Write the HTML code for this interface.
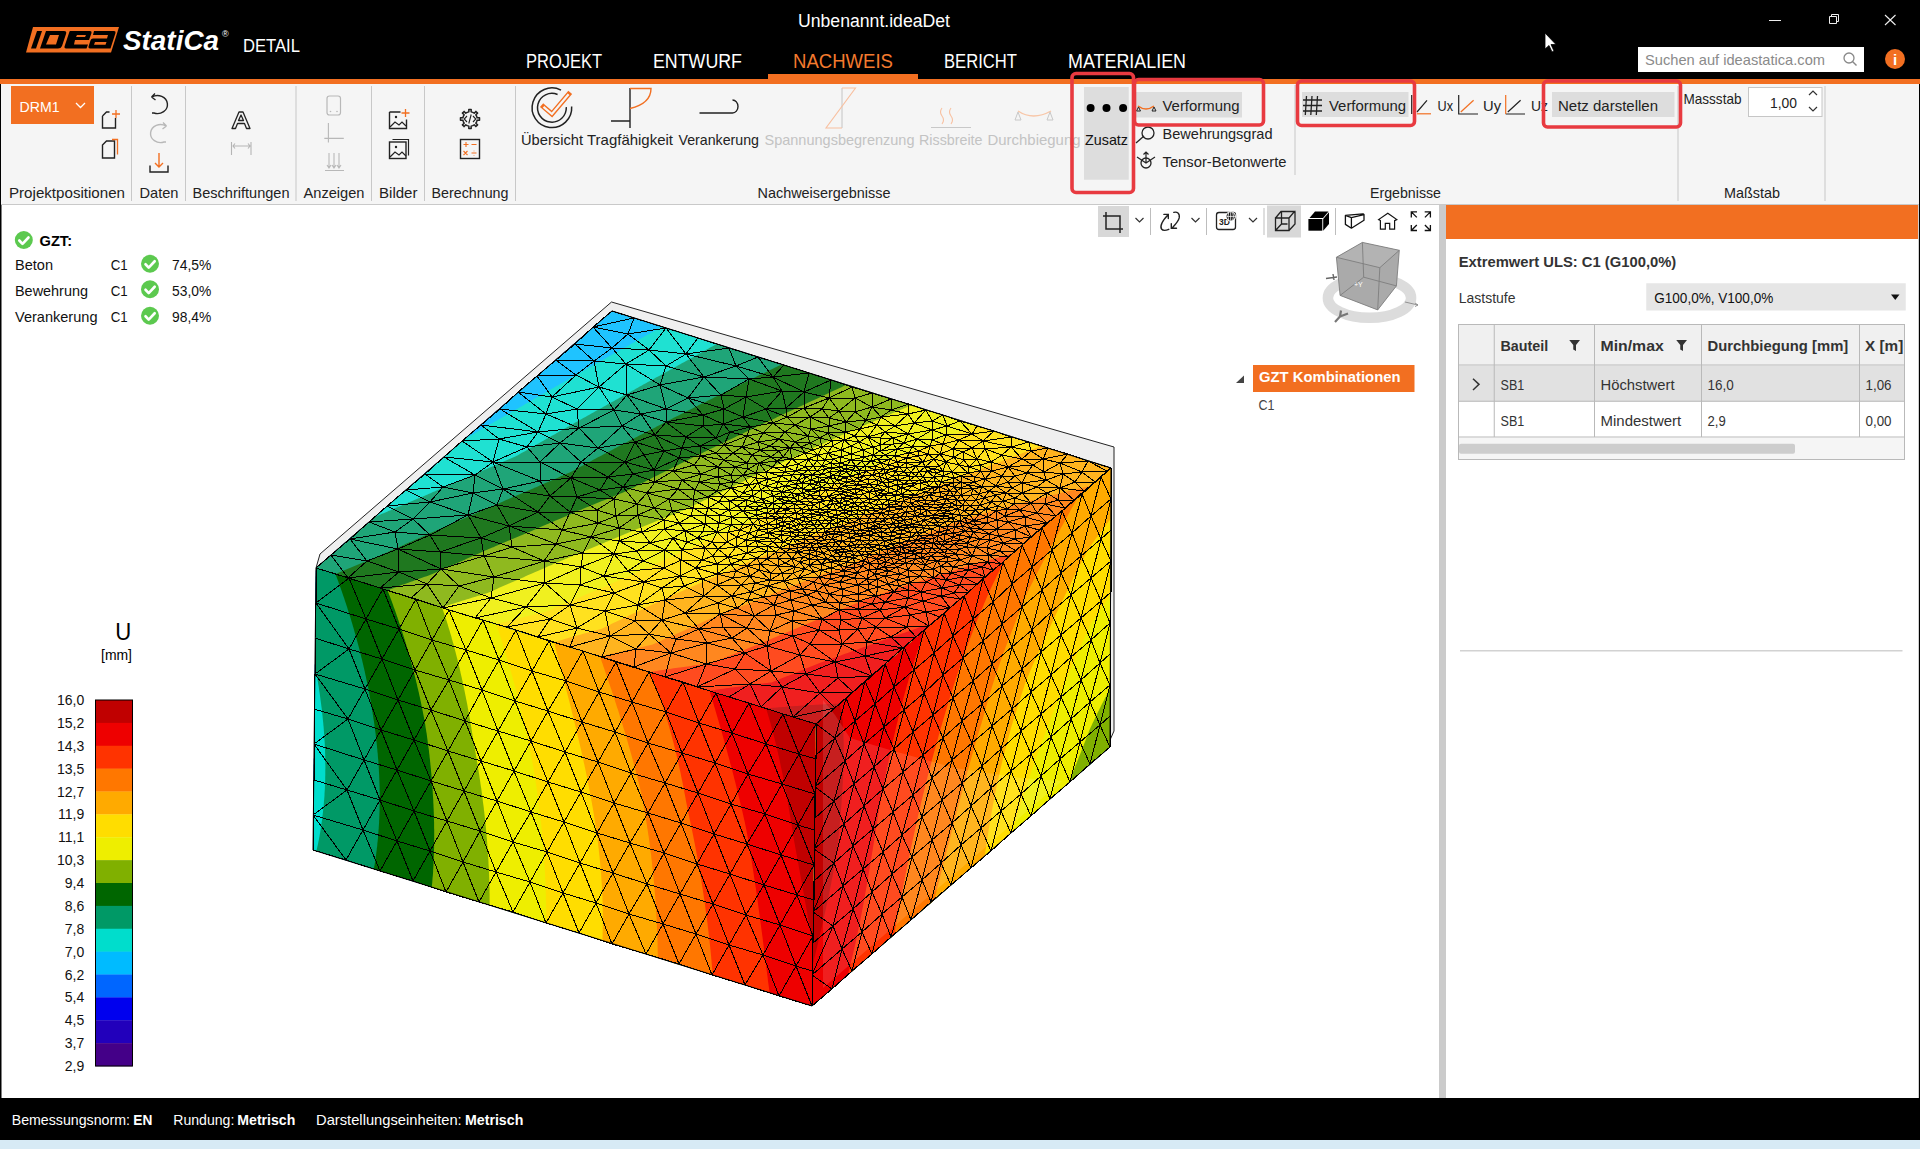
<!DOCTYPE html>
<html><head><meta charset="utf-8"><title>IDEA StatiCa Detail</title>
<style>html,body{margin:0;padding:0;background:#fff;overflow:hidden}svg{display:block}text{font-family:"Liberation Sans",sans-serif}</style>
</head><body>
<svg width="1920" height="1149" viewBox="0 0 1920 1149" font-family="Liberation Sans, sans-serif">
<rect x="0" y="0" width="1920" height="79" fill="#000"/>
<rect x="0" y="79" width="1920" height="5" fill="#f26f21"/>
<path d="M33,27 L119,27 L111,52.5 L26,52.5 Z" fill="#f26f21"/>
<g fill="#000"><path d="M37,31 L42,31 L36,48.5 L31,48.5 Z"/><path d="M46,31 L64,31 Q67,31 66,34 L62,46 Q61,48.5 58,48.5 L40,48.5 Z M50,35 L46,44.5 L56,44.5 L59,35 Z"/><path d="M70,31 L90,31 Q92,31 91.5,33 L89,40 L75,40 L74,44.5 L88,44.5 L86.5,48.5 L66,48.5 Q64,48.5 64.5,46.5 L69,33 Q69.5,31 70,31 Z M77,35 L76,37 L85,37 L86,35 Z"/><path d="M94,31 L114,31 Q116,31 115.5,33 L110.5,48.5 L90,48.5 Q88,48.5 88.5,46.5 L90.5,40.5 Q91,38.5 93,38.5 L107,38.5 L108,35 L93,35 Z M95,42 L94,44.8 L105.5,44.8 L106.5,42 Z"/></g>
<text x="123" y="50" font-size="27" font-weight="700" fill="#fff" textLength="96" lengthAdjust="spacingAndGlyphs" font-style="italic">StatiCa</text>
<text x="222" y="37" font-size="9" fill="#fff" >®</text>
<text x="243" y="51.5" font-size="18.5" fill="#fff" textLength="57" lengthAdjust="spacingAndGlyphs" >DETAIL</text>
<text x="798" y="26.5" font-size="18" fill="#fff" textLength="152" lengthAdjust="spacingAndGlyphs" >Unbenannt.ideaDet</text>
<text x="526" y="67.5" font-size="20" fill="#fff" textLength="76" lengthAdjust="spacingAndGlyphs" >PROJEKT</text>
<text x="653" y="67.5" font-size="20" fill="#fff" textLength="89" lengthAdjust="spacingAndGlyphs" >ENTWURF</text>
<text x="793" y="67.5" font-size="20" fill="#f47a2e" textLength="100" lengthAdjust="spacingAndGlyphs" >NACHWEIS</text>
<text x="944" y="67.5" font-size="20" fill="#fff" textLength="73" lengthAdjust="spacingAndGlyphs" >BERICHT</text>
<text x="1068" y="67.5" font-size="20" fill="#fff" textLength="118" lengthAdjust="spacingAndGlyphs" >MATERIALIEN</text>
<rect x="768" y="74" width="150" height="5" fill="#f26f21"/>
<path d="M1769,20.5 h12" stroke="#eee" stroke-width="1"/>
<path d="M1829.5,16.5 h7 v7 h-7 z M1831.5,16.5 v-2 h7 v7 h-2" stroke="#eee" stroke-width="1" fill="none"/>
<path d="M1885,15 l10.5,10 M1895.5,15 l-10.5,10" stroke="#eee" stroke-width="1.1"/>
<path d="M1545,33 L1545,49 L1549,45.5 L1552,52 L1554,51 L1551,44.5 L1556,44.5 Z" fill="#fff" stroke="#000" stroke-width="0.8"/>
<rect x="1638" y="47" width="226" height="25" fill="#fff"/>
<text x="1645" y="65" font-size="15" fill="#8a8a8a" textLength="180" lengthAdjust="spacingAndGlyphs" >Suchen auf ideastatica.com</text>
<circle cx="1849" cy="58" r="5" stroke="#888" stroke-width="1.3" fill="none"/><path d="M1852.5,61.5 l4,4" stroke="#888" stroke-width="1.4"/>
<circle cx="1895" cy="59" r="10" fill="#f26f21"/>
<text x="1895" y="65" font-size="15" font-weight="700" fill="#fff" text-anchor="middle">i</text>
<rect x="0" y="84" width="1920" height="120" fill="#f5f5f5"/>
<rect x="0" y="204" width="1920" height="1" fill="#c9c9c9"/>
<rect x="131.0" y="86" width="1" height="115" fill="#c8c8c8"/>
<rect x="185.0" y="86" width="1" height="115" fill="#c8c8c8"/>
<rect x="295.5" y="86" width="1" height="115" fill="#c8c8c8"/>
<rect x="371.0" y="86" width="1" height="115" fill="#c8c8c8"/>
<rect x="424.0" y="86" width="1" height="115" fill="#c8c8c8"/>
<rect x="515.0" y="86" width="1" height="115" fill="#c8c8c8"/>
<rect x="1294.5" y="85" width="1" height="90" fill="#c8c8c8"/>
<rect x="1677.5" y="86" width="1" height="115" fill="#c8c8c8"/>
<rect x="1824.5" y="86" width="1" height="115" fill="#c8c8c8"/>
<rect x="11" y="86" width="83" height="38" fill="#f26f21"/>
<text x="19.5" y="111.5" font-size="15" fill="#fff" textLength="40" lengthAdjust="spacingAndGlyphs" >DRM1</text>
<path d="M76,103 l4.5,4.5 l4.5,-4.5" stroke="#fff" stroke-width="1.3" fill="none"/>
<path d="M102.5,116 l4,-4 h3 M102.5,116 v12 h13 v-10" stroke="#222" stroke-width="1.4" fill="none"/>
<path d="M116,110 v8 M112,114 h8" stroke="#f26f21" stroke-width="1.3"/>
<path d="M102.5,145 l4,-4 h8 v17 h-12 z" stroke="#222" stroke-width="1.4" fill="none"/>
<path d="M112,139.5 h5.5 v15" stroke="#f26f21" stroke-width="1.3" fill="none"/>
<path d="M152,97 a10,9 0 1 1 2,16 h-2 M151.5,97 l3.5,-3.5 M151.5,97 l4,3" stroke="#222" stroke-width="1.4" fill="none"/>
<path d="M166,126 a10,9 0 1 0 -2,16 h2 M166.5,126 l-3.5,-3.5 M166.5,126 l-4,3" stroke="#b8b8b8" stroke-width="1.4" fill="none"/>
<path d="M159,153 v14 M155,163 l4,4 l4,-4" stroke="#f26f21" stroke-width="1.4" fill="none"/>
<path d="M150,165.5 v6.5 h18 v-6.5" stroke="#222" stroke-width="1.4" fill="none"/>
<path d="M232,128.5 L239,112 h4 L250,128.5 h-3.5 l-2,-5 h-7 l-2,5 Z M238.5,120.5 h5 l-2.5,-5.5 z" stroke="#222" stroke-width="1.3" fill="none" stroke-linejoin="round"/>
<path d="M231.5,142 v13 M251,142 v13 M233,146 h17 M235,143.5 l-2,2.5 l2,2.5 M248,143.5 l2,2.5 l-2,2.5" stroke="#b5b5b5" stroke-width="1.1" fill="none"/>
<rect x="327" y="96" width="13.5" height="19" rx="2.5" stroke="#b8b8b8" stroke-width="1.2" fill="none"/>
<path d="M328.4,123 v19.4 M324.3,138.4 h19.5" stroke="#b8b8b8" stroke-width="1.1"/><circle cx="330.5" cy="111.5" r="0.8" fill="#b8b8b8"/><circle cx="337" cy="111.5" r="0.8" fill="#b8b8b8"/>
<path d="M329,153 v15 M334,153 v15 M339,153 v15 M325,170.5 h19 M327,165 l2,3 l2,-3 M332,165 l2,3 l2,-3 M337,165 l2,3 l2,-3" stroke="#b8b8b8" stroke-width="1.1" fill="none"/>
<path d="M389.5,112 h11 M389.5,112 v16.5 h17 v-9" stroke="#222" stroke-width="1.4" fill="none"/><path d="M390,127 l5,-5 l4,3 l3,-3 l4,4" stroke="#222" stroke-width="1.2" fill="none"/><circle cx="396" cy="117" r="1.2" fill="#222"/>
<path d="M405.5,109 v8 M401.5,113 h8" stroke="#f26f21" stroke-width="1.3"/>
<rect x="389.5" y="142" width="16.5" height="16.5" stroke="#222" stroke-width="1.4" fill="none"/><path d="M392.5,139.5 h16 v16" stroke="#222" stroke-width="1.2" fill="none"/><path d="M390,157 l5,-5 l4,3 l3,-3 l4,4" stroke="#222" stroke-width="1.2" fill="none"/><circle cx="396" cy="147" r="1.2" fill="#222"/>
<path d="M476.65,116.24 L477.11,117.87 L479.52,117.80 L479.52,120.20 L477.11,120.13 L476.65,121.76 L475.82,123.23 L477.59,124.88 L475.88,126.59 L474.23,124.82 L472.76,125.65 L471.13,126.11 L471.20,128.52 L468.80,128.52 L468.87,126.11 L467.24,125.65 L465.77,124.82 L464.12,126.59 L462.41,124.88 L464.18,123.23 L463.35,121.76 L462.89,120.13 L460.48,120.20 L460.48,117.80 L462.89,117.87 L463.35,116.24 L464.18,114.77 L462.41,113.12 L464.12,111.41 L465.77,113.18 L467.24,112.35 L468.87,111.89 L468.80,109.48 L471.20,109.48 L471.13,111.89 L472.76,112.35 L474.23,113.18 L475.88,111.41 L477.59,113.12 L475.82,114.77Z" stroke="#222" stroke-width="1.5" fill="none" stroke-linejoin="round"/>
<path d="M467,116 l-2.8,3 l2.8,3 M473,116 l2.8,3 l-2.8,3 M471.2,114.5 l-2.4,9" stroke="#222" stroke-width="1.1" fill="none"/>
<rect x="460.5" y="139.5" width="19" height="19" stroke="#222" stroke-width="1.4" fill="none"/>
<path d="M463.5,144.5 h5 M466,142 v5 M471.5,144.5 h5 M463.5,151 l4,4 M467.5,151 l-4,4 M471.5,153 h5 M474,150.7 v0.6 M474,155 v0.6" stroke="#f26f21" stroke-width="1.1"/>
<text x="9" y="197.5" font-size="15" fill="#222" textLength="116" lengthAdjust="spacingAndGlyphs" >Projektpositionen</text>
<text x="139.5" y="197.5" font-size="15" fill="#222" textLength="39" lengthAdjust="spacingAndGlyphs" >Daten</text>
<text x="192.5" y="197.5" font-size="15" fill="#222" textLength="97" lengthAdjust="spacingAndGlyphs" >Beschriftungen</text>
<text x="303.5" y="197.5" font-size="15" fill="#222" textLength="61" lengthAdjust="spacingAndGlyphs" >Anzeigen</text>
<text x="379" y="197.5" font-size="15" fill="#222" textLength="38.5" lengthAdjust="spacingAndGlyphs" >Bilder</text>
<text x="431.5" y="197.5" font-size="15" fill="#222" textLength="77" lengthAdjust="spacingAndGlyphs" >Berechnung</text>
<text x="757.5" y="197.5" font-size="15" fill="#222" textLength="133" lengthAdjust="spacingAndGlyphs" >Nachweisergebnisse</text>
<text x="1370" y="197.5" font-size="15" fill="#222" textLength="71" lengthAdjust="spacingAndGlyphs" >Ergebnisse</text>
<text x="1724" y="197.5" font-size="15" fill="#222" textLength="56" lengthAdjust="spacingAndGlyphs" >Maßstab</text>
<path d="M571.66,106.47 A19.8,19.8 0 1 1 561.0,90.17 M566.29,107.12 A14.4,14.4 0 1 1 557.57,94.52" stroke="#222" stroke-width="1.5" fill="none"/>
<path d="M543.5,106.8 L551.9,114 L568.6,94.2" stroke="#f26f21" stroke-width="5" fill="none" stroke-linejoin="miter" stroke-linecap="square"/><path d="M543.5,106.8 L551.9,114 L568.6,94.2" stroke="#f5f5f5" stroke-width="2.2" fill="none" stroke-linejoin="miter"/>
<path d="M611,121 h19 M630,88 v40" stroke="#222" stroke-width="1.4" fill="none"/>
<path d="M630,88.5 h21 q0,15 -21,20" stroke="#f26f21" stroke-width="1.4" fill="none"/>
<path d="M699.5,113 h33 a5.5,6.5 0 0 0 0,-13" stroke="#222" stroke-width="1.4" fill="none"/>
<text x="521" y="145" font-size="15" fill="#222" textLength="62" lengthAdjust="spacingAndGlyphs" >Übersicht</text>
<text x="587" y="145" font-size="15" fill="#222" textLength="86" lengthAdjust="spacingAndGlyphs" >Tragfähigkeit</text>
<text x="678.5" y="145" font-size="15" fill="#222" textLength="80.5" lengthAdjust="spacingAndGlyphs" >Verankerung</text>
<path d="M842,88 v40" stroke="#c8c8c8" stroke-width="1.1" fill="none"/><path d="M842,88 h13.5 L826,128 h16" stroke="#f8c0a0" stroke-width="1.1" fill="none"/>
<path d="M931,127.5 h40" stroke="#c8c8c8" stroke-width="1.1" fill="none"/><path d="M942,108 q-3,4 0,8 t0,8 M951,108 q-3,4 0,8 t0,8" stroke="#f8c0a0" stroke-width="1.1" fill="none"/>
<path d="M1018,111 q15,10 33,0" stroke="#f8c6a7" stroke-width="1.4" fill="none"/><path d="M1018,112 l-3,8 h6 z M1050,112 l-3,8 h6 z" stroke="#c8c8c8" stroke-width="1" fill="none"/>
<text x="764.5" y="145" font-size="15" fill="#c3c3c3" textLength="150" lengthAdjust="spacingAndGlyphs" >Spannungsbegrenzung</text>
<text x="919" y="145" font-size="15" fill="#c3c3c3" textLength="63.5" lengthAdjust="spacingAndGlyphs" >Rissbreite</text>
<text x="987.5" y="145" font-size="15" fill="#c3c3c3" textLength="93" lengthAdjust="spacingAndGlyphs" >Durchbiegung</text>
<rect x="1084" y="87" width="44.75" height="92.75" fill="#dddddd"/>
<circle cx="1090.6" cy="108" r="4" fill="#000"/>
<circle cx="1106.5" cy="108" r="4" fill="#000"/>
<circle cx="1123.1" cy="108" r="4" fill="#000"/>
<text x="1085" y="145" font-size="15" fill="#111" textLength="43" lengthAdjust="spacingAndGlyphs" >Zusatz</text>
<rect x="1135" y="92" width="107" height="25.5" fill="#dddddd"/>
<path d="M1138,106 q8,6 16,0" stroke="#f26f21" stroke-width="1.5" fill="none"/><path d="M1138.5,107 l-2,4 h4 z M1154,107 l-2,4 h4 z" stroke="#222" stroke-width="1" fill="none"/>
<text x="1162.5" y="111" font-size="15" fill="#222" textLength="77" lengthAdjust="spacingAndGlyphs" >Verformung</text>
<circle cx="1148" cy="133" r="6" stroke="#222" stroke-width="1.3" fill="none"/><path d="M1136,143 l8,-7" stroke="#222" stroke-width="1.3"/>
<text x="1162.5" y="138.5" font-size="15" fill="#222" textLength="110" lengthAdjust="spacingAndGlyphs" >Bewehrungsgrad</text>
<circle cx="1146" cy="163" r="5" stroke="#222" stroke-width="1.3" fill="none"/><path d="M1146,152 v11 M1137,157 l9,6 l9,-6 M1143.5,154.5 l2.5,-2.5 l2.5,2.5" stroke="#222" stroke-width="1.2" fill="none"/>
<text x="1162.5" y="166.5" font-size="15" fill="#222" textLength="124" lengthAdjust="spacingAndGlyphs" >Tensor-Betonwerte</text>
<rect x="1302" y="92" width="106.5" height="25" fill="#dddddd"/>
<path d="M1306.5,96 l-1.2,19 M1312,96 l-1.2,19 M1317.5,96 l-1.2,19 M1303,100 h19 M1303,105.5 h19 M1303,111 h19" stroke="#222" stroke-width="1.3" fill="none"/>
<text x="1329" y="111" font-size="15" fill="#222" textLength="77" lengthAdjust="spacingAndGlyphs" >Verformung</text>
<path d="M1411.7,95 v19 M1417,112 l10,-11.7" stroke="#222" stroke-width="1.2" fill="none"/><path d="M1417,113.8 h14" stroke="#f26f21" stroke-width="1.2"/>
<text x="1437.5" y="111" font-size="15" fill="#222" textLength="15.5" lengthAdjust="spacingAndGlyphs" >Ux</text>
<path d="M1458.7,95 v19 h19.3" stroke="#222" stroke-width="1.2" fill="none"/><path d="M1460.8,112 l12.8,-11.7" stroke="#f26f21" stroke-width="1.2"/>
<text x="1483" y="111" font-size="15" fill="#222" textLength="18" lengthAdjust="spacingAndGlyphs" >Uy</text>
<path d="M1505.7,114 h19.3 M1507.8,112 l12.8,-11.7" stroke="#222" stroke-width="1.2" fill="none"/><path d="M1505.7,95 v19" stroke="#f26f21" stroke-width="1.2"/>
<text x="1531" y="111" font-size="15" fill="#222" textLength="17" lengthAdjust="spacingAndGlyphs" >Uz</text>
<rect x="1552" y="92" width="122.5" height="25" fill="#dddddd"/>
<text x="1558" y="111" font-size="15" fill="#222" textLength="100" lengthAdjust="spacingAndGlyphs" >Netz darstellen</text>
<text x="1683.5" y="103.5" font-size="15" fill="#222" textLength="58" lengthAdjust="spacingAndGlyphs" >Massstab</text>
<rect x="1748.5" y="87.5" width="73.5" height="29" fill="#fff" stroke="#c6c6c6" stroke-width="1"/>
<text x="1770" y="107.5" font-size="15" fill="#222" textLength="27" lengthAdjust="spacingAndGlyphs" >1,00</text>
<path d="M1809,95 l4,-4 l4,4 M1809,107 l4,4 l4,-4" stroke="#333" stroke-width="1.2" fill="none"/>
<rect x="1072" y="73.5" width="61.5" height="119.0" rx="4" fill="none" stroke="#e83a40" stroke-width="3.6"/>
<rect x="1134.5" y="79.5" width="129.0" height="45.5" rx="4" fill="none" stroke="#e83a40" stroke-width="3.6"/>
<rect x="1297.5" y="81" width="117.0" height="44.5" rx="4" fill="none" stroke="#e83a40" stroke-width="3.6"/>
<rect x="1543.5" y="81" width="137.0" height="46" rx="4" fill="none" stroke="#e83a40" stroke-width="3.6"/>
<rect x="0" y="205" width="1439" height="893" fill="#fff"/>
<rect x="0" y="205" width="1.5" height="893" fill="#000"/>
<circle cx="23.8" cy="240" r="9" fill="#5cc94f"/><path d="M19.3,240.5 l3.2,3.4 l6,-6.4" stroke="#fff" stroke-width="2.6" fill="none" stroke-linecap="round" stroke-linejoin="round"/>
<text x="39.5" y="245.5" font-size="15" font-weight="700" fill="#000" textLength="32.5" lengthAdjust="spacingAndGlyphs" >GZT:</text>
<text x="15" y="270" font-size="15" fill="#111" textLength="38" lengthAdjust="spacingAndGlyphs" >Beton</text>
<text x="110.75" y="270" font-size="15" fill="#111" textLength="17" lengthAdjust="spacingAndGlyphs" >C1</text>
<circle cx="150" cy="263.75" r="9" fill="#5cc94f"/><path d="M145.5,264.25 l3.2,3.4 l6,-6.4" stroke="#fff" stroke-width="2.6" fill="none" stroke-linecap="round" stroke-linejoin="round"/>
<text x="172" y="270" font-size="15" fill="#111" textLength="39.25" lengthAdjust="spacingAndGlyphs" >74,5%</text>
<text x="15" y="295.5" font-size="15" fill="#111" textLength="73" lengthAdjust="spacingAndGlyphs" >Bewehrung</text>
<text x="110.75" y="295.5" font-size="15" fill="#111" textLength="17" lengthAdjust="spacingAndGlyphs" >C1</text>
<circle cx="150" cy="289.25" r="9" fill="#5cc94f"/><path d="M145.5,289.75 l3.2,3.4 l6,-6.4" stroke="#fff" stroke-width="2.6" fill="none" stroke-linecap="round" stroke-linejoin="round"/>
<text x="172" y="295.5" font-size="15" fill="#111" textLength="39.25" lengthAdjust="spacingAndGlyphs" >53,0%</text>
<text x="15" y="322" font-size="15" fill="#111" textLength="82.5" lengthAdjust="spacingAndGlyphs" >Verankerung</text>
<text x="110.75" y="322" font-size="15" fill="#111" textLength="17" lengthAdjust="spacingAndGlyphs" >C1</text>
<circle cx="150" cy="315.75" r="9" fill="#5cc94f"/><path d="M145.5,316.25 l3.2,3.4 l6,-6.4" stroke="#fff" stroke-width="2.6" fill="none" stroke-linecap="round" stroke-linejoin="round"/>
<text x="172" y="322" font-size="15" fill="#111" textLength="39.25" lengthAdjust="spacingAndGlyphs" >98,4%</text>
<text x="115.3" y="640" font-size="23" fill="#000" textLength="16" lengthAdjust="spacingAndGlyphs" >U</text>
<text x="101" y="660" font-size="14" fill="#000" textLength="31" lengthAdjust="spacingAndGlyphs" >[mm]</text>
<rect x="95.5" y="700.00" width="37" height="23.18" fill="#c00000"/>
<rect x="95.5" y="722.88" width="37" height="23.18" fill="#ee0000"/>
<rect x="95.5" y="745.75" width="37" height="23.18" fill="#ff3300"/>
<rect x="95.5" y="768.62" width="37" height="23.18" fill="#ff7700"/>
<rect x="95.5" y="791.50" width="37" height="23.18" fill="#ffaa00"/>
<rect x="95.5" y="814.38" width="37" height="23.18" fill="#ffdd00"/>
<rect x="95.5" y="837.25" width="37" height="23.18" fill="#eeee00"/>
<rect x="95.5" y="860.12" width="37" height="23.18" fill="#80b000"/>
<rect x="95.5" y="883.00" width="37" height="23.18" fill="#006600"/>
<rect x="95.5" y="905.88" width="37" height="23.18" fill="#009966"/>
<rect x="95.5" y="928.75" width="37" height="23.18" fill="#00ddcc"/>
<rect x="95.5" y="951.62" width="37" height="23.18" fill="#00bbff"/>
<rect x="95.5" y="974.50" width="37" height="23.18" fill="#0066ff"/>
<rect x="95.5" y="997.38" width="37" height="23.18" fill="#0000ee"/>
<rect x="95.5" y="1020.25" width="37" height="23.18" fill="#2200bb"/>
<rect x="95.5" y="1043.12" width="37" height="23.18" fill="#440088"/>
<rect x="95.5" y="700" width="37" height="366" fill="none" stroke="#000" stroke-width="1"/>
<text x="84.3" y="705.00" font-size="14" fill="#111" text-anchor="end" >16,0</text>
<text x="84.3" y="727.88" font-size="14" fill="#111" text-anchor="end" >15,2</text>
<text x="84.3" y="750.75" font-size="14" fill="#111" text-anchor="end" >14,3</text>
<text x="84.3" y="773.62" font-size="14" fill="#111" text-anchor="end" >13,5</text>
<text x="84.3" y="796.50" font-size="14" fill="#111" text-anchor="end" >12,7</text>
<text x="84.3" y="819.38" font-size="14" fill="#111" text-anchor="end" >11,9</text>
<text x="84.3" y="842.25" font-size="14" fill="#111" text-anchor="end" >11,1</text>
<text x="84.3" y="865.12" font-size="14" fill="#111" text-anchor="end" >10,3</text>
<text x="84.3" y="888.00" font-size="14" fill="#111" text-anchor="end" >9,4</text>
<text x="84.3" y="910.88" font-size="14" fill="#111" text-anchor="end" >8,6</text>
<text x="84.3" y="933.75" font-size="14" fill="#111" text-anchor="end" >7,8</text>
<text x="84.3" y="956.62" font-size="14" fill="#111" text-anchor="end" >7,0</text>
<text x="84.3" y="979.50" font-size="14" fill="#111" text-anchor="end" >6,2</text>
<text x="84.3" y="1002.38" font-size="14" fill="#111" text-anchor="end" >5,4</text>
<text x="84.3" y="1025.25" font-size="14" fill="#111" text-anchor="end" >4,5</text>
<text x="84.3" y="1048.12" font-size="14" fill="#111" text-anchor="end" >3,7</text>
<text x="84.3" y="1071.00" font-size="14" fill="#111" text-anchor="end" >2,9</text>
<path d="M1236,383 L1244,375.5 L1244,383 Z" fill="#444"/>
<rect x="1253" y="365" width="161.5" height="27" fill="#f26f21"/>
<text x="1259" y="382.3" font-size="15" font-weight="700" fill="#fff" textLength="141.5" lengthAdjust="spacingAndGlyphs" >GZT Kombinationen</text>
<text x="1258.5" y="409.7" font-size="15" fill="#444" textLength="16" lengthAdjust="spacingAndGlyphs" >C1</text>
<rect x="1098" y="206" width="31" height="31" fill="#d8d8d8"/>
<rect x="1267" y="205.5" width="34" height="32" fill="#d8d8d8"/>
<rect x="1150.0" y="208" width="1" height="27" fill="#bdbdbd"/>
<rect x="1206.0" y="208" width="1" height="27" fill="#bdbdbd"/>
<rect x="1263.5" y="208" width="1" height="27" fill="#bdbdbd"/>
<rect x="1335.0" y="208" width="1" height="27" fill="#bdbdbd"/>
<path d="M1106,212 v17 h17 M1103,216 h17 v17" stroke="#222" stroke-width="1.5" fill="none"/>
<path d="M1135.5,218 l4,4 l4,-4" stroke="#333" stroke-width="1.2" fill="none"/>
<path d="M1191.5,218 l4,4 l4,-4" stroke="#333" stroke-width="1.2" fill="none"/>
<path d="M1249,218 l4,4 l4,-4" stroke="#333" stroke-width="1.2" fill="none"/>
<path d="M1168.3,214.4 C1164,219 1159,225 1161.5,229 C1163,231 1166,230.5 1168.8,229.3 M1163.9,214.4 H1168.3 V218.6 M1173.8,212.4 C1177,211.5 1180,213 1179.2,217.9 C1178.5,221.5 1175,225 1171.8,228.3 M1171.3,223.6 V228.3 H1176.5" stroke="#222" stroke-width="1.4" fill="none" stroke-linecap="round"/>
<rect x="1216.5" y="212.5" width="19" height="17" rx="2.5" stroke="#222" stroke-width="1.3" fill="none"/>
<text x="1219" y="224.5" font-size="8.5" font-weight="700" fill="#222">3D</text>
<circle cx="1230.7" cy="216.4" r="5.2" fill="#fff"/><circle cx="1230.7" cy="216.4" r="4.2" fill="#111"/><path d="M1230.7,212.2 v8.4 M1226.5,216.4 h8.4 M1228.7,212.7 q-1.5,3.7 0,7.4 M1232.7,212.7 q1.5,3.7 0,7.4" stroke="#fff" stroke-width="0.8" fill="none"/>
<path d="M1275.5,218 h13.5 v12.5 h-13.5 z M1275.5,218 l5.5,-6.5 h13.5 l-5.5,6.5 M1295,211.5 v12.5 l-6,6.5 M1281.5,211.5 V224 H1287.5 M1281.5,224 L1275.5,230.5" stroke="#222" stroke-width="1.3" fill="none"/>
<path d="M1308.4,219 h13.9 v11.7 h-13.9 z" fill="#000"/><path d="M1309.5,218 l5.5,-6.6 h13.5 l-5.5,6.6 z" fill="#000"/><path d="M1323.2,230.7 v-11.8 l5.8,-6.6 v11.6 z" fill="#000"/>
<path d="M1345.4,215.4 L1363,213.8 L1364,214.6 V220.3 L1351.4,228.2 L1345.4,224.4 Z M1345.4,215.4 L1351.4,217.6 L1364,214.6 M1351.4,217.6 V228.2" stroke="#111" stroke-width="1.3" fill="none" stroke-linejoin="round"/>
<path d="M1387.8,213.2 L1378.6,219.6 L1380.4,220.6 V229.2 H1385.3 V223.3 H1389.7 V229.2 H1394.6 V220.6 L1396.8,219.6 Z" stroke="#111" stroke-width="1.2" fill="none" stroke-linejoin="miter"/>
<path d="M1411.3,217.6 V211.9 H1417 M1411.3,211.9 L1416.8,217.4 M1430.4,217.6 V211.9 H1424.7 M1430.4,211.9 L1424.9,217.4 M1411.3,225 V230.5 H1417 M1411.3,230.5 L1416.8,225 M1430.4,225 V230.5 H1424.7 M1430.4,230.5 L1424.9,225" stroke="#111" stroke-width="1.3" fill="none"/>
<ellipse cx="1369.5" cy="297.9" rx="41.6" ry="19.9" fill="none" stroke="#dcdcdc" stroke-width="10.5"/>
<path d="M1336.4,257.3 L1362.4,242.4 L1399.3,250.3 L1396.4,285.9 L1377.7,309.9 L1340.1,295.4 Z" fill="#aaaaaa"/>
<path d="M1336.4,257.3 L1362.4,242.4 L1399.3,250.3 L1379.8,267.7 Z" fill="#b3b3b3"/>
<path d="M1336.4,257.3 L1362.4,242.4 L1399.3,250.3 L1396.4,285.9 L1377.7,309.9 L1340.1,295.4 Z M1336.4,257.3 L1379.8,267.7 L1399.3,250.3 M1379.8,267.7 L1377.7,309.9 M1362.4,242.4 L1363.7,277.2 L1340.1,295.4 M1363.7,277.2 L1396.4,285.9" stroke="#7e7e7e" stroke-width="0.9" fill="none"/>
<path d="M1335,322 l5,-5.5 l1,-6 M1340,316.5 l8,-3" stroke="#777" stroke-width="2.2" fill="none"/>
<path d="M1405,302 l13,3 l-3,-2 M1418,305 l-3,1.5" stroke="#888" stroke-width="0.9" fill="none"/><path d="M1326,278.5 l11,-1.5 M1333,274 l1,6" stroke="#666" stroke-width="1.4"/>
<text x="1354" y="287" font-size="7" fill="#fff">+Y</text>
<rect x="1439" y="205" width="7" height="893" fill="#cbcbcb"/>
<rect x="1446" y="205" width="472" height="893" fill="#fff"/>
<rect x="1918" y="205" width="1" height="893" fill="#d0d0d0"/>
<rect x="1446" y="205" width="472" height="34" fill="#f26f21"/>
<text x="1458.75" y="267" font-size="15" font-weight="700" fill="#333" textLength="217.5" lengthAdjust="spacingAndGlyphs" >Extremwert ULS: C1 (G100,0%)</text>
<text x="1458.75" y="302.5" font-size="15" fill="#333" textLength="56.75" lengthAdjust="spacingAndGlyphs" >Laststufe</text>
<rect x="1646.25" y="283.25" width="259.5" height="27.25" fill="#e6e6e6"/>
<text x="1654.25" y="302.5" font-size="15" fill="#111" textLength="119" lengthAdjust="spacingAndGlyphs" >G100,0%, V100,0%</text>
<path d="M1891,294.5 h8.5 l-4.25,5.5 z" fill="#111"/>
<rect x="1458.5" y="324.5" width="446" height="135" fill="#fff" stroke="#b9b9b9" stroke-width="1"/>
<rect x="1459" y="325" width="445" height="40" fill="#f0f0f0"/>
<rect x="1459" y="365.5" width="445" height="36" fill="#e1e1e1"/>
<rect x="1459" y="437.5" width="445" height="21.5" fill="#f5f5f5"/>
<rect x="1459" y="443.75" width="336" height="10" rx="2" fill="#cdcdcd"/>
<rect x="1459" y="364.5" width="445" height="1" fill="#b9b9b9"/>
<rect x="1459" y="400.75" width="445" height="1" fill="#b9b9b9"/>
<rect x="1459" y="436.5" width="445" height="1" fill="#b9b9b9"/>
<rect x="1493.75" y="325" width="1" height="112" fill="#b9b9b9"/>
<rect x="1594.0" y="325" width="1" height="112" fill="#b9b9b9"/>
<rect x="1701.0" y="325" width="1" height="112" fill="#b9b9b9"/>
<rect x="1859.0" y="325" width="1" height="112" fill="#b9b9b9"/>
<text x="1500.5" y="350.75" font-size="15" font-weight="700" fill="#333" textLength="47.75" lengthAdjust="spacingAndGlyphs" >Bauteil</text>
<path d="M1569.25,340 h10.75 l-4,5 v6 l-2.75,-1.5 v-4.5 z" fill="#333"/>
<text x="1600.5" y="350.75" font-size="15" font-weight="700" fill="#333" textLength="63.25" lengthAdjust="spacingAndGlyphs" >Min/max</text>
<path d="M1676.25,340 h10.75 l-4,5 v6 l-2.75,-1.5 v-4.5 z" fill="#333"/>
<text x="1707.5" y="350.75" font-size="15" font-weight="700" fill="#333" textLength="140.75" lengthAdjust="spacingAndGlyphs" >Durchbiegung [mm]</text>
<text x="1865" y="350.75" font-size="15" font-weight="700" fill="#333" textLength="38.25" lengthAdjust="spacingAndGlyphs" >X [m]</text>
<path d="M1473,378.75 l6,5.6 l-6,5.6" stroke="#333" stroke-width="1.5" fill="none"/>
<text x="1500.5" y="390" font-size="15" fill="#333" textLength="23.75" lengthAdjust="spacingAndGlyphs" >SB1</text>
<text x="1600.5" y="390" font-size="15" fill="#333" textLength="74" lengthAdjust="spacingAndGlyphs" >Höchstwert</text>
<text x="1707.5" y="390" font-size="15" fill="#333" textLength="26.25" lengthAdjust="spacingAndGlyphs" >16,0</text>
<text x="1865.5" y="390" font-size="15" fill="#333" textLength="26" lengthAdjust="spacingAndGlyphs" >1,06</text>
<text x="1500.5" y="426.25" font-size="15" fill="#333" textLength="23.75" lengthAdjust="spacingAndGlyphs" >SB1</text>
<text x="1600.5" y="426.25" font-size="15" fill="#333" textLength="80.75" lengthAdjust="spacingAndGlyphs" >Mindestwert</text>
<text x="1707.5" y="426.25" font-size="15" fill="#333" textLength="18.25" lengthAdjust="spacingAndGlyphs" >2,9</text>
<text x="1865.5" y="426.25" font-size="15" fill="#333" textLength="26" lengthAdjust="spacingAndGlyphs" >0,00</text>
<rect x="1460" y="650" width="442.5" height="1.5" fill="#d2d2d2"/>
<rect x="0" y="84" width="1" height="1014" fill="#000"/>
<rect x="1919" y="84" width="1" height="1014" fill="#000"/>
<rect x="0" y="1098" width="1920" height="42" fill="#000"/>
<rect x="0" y="1140" width="1920" height="9" fill="#d7eaf5"/>
<text x="11.7" y="1125" font-size="15" fill="#fff" textLength="118.3" lengthAdjust="spacingAndGlyphs" >Bemessungsnorm:</text>
<text x="133.3" y="1125" font-size="15" font-weight="700" fill="#fff" textLength="19" lengthAdjust="spacingAndGlyphs" >EN</text>
<text x="173.3" y="1125" font-size="15" fill="#fff" textLength="61" lengthAdjust="spacingAndGlyphs" >Rundung:</text>
<text x="237.3" y="1125" font-size="15" font-weight="700" fill="#fff" textLength="58" lengthAdjust="spacingAndGlyphs" >Metrisch</text>
<text x="316" y="1125" font-size="15" fill="#fff" textLength="145.7" lengthAdjust="spacingAndGlyphs" >Darstellungseinheiten:</text>
<text x="465" y="1125" font-size="15" font-weight="700" fill="#fff" textLength="58.3" lengthAdjust="spacingAndGlyphs" >Metrisch</text>
<path d="M320,554 L611.5,302 L1114,447 L1114,731 L1110,740 L1111,468 L612,311 L316,568 Z" fill="#efefef" stroke="#222" stroke-width="1"/>
<path d="M313.0,850.0 L812.0,1006.0 L816.0,724.0 L316.0,568.0Z" fill="#00ddcc"/>
<path d="M313.0,850.0 L812.0,1006.0 L816.0,724.0 L316.0,568.0Z" fill="#2200bb"/>
<path d="M313.0,850.0 L812.0,1006.0 L816.0,724.0 L316.0,568.0Z" fill="#0000ee"/>
<path d="M313.0,850.0 L812.0,1006.0 L816.0,724.0 L316.0,568.0Z" fill="#0066ff"/>
<path d="M313.0,850.0 L812.0,1006.0 L816.0,724.0 L316.0,568.0Z" fill="#00bbff"/>
<path d="M313.0,850.0 L812.0,1006.0 L816.0,724.0 L316.0,568.0Z" fill="#00ddcc"/>
<path d="M318.0,851.6L320.5,852.4L323.0,853.1L325.5,853.9L328.0,854.7L330.6,855.5L333.1,856.3L335.6,857.1L338.1,857.8L340.6,858.6L343.1,859.4L345.6,860.2L348.1,861.0L350.6,861.8L353.1,862.5L355.6,863.3L358.1,864.1L360.6,864.9L363.2,865.7L365.7,866.5L368.2,867.2L370.7,868.0L373.2,868.8L375.7,869.6L378.2,870.4L380.7,871.2L383.2,871.9L385.7,872.7L388.2,873.5L390.7,874.3L393.2,875.1L395.7,875.9L398.3,876.7L400.8,877.4L403.3,878.2L405.8,879.0L408.3,879.8L410.8,880.6L413.3,881.4L415.8,882.1L418.3,882.9L420.8,883.7L423.3,884.5L425.8,885.3L428.3,886.1L430.9,886.8L433.4,887.6L435.9,888.4L438.4,889.2L440.9,890.0L443.4,890.8L445.9,891.5L448.4,892.3L450.9,893.1L453.4,893.9L455.9,894.7L458.4,895.5L460.9,896.3L463.5,897.0L466.0,897.8L468.5,898.6L471.0,899.4L473.5,900.2L476.0,901.0L478.5,901.7L481.0,902.5L483.5,903.3L486.0,904.1L488.5,904.9L491.0,905.7L493.5,906.4L496.1,907.2L498.6,908.0L501.1,908.8L503.6,909.6L506.1,910.4L508.6,911.1L511.1,911.9L513.6,912.7L516.1,913.5L518.6,914.3L521.1,915.1L523.6,915.8L526.1,916.6L528.6,917.4L531.2,918.2L533.7,919.0L536.2,919.8L538.7,920.6L541.2,921.3L543.7,922.1L546.2,922.9L548.7,923.7L551.2,924.5L553.7,925.3L556.2,926.0L558.7,926.8L561.2,927.6L563.8,928.4L566.3,929.2L568.8,930.0L571.3,930.7L573.8,931.5L576.3,932.3L578.8,933.1L581.3,933.9L583.8,934.7L586.3,935.4L588.8,936.2L591.3,937.0L593.8,937.8L596.4,938.6L598.9,939.4L601.4,940.2L603.9,940.9L606.4,941.7L608.9,942.5L611.4,943.3L613.9,944.1L616.4,944.9L618.9,945.6L621.4,946.4L623.9,947.2L626.4,948.0L628.9,948.8L631.5,949.6L634.0,950.3L636.5,951.1L639.0,951.9L641.5,952.7L644.0,953.5L646.5,954.3L649.0,955.0L651.5,955.8L654.0,956.6L656.5,957.4L659.0,958.2L661.5,959.0L664.1,959.7L666.6,960.5L669.1,961.3L671.6,962.1L674.1,962.9L676.6,963.7L679.1,964.5L681.6,965.2L684.1,966.0L686.6,966.8L689.1,967.6L691.6,968.4L694.1,969.2L696.7,969.9L699.2,970.7L701.7,971.5L704.2,972.3L706.7,973.1L709.2,973.9L711.7,974.6L714.2,975.4L716.7,976.2L719.2,977.0L721.7,977.8L724.2,978.6L726.7,979.3L729.3,980.1L731.8,980.9L734.3,981.7L736.8,982.5L739.3,983.3L741.8,984.1L744.3,984.8L746.8,985.6L749.3,986.4L751.8,987.2L754.3,988.0L756.8,988.8L759.3,989.5L761.8,990.3L764.4,991.1L766.9,991.9L769.4,992.7L771.9,993.5L774.4,994.2L776.9,995.0L779.4,995.8L781.9,996.6L784.4,997.4L786.9,998.2L789.4,998.9L791.9,999.7L794.4,1000.5L797.0,1001.3L799.5,1002.1L802.0,1002.9L804.5,1003.6L807.0,1004.4L809.5,1005.2L812.0,1006.0L812.0,1004.6L812.0,1003.2L812.1,1001.7L812.1,1000.3L812.1,998.9L812.1,997.5L812.1,996.1L812.2,994.7L812.2,993.2L812.2,991.8L812.2,990.4L812.2,989.0L812.3,987.6L812.3,986.2L812.3,984.7L812.3,983.3L812.3,981.9L812.4,980.5L812.4,979.1L812.4,977.7L812.4,976.2L812.4,974.8L812.5,973.4L812.5,972.0L812.5,970.6L812.5,969.2L812.5,967.7L812.6,966.3L812.6,964.9L812.6,963.5L812.6,962.1L812.6,960.7L812.7,959.2L812.7,957.8L812.7,956.4L812.7,955.0L812.7,953.6L812.8,952.2L812.8,950.7L812.8,949.3L812.8,947.9L812.8,946.5L812.9,945.1L812.9,943.6L812.9,942.2L812.9,940.8L812.9,939.4L813.0,938.0L813.0,936.6L813.0,935.1L813.0,933.7L813.0,932.3L813.1,930.9L813.1,929.5L813.1,928.1L813.1,926.6L813.1,925.2L813.2,923.8L813.2,922.4L813.2,921.0L813.2,919.6L813.2,918.1L813.3,916.7L813.3,915.3L813.3,913.9L813.3,912.5L813.3,911.1L813.4,909.6L813.4,908.2L813.4,906.8L813.4,905.4L813.4,904.0L813.5,902.6L813.5,901.1L813.5,899.7L813.5,898.3L813.5,896.9L813.6,895.5L813.6,894.1L813.6,892.6L813.6,891.2L813.6,889.8L813.7,888.4L813.7,887.0L813.7,885.5L813.7,884.1L813.7,882.7L813.8,881.3L813.8,879.9L813.8,878.5L813.8,877.0L813.8,875.6L813.9,874.2L813.9,872.8L813.9,871.4L813.9,870.0L813.9,868.5L814.0,867.1L814.0,865.7L814.0,864.3L814.0,862.9L814.1,861.5L814.1,860.0L814.1,858.6L814.1,857.2L814.1,855.8L814.2,854.4L814.2,853.0L814.2,851.5L814.2,850.1L814.2,848.7L814.3,847.3L814.3,845.9L814.3,844.5L814.3,843.0L814.3,841.6L814.4,840.2L814.4,838.8L814.4,837.4L814.4,835.9L814.4,834.5L814.5,833.1L814.5,831.7L814.5,830.3L814.5,828.9L814.5,827.4L814.6,826.0L814.6,824.6L814.6,823.2L814.6,821.8L814.6,820.4L814.7,818.9L814.7,817.5L814.7,816.1L814.7,814.7L814.7,813.3L814.8,811.9L814.8,810.4L814.8,809.0L814.8,807.6L814.8,806.2L814.9,804.8L814.9,803.4L814.9,801.9L814.9,800.5L814.9,799.1L815.0,797.7L815.0,796.3L815.0,794.9L815.0,793.4L815.0,792.0L815.1,790.6L815.1,789.2L815.1,787.8L815.1,786.4L815.1,784.9L815.2,783.5L815.2,782.1L815.2,780.7L815.2,779.3L815.2,777.8L815.3,776.4L815.3,775.0L815.3,773.6L815.3,772.2L815.3,770.8L815.4,769.3L815.4,767.9L815.4,766.5L815.4,765.1L815.4,763.7L815.5,762.3L815.5,760.8L815.5,759.4L815.5,758.0L815.5,756.6L815.6,755.2L815.6,753.8L815.6,752.3L815.6,750.9L815.6,749.5L815.7,748.1L815.7,746.7L815.7,745.3L815.7,743.8L815.7,742.4L815.8,741.0L815.8,739.6L815.8,738.2L815.8,736.8L815.8,735.3L815.9,733.9L815.9,732.5L815.9,731.1L815.9,729.7L815.9,728.3L816.0,726.8L816.0,725.4L816.0,724.0L813.5,723.2L811.0,722.4L808.5,721.6L805.9,720.9L803.4,720.1L800.9,719.3L798.4,718.5L795.9,717.7L793.4,716.9L790.9,716.2L788.4,715.4L785.8,714.6L783.3,713.8L780.8,713.0L778.3,712.2L775.8,711.5L773.3,710.7L770.8,709.9L768.3,709.1L765.7,708.3L763.2,707.5L760.7,706.8L758.2,706.0L755.7,705.2L753.2,704.4L750.7,703.6L748.2,702.8L745.6,702.1L743.1,701.3L740.6,700.5L738.1,699.7L735.6,698.9L733.1,698.1L730.6,697.3L728.1,696.6L725.5,695.8L723.0,695.0L720.5,694.2L718.0,693.4L715.5,692.6L713.0,691.9L710.5,691.1L708.0,690.3L705.4,689.5L702.9,688.7L700.4,687.9L697.9,687.2L695.4,686.4L692.9,685.6L690.4,684.8L687.9,684.0L685.3,683.2L682.8,682.5L680.3,681.7L677.8,680.9L675.3,680.1L672.8,679.3L670.3,678.5L667.8,677.7L665.2,677.0L662.7,676.2L660.2,675.4L657.7,674.6L655.2,673.8L652.7,673.0L650.2,672.3L647.7,671.5L645.1,670.7L642.6,669.9L640.1,669.1L637.6,668.3L635.1,667.6L632.6,666.8L630.1,666.0L627.6,665.2L625.0,664.4L622.5,663.6L620.0,662.9L617.5,662.1L615.0,661.3L612.5,660.5L610.0,659.7L607.5,658.9L604.9,658.2L602.4,657.4L599.9,656.6L597.4,655.8L594.9,655.0L592.4,654.2L589.9,653.4L587.4,652.7L584.8,651.9L582.3,651.1L579.8,650.3L577.3,649.5L574.8,648.7L572.3,648.0L569.8,647.2L567.3,646.4L564.7,645.6L562.2,644.8L559.7,644.0L557.2,643.3L554.7,642.5L552.2,641.7L549.7,640.9L547.2,640.1L544.6,639.3L542.1,638.6L539.6,637.8L537.1,637.0L534.6,636.2L532.1,635.4L529.6,634.6L527.1,633.8L524.5,633.1L522.0,632.3L519.5,631.5L517.0,630.7L514.5,629.9L512.0,629.1L509.5,628.4L507.0,627.6L504.4,626.8L501.9,626.0L499.4,625.2L496.9,624.4L494.4,623.7L491.9,622.9L489.4,622.1L486.9,621.3L484.3,620.5L481.8,619.7L479.3,619.0L476.8,618.2L474.3,617.4L471.8,616.6L469.3,615.8L466.8,615.0L464.2,614.3L461.7,613.5L459.2,612.7L456.7,611.9L454.2,611.1L451.7,610.3L449.2,609.5L446.7,608.8L444.1,608.0L441.6,607.2L439.1,606.4L436.6,605.6L434.1,604.8L431.6,604.1L429.1,603.3L426.6,602.5L424.0,601.7L421.5,600.9L419.0,600.1L416.5,599.4L414.0,598.6L411.5,597.8L409.0,597.0L406.5,596.2L403.9,595.4L401.4,594.7L398.9,593.9L396.4,593.1L393.9,592.3L391.4,591.5L388.9,590.7L386.4,589.9L383.8,589.2L381.3,588.4L378.8,587.6L376.3,586.8L373.8,586.0L371.3,585.2L368.8,584.5L366.3,583.7L363.7,582.9L361.2,582.1L358.7,581.3L356.2,580.5L353.7,579.8L351.2,579.0L348.7,578.2L346.2,577.4L343.6,576.6L341.1,575.8L338.6,575.1L336.1,574.3L333.6,573.5L331.1,572.7L328.6,571.9L326.1,571.1L323.5,570.4L321.0,569.6L318.5,568.8L316.0,568.0L316.0,569.4L316.0,570.8L316.0,572.3L315.9,573.7L315.9,575.1L315.9,576.5L315.9,577.9L315.9,579.3L315.9,580.8L315.8,582.2L315.8,583.6L315.8,585.0L315.8,586.4L315.8,587.8L315.8,589.3L315.8,590.7L315.7,592.1L315.7,593.5L315.7,594.9L315.7,596.3L315.7,597.8L315.7,599.2L315.7,600.6L315.6,602.0L315.6,603.4L315.6,604.8L315.6,606.3L315.6,607.7L315.6,609.1L315.5,610.5L315.5,611.9L315.5,613.3L315.5,614.8L315.5,616.2L315.5,617.6L315.5,619.0L315.4,620.4L315.4,621.8L315.4,623.3L315.4,624.7L315.4,626.1L315.4,627.5L315.4,628.9L315.3,630.4L315.3,631.8L315.3,633.2L315.3,634.6L315.3,636.0L315.3,637.4L315.2,638.9L315.2,640.3L315.2,641.7L315.2,643.1L315.2,644.5L315.2,645.9L315.2,647.4L315.1,648.8L315.1,650.2L315.1,651.6L315.1,653.0L315.1,654.4L315.1,655.9L315.1,657.3L315.0,658.7L315.0,660.1L315.0,661.5L315.0,662.9L315.0,664.4L315.0,665.5L315.0,665.8L315.3,667.3L315.6,668.8L315.9,670.3L316.2,671.8L316.4,673.3L316.7,674.8L317.0,676.4L317.2,677.9L317.3,678.6L317.5,679.4L317.7,680.9L318.0,682.4L318.2,683.9L318.4,685.3L318.7,686.8L318.9,688.3L319.1,689.8L319.3,691.3L319.6,692.8L319.7,693.8L319.8,694.3L320.0,695.8L320.2,697.3L320.4,698.8L320.6,700.2L320.8,701.7L321.0,703.2L321.2,704.7L321.4,706.2L321.6,707.7L321.8,709.1L321.9,710.6L322.0,711.4L322.1,712.1L322.3,713.6L322.4,715.0L322.6,716.5L322.7,718.0L322.9,719.4L323.0,720.9L323.2,722.4L323.3,723.8L323.4,725.3L323.6,726.8L323.7,728.2L323.8,729.7L323.9,731.1L324.0,732.6L324.1,734.1L324.2,735.5L324.3,736.0L324.3,737.0L324.4,738.4L324.5,739.9L324.6,741.3L324.7,742.8L324.8,744.2L324.8,745.6L324.9,747.1L325.0,748.5L325.0,750.0L325.1,751.4L325.1,752.8L325.2,754.3L325.2,755.7L325.2,757.1L325.3,758.6L325.3,760.0L325.3,761.4L325.3,762.9L325.3,764.3L325.4,765.7L325.4,767.1L325.4,768.6L325.3,770.0L325.3,771.4L325.3,772.8L325.3,774.2L325.3,775.6L325.2,777.1L325.2,778.5L325.2,779.9L325.1,781.3L325.1,782.7L325.0,784.1L325.0,785.5L324.9,786.9L324.9,788.3L324.8,789.7L324.7,791.1L324.6,792.5L324.5,793.9L324.5,795.3L324.4,796.7L324.3,798.1L324.2,799.5L324.0,800.8L323.9,802.2L323.8,803.6L323.7,805.0L323.6,806.4L323.5,806.8L323.4,807.8L323.3,809.1L323.1,810.5L323.0,811.9L322.8,813.3L322.7,814.6L322.5,816.0L322.4,817.4L322.2,818.7L322.0,820.1L321.8,821.5L321.6,822.8L321.4,824.2L321.2,825.6L321.0,826.9L320.8,828.3L320.8,828.6L320.6,829.6L320.4,831.0L320.2,832.3L319.9,833.7L319.7,835.0L319.5,836.4L319.2,837.7L319.0,839.1L318.7,840.4L318.4,841.7L318.2,843.1L318.1,843.4L317.9,844.4L317.6,845.8L317.3,847.1L317.0,848.4L316.7,849.8L316.4,851.1Z" fill="#009966"/>
<path d="M375.7,869.6L378.2,870.4L380.7,871.2L383.2,871.9L385.7,872.7L388.2,873.5L390.7,874.3L393.2,875.1L395.7,875.9L398.3,876.7L400.8,877.4L403.3,878.2L405.8,879.0L408.3,879.8L410.8,880.6L413.3,881.4L415.8,882.1L418.3,882.9L420.8,883.7L423.3,884.5L425.8,885.3L428.3,886.1L430.9,886.8L433.4,887.6L435.9,888.4L438.4,889.2L440.9,890.0L443.4,890.8L445.9,891.5L448.4,892.3L450.9,893.1L453.4,893.9L455.9,894.7L458.4,895.5L460.9,896.3L463.5,897.0L466.0,897.8L468.5,898.6L471.0,899.4L473.5,900.2L476.0,901.0L478.5,901.7L481.0,902.5L483.5,903.3L486.0,904.1L488.5,904.9L491.0,905.7L493.5,906.4L496.1,907.2L498.6,908.0L501.1,908.8L503.6,909.6L506.1,910.4L508.6,911.1L511.1,911.9L513.6,912.7L516.1,913.5L518.6,914.3L521.1,915.1L523.6,915.8L526.1,916.6L528.6,917.4L531.2,918.2L533.7,919.0L536.2,919.8L538.7,920.6L541.2,921.3L543.7,922.1L546.2,922.9L548.7,923.7L551.2,924.5L553.7,925.3L556.2,926.0L558.7,926.8L561.2,927.6L563.8,928.4L566.3,929.2L568.8,930.0L571.3,930.7L573.8,931.5L576.3,932.3L578.8,933.1L581.3,933.9L583.8,934.7L586.3,935.4L588.8,936.2L591.3,937.0L593.8,937.8L596.4,938.6L598.9,939.4L601.4,940.2L603.9,940.9L606.4,941.7L608.9,942.5L611.4,943.3L613.9,944.1L616.4,944.9L618.9,945.6L621.4,946.4L623.9,947.2L626.4,948.0L628.9,948.8L631.5,949.6L634.0,950.3L636.5,951.1L639.0,951.9L641.5,952.7L644.0,953.5L646.5,954.3L649.0,955.0L651.5,955.8L654.0,956.6L656.5,957.4L659.0,958.2L661.5,959.0L664.1,959.7L666.6,960.5L669.1,961.3L671.6,962.1L674.1,962.9L676.6,963.7L679.1,964.5L681.6,965.2L684.1,966.0L686.6,966.8L689.1,967.6L691.6,968.4L694.1,969.2L696.7,969.9L699.2,970.7L701.7,971.5L704.2,972.3L706.7,973.1L709.2,973.9L711.7,974.6L714.2,975.4L716.7,976.2L719.2,977.0L721.7,977.8L724.2,978.6L726.7,979.3L729.3,980.1L731.8,980.9L734.3,981.7L736.8,982.5L739.3,983.3L741.8,984.1L744.3,984.8L746.8,985.6L749.3,986.4L751.8,987.2L754.3,988.0L756.8,988.8L759.3,989.5L761.8,990.3L764.4,991.1L766.9,991.9L769.4,992.7L771.9,993.5L774.4,994.2L776.9,995.0L779.4,995.8L781.9,996.6L784.4,997.4L786.9,998.2L789.4,998.9L791.9,999.7L794.4,1000.5L797.0,1001.3L799.5,1002.1L802.0,1002.9L804.5,1003.6L807.0,1004.4L809.5,1005.2L812.0,1006.0L812.0,1004.6L812.0,1003.2L812.1,1001.7L812.1,1000.3L812.1,998.9L812.1,997.5L812.1,996.1L812.2,994.7L812.2,993.2L812.2,991.8L812.2,990.4L812.2,989.0L812.3,987.6L812.3,986.2L812.3,984.7L812.3,983.3L812.3,981.9L812.4,980.5L812.4,979.1L812.4,977.7L812.4,976.2L812.4,974.8L812.5,973.4L812.5,972.0L812.5,970.6L812.5,969.2L812.5,967.7L812.6,966.3L812.6,964.9L812.6,963.5L812.6,962.1L812.6,960.7L812.7,959.2L812.7,957.8L812.7,956.4L812.7,955.0L812.7,953.6L812.8,952.2L812.8,950.7L812.8,949.3L812.8,947.9L812.8,946.5L812.9,945.1L812.9,943.6L812.9,942.2L812.9,940.8L812.9,939.4L813.0,938.0L813.0,936.6L813.0,935.1L813.0,933.7L813.0,932.3L813.1,930.9L813.1,929.5L813.1,928.1L813.1,926.6L813.1,925.2L813.2,923.8L813.2,922.4L813.2,921.0L813.2,919.6L813.2,918.1L813.3,916.7L813.3,915.3L813.3,913.9L813.3,912.5L813.3,911.1L813.4,909.6L813.4,908.2L813.4,906.8L813.4,905.4L813.4,904.0L813.5,902.6L813.5,901.1L813.5,899.7L813.5,898.3L813.5,896.9L813.6,895.5L813.6,894.1L813.6,892.6L813.6,891.2L813.6,889.8L813.7,888.4L813.7,887.0L813.7,885.5L813.7,884.1L813.7,882.7L813.8,881.3L813.8,879.9L813.8,878.5L813.8,877.0L813.8,875.6L813.9,874.2L813.9,872.8L813.9,871.4L813.9,870.0L813.9,868.5L814.0,867.1L814.0,865.7L814.0,864.3L814.0,862.9L814.1,861.5L814.1,860.0L814.1,858.6L814.1,857.2L814.1,855.8L814.2,854.4L814.2,853.0L814.2,851.5L814.2,850.1L814.2,848.7L814.3,847.3L814.3,845.9L814.3,844.5L814.3,843.0L814.3,841.6L814.4,840.2L814.4,838.8L814.4,837.4L814.4,835.9L814.4,834.5L814.5,833.1L814.5,831.7L814.5,830.3L814.5,828.9L814.5,827.4L814.6,826.0L814.6,824.6L814.6,823.2L814.6,821.8L814.6,820.4L814.7,818.9L814.7,817.5L814.7,816.1L814.7,814.7L814.7,813.3L814.8,811.9L814.8,810.4L814.8,809.0L814.8,807.6L814.8,806.2L814.9,804.8L814.9,803.4L814.9,801.9L814.9,800.5L814.9,799.1L815.0,797.7L815.0,796.3L815.0,794.9L815.0,793.4L815.0,792.0L815.1,790.6L815.1,789.2L815.1,787.8L815.1,786.4L815.1,784.9L815.2,783.5L815.2,782.1L815.2,780.7L815.2,779.3L815.2,777.8L815.3,776.4L815.3,775.0L815.3,773.6L815.3,772.2L815.3,770.8L815.4,769.3L815.4,767.9L815.4,766.5L815.4,765.1L815.4,763.7L815.5,762.3L815.5,760.8L815.5,759.4L815.5,758.0L815.5,756.6L815.6,755.2L815.6,753.8L815.6,752.3L815.6,750.9L815.6,749.5L815.7,748.1L815.7,746.7L815.7,745.3L815.7,743.8L815.7,742.4L815.8,741.0L815.8,739.6L815.8,738.2L815.8,736.8L815.8,735.3L815.9,733.9L815.9,732.5L815.9,731.1L815.9,729.7L815.9,728.3L816.0,726.8L816.0,725.4L816.0,724.0L813.5,723.2L811.0,722.4L808.5,721.6L805.9,720.9L803.4,720.1L800.9,719.3L798.4,718.5L795.9,717.7L793.4,716.9L790.9,716.2L788.4,715.4L785.8,714.6L783.3,713.8L780.8,713.0L778.3,712.2L775.8,711.5L773.3,710.7L770.8,709.9L768.3,709.1L765.7,708.3L763.2,707.5L760.7,706.8L758.2,706.0L755.7,705.2L753.2,704.4L750.7,703.6L748.2,702.8L745.6,702.1L743.1,701.3L740.6,700.5L738.1,699.7L735.6,698.9L733.1,698.1L730.6,697.3L728.1,696.6L725.5,695.8L723.0,695.0L720.5,694.2L718.0,693.4L715.5,692.6L713.0,691.9L710.5,691.1L708.0,690.3L705.4,689.5L702.9,688.7L700.4,687.9L697.9,687.2L695.4,686.4L692.9,685.6L690.4,684.8L687.9,684.0L685.3,683.2L682.8,682.5L680.3,681.7L677.8,680.9L675.3,680.1L672.8,679.3L670.3,678.5L667.8,677.7L665.2,677.0L662.7,676.2L660.2,675.4L657.7,674.6L655.2,673.8L652.7,673.0L650.2,672.3L647.7,671.5L645.1,670.7L642.6,669.9L640.1,669.1L637.6,668.3L635.1,667.6L632.6,666.8L630.1,666.0L627.6,665.2L625.0,664.4L622.5,663.6L620.0,662.9L617.5,662.1L615.0,661.3L612.5,660.5L610.0,659.7L607.5,658.9L604.9,658.2L602.4,657.4L599.9,656.6L597.4,655.8L594.9,655.0L592.4,654.2L589.9,653.4L587.4,652.7L584.8,651.9L582.3,651.1L579.8,650.3L577.3,649.5L574.8,648.7L572.3,648.0L569.8,647.2L567.3,646.4L564.7,645.6L562.2,644.8L559.7,644.0L557.2,643.3L554.7,642.5L552.2,641.7L549.7,640.9L547.2,640.1L544.6,639.3L542.1,638.6L539.6,637.8L537.1,637.0L534.6,636.2L532.1,635.4L529.6,634.6L527.1,633.8L524.5,633.1L522.0,632.3L519.5,631.5L517.0,630.7L514.5,629.9L512.0,629.1L509.5,628.4L507.0,627.6L504.4,626.8L501.9,626.0L499.4,625.2L496.9,624.4L494.4,623.7L491.9,622.9L489.4,622.1L486.9,621.3L484.3,620.5L481.8,619.7L479.3,619.0L476.8,618.2L474.3,617.4L471.8,616.6L469.3,615.8L466.8,615.0L464.2,614.3L461.7,613.5L459.2,612.7L456.7,611.9L454.2,611.1L451.7,610.3L449.2,609.5L446.7,608.8L444.1,608.0L441.6,607.2L439.1,606.4L436.6,605.6L434.1,604.8L431.6,604.1L429.1,603.3L426.6,602.5L424.0,601.7L421.5,600.9L419.0,600.1L416.5,599.4L414.0,598.6L411.5,597.8L409.0,597.0L406.5,596.2L403.9,595.4L401.4,594.7L398.9,593.9L396.4,593.1L393.9,592.3L391.4,591.5L388.9,590.7L386.4,589.9L383.8,589.2L381.3,588.4L378.8,587.6L376.3,586.8L373.8,586.0L371.3,585.2L368.8,584.5L366.3,583.7L363.7,582.9L361.2,582.1L358.7,581.3L356.2,580.5L353.7,579.8L351.2,579.0L348.7,578.2L346.2,577.4L343.6,576.6L341.1,575.8L338.6,575.1L336.1,574.3L335.5,574.1L336.1,575.6L336.1,575.7L336.7,577.3L337.3,578.9L337.9,580.5L338.5,582.1L338.5,582.3L339.0,583.7L339.6,585.3L340.2,586.9L340.8,588.5L341.0,589.2L341.3,590.1L341.9,591.7L342.4,593.3L343.0,594.9L343.4,596.2L343.5,596.5L344.1,598.1L344.6,599.7L345.1,601.3L345.6,602.8L345.9,603.5L346.2,604.4L346.7,606.0L347.2,607.6L347.7,609.2L348.2,610.8L348.3,611.0L348.7,612.3L349.2,613.9L349.7,615.5L350.2,617.1L350.7,618.6L350.7,618.8L351.2,620.2L351.6,621.8L352.1,623.3L352.6,624.9L353.0,626.5L353.2,627.0L353.5,628.0L353.9,629.6L354.4,631.2L354.8,632.7L355.3,634.3L355.6,635.4L355.7,635.8L356.2,637.4L356.6,639.0L357.0,640.5L357.4,642.1L357.8,643.6L358.0,644.3L358.3,645.2L358.7,646.7L359.1,648.3L359.5,649.8L359.9,651.4L360.3,652.9L360.4,653.6L360.7,654.4L361.0,656.0L361.4,657.5L361.8,659.1L362.2,660.6L362.5,662.1L362.9,663.5L362.9,663.7L363.3,665.2L363.6,666.8L364.0,668.3L364.3,669.8L364.7,671.3L365.0,672.9L365.3,674.0L365.3,674.4L365.7,675.9L366.0,677.4L366.3,679.0L366.6,680.5L367.0,682.0L367.3,683.5L367.6,685.1L367.7,685.4L367.9,686.6L368.2,688.1L368.5,689.6L368.8,691.1L369.1,692.6L369.4,694.1L369.6,695.6L369.9,697.2L370.0,697.8L370.2,698.7L370.5,700.2L370.7,701.7L371.0,703.2L371.2,704.7L371.5,706.2L371.8,707.7L372.0,709.2L372.2,710.7L372.4,711.7L372.5,712.2L372.7,713.7L373.0,715.2L373.2,716.7L373.4,718.2L373.6,719.6L373.9,721.1L374.1,722.6L374.3,724.1L374.5,725.6L374.7,727.1L374.7,727.5L374.9,728.6L375.1,730.1L375.3,731.5L375.5,733.0L375.7,734.5L375.8,736.0L376.0,737.5L376.2,738.9L376.3,740.4L376.5,741.9L376.7,743.3L376.8,744.8L377.0,746.3L377.0,747.0L377.1,747.8L377.3,749.2L377.4,750.7L377.5,752.2L377.7,753.6L377.8,755.1L377.9,756.5L378.0,758.0L378.2,759.5L378.3,760.9L378.4,762.4L378.5,763.8L378.6,765.3L378.7,766.7L378.8,768.2L378.9,769.6L378.9,771.1L379.0,772.5L379.1,774.0L379.2,775.4L379.2,776.8L379.2,777.1L379.3,778.3L379.3,779.7L379.4,781.2L379.4,782.6L379.5,784.0L379.5,785.5L379.6,786.9L379.6,788.3L379.6,789.8L379.6,791.2L379.7,792.6L379.7,794.1L379.7,795.5L379.7,796.9L379.7,798.3L379.7,799.8L379.7,801.2L379.7,802.6L379.7,804.0L379.6,805.4L379.6,806.8L379.6,808.3L379.6,809.7L379.5,811.1L379.5,812.5L379.4,813.9L379.4,815.3L379.3,816.7L379.3,818.1L379.2,819.5L379.1,820.9L379.1,822.3L379.0,823.7L378.9,825.1L378.8,826.5L378.7,827.9L378.7,829.1L378.6,829.3L378.5,830.7L378.4,832.1L378.3,833.5L378.2,834.8L378.1,836.2L378.0,837.6L377.9,839.0L377.7,840.4L377.6,841.8L377.4,843.1L377.3,844.5L377.2,845.9L377.0,847.3L376.8,848.6L376.7,850.0L376.5,851.4L376.3,852.7L376.2,854.1L376.0,855.5L375.8,856.5L375.8,856.8L375.6,858.2L375.4,859.6L375.2,860.9L375.0,862.3L374.8,863.6L374.6,865.0L374.3,866.3L374.1,867.7L373.9,869.0Z" fill="#006600"/>
<path d="M433.4,887.6L435.9,888.4L438.4,889.2L440.9,890.0L443.4,890.8L445.9,891.5L448.4,892.3L450.9,893.1L453.4,893.9L455.9,894.7L458.4,895.5L460.9,896.3L463.5,897.0L466.0,897.8L468.5,898.6L471.0,899.4L473.5,900.2L476.0,901.0L478.5,901.7L481.0,902.5L483.5,903.3L486.0,904.1L488.5,904.9L491.0,905.7L493.5,906.4L496.1,907.2L498.6,908.0L501.1,908.8L503.6,909.6L506.1,910.4L508.6,911.1L511.1,911.9L513.6,912.7L516.1,913.5L518.6,914.3L521.1,915.1L523.6,915.8L526.1,916.6L528.6,917.4L531.2,918.2L533.7,919.0L536.2,919.8L538.7,920.6L541.2,921.3L543.7,922.1L546.2,922.9L548.7,923.7L551.2,924.5L553.7,925.3L556.2,926.0L558.7,926.8L561.2,927.6L563.8,928.4L566.3,929.2L568.8,930.0L571.3,930.7L573.8,931.5L576.3,932.3L578.8,933.1L581.3,933.9L583.8,934.7L586.3,935.4L588.8,936.2L591.3,937.0L593.8,937.8L596.4,938.6L598.9,939.4L601.4,940.2L603.9,940.9L606.4,941.7L608.9,942.5L611.4,943.3L613.9,944.1L616.4,944.9L618.9,945.6L621.4,946.4L623.9,947.2L626.4,948.0L628.9,948.8L631.5,949.6L634.0,950.3L636.5,951.1L639.0,951.9L641.5,952.7L644.0,953.5L646.5,954.3L649.0,955.0L651.5,955.8L654.0,956.6L656.5,957.4L659.0,958.2L661.5,959.0L664.1,959.7L666.6,960.5L669.1,961.3L671.6,962.1L674.1,962.9L676.6,963.7L679.1,964.5L681.6,965.2L684.1,966.0L686.6,966.8L689.1,967.6L691.6,968.4L694.1,969.2L696.7,969.9L699.2,970.7L701.7,971.5L704.2,972.3L706.7,973.1L709.2,973.9L711.7,974.6L714.2,975.4L716.7,976.2L719.2,977.0L721.7,977.8L724.2,978.6L726.7,979.3L729.3,980.1L731.8,980.9L734.3,981.7L736.8,982.5L739.3,983.3L741.8,984.1L744.3,984.8L746.8,985.6L749.3,986.4L751.8,987.2L754.3,988.0L756.8,988.8L759.3,989.5L761.8,990.3L764.4,991.1L766.9,991.9L769.4,992.7L771.9,993.5L774.4,994.2L776.9,995.0L779.4,995.8L781.9,996.6L784.4,997.4L786.9,998.2L789.4,998.9L791.9,999.7L794.4,1000.5L797.0,1001.3L799.5,1002.1L802.0,1002.9L804.5,1003.6L807.0,1004.4L809.5,1005.2L812.0,1006.0L812.0,1004.6L812.0,1003.2L812.1,1001.7L812.1,1000.3L812.1,998.9L812.1,997.5L812.1,996.1L812.2,994.7L812.2,993.2L812.2,991.8L812.2,990.4L812.2,989.0L812.3,987.6L812.3,986.2L812.3,984.7L812.3,983.3L812.3,981.9L812.4,980.5L812.4,979.1L812.4,977.7L812.4,976.2L812.4,974.8L812.5,973.4L812.5,972.0L812.5,970.6L812.5,969.2L812.5,967.7L812.6,966.3L812.6,964.9L812.6,963.5L812.6,962.1L812.6,960.7L812.7,959.2L812.7,957.8L812.7,956.4L812.7,955.0L812.7,953.6L812.8,952.2L812.8,950.7L812.8,949.3L812.8,947.9L812.8,946.5L812.9,945.1L812.9,943.6L812.9,942.2L812.9,940.8L812.9,939.4L813.0,938.0L813.0,936.6L813.0,935.1L813.0,933.7L813.0,932.3L813.1,930.9L813.1,929.5L813.1,928.1L813.1,926.6L813.1,925.2L813.2,923.8L813.2,922.4L813.2,921.0L813.2,919.6L813.2,918.1L813.3,916.7L813.3,915.3L813.3,913.9L813.3,912.5L813.3,911.1L813.4,909.6L813.4,908.2L813.4,906.8L813.4,905.4L813.4,904.0L813.5,902.6L813.5,901.1L813.5,899.7L813.5,898.3L813.5,896.9L813.6,895.5L813.6,894.1L813.6,892.6L813.6,891.2L813.6,889.8L813.7,888.4L813.7,887.0L813.7,885.5L813.7,884.1L813.7,882.7L813.8,881.3L813.8,879.9L813.8,878.5L813.8,877.0L813.8,875.6L813.9,874.2L813.9,872.8L813.9,871.4L813.9,870.0L813.9,868.5L814.0,867.1L814.0,865.7L814.0,864.3L814.0,862.9L814.1,861.5L814.1,860.0L814.1,858.6L814.1,857.2L814.1,855.8L814.2,854.4L814.2,853.0L814.2,851.5L814.2,850.1L814.2,848.7L814.3,847.3L814.3,845.9L814.3,844.5L814.3,843.0L814.3,841.6L814.4,840.2L814.4,838.8L814.4,837.4L814.4,835.9L814.4,834.5L814.5,833.1L814.5,831.7L814.5,830.3L814.5,828.9L814.5,827.4L814.6,826.0L814.6,824.6L814.6,823.2L814.6,821.8L814.6,820.4L814.7,818.9L814.7,817.5L814.7,816.1L814.7,814.7L814.7,813.3L814.8,811.9L814.8,810.4L814.8,809.0L814.8,807.6L814.8,806.2L814.9,804.8L814.9,803.4L814.9,801.9L814.9,800.5L814.9,799.1L815.0,797.7L815.0,796.3L815.0,794.9L815.0,793.4L815.0,792.0L815.1,790.6L815.1,789.2L815.1,787.8L815.1,786.4L815.1,784.9L815.2,783.5L815.2,782.1L815.2,780.7L815.2,779.3L815.2,777.8L815.3,776.4L815.3,775.0L815.3,773.6L815.3,772.2L815.3,770.8L815.4,769.3L815.4,767.9L815.4,766.5L815.4,765.1L815.4,763.7L815.5,762.3L815.5,760.8L815.5,759.4L815.5,758.0L815.5,756.6L815.6,755.2L815.6,753.8L815.6,752.3L815.6,750.9L815.6,749.5L815.7,748.1L815.7,746.7L815.7,745.3L815.7,743.8L815.7,742.4L815.8,741.0L815.8,739.6L815.8,738.2L815.8,736.8L815.8,735.3L815.9,733.9L815.9,732.5L815.9,731.1L815.9,729.7L815.9,728.3L816.0,726.8L816.0,725.4L816.0,724.0L813.5,723.2L811.0,722.4L808.5,721.6L805.9,720.9L803.4,720.1L800.9,719.3L798.4,718.5L795.9,717.7L793.4,716.9L790.9,716.2L788.4,715.4L785.8,714.6L783.3,713.8L780.8,713.0L778.3,712.2L775.8,711.5L773.3,710.7L770.8,709.9L768.3,709.1L765.7,708.3L763.2,707.5L760.7,706.8L758.2,706.0L755.7,705.2L753.2,704.4L750.7,703.6L748.2,702.8L745.6,702.1L743.1,701.3L740.6,700.5L738.1,699.7L735.6,698.9L733.1,698.1L730.6,697.3L728.1,696.6L725.5,695.8L723.0,695.0L720.5,694.2L718.0,693.4L715.5,692.6L713.0,691.9L710.5,691.1L708.0,690.3L705.4,689.5L702.9,688.7L700.4,687.9L697.9,687.2L695.4,686.4L692.9,685.6L690.4,684.8L687.9,684.0L685.3,683.2L682.8,682.5L680.3,681.7L677.8,680.9L675.3,680.1L672.8,679.3L670.3,678.5L667.8,677.7L665.2,677.0L662.7,676.2L660.2,675.4L657.7,674.6L655.2,673.8L652.7,673.0L650.2,672.3L647.7,671.5L645.1,670.7L642.6,669.9L640.1,669.1L637.6,668.3L635.1,667.6L632.6,666.8L630.1,666.0L627.6,665.2L625.0,664.4L622.5,663.6L620.0,662.9L617.5,662.1L615.0,661.3L612.5,660.5L610.0,659.7L607.5,658.9L604.9,658.2L602.4,657.4L599.9,656.6L597.4,655.8L594.9,655.0L592.4,654.2L589.9,653.4L587.4,652.7L584.8,651.9L582.3,651.1L579.8,650.3L577.3,649.5L574.8,648.7L572.3,648.0L569.8,647.2L567.3,646.4L564.7,645.6L562.2,644.8L559.7,644.0L557.2,643.3L554.7,642.5L552.2,641.7L549.7,640.9L547.2,640.1L544.6,639.3L542.1,638.6L539.6,637.8L537.1,637.0L534.6,636.2L532.1,635.4L529.6,634.6L527.1,633.8L524.5,633.1L522.0,632.3L519.5,631.5L517.0,630.7L514.5,629.9L512.0,629.1L509.5,628.4L507.0,627.6L504.4,626.8L501.9,626.0L499.4,625.2L496.9,624.4L494.4,623.7L491.9,622.9L489.4,622.1L486.9,621.3L484.3,620.5L481.8,619.7L479.3,619.0L476.8,618.2L474.3,617.4L471.8,616.6L469.3,615.8L466.8,615.0L464.2,614.3L461.7,613.5L459.2,612.7L456.7,611.9L454.2,611.1L451.7,610.3L449.2,609.5L446.7,608.8L444.1,608.0L441.6,607.2L439.1,606.4L436.6,605.6L434.1,604.8L431.6,604.1L429.1,603.3L426.6,602.5L424.0,601.7L421.5,600.9L419.0,600.1L416.5,599.4L414.0,598.6L411.5,597.8L409.0,597.0L406.5,596.2L403.9,595.4L401.4,594.7L398.9,593.9L396.4,593.1L393.9,592.3L391.4,591.5L388.9,590.7L387.5,590.3L388.1,591.9L388.7,593.5L388.8,593.8L389.4,595.2L390.0,596.8L390.6,598.4L391.2,600.0L391.3,600.3L391.8,601.6L392.4,603.2L393.0,604.8L393.5,606.4L393.7,606.9L394.1,608.0L394.7,609.6L395.3,611.2L395.8,612.8L396.2,613.8L396.4,614.4L396.9,616.0L397.5,617.6L398.0,619.2L398.6,620.8L398.6,620.9L399.1,622.4L399.6,624.0L400.2,625.5L400.7,627.1L401.0,628.3L401.2,628.7L401.7,630.3L402.2,631.9L402.7,633.5L403.2,635.0L403.5,635.9L403.7,636.6L404.2,638.2L404.7,639.8L405.2,641.3L405.7,642.9L405.9,643.8L406.1,644.5L406.6,646.0L407.1,647.6L407.5,649.2L408.0,650.7L408.3,652.0L408.4,652.3L408.9,653.9L409.3,655.4L409.8,657.0L410.2,658.5L410.6,660.1L410.8,660.6L411.1,661.7L411.5,663.2L411.9,664.8L412.3,666.3L412.7,667.9L413.1,669.4L413.2,669.6L413.5,671.0L413.9,672.5L414.3,674.0L414.7,675.6L415.1,677.1L415.5,678.7L415.6,679.1L415.9,680.2L416.2,681.8L416.6,683.3L417.0,684.8L417.3,686.4L417.7,687.9L418.0,689.2L418.1,689.4L418.4,691.0L418.8,692.5L419.1,694.0L419.4,695.6L419.8,697.1L420.1,698.6L420.4,700.0L420.4,700.1L420.8,701.7L421.1,703.2L421.4,704.7L421.7,706.2L422.0,707.7L422.3,709.3L422.6,710.8L422.8,711.6L422.9,712.3L423.2,713.8L423.5,715.3L423.8,716.8L424.1,718.3L424.4,719.8L424.6,721.4L424.9,722.9L425.2,724.3L425.2,724.4L425.4,725.9L425.6,727.4L425.9,728.9L426.1,730.3L426.3,731.8L426.6,733.3L426.8,734.8L427.0,736.3L427.2,737.8L427.4,739.3L427.5,739.9L427.6,740.8L427.8,742.3L428.0,743.7L428.2,745.2L428.4,746.7L428.6,748.2L428.8,749.7L429.0,751.1L429.1,752.6L429.3,754.1L429.5,755.6L429.6,757.0L429.8,758.5L429.8,758.6L430.0,760.0L430.1,761.5L430.3,762.9L430.4,764.4L430.6,765.9L430.7,767.3L430.9,768.8L431.0,770.3L431.1,771.7L431.3,773.2L431.4,774.7L431.5,776.1L431.7,777.6L431.8,779.1L431.9,780.5L432.0,782.0L432.1,782.4L432.1,783.4L432.2,784.9L432.3,786.3L432.5,787.8L432.6,789.2L432.7,790.7L432.7,792.2L432.8,793.6L432.9,795.1L433.0,796.5L433.1,797.9L433.2,799.4L433.3,800.8L433.3,802.3L433.4,803.7L433.5,805.2L433.5,806.6L433.6,808.1L433.7,809.5L433.7,810.9L433.8,812.4L433.8,813.8L433.9,815.3L433.9,816.7L433.9,818.1L434.0,819.6L434.0,821.0L434.1,822.4L434.1,823.9L434.1,824.3L434.1,825.3L434.1,826.7L434.1,828.1L434.2,829.6L434.2,831.0L434.2,832.4L434.2,833.8L434.2,835.3L434.2,836.7L434.2,838.1L434.2,839.5L434.2,841.0L434.2,842.4L434.1,843.8L434.1,845.2L434.1,846.6L434.1,848.0L434.0,849.4L434.0,850.9L434.0,852.3L433.9,853.7L433.9,855.1L433.8,856.5L433.8,857.9L433.7,859.3L433.7,860.6L433.7,860.7L433.6,862.1L433.5,863.5L433.5,864.9L433.4,866.3L433.3,867.7L433.2,869.1L433.1,870.5L433.1,871.9L433.0,873.3L432.9,874.7L432.8,876.1L432.6,877.4L432.5,878.8L432.4,880.2L432.3,881.6L432.2,883.0L432.0,884.4L431.9,885.7L431.8,887.1Z" fill="#80b000"/>
<path d="M491.0,905.7L493.5,906.4L496.1,907.2L498.6,908.0L501.1,908.8L503.6,909.6L506.1,910.4L508.6,911.1L511.1,911.9L513.6,912.7L516.1,913.5L518.6,914.3L521.1,915.1L523.6,915.8L526.1,916.6L528.6,917.4L531.2,918.2L533.7,919.0L536.2,919.8L538.7,920.6L541.2,921.3L543.7,922.1L546.2,922.9L548.7,923.7L551.2,924.5L553.7,925.3L556.2,926.0L558.7,926.8L561.2,927.6L563.8,928.4L566.3,929.2L568.8,930.0L571.3,930.7L573.8,931.5L576.3,932.3L578.8,933.1L581.3,933.9L583.8,934.7L586.3,935.4L588.8,936.2L591.3,937.0L593.8,937.8L596.4,938.6L598.9,939.4L601.4,940.2L603.9,940.9L606.4,941.7L608.9,942.5L611.4,943.3L613.9,944.1L616.4,944.9L618.9,945.6L621.4,946.4L623.9,947.2L626.4,948.0L628.9,948.8L631.5,949.6L634.0,950.3L636.5,951.1L639.0,951.9L641.5,952.7L644.0,953.5L646.5,954.3L649.0,955.0L651.5,955.8L654.0,956.6L656.5,957.4L659.0,958.2L661.5,959.0L664.1,959.7L666.6,960.5L669.1,961.3L671.6,962.1L674.1,962.9L676.6,963.7L679.1,964.5L681.6,965.2L684.1,966.0L686.6,966.8L689.1,967.6L691.6,968.4L694.1,969.2L696.7,969.9L699.2,970.7L701.7,971.5L704.2,972.3L706.7,973.1L709.2,973.9L711.7,974.6L714.2,975.4L716.7,976.2L719.2,977.0L721.7,977.8L724.2,978.6L726.7,979.3L729.3,980.1L731.8,980.9L734.3,981.7L736.8,982.5L739.3,983.3L741.8,984.1L744.3,984.8L746.8,985.6L749.3,986.4L751.8,987.2L754.3,988.0L756.8,988.8L759.3,989.5L761.8,990.3L764.4,991.1L766.9,991.9L769.4,992.7L771.9,993.5L774.4,994.2L776.9,995.0L779.4,995.8L781.9,996.6L784.4,997.4L786.9,998.2L789.4,998.9L791.9,999.7L794.4,1000.5L797.0,1001.3L799.5,1002.1L802.0,1002.9L804.5,1003.6L807.0,1004.4L809.5,1005.2L812.0,1006.0L812.0,1004.6L812.0,1003.2L812.1,1001.7L812.1,1000.3L812.1,998.9L812.1,997.5L812.1,996.1L812.2,994.7L812.2,993.2L812.2,991.8L812.2,990.4L812.2,989.0L812.3,987.6L812.3,986.2L812.3,984.7L812.3,983.3L812.3,981.9L812.4,980.5L812.4,979.1L812.4,977.7L812.4,976.2L812.4,974.8L812.5,973.4L812.5,972.0L812.5,970.6L812.5,969.2L812.5,967.7L812.6,966.3L812.6,964.9L812.6,963.5L812.6,962.1L812.6,960.7L812.7,959.2L812.7,957.8L812.7,956.4L812.7,955.0L812.7,953.6L812.8,952.2L812.8,950.7L812.8,949.3L812.8,947.9L812.8,946.5L812.9,945.1L812.9,943.6L812.9,942.2L812.9,940.8L812.9,939.4L813.0,938.0L813.0,936.6L813.0,935.1L813.0,933.7L813.0,932.3L813.1,930.9L813.1,929.5L813.1,928.1L813.1,926.6L813.1,925.2L813.2,923.8L813.2,922.4L813.2,921.0L813.2,919.6L813.2,918.1L813.3,916.7L813.3,915.3L813.3,913.9L813.3,912.5L813.3,911.1L813.4,909.6L813.4,908.2L813.4,906.8L813.4,905.4L813.4,904.0L813.5,902.6L813.5,901.1L813.5,899.7L813.5,898.3L813.5,896.9L813.6,895.5L813.6,894.1L813.6,892.6L813.6,891.2L813.6,889.8L813.7,888.4L813.7,887.0L813.7,885.5L813.7,884.1L813.7,882.7L813.8,881.3L813.8,879.9L813.8,878.5L813.8,877.0L813.8,875.6L813.9,874.2L813.9,872.8L813.9,871.4L813.9,870.0L813.9,868.5L814.0,867.1L814.0,865.7L814.0,864.3L814.0,862.9L814.1,861.5L814.1,860.0L814.1,858.6L814.1,857.2L814.1,855.8L814.2,854.4L814.2,853.0L814.2,851.5L814.2,850.1L814.2,848.7L814.3,847.3L814.3,845.9L814.3,844.5L814.3,843.0L814.3,841.6L814.4,840.2L814.4,838.8L814.4,837.4L814.4,835.9L814.4,834.5L814.5,833.1L814.5,831.7L814.5,830.3L814.5,828.9L814.5,827.4L814.6,826.0L814.6,824.6L814.6,823.2L814.6,821.8L814.6,820.4L814.7,818.9L814.7,817.5L814.7,816.1L814.7,814.7L814.7,813.3L814.8,811.9L814.8,810.4L814.8,809.0L814.8,807.6L814.8,806.2L814.9,804.8L814.9,803.4L814.9,801.9L814.9,800.5L814.9,799.1L815.0,797.7L815.0,796.3L815.0,794.9L815.0,793.4L815.0,792.0L815.1,790.6L815.1,789.2L815.1,787.8L815.1,786.4L815.1,784.9L815.2,783.5L815.2,782.1L815.2,780.7L815.2,779.3L815.2,777.8L815.3,776.4L815.3,775.0L815.3,773.6L815.3,772.2L815.3,770.8L815.4,769.3L815.4,767.9L815.4,766.5L815.4,765.1L815.4,763.7L815.5,762.3L815.5,760.8L815.5,759.4L815.5,758.0L815.5,756.6L815.6,755.2L815.6,753.8L815.6,752.3L815.6,750.9L815.6,749.5L815.7,748.1L815.7,746.7L815.7,745.3L815.7,743.8L815.7,742.4L815.8,741.0L815.8,739.6L815.8,738.2L815.8,736.8L815.8,735.3L815.9,733.9L815.9,732.5L815.9,731.1L815.9,729.7L815.9,728.3L816.0,726.8L816.0,725.4L816.0,724.0L813.5,723.2L811.0,722.4L808.5,721.6L805.9,720.9L803.4,720.1L800.9,719.3L798.4,718.5L795.9,717.7L793.4,716.9L790.9,716.2L788.4,715.4L785.8,714.6L783.3,713.8L780.8,713.0L778.3,712.2L775.8,711.5L773.3,710.7L770.8,709.9L768.3,709.1L765.7,708.3L763.2,707.5L760.7,706.8L758.2,706.0L755.7,705.2L753.2,704.4L750.7,703.6L748.2,702.8L745.6,702.1L743.1,701.3L740.6,700.5L738.1,699.7L735.6,698.9L733.1,698.1L730.6,697.3L728.1,696.6L725.5,695.8L723.0,695.0L720.5,694.2L718.0,693.4L715.5,692.6L713.0,691.9L710.5,691.1L708.0,690.3L705.4,689.5L702.9,688.7L700.4,687.9L697.9,687.2L695.4,686.4L692.9,685.6L690.4,684.8L687.9,684.0L685.3,683.2L682.8,682.5L680.3,681.7L677.8,680.9L675.3,680.1L672.8,679.3L670.3,678.5L667.8,677.7L665.2,677.0L662.7,676.2L660.2,675.4L657.7,674.6L655.2,673.8L652.7,673.0L650.2,672.3L647.7,671.5L645.1,670.7L642.6,669.9L640.1,669.1L637.6,668.3L635.1,667.6L632.6,666.8L630.1,666.0L627.6,665.2L625.0,664.4L622.5,663.6L620.0,662.9L617.5,662.1L615.0,661.3L612.5,660.5L610.0,659.7L607.5,658.9L604.9,658.2L602.4,657.4L599.9,656.6L597.4,655.8L594.9,655.0L592.4,654.2L589.9,653.4L587.4,652.7L584.8,651.9L582.3,651.1L579.8,650.3L577.3,649.5L574.8,648.7L572.3,648.0L569.8,647.2L567.3,646.4L564.7,645.6L562.2,644.8L559.7,644.0L557.2,643.3L554.7,642.5L552.2,641.7L549.7,640.9L547.2,640.1L544.6,639.3L542.1,638.6L539.6,637.8L537.1,637.0L534.6,636.2L532.1,635.4L529.6,634.6L527.1,633.8L524.5,633.1L522.0,632.3L519.5,631.5L517.0,630.7L514.5,629.9L512.0,629.1L509.5,628.4L507.0,627.6L504.4,626.8L501.9,626.0L499.4,625.2L496.9,624.4L494.4,623.7L491.9,622.9L489.4,622.1L486.9,621.3L484.3,620.5L481.8,619.7L479.3,619.0L476.8,618.2L474.3,617.4L471.8,616.6L469.3,615.8L466.8,615.0L464.2,614.3L461.7,613.5L459.2,612.7L456.7,611.9L454.2,611.1L451.7,610.3L449.2,609.5L446.7,608.8L444.1,608.0L442.0,607.3L442.6,608.9L443.1,610.5L443.6,612.1L444.1,613.4L444.2,613.7L444.7,615.3L445.2,616.9L445.7,618.4L446.3,620.0L446.5,620.8L446.8,621.6L447.3,623.2L447.8,624.8L448.2,626.3L448.7,627.9L448.9,628.6L449.2,629.5L449.7,631.0L450.1,632.6L450.6,634.2L451.1,635.7L451.4,636.8L451.5,637.3L451.9,638.9L452.4,640.4L452.8,642.0L453.3,643.5L453.7,645.1L453.8,645.5L454.1,646.6L454.5,648.2L454.9,649.7L455.3,651.3L455.7,652.8L456.1,654.4L456.2,654.6L456.5,655.9L456.9,657.5L457.3,659.0L457.7,660.6L458.1,662.1L458.5,663.6L458.6,664.3L458.8,665.2L459.2,666.7L459.6,668.3L459.9,669.8L460.3,671.3L460.6,672.9L461.0,674.4L461.0,674.6L461.3,675.9L461.7,677.4L462.0,679.0L462.3,680.5L462.7,682.0L463.0,683.6L463.3,685.1L463.4,685.5L463.6,686.6L464.0,688.1L464.3,689.6L464.6,691.2L464.9,692.7L465.2,694.2L465.5,695.7L465.8,697.1L465.8,697.2L466.1,698.7L466.4,700.3L466.7,701.8L467.0,703.3L467.3,704.8L467.6,706.3L467.8,707.8L468.1,709.3L468.2,709.6L468.4,710.8L468.7,712.3L468.9,713.9L469.2,715.4L469.5,716.9L469.7,718.4L470.0,719.9L470.3,721.4L470.5,722.9L470.5,723.0L470.8,724.4L471.0,725.9L471.3,727.4L471.5,728.9L471.8,730.4L472.0,731.9L472.2,733.4L472.5,734.9L472.7,736.4L472.9,737.4L473.0,737.9L473.2,739.4L473.5,740.9L473.8,742.4L474.0,743.9L474.3,745.4L474.5,746.9L474.8,748.4L475.1,749.9L475.2,751.0L475.3,751.4L475.6,752.9L475.8,754.4L476.1,755.9L476.4,757.4L476.6,758.9L476.9,760.4L477.1,761.9L477.4,763.4L477.6,764.8L477.6,764.9L477.9,766.4L478.1,767.9L478.3,769.4L478.6,770.9L478.8,772.4L479.1,773.9L479.3,775.4L479.5,776.9L479.7,778.4L479.9,779.7L480.0,779.9L480.2,781.4L480.4,782.9L480.6,784.4L480.8,785.8L481.0,787.3L481.3,788.8L481.5,790.3L481.7,791.8L481.9,793.3L482.1,794.8L482.3,796.2L482.3,796.2L482.5,797.7L482.7,799.2L482.8,800.7L483.0,802.2L483.2,803.7L483.4,805.1L483.6,806.6L483.8,808.1L483.9,809.6L484.1,811.0L484.3,812.5L484.4,814.0L484.6,815.1L484.6,815.5L484.8,816.9L484.9,818.4L485.1,819.9L485.2,821.3L485.4,822.8L485.5,824.3L485.7,825.8L485.8,827.2L486.0,828.7L486.1,830.2L486.2,831.6L486.4,833.1L486.5,834.5L486.6,836.0L486.7,837.5L486.8,838.1L486.9,838.9L487.0,840.4L487.1,841.8L487.2,843.3L487.3,844.8L487.4,846.2L487.5,847.7L487.7,849.1L487.8,850.6L487.9,852.0L487.9,853.5L488.0,854.9L488.1,856.4L488.2,857.8L488.3,859.3L488.4,860.7L488.5,862.2L488.5,863.6L488.6,865.1L488.7,866.5L488.8,868.0L488.8,869.4L488.9,870.9L488.9,871.5L489.0,872.3L489.0,873.7L489.1,875.2L489.1,876.6L489.2,878.1L489.2,879.5L489.3,880.9L489.3,882.4L489.3,883.8L489.4,885.2L489.4,886.7L489.5,888.1L489.5,889.5L489.5,891.0L489.5,892.4L489.6,893.8L489.6,895.2L489.6,896.7L489.6,898.1L489.6,899.5L489.6,900.9L489.6,902.4L489.6,903.8L489.6,905.2Z" fill="#eeee00"/>
<path d="M546.2,922.9L548.7,923.7L551.2,924.5L553.7,925.3L556.2,926.0L558.7,926.8L561.2,927.6L563.8,928.4L566.3,929.2L568.8,930.0L571.3,930.7L573.8,931.5L576.3,932.3L578.8,933.1L581.3,933.9L583.8,934.7L586.3,935.4L588.8,936.2L591.3,937.0L593.8,937.8L596.4,938.6L598.9,939.4L601.4,940.2L603.9,940.9L606.4,941.7L608.9,942.5L611.4,943.3L613.9,944.1L616.4,944.9L618.9,945.6L621.4,946.4L623.9,947.2L626.4,948.0L628.9,948.8L631.5,949.6L634.0,950.3L636.5,951.1L639.0,951.9L641.5,952.7L644.0,953.5L646.5,954.3L649.0,955.0L651.5,955.8L654.0,956.6L656.5,957.4L659.0,958.2L661.5,959.0L664.1,959.7L666.6,960.5L669.1,961.3L671.6,962.1L674.1,962.9L676.6,963.7L679.1,964.5L681.6,965.2L684.1,966.0L686.6,966.8L689.1,967.6L691.6,968.4L694.1,969.2L696.7,969.9L699.2,970.7L701.7,971.5L704.2,972.3L706.7,973.1L709.2,973.9L711.7,974.6L714.2,975.4L716.7,976.2L719.2,977.0L721.7,977.8L724.2,978.6L726.7,979.3L729.3,980.1L731.8,980.9L734.3,981.7L736.8,982.5L739.3,983.3L741.8,984.1L744.3,984.8L746.8,985.6L749.3,986.4L751.8,987.2L754.3,988.0L756.8,988.8L759.3,989.5L761.8,990.3L764.4,991.1L766.9,991.9L769.4,992.7L771.9,993.5L774.4,994.2L776.9,995.0L779.4,995.8L781.9,996.6L784.4,997.4L786.9,998.2L789.4,998.9L791.9,999.7L794.4,1000.5L797.0,1001.3L799.5,1002.1L802.0,1002.9L804.5,1003.6L807.0,1004.4L809.5,1005.2L812.0,1006.0L812.0,1004.6L812.0,1003.2L812.1,1001.7L812.1,1000.3L812.1,998.9L812.1,997.5L812.1,996.1L812.2,994.7L812.2,993.2L812.2,991.8L812.2,990.4L812.2,989.0L812.3,987.6L812.3,986.2L812.3,984.7L812.3,983.3L812.3,981.9L812.4,980.5L812.4,979.1L812.4,977.7L812.4,976.2L812.4,974.8L812.5,973.4L812.5,972.0L812.5,970.6L812.5,969.2L812.5,967.7L812.6,966.3L812.6,964.9L812.6,963.5L812.6,962.1L812.6,960.7L812.7,959.2L812.7,957.8L812.7,956.4L812.7,955.0L812.7,953.6L812.8,952.2L812.8,950.7L812.8,949.3L812.8,947.9L812.8,946.5L812.9,945.1L812.9,943.6L812.9,942.2L812.9,940.8L812.9,939.4L813.0,938.0L813.0,936.6L813.0,935.1L813.0,933.7L813.0,932.3L813.1,930.9L813.1,929.5L813.1,928.1L813.1,926.6L813.1,925.2L813.2,923.8L813.2,922.4L813.2,921.0L813.2,919.6L813.2,918.1L813.3,916.7L813.3,915.3L813.3,913.9L813.3,912.5L813.3,911.1L813.4,909.6L813.4,908.2L813.4,906.8L813.4,905.4L813.4,904.0L813.5,902.6L813.5,901.1L813.5,899.7L813.5,898.3L813.5,896.9L813.6,895.5L813.6,894.1L813.6,892.6L813.6,891.2L813.6,889.8L813.7,888.4L813.7,887.0L813.7,885.5L813.7,884.1L813.7,882.7L813.8,881.3L813.8,879.9L813.8,878.5L813.8,877.0L813.8,875.6L813.9,874.2L813.9,872.8L813.9,871.4L813.9,870.0L813.9,868.5L814.0,867.1L814.0,865.7L814.0,864.3L814.0,862.9L814.1,861.5L814.1,860.0L814.1,858.6L814.1,857.2L814.1,855.8L814.2,854.4L814.2,853.0L814.2,851.5L814.2,850.1L814.2,848.7L814.3,847.3L814.3,845.9L814.3,844.5L814.3,843.0L814.3,841.6L814.4,840.2L814.4,838.8L814.4,837.4L814.4,835.9L814.4,834.5L814.5,833.1L814.5,831.7L814.5,830.3L814.5,828.9L814.5,827.4L814.6,826.0L814.6,824.6L814.6,823.2L814.6,821.8L814.6,820.4L814.7,818.9L814.7,817.5L814.7,816.1L814.7,814.7L814.7,813.3L814.8,811.9L814.8,810.4L814.8,809.0L814.8,807.6L814.8,806.2L814.9,804.8L814.9,803.4L814.9,801.9L814.9,800.5L814.9,799.1L815.0,797.7L815.0,796.3L815.0,794.9L815.0,793.4L815.0,792.0L815.1,790.6L815.1,789.2L815.1,787.8L815.1,786.4L815.1,784.9L815.2,783.5L815.2,782.1L815.2,780.7L815.2,779.3L815.2,777.8L815.3,776.4L815.3,775.0L815.3,773.6L815.3,772.2L815.3,770.8L815.4,769.3L815.4,767.9L815.4,766.5L815.4,765.1L815.4,763.7L815.5,762.3L815.5,760.8L815.5,759.4L815.5,758.0L815.5,756.6L815.6,755.2L815.6,753.8L815.6,752.3L815.6,750.9L815.6,749.5L815.7,748.1L815.7,746.7L815.7,745.3L815.7,743.8L815.7,742.4L815.8,741.0L815.8,739.6L815.8,738.2L815.8,736.8L815.8,735.3L815.9,733.9L815.9,732.5L815.9,731.1L815.9,729.7L815.9,728.3L816.0,726.8L816.0,725.4L816.0,724.0L813.5,723.2L811.0,722.4L808.5,721.6L805.9,720.9L803.4,720.1L800.9,719.3L798.4,718.5L795.9,717.7L793.4,716.9L790.9,716.2L788.4,715.4L785.8,714.6L783.3,713.8L780.8,713.0L778.3,712.2L775.8,711.5L773.3,710.7L770.8,709.9L768.3,709.1L765.7,708.3L763.2,707.5L760.7,706.8L758.2,706.0L755.7,705.2L753.2,704.4L750.7,703.6L748.2,702.8L745.6,702.1L743.1,701.3L740.6,700.5L738.1,699.7L735.6,698.9L733.1,698.1L730.6,697.3L728.1,696.6L725.5,695.8L723.0,695.0L720.5,694.2L718.0,693.4L715.5,692.6L713.0,691.9L710.5,691.1L708.0,690.3L705.4,689.5L702.9,688.7L700.4,687.9L697.9,687.2L695.4,686.4L692.9,685.6L690.4,684.8L687.9,684.0L685.3,683.2L682.8,682.5L680.3,681.7L677.8,680.9L675.3,680.1L672.8,679.3L670.3,678.5L667.8,677.7L665.2,677.0L662.7,676.2L660.2,675.4L657.7,674.6L655.2,673.8L652.7,673.0L650.2,672.3L647.7,671.5L645.1,670.7L642.6,669.9L640.1,669.1L637.6,668.3L635.1,667.6L632.6,666.8L630.1,666.0L627.6,665.2L625.0,664.4L622.5,663.6L620.0,662.9L617.5,662.1L615.0,661.3L612.5,660.5L610.0,659.7L607.5,658.9L604.9,658.2L602.4,657.4L599.9,656.6L597.4,655.8L594.9,655.0L592.4,654.2L589.9,653.4L587.4,652.7L584.8,651.9L582.3,651.1L579.8,650.3L577.3,649.5L574.8,648.7L572.3,648.0L569.8,647.2L567.3,646.4L564.7,645.6L562.2,644.8L559.7,644.0L557.2,643.3L554.7,642.5L552.2,641.7L549.7,640.9L547.2,640.1L544.6,639.3L542.1,638.6L539.6,637.8L537.1,637.0L534.6,636.2L532.1,635.4L529.6,634.6L527.1,633.8L524.5,633.1L522.0,632.3L519.5,631.5L517.0,630.7L514.5,629.9L512.0,629.1L509.5,628.4L507.0,627.6L504.4,626.8L501.9,626.0L499.4,625.2L496.9,624.4L496.5,624.3L496.9,625.5L497.0,625.9L497.5,627.5L498.0,629.1L498.5,630.6L499.0,632.2L499.3,633.1L499.5,633.8L500.0,635.4L500.5,637.0L501.0,638.5L501.5,640.1L501.8,640.9L502.0,641.7L502.5,643.3L503.0,644.8L503.4,646.4L503.9,648.0L504.2,648.8L504.4,649.5L504.9,651.1L505.4,652.7L505.8,654.3L506.3,655.8L506.6,656.9L506.8,657.4L507.2,659.0L507.7,660.5L508.1,662.1L508.6,663.6L509.0,665.1L509.0,665.2L509.5,666.8L509.9,668.3L510.4,669.9L510.8,671.5L511.3,673.0L511.4,673.6L511.7,674.6L512.2,676.1L512.6,677.7L513.0,679.3L513.4,680.8L513.9,682.3L513.9,682.4L514.3,683.9L514.7,685.5L515.1,687.0L515.6,688.6L516.0,690.1L516.3,691.3L516.4,691.7L516.8,693.2L517.2,694.8L517.6,696.3L518.0,697.9L518.4,699.4L518.7,700.5L518.8,701.0L519.2,702.5L519.6,704.1L520.0,705.6L520.3,707.1L520.7,708.7L521.1,710.1L521.1,710.2L521.5,711.8L521.9,713.3L522.2,714.8L522.6,716.4L523.0,717.9L523.3,719.5L523.5,720.1L523.7,721.0L524.1,722.5L524.4,724.1L524.8,725.6L525.1,727.1L525.5,728.7L525.8,730.2L525.9,730.5L526.1,731.7L526.5,733.2L526.8,734.8L527.2,736.3L527.5,737.8L527.8,739.3L528.1,740.9L528.3,741.5L528.5,742.4L528.8,743.9L529.1,745.4L529.4,747.0L529.7,748.5L530.0,750.0L530.3,751.5L530.6,753.0L530.6,753.1L530.9,754.5L531.2,756.1L531.5,757.6L531.8,759.1L532.1,760.6L532.4,762.1L532.6,763.6L532.9,765.1L533.0,765.8L533.2,766.6L533.4,768.1L533.7,769.6L533.9,771.1L534.2,772.6L534.4,774.1L534.7,775.6L534.9,777.1L535.1,778.6L535.4,780.0L535.4,780.1L535.6,781.6L535.8,783.1L536.1,784.6L536.3,786.1L536.5,787.6L536.7,789.1L536.9,790.6L537.2,792.1L537.4,793.5L537.6,795.0L537.7,795.8L537.8,796.5L538.0,798.0L538.2,799.5L538.4,801.0L538.6,802.5L538.8,803.9L539.0,805.4L539.2,806.9L539.3,808.4L539.5,809.9L539.7,811.3L539.9,812.8L540.0,813.7L540.1,814.3L540.2,815.8L540.4,817.2L540.6,818.7L540.7,820.2L540.9,821.7L541.1,823.1L541.2,824.6L541.4,826.1L541.5,827.6L541.7,829.0L541.8,830.5L542.0,832.0L542.1,833.4L542.2,834.9L542.2,834.9L542.4,836.4L542.5,837.8L542.7,839.3L542.8,840.8L542.9,842.2L543.0,843.7L543.2,845.1L543.3,846.6L543.4,848.1L543.5,849.5L543.6,851.0L543.7,852.4L543.8,853.9L543.9,855.3L544.0,856.8L544.1,858.2L544.2,859.7L544.3,861.2L544.4,862.6L544.4,862.6L544.5,864.1L544.6,865.5L544.7,867.0L544.8,868.4L544.9,869.8L544.9,871.3L545.0,872.7L545.1,874.2L545.1,875.6L545.2,877.1L545.3,878.5L545.3,880.0L545.4,881.4L545.5,882.8L545.5,884.3L545.6,885.7L545.6,887.2L545.7,888.6L545.7,890.0L545.7,891.5L545.8,892.9L545.8,894.3L545.9,895.8L545.9,897.2L545.9,898.6L545.9,900.1L546.0,901.5L546.0,902.9L546.0,904.4L546.0,905.8L546.0,907.2L546.1,908.6L546.1,910.1L546.1,911.5L546.1,912.9L546.1,914.3L546.1,915.8L546.1,917.2L546.1,918.6L546.1,920.0L546.0,921.4L546.0,922.9Z" fill="#ffdd00"/>
<path d="M603.9,940.9L606.4,941.7L608.9,942.5L611.4,943.3L613.9,944.1L616.4,944.9L618.9,945.6L621.4,946.4L623.9,947.2L626.4,948.0L628.9,948.8L631.5,949.6L634.0,950.3L636.5,951.1L639.0,951.9L641.5,952.7L644.0,953.5L646.5,954.3L649.0,955.0L651.5,955.8L654.0,956.6L656.5,957.4L659.0,958.2L661.5,959.0L664.1,959.7L666.6,960.5L669.1,961.3L671.6,962.1L674.1,962.9L676.6,963.7L679.1,964.5L681.6,965.2L684.1,966.0L686.6,966.8L689.1,967.6L691.6,968.4L694.1,969.2L696.7,969.9L699.2,970.7L701.7,971.5L704.2,972.3L706.7,973.1L709.2,973.9L711.7,974.6L714.2,975.4L716.7,976.2L719.2,977.0L721.7,977.8L724.2,978.6L726.7,979.3L729.3,980.1L731.8,980.9L734.3,981.7L736.8,982.5L739.3,983.3L741.8,984.1L744.3,984.8L746.8,985.6L749.3,986.4L751.8,987.2L754.3,988.0L756.8,988.8L759.3,989.5L761.8,990.3L764.4,991.1L766.9,991.9L769.4,992.7L771.9,993.5L774.4,994.2L776.9,995.0L779.4,995.8L781.9,996.6L784.4,997.4L786.9,998.2L789.4,998.9L791.9,999.7L794.4,1000.5L797.0,1001.3L799.5,1002.1L802.0,1002.9L804.5,1003.6L807.0,1004.4L809.5,1005.2L812.0,1006.0L812.0,1004.6L812.0,1003.2L812.1,1001.7L812.1,1000.3L812.1,998.9L812.1,997.5L812.1,996.1L812.2,994.7L812.2,993.2L812.2,991.8L812.2,990.4L812.2,989.0L812.3,987.6L812.3,986.2L812.3,984.7L812.3,983.3L812.3,981.9L812.4,980.5L812.4,979.1L812.4,977.7L812.4,976.2L812.4,974.8L812.5,973.4L812.5,972.0L812.5,970.6L812.5,969.2L812.5,967.7L812.6,966.3L812.6,964.9L812.6,963.5L812.6,962.1L812.6,960.7L812.7,959.2L812.7,957.8L812.7,956.4L812.7,955.0L812.7,953.6L812.8,952.2L812.8,950.7L812.8,949.3L812.8,947.9L812.8,946.5L812.9,945.1L812.9,943.6L812.9,942.2L812.9,940.8L812.9,939.4L813.0,938.0L813.0,936.6L813.0,935.1L813.0,933.7L813.0,932.3L813.1,930.9L813.1,929.5L813.1,928.1L813.1,926.6L813.1,925.2L813.2,923.8L813.2,922.4L813.2,921.0L813.2,919.6L813.2,918.1L813.3,916.7L813.3,915.3L813.3,913.9L813.3,912.5L813.3,911.1L813.4,909.6L813.4,908.2L813.4,906.8L813.4,905.4L813.4,904.0L813.5,902.6L813.5,901.1L813.5,899.7L813.5,898.3L813.5,896.9L813.6,895.5L813.6,894.1L813.6,892.6L813.6,891.2L813.6,889.8L813.7,888.4L813.7,887.0L813.7,885.5L813.7,884.1L813.7,882.7L813.8,881.3L813.8,879.9L813.8,878.5L813.8,877.0L813.8,875.6L813.9,874.2L813.9,872.8L813.9,871.4L813.9,870.0L813.9,868.5L814.0,867.1L814.0,865.7L814.0,864.3L814.0,862.9L814.1,861.5L814.1,860.0L814.1,858.6L814.1,857.2L814.1,855.8L814.2,854.4L814.2,853.0L814.2,851.5L814.2,850.1L814.2,848.7L814.3,847.3L814.3,845.9L814.3,844.5L814.3,843.0L814.3,841.6L814.4,840.2L814.4,838.8L814.4,837.4L814.4,835.9L814.4,834.5L814.5,833.1L814.5,831.7L814.5,830.3L814.5,828.9L814.5,827.4L814.6,826.0L814.6,824.6L814.6,823.2L814.6,821.8L814.6,820.4L814.7,818.9L814.7,817.5L814.7,816.1L814.7,814.7L814.7,813.3L814.8,811.9L814.8,810.4L814.8,809.0L814.8,807.6L814.8,806.2L814.9,804.8L814.9,803.4L814.9,801.9L814.9,800.5L814.9,799.1L815.0,797.7L815.0,796.3L815.0,794.9L815.0,793.4L815.0,792.0L815.1,790.6L815.1,789.2L815.1,787.8L815.1,786.4L815.1,784.9L815.2,783.5L815.2,782.1L815.2,780.7L815.2,779.3L815.2,777.8L815.3,776.4L815.3,775.0L815.3,773.6L815.3,772.2L815.3,770.8L815.4,769.3L815.4,767.9L815.4,766.5L815.4,765.1L815.4,763.7L815.5,762.3L815.5,760.8L815.5,759.4L815.5,758.0L815.5,756.6L815.6,755.2L815.6,753.8L815.6,752.3L815.6,750.9L815.6,749.5L815.7,748.1L815.7,746.7L815.7,745.3L815.7,743.8L815.7,742.4L815.8,741.0L815.8,739.6L815.8,738.2L815.8,736.8L815.8,735.3L815.9,733.9L815.9,732.5L815.9,731.1L815.9,729.7L815.9,728.3L816.0,726.8L816.0,725.4L816.0,724.0L813.5,723.2L811.0,722.4L808.5,721.6L805.9,720.9L803.4,720.1L800.9,719.3L798.4,718.5L795.9,717.7L793.4,716.9L790.9,716.2L788.4,715.4L785.8,714.6L783.3,713.8L780.8,713.0L778.3,712.2L775.8,711.5L773.3,710.7L770.8,709.9L768.3,709.1L765.7,708.3L763.2,707.5L760.7,706.8L758.2,706.0L755.7,705.2L753.2,704.4L750.7,703.6L748.2,702.8L745.6,702.1L743.1,701.3L740.6,700.5L738.1,699.7L735.6,698.9L733.1,698.1L730.6,697.3L728.1,696.6L725.5,695.8L723.0,695.0L720.5,694.2L718.0,693.4L715.5,692.6L713.0,691.9L710.5,691.1L708.0,690.3L705.4,689.5L702.9,688.7L700.4,687.9L697.9,687.2L695.4,686.4L692.9,685.6L690.4,684.8L687.9,684.0L685.3,683.2L682.8,682.5L680.3,681.7L677.8,680.9L675.3,680.1L672.8,679.3L670.3,678.5L667.8,677.7L665.2,677.0L662.7,676.2L660.2,675.4L657.7,674.6L655.2,673.8L652.7,673.0L650.2,672.3L647.7,671.5L645.1,670.7L642.6,669.9L640.1,669.1L637.6,668.3L635.1,667.6L632.6,666.8L630.1,666.0L627.6,665.2L625.0,664.4L622.5,663.6L620.0,662.9L617.5,662.1L615.0,661.3L612.5,660.5L610.0,659.7L607.5,658.9L604.9,658.2L602.4,657.4L599.9,656.6L597.4,655.8L594.9,655.0L592.4,654.2L589.9,653.4L587.4,652.7L584.8,651.9L582.3,651.1L579.8,650.3L577.3,649.5L574.8,648.7L572.3,648.0L569.8,647.2L567.3,646.4L564.7,645.6L562.2,644.8L559.7,644.0L557.2,643.3L554.7,642.5L553.9,642.2L554.4,643.8L554.7,644.8L554.8,645.4L555.2,646.9L555.6,648.5L556.0,650.0L556.4,651.5L556.8,653.1L557.1,654.0L557.2,654.6L557.6,656.2L558.0,657.7L558.4,659.3L558.8,660.8L559.2,662.4L559.5,663.3L559.7,663.9L560.1,665.5L560.5,667.0L560.9,668.6L561.3,670.1L561.7,671.7L561.9,672.5L562.1,673.2L562.5,674.8L562.9,676.3L563.3,677.9L563.7,679.4L564.1,681.0L564.3,681.8L564.5,682.5L564.9,684.1L565.3,685.6L565.7,687.1L566.1,688.7L566.5,690.2L566.7,691.2L566.8,691.8L567.2,693.3L567.6,694.9L568.0,696.4L568.4,698.0L568.8,699.5L569.1,700.7L569.2,701.1L569.6,702.6L570.0,704.1L570.4,705.7L570.8,707.2L571.1,708.8L571.5,710.2L571.5,710.3L571.9,711.9L572.3,713.4L572.7,714.9L573.1,716.5L573.4,718.0L573.8,719.6L573.9,719.9L574.2,721.1L574.6,722.7L575.0,724.2L575.3,725.7L575.7,727.3L576.1,728.8L576.3,729.8L576.4,730.3L576.8,731.9L577.2,733.4L577.5,735.0L577.9,736.5L578.3,738.0L578.6,739.6L578.7,739.9L579.0,741.1L579.3,742.6L579.7,744.2L580.1,745.7L580.4,747.2L580.8,748.8L581.1,750.2L581.1,750.3L581.5,751.8L581.8,753.4L582.2,754.9L582.5,756.4L582.8,758.0L583.2,759.5L583.5,760.8L583.5,761.0L583.8,762.5L584.2,764.1L584.5,765.6L584.8,767.1L585.2,768.6L585.5,770.2L585.8,771.7L585.9,771.9L586.1,773.2L586.4,774.7L586.8,776.2L587.1,777.8L587.4,779.3L587.7,780.8L588.0,782.3L588.2,783.5L588.3,783.8L588.6,785.4L588.9,786.9L589.2,788.4L589.5,789.9L589.8,791.4L590.0,792.9L590.3,794.4L590.6,795.9L590.6,795.9L590.9,797.5L591.2,799.0L591.4,800.5L591.7,802.0L592.0,803.5L592.2,805.0L592.5,806.5L592.8,808.0L593.0,809.1L593.0,809.5L593.3,811.0L593.5,812.5L593.8,814.0L594.0,815.5L594.2,817.0L594.5,818.5L594.7,820.0L595.0,821.5L595.2,823.0L595.3,823.6L595.4,824.5L595.6,826.0L595.9,827.5L596.1,828.9L596.3,830.4L596.5,831.9L596.7,833.4L596.9,834.9L597.1,836.4L597.3,837.9L597.5,839.4L597.6,840.1L597.7,840.8L597.9,842.3L598.1,843.8L598.2,845.3L598.4,846.8L598.6,848.2L598.8,849.7L598.9,851.2L599.1,852.7L599.2,854.1L599.4,855.6L599.6,857.1L599.7,858.5L599.8,860.0L599.9,860.2L600.0,861.5L600.1,862.9L600.3,864.4L600.4,865.9L600.5,867.3L600.6,868.8L600.8,870.3L600.9,871.7L601.0,873.2L601.1,874.6L601.2,876.1L601.3,877.5L601.4,879.0L601.5,880.4L601.6,881.9L601.7,883.3L601.8,884.8L601.9,886.2L602.0,887.7L602.0,888.9L602.0,889.1L602.1,890.6L602.2,892.0L602.2,893.5L602.3,894.9L602.4,896.4L602.4,897.8L602.5,899.2L602.5,900.7L602.6,902.1L602.6,903.5L602.6,905.0L602.7,906.4L602.7,907.8L602.7,909.3L602.7,910.7L602.8,912.1L602.8,913.6L602.8,915.0L602.8,916.4L602.8,917.8L602.8,919.3L602.8,920.7L602.8,922.1L602.8,923.5L602.8,924.9L602.8,926.4L602.7,927.8L602.7,929.2L602.7,930.6L602.7,932.0L602.6,933.4L602.6,934.8L602.6,936.3L602.5,937.7L602.5,939.1L602.4,940.5Z" fill="#ffaa00"/>
<path d="M659.0,958.2L661.5,959.0L664.1,959.7L666.6,960.5L669.1,961.3L671.6,962.1L674.1,962.9L676.6,963.7L679.1,964.5L681.6,965.2L684.1,966.0L686.6,966.8L689.1,967.6L691.6,968.4L694.1,969.2L696.7,969.9L699.2,970.7L701.7,971.5L704.2,972.3L706.7,973.1L709.2,973.9L711.7,974.6L714.2,975.4L716.7,976.2L719.2,977.0L721.7,977.8L724.2,978.6L726.7,979.3L729.3,980.1L731.8,980.9L734.3,981.7L736.8,982.5L739.3,983.3L741.8,984.1L744.3,984.8L746.8,985.6L749.3,986.4L751.8,987.2L754.3,988.0L756.8,988.8L759.3,989.5L761.8,990.3L764.4,991.1L766.9,991.9L769.4,992.7L771.9,993.5L774.4,994.2L776.9,995.0L779.4,995.8L781.9,996.6L784.4,997.4L786.9,998.2L789.4,998.9L791.9,999.7L794.4,1000.5L797.0,1001.3L799.5,1002.1L802.0,1002.9L804.5,1003.6L807.0,1004.4L809.5,1005.2L812.0,1006.0L812.0,1004.6L812.0,1003.2L812.1,1001.7L812.1,1000.3L812.1,998.9L812.1,997.5L812.1,996.1L812.2,994.7L812.2,993.2L812.2,991.8L812.2,990.4L812.2,989.0L812.3,987.6L812.3,986.2L812.3,984.7L812.3,983.3L812.3,981.9L812.4,980.5L812.4,979.1L812.4,977.7L812.4,976.2L812.4,974.8L812.5,973.4L812.5,972.0L812.5,970.6L812.5,969.2L812.5,967.7L812.6,966.3L812.6,964.9L812.6,963.5L812.6,962.1L812.6,960.7L812.7,959.2L812.7,957.8L812.7,956.4L812.7,955.0L812.7,953.6L812.8,952.2L812.8,950.7L812.8,949.3L812.8,947.9L812.8,946.5L812.9,945.1L812.9,943.6L812.9,942.2L812.9,940.8L812.9,939.4L813.0,938.0L813.0,936.6L813.0,935.1L813.0,933.7L813.0,932.3L813.1,930.9L813.1,929.5L813.1,928.1L813.1,926.6L813.1,925.2L813.2,923.8L813.2,922.4L813.2,921.0L813.2,919.6L813.2,918.1L813.3,916.7L813.3,915.3L813.3,913.9L813.3,912.5L813.3,911.1L813.4,909.6L813.4,908.2L813.4,906.8L813.4,905.4L813.4,904.0L813.5,902.6L813.5,901.1L813.5,899.7L813.5,898.3L813.5,896.9L813.6,895.5L813.6,894.1L813.6,892.6L813.6,891.2L813.6,889.8L813.7,888.4L813.7,887.0L813.7,885.5L813.7,884.1L813.7,882.7L813.8,881.3L813.8,879.9L813.8,878.5L813.8,877.0L813.8,875.6L813.9,874.2L813.9,872.8L813.9,871.4L813.9,870.0L813.9,868.5L814.0,867.1L814.0,865.7L814.0,864.3L814.0,862.9L814.1,861.5L814.1,860.0L814.1,858.6L814.1,857.2L814.1,855.8L814.2,854.4L814.2,853.0L814.2,851.5L814.2,850.1L814.2,848.7L814.3,847.3L814.3,845.9L814.3,844.5L814.3,843.0L814.3,841.6L814.4,840.2L814.4,838.8L814.4,837.4L814.4,835.9L814.4,834.5L814.5,833.1L814.5,831.7L814.5,830.3L814.5,828.9L814.5,827.4L814.6,826.0L814.6,824.6L814.6,823.2L814.6,821.8L814.6,820.4L814.7,818.9L814.7,817.5L814.7,816.1L814.7,814.7L814.7,813.3L814.8,811.9L814.8,810.4L814.8,809.0L814.8,807.6L814.8,806.2L814.9,804.8L814.9,803.4L814.9,801.9L814.9,800.5L814.9,799.1L815.0,797.7L815.0,796.3L815.0,794.9L815.0,793.4L815.0,792.0L815.1,790.6L815.1,789.2L815.1,787.8L815.1,786.4L815.1,784.9L815.2,783.5L815.2,782.1L815.2,780.7L815.2,779.3L815.2,777.8L815.3,776.4L815.3,775.0L815.3,773.6L815.3,772.2L815.3,770.8L815.4,769.3L815.4,767.9L815.4,766.5L815.4,765.1L815.4,763.7L815.5,762.3L815.5,760.8L815.5,759.4L815.5,758.0L815.5,756.6L815.6,755.2L815.6,753.8L815.6,752.3L815.6,750.9L815.6,749.5L815.7,748.1L815.7,746.7L815.7,745.3L815.7,743.8L815.7,742.4L815.8,741.0L815.8,739.6L815.8,738.2L815.8,736.8L815.8,735.3L815.9,733.9L815.9,732.5L815.9,731.1L815.9,729.7L815.9,728.3L816.0,726.8L816.0,725.4L816.0,724.0L813.5,723.2L811.0,722.4L808.5,721.6L805.9,720.9L803.4,720.1L800.9,719.3L798.4,718.5L795.9,717.7L793.4,716.9L790.9,716.2L788.4,715.4L785.8,714.6L783.3,713.8L780.8,713.0L778.3,712.2L775.8,711.5L773.3,710.7L770.8,709.9L768.3,709.1L765.7,708.3L763.2,707.5L760.7,706.8L758.2,706.0L755.7,705.2L753.2,704.4L750.7,703.6L748.2,702.8L745.6,702.1L743.1,701.3L740.6,700.5L738.1,699.7L735.6,698.9L733.1,698.1L730.6,697.3L728.1,696.6L725.5,695.8L723.0,695.0L720.5,694.2L718.0,693.4L715.5,692.6L713.0,691.9L710.5,691.1L708.0,690.3L705.4,689.5L702.9,688.7L700.4,687.9L697.9,687.2L695.4,686.4L692.9,685.6L690.4,684.8L687.9,684.0L685.3,683.2L682.8,682.5L680.3,681.7L677.8,680.9L675.3,680.1L672.8,679.3L670.3,678.5L667.8,677.7L665.2,677.0L662.7,676.2L660.2,675.4L657.7,674.6L655.2,673.8L652.7,673.0L650.2,672.3L647.7,671.5L645.1,670.7L642.6,669.9L640.1,669.1L637.6,668.3L635.1,667.6L632.6,666.8L630.1,666.0L627.6,665.2L625.0,664.4L622.5,663.6L620.0,662.9L617.5,662.1L615.0,661.3L612.5,660.5L610.0,659.7L607.5,658.9L604.9,658.2L602.4,657.4L600.0,656.6L600.6,658.2L601.1,659.8L601.7,661.4L602.2,663.0L602.4,663.3L602.8,664.6L603.3,666.2L603.9,667.8L604.5,669.4L604.8,670.4L605.0,671.0L605.5,672.6L606.1,674.2L606.6,675.8L607.2,677.3L607.2,677.5L607.7,678.9L608.3,680.5L608.8,682.1L609.3,683.7L609.7,684.7L609.9,685.3L610.4,686.9L610.9,688.5L611.5,690.1L612.0,691.6L612.1,691.9L612.5,693.2L613.0,694.8L613.6,696.4L614.1,698.0L614.5,699.3L614.6,699.6L615.1,701.2L615.6,702.7L616.1,704.3L616.6,705.9L616.9,706.8L617.1,707.5L617.7,709.1L618.2,710.6L618.7,712.2L619.2,713.8L619.4,714.5L619.7,715.4L620.1,717.0L620.6,718.5L621.1,720.1L621.6,721.7L621.8,722.2L622.1,723.3L622.6,724.8L623.1,726.4L623.5,728.0L624.0,729.5L624.2,730.2L624.5,731.1L625.0,732.7L625.4,734.3L625.9,735.8L626.4,737.4L626.6,738.3L626.8,739.0L627.3,740.5L627.7,742.1L628.2,743.7L628.6,745.2L629.0,746.6L629.1,746.8L629.5,748.3L630.0,749.9L630.4,751.5L630.8,753.0L631.3,754.6L631.4,755.2L631.7,756.1L632.1,757.7L632.6,759.3L633.0,760.8L633.4,762.4L633.8,763.9L633.9,764.0L634.2,765.5L634.7,767.0L635.1,768.6L635.5,770.1L635.9,771.7L636.3,773.1L636.3,773.2L636.7,774.8L637.1,776.3L637.5,777.9L637.8,779.4L638.2,780.9L638.6,782.5L638.7,782.6L639.0,784.0L639.4,785.6L639.7,787.1L640.1,788.6L640.5,790.2L640.8,791.7L641.0,792.6L641.2,793.2L641.5,794.8L641.8,796.3L642.1,797.8L642.4,799.3L642.7,800.8L643.0,802.3L643.2,803.8L643.4,804.7L643.5,805.4L643.8,806.9L644.1,808.4L644.3,809.9L644.6,811.4L644.9,812.9L645.1,814.4L645.4,815.9L645.6,817.4L645.8,818.1L645.9,818.9L646.1,820.4L646.4,821.9L646.6,823.4L646.9,824.9L647.1,826.4L647.3,827.9L647.6,829.4L647.8,830.9L648.0,832.4L648.1,832.9L648.2,833.9L648.4,835.3L648.7,836.8L648.9,838.3L649.1,839.8L649.3,841.3L649.5,842.8L649.7,844.3L649.9,845.8L650.1,847.2L650.3,848.7L650.4,849.7L650.4,850.2L650.6,851.7L650.8,853.2L651.0,854.6L651.2,856.1L651.3,857.6L651.5,859.1L651.7,860.6L651.9,862.0L652.0,863.5L652.2,865.0L652.3,866.4L652.5,867.9L652.6,869.3L652.7,869.4L652.8,870.9L653.0,872.3L653.1,873.8L653.3,875.3L653.4,876.7L653.5,878.2L653.7,879.7L653.8,881.1L654.0,882.6L654.1,884.1L654.2,885.5L654.3,887.0L654.5,888.5L654.6,889.9L654.7,891.4L654.8,892.8L654.9,893.1L655.0,894.3L655.1,895.8L655.2,897.2L655.3,898.7L655.4,900.1L655.5,901.6L655.6,903.0L655.7,904.5L655.8,905.9L655.9,907.4L656.0,908.9L656.1,910.3L656.2,911.8L656.3,913.2L656.3,914.7L656.4,916.1L656.5,917.5L656.6,919.0L656.7,920.4L656.7,921.9L656.8,923.3L656.9,924.8L656.9,926.1L656.9,926.2L657.0,927.7L657.1,929.1L657.1,930.6L657.2,932.0L657.2,933.4L657.3,934.9L657.4,936.3L657.4,937.7L657.4,939.2L657.5,940.6L657.5,942.1L657.6,943.5L657.6,944.9L657.6,946.4L657.7,947.8L657.7,949.2L657.7,950.7L657.7,952.1L657.8,953.5L657.8,954.9L657.8,956.4L657.8,957.8Z" fill="#ff7700"/>
<path d="M714.2,975.4L716.7,976.2L719.2,977.0L721.7,977.8L724.2,978.6L726.7,979.3L729.3,980.1L731.8,980.9L734.3,981.7L736.8,982.5L739.3,983.3L741.8,984.1L744.3,984.8L746.8,985.6L749.3,986.4L751.8,987.2L754.3,988.0L756.8,988.8L759.3,989.5L761.8,990.3L764.4,991.1L766.9,991.9L769.4,992.7L771.9,993.5L774.4,994.2L776.9,995.0L779.4,995.8L781.9,996.6L784.4,997.4L786.9,998.2L789.4,998.9L791.9,999.7L794.4,1000.5L797.0,1001.3L799.5,1002.1L802.0,1002.9L804.5,1003.6L807.0,1004.4L809.5,1005.2L812.0,1006.0L812.0,1004.6L812.0,1003.2L812.1,1001.7L812.1,1000.3L812.1,998.9L812.1,997.5L812.1,996.1L812.2,994.7L812.2,993.2L812.2,991.8L812.2,990.4L812.2,989.0L812.3,987.6L812.3,986.2L812.3,984.7L812.3,983.3L812.3,981.9L812.4,980.5L812.4,979.1L812.4,977.7L812.4,976.2L812.4,974.8L812.5,973.4L812.5,972.0L812.5,970.6L812.5,969.2L812.5,967.7L812.6,966.3L812.6,964.9L812.6,963.5L812.6,962.1L812.6,960.7L812.7,959.2L812.7,957.8L812.7,956.4L812.7,955.0L812.7,953.6L812.8,952.2L812.8,950.7L812.8,949.3L812.8,947.9L812.8,946.5L812.9,945.1L812.9,943.6L812.9,942.2L812.9,940.8L812.9,939.4L813.0,938.0L813.0,936.6L813.0,935.1L813.0,933.7L813.0,932.3L813.1,930.9L813.1,929.5L813.1,928.1L813.1,926.6L813.1,925.2L813.2,923.8L813.2,922.4L813.2,921.0L813.2,919.6L813.2,918.1L813.3,916.7L813.3,915.3L813.3,913.9L813.3,912.5L813.3,911.1L813.4,909.6L813.4,908.2L813.4,906.8L813.4,905.4L813.4,904.0L813.5,902.6L813.5,901.1L813.5,899.7L813.5,898.3L813.5,896.9L813.6,895.5L813.6,894.1L813.6,892.6L813.6,891.2L813.6,889.8L813.7,888.4L813.7,887.0L813.7,885.5L813.7,884.1L813.7,882.7L813.8,881.3L813.8,879.9L813.8,878.5L813.8,877.0L813.8,875.6L813.9,874.2L813.9,872.8L813.9,871.4L813.9,870.0L813.9,868.5L814.0,867.1L814.0,865.7L814.0,864.3L814.0,862.9L814.1,861.5L814.1,860.0L814.1,858.6L814.1,857.2L814.1,855.8L814.2,854.4L814.2,853.0L814.2,851.5L814.2,850.1L814.2,848.7L814.3,847.3L814.3,845.9L814.3,844.5L814.3,843.0L814.3,841.6L814.4,840.2L814.4,838.8L814.4,837.4L814.4,835.9L814.4,834.5L814.5,833.1L814.5,831.7L814.5,830.3L814.5,828.9L814.5,827.4L814.6,826.0L814.6,824.6L814.6,823.2L814.6,821.8L814.6,820.4L814.7,818.9L814.7,817.5L814.7,816.1L814.7,814.7L814.7,813.3L814.8,811.9L814.8,810.4L814.8,809.0L814.8,807.6L814.8,806.2L814.9,804.8L814.9,803.4L814.9,801.9L814.9,800.5L814.9,799.1L815.0,797.7L815.0,796.3L815.0,794.9L815.0,793.4L815.0,792.0L815.1,790.6L815.1,789.2L815.1,787.8L815.1,786.4L815.1,784.9L815.2,783.5L815.2,782.1L815.2,780.7L815.2,779.3L815.2,777.8L815.3,776.4L815.3,775.0L815.3,773.6L815.3,772.2L815.3,770.8L815.4,769.3L815.4,767.9L815.4,766.5L815.4,765.1L815.4,763.7L815.5,762.3L815.5,760.8L815.5,759.4L815.5,758.0L815.5,756.6L815.6,755.2L815.6,753.8L815.6,752.3L815.6,750.9L815.6,749.5L815.7,748.1L815.7,746.7L815.7,745.3L815.7,743.8L815.7,742.4L815.8,741.0L815.8,739.6L815.8,738.2L815.8,736.8L815.8,735.3L815.9,733.9L815.9,732.5L815.9,731.1L815.9,729.7L815.9,728.3L816.0,726.8L816.0,725.4L816.0,724.0L813.5,723.2L811.0,722.4L808.5,721.6L805.9,720.9L803.4,720.1L800.9,719.3L798.4,718.5L795.9,717.7L793.4,716.9L790.9,716.2L788.4,715.4L785.8,714.6L783.3,713.8L780.8,713.0L778.3,712.2L775.8,711.5L773.3,710.7L770.8,709.9L768.3,709.1L765.7,708.3L763.2,707.5L760.7,706.8L758.2,706.0L755.7,705.2L753.2,704.4L750.7,703.6L748.2,702.8L745.6,702.1L743.1,701.3L740.6,700.5L738.1,699.7L735.6,698.9L733.1,698.1L730.6,697.3L728.1,696.6L725.5,695.8L723.0,695.0L720.5,694.2L718.0,693.4L715.5,692.6L713.0,691.9L710.5,691.1L708.0,690.3L705.4,689.5L702.9,688.7L700.4,687.9L697.9,687.2L695.4,686.4L692.9,685.6L690.4,684.8L687.9,684.0L685.3,683.2L682.8,682.5L680.3,681.7L677.8,680.9L675.3,680.1L672.8,679.3L670.3,678.5L667.8,677.7L665.2,677.0L662.7,676.2L660.2,675.4L657.7,674.6L655.2,673.8L652.7,673.0L650.2,672.3L649.6,672.1L650.2,673.5L650.2,673.7L651.0,675.4L651.7,677.0L652.4,678.6L652.6,679.2L653.1,680.3L653.7,681.9L654.4,683.5L655.0,685.1L655.1,685.2L655.7,686.8L656.3,688.4L657.0,690.0L657.5,691.4L657.6,691.7L658.2,693.3L658.8,694.9L659.4,696.5L659.9,698.0L660.0,698.1L660.5,699.7L661.1,701.3L661.6,702.9L662.2,704.5L662.4,705.0L662.7,706.1L663.3,707.6L663.8,709.2L664.3,710.8L664.8,712.3L664.8,712.4L665.3,714.0L665.8,715.6L666.3,717.1L666.8,718.7L667.2,720.1L667.3,720.3L667.7,721.8L668.2,723.4L668.6,725.0L669.1,726.5L669.5,728.1L669.6,728.4L670.0,729.7L670.4,731.2L670.8,732.8L671.3,734.3L671.7,735.9L672.0,737.1L672.1,737.4L672.5,739.0L672.9,740.5L673.3,742.1L673.7,743.6L674.1,745.2L674.4,746.4L674.5,746.7L674.9,748.3L675.3,749.8L675.6,751.4L676.0,752.9L676.4,754.4L676.7,756.0L676.8,756.3L677.1,757.5L677.4,759.0L677.8,760.6L678.1,762.1L678.5,763.6L678.8,765.2L679.2,766.7L679.2,766.8L679.5,768.2L679.8,769.7L680.2,771.3L680.5,772.8L680.8,774.3L681.1,775.8L681.4,777.4L681.6,778.0L681.7,778.9L682.1,780.4L682.4,781.9L682.7,783.4L683.0,784.9L683.3,786.5L683.6,788.0L683.9,789.5L683.9,789.9L684.1,791.0L684.4,792.5L684.7,794.0L685.0,795.5L685.3,797.1L685.6,798.6L685.8,800.1L686.1,801.6L686.3,802.5L686.4,803.1L686.7,804.6L687.0,806.1L687.3,807.7L687.6,809.2L687.9,810.7L688.2,812.2L688.5,813.7L688.7,814.3L688.9,815.2L689.2,816.8L689.5,818.3L689.8,819.8L690.2,821.3L690.5,822.9L690.8,824.4L691.0,825.4L691.1,825.9L691.5,827.4L691.8,829.0L692.1,830.5L692.4,832.0L692.7,833.5L693.0,835.0L693.3,836.6L693.4,836.9L693.6,838.1L693.9,839.6L694.2,841.1L694.5,842.6L694.8,844.1L695.1,845.7L695.4,847.2L695.7,848.7L695.7,849.0L696.0,850.2L696.3,851.7L696.5,853.2L696.8,854.7L697.1,856.2L697.4,857.7L697.6,859.3L697.9,860.8L698.1,861.8L698.2,862.3L698.5,863.8L698.7,865.3L699.0,866.8L699.2,868.3L699.5,869.8L699.8,871.3L700.0,872.8L700.3,874.3L700.4,875.3L700.5,875.8L700.8,877.3L701.0,878.8L701.3,880.3L701.5,881.8L701.7,883.3L702.0,884.8L702.2,886.3L702.5,887.8L702.7,889.3L702.8,889.8L702.9,890.8L703.1,892.3L703.4,893.8L703.6,895.3L703.8,896.8L704.0,898.3L704.3,899.7L704.5,901.2L704.7,902.7L704.9,904.2L705.1,905.5L705.1,905.7L705.3,907.2L705.5,908.7L705.7,910.2L705.9,911.6L706.1,913.1L706.3,914.6L706.5,916.1L706.7,917.6L706.9,919.1L707.1,920.6L707.3,922.0L707.4,922.6L707.5,923.5L707.7,925.0L707.8,926.5L708.0,928.0L708.2,929.4L708.4,930.9L708.6,932.4L708.7,933.9L708.9,935.3L709.1,936.8L709.2,938.3L709.4,939.8L709.6,941.2L709.6,941.8L709.7,942.7L709.9,944.2L710.0,945.7L710.2,947.1L710.3,948.6L710.5,950.1L710.6,951.5L710.8,953.0L710.9,954.5L711.1,955.9L711.2,957.4L711.3,958.9L711.5,960.3L711.6,961.8L711.7,963.3L711.8,964.5L711.9,964.7L712.0,966.2L712.1,967.7L712.2,969.1L712.4,970.6L712.5,972.0L712.6,973.5L712.7,975.0Z" fill="#ff3300"/>
<path d="M769.4,991.3L769.6,992.7L771.9,993.5L774.4,994.2L776.9,995.0L779.4,995.8L781.9,996.6L784.4,997.4L786.9,998.2L789.4,998.9L791.9,999.7L794.4,1000.5L797.0,1001.3L799.5,1002.1L802.0,1002.9L804.5,1003.6L807.0,1004.4L809.5,1005.2L812.0,1006.0L812.0,1004.6L812.0,1003.2L812.1,1001.7L812.1,1000.3L812.1,998.9L812.1,997.5L812.1,996.1L812.2,994.7L812.2,993.2L812.2,991.8L812.2,990.4L812.2,989.0L812.3,987.6L812.3,986.2L812.3,984.7L812.3,983.3L812.3,981.9L812.4,980.5L812.4,979.1L812.4,977.7L812.4,976.2L812.4,974.8L812.5,973.4L812.5,972.0L812.5,970.6L812.5,969.2L812.5,967.7L812.6,966.3L812.6,964.9L812.6,963.5L812.6,962.1L812.6,960.7L812.7,959.2L812.7,957.8L812.7,956.4L812.7,955.0L812.7,953.6L812.8,952.2L812.8,950.7L812.8,949.3L812.8,947.9L812.8,946.5L812.9,945.1L812.9,943.6L812.9,942.2L812.9,940.8L812.9,939.4L813.0,938.0L813.0,936.6L813.0,935.1L813.0,933.7L813.0,932.3L813.1,930.9L813.1,929.5L813.1,928.1L813.1,926.6L813.1,925.2L813.2,923.8L813.2,922.4L813.2,921.0L813.2,919.6L813.2,918.1L813.3,916.7L813.3,915.3L813.3,913.9L813.3,912.5L813.3,911.1L813.4,909.6L813.4,908.2L813.4,906.8L813.4,905.4L813.4,904.0L813.5,902.6L813.5,901.1L813.5,899.7L813.5,898.3L813.5,896.9L813.6,895.5L813.6,894.1L813.6,892.6L813.6,891.2L813.6,889.8L813.7,888.4L813.7,887.0L813.7,885.5L813.7,884.1L813.7,882.7L813.8,881.3L813.8,879.9L813.8,878.5L813.8,877.0L813.8,875.6L813.9,874.2L813.9,872.8L813.9,871.4L813.9,870.0L813.9,868.5L814.0,867.1L814.0,865.7L814.0,864.3L814.0,862.9L814.1,861.5L814.1,860.0L814.1,858.6L814.1,857.2L814.1,855.8L814.2,854.4L814.2,853.0L814.2,851.5L814.2,850.1L814.2,848.7L814.3,847.3L814.3,845.9L814.3,844.5L814.3,843.0L814.3,841.6L814.4,840.2L814.4,838.8L814.4,837.4L814.4,835.9L814.4,834.5L814.5,833.1L814.5,831.7L814.5,830.3L814.5,828.9L814.5,827.4L814.6,826.0L814.6,824.6L814.6,823.2L814.6,821.8L814.6,820.4L814.7,818.9L814.7,817.5L814.7,816.1L814.7,814.7L814.7,813.3L814.8,811.9L814.8,810.4L814.8,809.0L814.8,807.6L814.8,806.2L814.9,804.8L814.9,803.4L814.9,801.9L814.9,800.5L814.9,799.1L815.0,797.7L815.0,796.3L815.0,794.9L815.0,793.4L815.0,792.0L815.1,790.6L815.1,789.2L815.1,787.8L815.1,786.4L815.1,784.9L815.2,783.5L815.2,782.1L815.2,780.7L815.2,779.3L815.2,777.8L815.3,776.4L815.3,775.0L815.3,773.6L815.3,772.2L815.3,770.8L815.4,769.3L815.4,767.9L815.4,766.5L815.4,765.1L815.4,763.7L815.5,762.3L815.5,760.8L815.5,759.4L815.5,758.0L815.5,756.6L815.6,755.2L815.6,753.8L815.6,752.3L815.6,750.9L815.6,749.5L815.7,748.1L815.7,746.7L815.7,745.3L815.7,743.8L815.7,742.4L815.8,741.0L815.8,739.6L815.8,738.2L815.8,736.8L815.8,735.3L815.9,733.9L815.9,732.5L815.9,731.1L815.9,729.7L815.9,728.3L816.0,726.8L816.0,725.4L816.0,724.0L813.5,723.2L811.0,722.4L808.5,721.6L805.9,720.9L803.4,720.1L800.9,719.3L798.4,718.5L795.9,717.7L793.4,716.9L790.9,716.2L788.4,715.4L785.8,714.6L783.3,713.8L780.8,713.0L778.3,712.2L775.8,711.5L773.3,710.7L770.8,709.9L768.3,709.1L765.7,708.3L763.2,707.5L760.7,706.8L758.2,706.0L755.7,705.2L753.2,704.4L750.7,703.6L748.2,702.8L745.6,702.1L743.1,701.3L740.6,700.5L738.1,699.7L735.6,698.9L733.1,698.1L730.6,697.3L728.1,696.6L725.5,695.8L723.0,695.0L720.5,694.2L718.0,693.4L715.5,692.6L713.0,691.9L710.5,691.1L709.5,690.8L710.0,692.3L710.4,693.9L710.5,693.9L710.9,695.5L711.4,697.1L711.9,698.6L712.3,700.2L712.8,701.8L712.9,701.9L713.3,703.3L713.8,704.9L714.2,706.5L714.7,708.0L715.2,709.6L715.3,710.0L715.6,711.2L716.1,712.7L716.5,714.3L717.0,715.9L717.5,717.4L717.7,718.2L717.9,719.0L718.4,720.6L718.8,722.1L719.3,723.7L719.7,725.3L720.1,726.5L720.2,726.8L720.6,728.4L721.1,730.0L721.5,731.5L722.0,733.1L722.4,734.6L722.5,734.9L722.9,736.2L723.3,737.8L723.7,739.3L724.2,740.9L724.6,742.4L724.9,743.5L725.0,744.0L725.5,745.6L725.9,747.1L726.3,748.7L726.8,750.2L727.2,751.8L727.3,752.2L727.6,753.3L728.0,754.9L728.5,756.5L728.9,758.0L729.3,759.6L729.7,761.1L729.7,761.1L730.1,762.7L730.5,764.2L731.0,765.8L731.4,767.3L731.8,768.9L732.1,770.1L732.2,770.4L732.6,772.0L733.0,773.5L733.4,775.1L733.8,776.6L734.2,778.2L734.5,779.4L734.6,779.7L735.0,781.3L735.4,782.8L735.8,784.4L736.2,785.9L736.5,787.4L736.9,788.9L736.9,789.0L737.3,790.5L737.7,792.1L738.1,793.6L738.4,795.2L738.8,796.7L739.2,798.2L739.3,798.6L739.6,799.8L739.9,801.3L740.3,802.9L740.7,804.4L741.0,805.9L741.4,807.5L741.7,808.6L741.8,809.0L742.1,810.5L742.5,812.1L742.8,813.6L743.2,815.1L743.5,816.7L743.9,818.2L744.0,818.9L744.2,819.7L744.6,821.3L744.9,822.8L745.2,824.3L745.5,825.8L745.8,827.3L746.2,828.9L746.4,830.1L746.5,830.4L746.7,831.9L747.0,833.4L747.3,834.9L747.5,836.4L747.8,837.9L748.1,839.4L748.3,840.9L748.6,842.4L748.8,843.4L748.8,843.9L749.1,845.4L749.3,846.9L749.6,848.4L749.9,849.9L750.1,851.4L750.3,852.9L750.6,854.4L750.8,855.9L751.1,857.4L751.1,857.5L751.3,858.9L751.6,860.4L751.8,861.9L752.0,863.4L752.3,864.9L752.5,866.4L752.7,867.9L753.0,869.4L753.2,870.9L753.4,872.2L753.4,872.4L753.7,873.9L753.9,875.4L754.1,876.9L754.3,878.4L754.6,879.9L754.8,881.4L755.0,882.9L755.2,884.4L755.4,885.8L755.7,887.3L755.7,887.7L755.9,888.8L756.1,890.3L756.3,891.8L756.5,893.3L756.7,894.8L757.0,896.3L757.2,897.8L757.4,899.3L757.6,900.7L757.8,902.2L758.0,903.7L758.0,903.8L758.2,905.2L758.4,906.7L758.6,908.2L758.8,909.7L759.0,911.2L759.2,912.6L759.4,914.1L759.6,915.6L759.8,917.1L760.0,918.6L760.2,920.1L760.3,920.5L760.4,921.6L760.6,923.0L760.8,924.5L761.0,926.0L761.2,927.5L761.4,929.0L761.6,930.5L761.8,932.0L762.0,933.4L762.2,934.9L762.4,936.4L762.6,937.8L762.6,937.9L762.8,939.4L763.0,940.9L763.2,942.3L763.3,943.8L763.5,945.3L763.7,946.8L763.9,948.3L764.1,949.7L764.3,951.2L764.5,952.7L764.7,954.2L764.8,955.7L764.8,955.7L765.0,957.2L765.2,958.6L765.4,960.1L765.6,961.6L765.8,963.1L766.0,964.6L766.1,966.0L766.3,967.5L766.5,969.0L766.7,970.5L766.9,972.0L767.1,973.5L767.1,973.7L767.3,974.9L767.5,976.4L767.7,977.9L767.8,979.4L768.0,980.9L768.2,982.4L768.4,983.8L768.6,985.3L768.8,986.8L769.0,988.3L769.2,989.8L769.4,991.3Z" fill="#ee0000"/>
<path d="M812.9,945.0L812.9,943.6L812.9,942.2L812.9,940.8L812.9,939.4L813.0,938.0L813.0,936.6L813.0,935.1L813.0,933.7L813.0,932.3L813.1,930.9L813.1,929.5L813.1,928.1L813.1,926.6L813.1,925.2L813.2,923.8L813.2,922.4L813.2,921.0L813.2,919.6L813.2,918.1L813.3,916.7L813.3,915.3L813.3,913.9L813.3,912.5L813.3,911.1L813.4,909.6L813.4,908.2L813.4,906.8L813.4,905.4L813.4,904.0L813.5,902.6L813.5,901.1L813.5,899.7L813.5,898.3L813.5,896.9L813.6,895.5L813.6,894.1L813.6,892.6L813.6,891.2L813.6,889.8L813.7,888.4L813.7,887.0L813.7,885.5L813.7,884.1L813.7,882.7L813.8,881.3L813.8,879.9L813.8,878.5L813.8,877.0L813.8,875.6L813.9,874.2L813.9,872.8L813.9,871.4L813.9,870.0L813.9,868.5L814.0,867.1L814.0,865.7L814.0,864.3L814.0,862.9L814.1,861.5L814.1,860.0L814.1,858.6L814.1,857.2L814.1,855.8L814.2,854.4L814.2,853.0L814.2,851.5L814.2,850.1L814.2,848.7L814.3,847.3L814.3,845.9L814.3,844.5L814.3,843.0L814.3,841.6L814.4,840.2L814.4,838.8L814.4,837.4L814.4,835.9L814.4,834.5L814.5,833.1L814.5,831.7L814.5,830.3L814.5,828.9L814.5,827.4L814.6,826.0L814.6,824.6L814.6,823.2L814.6,821.8L814.6,820.4L814.7,818.9L814.7,817.5L814.7,816.1L814.7,814.7L814.7,813.3L814.8,811.9L814.8,810.4L814.8,809.0L814.8,807.6L814.8,806.2L814.9,804.8L814.9,803.4L814.9,801.9L814.9,800.5L814.9,799.1L815.0,797.7L815.0,796.3L815.0,794.9L815.0,793.4L815.0,792.0L815.1,790.6L815.1,789.2L815.1,787.8L815.1,786.4L815.1,784.9L815.2,783.5L815.2,782.1L815.2,780.7L815.2,779.3L815.2,777.8L815.3,776.4L815.3,775.0L815.3,773.6L815.3,772.2L815.3,770.8L815.4,769.3L815.4,767.9L815.4,766.5L815.4,765.1L815.4,763.7L815.5,762.3L815.5,760.8L815.5,759.4L815.5,758.0L815.5,756.6L815.6,755.2L815.6,753.8L815.6,752.3L815.6,750.9L815.6,749.5L815.7,748.1L815.7,746.7L815.7,745.3L815.7,743.8L815.7,742.4L815.8,741.0L815.8,739.6L815.8,738.2L815.8,736.8L815.8,735.3L815.9,733.9L815.9,732.5L815.9,731.1L815.9,729.7L815.9,728.3L816.0,726.8L816.0,725.4L816.0,724.0L813.5,723.2L811.0,722.4L808.5,721.6L805.9,720.9L803.4,720.1L800.9,719.3L798.4,718.5L795.9,717.7L793.4,716.9L790.9,716.2L788.4,715.4L785.8,714.6L783.3,713.8L780.8,713.0L778.3,712.2L775.8,711.5L773.3,710.7L770.8,709.9L768.3,709.1L766.0,708.4L766.5,710.0L767.0,711.6L767.5,713.1L768.0,714.7L768.2,715.4L768.4,716.3L768.9,717.8L769.4,719.4L769.8,721.0L770.3,722.5L770.6,723.6L770.7,724.1L771.1,725.7L771.6,727.2L772.0,728.8L772.4,730.3L772.8,731.9L773.0,732.5L773.2,733.4L773.6,735.0L774.0,736.5L774.4,738.1L774.8,739.6L775.2,741.2L775.4,741.9L775.6,742.7L775.9,744.2L776.3,745.8L776.7,747.3L777.0,748.8L777.4,750.4L777.7,751.9L777.8,752.0L778.1,753.4L778.4,755.0L778.8,756.5L779.1,758.0L779.4,759.6L779.8,761.1L780.1,762.6L780.1,762.8L780.4,764.1L780.7,765.7L781.0,767.2L781.4,768.7L781.7,770.2L782.0,771.7L782.3,773.3L782.5,774.3L782.6,774.8L782.9,776.3L783.2,777.8L783.5,779.3L783.8,780.8L784.1,782.4L784.4,783.9L784.6,785.4L784.8,786.4L784.9,786.9L785.2,788.4L785.5,789.9L785.8,791.4L786.0,792.9L786.3,794.4L786.6,796.0L786.9,797.5L787.1,799.0L787.2,799.3L787.4,800.5L787.7,802.0L787.9,803.5L788.2,805.0L788.4,806.5L788.7,808.0L789.0,809.5L789.2,811.0L789.5,812.5L789.5,812.8L789.7,814.0L790.0,815.5L790.2,817.0L790.5,818.5L790.7,820.0L791.0,821.5L791.2,823.0L791.5,824.5L791.7,826.0L791.8,826.8L792.0,827.5L792.2,829.0L792.5,830.5L792.7,832.0L792.9,833.5L793.2,835.0L793.4,836.5L793.6,838.0L793.9,839.5L794.1,841.0L794.2,841.3L794.4,842.5L794.7,844.0L795.0,845.5L795.2,847.0L795.5,848.6L795.8,850.1L796.1,851.6L796.3,853.1L796.5,854.0L796.6,854.6L796.9,856.1L797.2,857.6L797.5,859.1L797.7,860.6L798.0,862.1L798.3,863.7L798.6,865.2L798.8,866.7L798.8,866.7L799.1,868.2L799.4,869.7L799.7,871.2L799.9,872.7L800.2,874.2L800.5,875.7L800.8,877.2L801.0,878.7L801.2,879.6L801.3,880.2L801.6,881.8L801.8,883.3L802.1,884.8L802.4,886.3L802.7,887.8L802.9,889.3L803.2,890.8L803.5,892.3L803.5,892.6L803.7,893.8L804.0,895.3L804.3,896.8L804.5,898.3L804.8,899.9L805.1,901.4L805.4,902.9L805.6,904.4L805.9,905.7L805.9,905.9L806.2,907.4L806.4,908.9L806.7,910.4L807.0,911.9L807.2,913.4L807.5,914.9L807.8,916.4L808.0,917.9L808.2,918.8L808.3,919.4L808.6,921.0L808.8,922.5L809.1,924.0L809.4,925.5L809.7,927.0L809.9,928.5L810.2,930.0L810.5,931.5L810.5,931.9L810.7,933.0L811.0,934.5L811.3,936.0L811.5,937.5L811.8,939.0L812.1,940.5L812.3,942.1L812.6,943.6Z" fill="#c00000"/>
<path d="M812.0,1006.0 L1110.0,747.0 L1111.0,468.0 L816.0,724.0Z" fill="#80b000"/>
<path d="M812.0,1006.0 L1110.0,747.0 L1111.0,468.0 L816.0,724.0Z" fill="#2200bb"/>
<path d="M812.0,1006.0 L1110.0,747.0 L1111.0,468.0 L816.0,724.0Z" fill="#0000ee"/>
<path d="M812.0,1006.0 L1110.0,747.0 L1111.0,468.0 L816.0,724.0Z" fill="#0066ff"/>
<path d="M812.0,1006.0 L1110.0,747.0 L1111.0,468.0 L816.0,724.0Z" fill="#00bbff"/>
<path d="M812.0,1006.0 L1110.0,747.0 L1111.0,468.0 L816.0,724.0Z" fill="#00ddcc"/>
<path d="M812.0,1006.0 L1110.0,747.0 L1111.0,468.0 L816.0,724.0Z" fill="#009966"/>
<path d="M812.0,1006.0 L1110.0,747.0 L1111.0,468.0 L816.0,724.0Z" fill="#006600"/>
<path d="M812.0,1006.0 L1110.0,747.0 L1111.0,468.0 L816.0,724.0Z" fill="#80b000"/>
<path d="M813.5,1004.7L815.0,1003.4L816.5,1002.1L818.0,1000.8L819.5,999.5L821.0,998.2L822.5,996.9L824.0,995.6L825.5,994.3L827.0,993.0L828.5,991.7L830.0,990.4L831.5,989.1L833.0,987.8L834.5,986.5L836.0,985.2L837.5,983.9L839.0,982.6L840.5,981.3L841.9,980.0L843.4,978.7L844.9,977.4L846.4,976.1L847.9,974.8L849.4,973.5L850.9,972.2L852.4,970.9L853.9,969.6L855.4,968.3L856.9,967.0L858.4,965.7L859.9,964.4L861.4,963.1L862.9,961.7L864.4,960.4L865.9,959.1L867.4,957.8L868.9,956.5L870.4,955.2L871.9,953.9L873.4,952.6L874.9,951.3L876.4,950.0L877.9,948.7L879.4,947.4L880.9,946.1L882.4,944.8L883.9,943.5L885.4,942.2L886.9,940.9L888.4,939.6L889.9,938.3L891.4,937.0L892.9,935.7L894.4,934.4L895.9,933.1L897.4,931.8L898.9,930.5L900.4,929.2L901.8,927.9L903.3,926.6L904.8,925.3L906.3,924.0L907.8,922.7L909.3,921.4L910.8,920.1L912.3,918.8L913.8,917.5L915.3,916.2L916.8,914.9L918.3,913.6L919.8,912.3L921.3,911.0L922.8,909.7L924.3,908.4L925.8,907.1L927.3,905.8L928.8,904.5L930.3,903.2L931.8,901.9L933.3,900.6L934.8,899.3L936.3,898.0L937.8,896.7L939.3,895.4L940.8,894.1L942.3,892.8L943.8,891.5L945.3,890.2L946.8,888.9L948.3,887.6L949.8,886.3L951.3,885.0L952.8,883.7L954.3,882.4L955.8,881.1L957.3,879.8L958.8,878.5L960.3,877.2L961.7,875.8L963.2,874.5L964.7,873.2L966.2,871.9L967.7,870.6L969.2,869.3L970.7,868.0L972.2,866.7L973.7,865.4L975.2,864.1L976.7,862.8L978.2,861.5L979.7,860.2L981.2,858.9L982.7,857.6L984.2,856.3L985.7,855.0L987.2,853.7L988.7,852.4L990.2,851.1L991.7,849.8L993.2,848.5L994.7,847.2L996.2,845.9L997.7,844.6L999.2,843.3L1000.7,842.0L1002.2,840.7L1003.7,839.4L1005.2,838.1L1006.7,836.8L1008.2,835.5L1009.7,834.2L1011.2,832.9L1012.7,831.6L1014.2,830.3L1015.7,829.0L1017.2,827.7L1018.7,826.4L1020.2,825.1L1021.6,823.8L1023.1,822.5L1024.6,821.2L1026.1,819.9L1027.6,818.6L1029.1,817.3L1030.6,816.0L1032.1,814.7L1033.6,813.4L1035.1,812.1L1036.6,810.8L1038.1,809.5L1039.6,808.2L1041.1,806.9L1042.6,805.6L1044.1,804.3L1045.6,803.0L1047.1,801.7L1048.6,800.4L1050.1,799.1L1051.6,797.8L1053.1,796.5L1054.6,795.2L1056.1,793.9L1057.6,792.6L1059.1,791.3L1060.6,789.9L1062.1,788.6L1063.6,787.3L1065.1,786.0L1066.6,784.7L1068.1,783.4L1068.4,783.2L1069.2,781.0L1069.6,780.2L1070.1,778.9L1071.0,776.7L1071.1,776.5L1071.9,774.5L1072.6,772.9L1072.8,772.3L1073.7,770.2L1074.1,769.2L1074.6,768.0L1075.5,765.8L1075.6,765.5L1076.4,763.7L1077.1,761.8L1077.2,761.5L1078.1,759.4L1078.6,758.0L1078.9,757.2L1079.8,755.1L1080.1,754.2L1080.6,753.0L1081.4,750.9L1081.6,750.3L1082.2,748.8L1083.1,746.7L1083.2,746.4L1083.9,744.6L1084.7,742.5L1084.7,742.5L1085.5,740.4L1086.2,738.5L1086.3,738.3L1087.1,736.2L1087.7,734.6L1087.9,734.1L1088.7,732.0L1089.2,730.6L1089.5,729.9L1090.6,727.5L1090.7,727.3L1091.7,725.2L1092.2,724.1L1092.8,722.8L1093.7,720.9L1093.9,720.4L1095.1,718.0L1095.2,717.8L1096.2,715.6L1096.7,714.7L1097.4,713.2L1098.2,711.6L1098.7,710.7L1099.7,708.6L1099.9,708.3L1101.1,705.8L1101.2,705.6L1102.4,703.3L1102.7,702.7L1103.7,700.8L1104.2,699.8L1105.0,698.2L1105.7,696.9L1106.4,695.6L1107.2,694.0L1107.7,693.1L1108.7,691.2L1109.1,690.5L1110.2,688.4L1110.2,688.1L1110.2,686.7L1110.2,685.3L1110.2,683.9L1110.2,682.5L1110.2,681.1L1110.2,679.7L1110.2,678.3L1110.3,676.9L1110.3,675.5L1110.3,674.1L1110.3,672.7L1110.3,671.3L1110.3,669.9L1110.3,668.5L1110.3,667.1L1110.3,665.7L1110.3,664.3L1110.3,662.9L1110.3,661.5L1110.3,660.1L1110.3,658.7L1110.3,657.3L1110.3,655.9L1110.3,654.5L1110.3,653.1L1110.3,651.7L1110.3,650.3L1110.4,648.9L1110.4,647.5L1110.4,646.1L1110.4,644.7L1110.4,643.3L1110.4,641.8L1110.4,640.4L1110.4,639.0L1110.4,637.6L1110.4,636.2L1110.4,634.8L1110.4,633.4L1110.4,632.0L1110.4,630.6L1110.4,629.2L1110.4,627.8L1110.4,626.4L1110.4,625.0L1110.4,623.6L1110.4,622.2L1110.5,620.8L1110.5,619.4L1110.5,618.0L1110.5,616.6L1110.5,615.2L1110.5,613.8L1110.5,612.4L1110.5,611.0L1110.5,609.6L1110.5,608.2L1110.5,606.8L1110.5,605.4L1110.5,604.0L1110.5,602.6L1110.5,601.2L1110.5,599.8L1110.5,598.4L1110.5,597.0L1110.5,595.6L1110.5,594.2L1110.6,592.8L1110.6,591.4L1110.6,590.0L1110.6,588.6L1110.6,587.2L1110.6,585.8L1110.6,584.4L1110.6,583.0L1110.6,581.6L1110.6,580.2L1110.6,578.8L1110.6,577.4L1110.6,576.0L1110.6,574.6L1110.6,573.2L1110.6,571.7L1110.6,570.3L1110.6,568.9L1110.6,567.5L1110.6,566.1L1110.7,564.7L1110.7,563.3L1110.7,561.9L1110.7,560.5L1110.7,559.1L1110.7,557.7L1110.7,556.3L1110.7,554.9L1110.7,553.5L1110.7,552.1L1110.7,550.7L1110.7,549.3L1110.7,547.9L1110.7,546.5L1110.7,545.1L1110.7,543.7L1110.7,542.3L1110.7,540.9L1110.7,539.5L1110.7,538.1L1110.8,536.7L1110.8,535.3L1110.8,533.9L1110.8,532.5L1110.8,531.1L1110.8,529.7L1110.8,528.3L1110.8,526.9L1110.8,525.5L1110.8,524.1L1110.8,522.7L1110.8,521.3L1110.8,519.9L1110.8,518.5L1110.8,517.1L1110.8,515.7L1110.8,514.3L1110.8,512.9L1110.8,511.5L1110.8,510.1L1110.9,508.7L1110.9,507.3L1110.9,505.9L1110.9,504.5L1110.9,503.1L1110.9,501.6L1110.9,500.2L1110.9,498.8L1110.9,497.4L1110.9,496.0L1110.9,494.6L1110.9,493.2L1110.9,491.8L1110.9,490.4L1110.9,489.0L1110.9,487.6L1110.9,486.2L1110.9,484.8L1110.9,483.4L1110.9,482.0L1111.0,480.6L1111.0,479.2L1111.0,477.8L1111.0,476.4L1111.0,475.0L1111.0,473.6L1111.0,472.2L1111.0,470.8L1111.0,469.4L1111.0,468.0L1109.5,469.3L1108.0,470.6L1106.6,471.9L1105.1,473.1L1103.6,474.4L1102.1,475.7L1100.6,477.0L1099.1,478.3L1097.7,479.6L1096.2,480.9L1094.7,482.2L1093.2,483.4L1091.7,484.7L1090.2,486.0L1088.8,487.3L1087.3,488.6L1085.8,489.9L1084.3,491.2L1082.8,492.4L1081.4,493.7L1079.9,495.0L1078.4,496.3L1076.9,497.6L1075.4,498.9L1073.9,500.2L1072.5,501.4L1071.0,502.7L1069.5,504.0L1068.0,505.3L1066.5,506.6L1065.0,507.9L1063.6,509.2L1062.1,510.5L1060.6,511.7L1059.1,513.0L1057.6,514.3L1056.2,515.6L1054.7,516.9L1053.2,518.2L1051.7,519.5L1050.2,520.7L1048.7,522.0L1047.3,523.3L1045.8,524.6L1044.3,525.9L1042.8,527.2L1041.3,528.5L1039.8,529.7L1038.4,531.0L1036.9,532.3L1035.4,533.6L1033.9,534.9L1032.4,536.2L1030.9,537.5L1029.5,538.8L1028.0,540.0L1026.5,541.3L1025.0,542.6L1023.5,543.9L1022.1,545.2L1020.6,546.5L1019.1,547.8L1017.6,549.0L1016.1,550.3L1014.6,551.6L1013.2,552.9L1011.7,554.2L1010.2,555.5L1008.7,556.8L1007.2,558.1L1005.7,559.3L1004.3,560.6L1002.8,561.9L1001.3,563.2L999.8,564.5L998.3,565.8L996.9,567.1L995.4,568.3L993.9,569.6L992.4,570.9L990.9,572.2L989.4,573.5L988.0,574.8L986.5,576.1L985.0,577.3L983.5,578.6L982.0,579.9L980.5,581.2L979.1,582.5L977.6,583.8L976.1,585.1L974.6,586.4L973.1,587.6L971.7,588.9L970.2,590.2L968.7,591.5L967.2,592.8L965.7,594.1L964.2,595.4L962.8,596.6L961.3,597.9L959.8,599.2L958.3,600.5L956.8,601.8L955.3,603.1L953.9,604.4L952.4,605.6L950.9,606.9L949.4,608.2L947.9,609.5L946.5,610.8L945.0,612.1L943.5,613.4L942.0,614.7L940.5,615.9L939.0,617.2L937.6,618.5L936.1,619.8L934.6,621.1L933.1,622.4L931.6,623.7L930.1,624.9L928.7,626.2L927.2,627.5L925.7,628.8L924.2,630.1L922.7,631.4L921.3,632.7L919.8,633.9L918.3,635.2L916.8,636.5L915.3,637.8L913.8,639.1L912.4,640.4L910.9,641.7L909.4,643.0L907.9,644.2L906.4,645.5L904.9,646.8L903.5,648.1L902.0,649.4L900.5,650.7L899.0,652.0L897.5,653.2L896.1,654.5L894.6,655.8L893.1,657.1L891.6,658.4L890.1,659.7L888.6,661.0L887.2,662.3L885.7,663.5L884.2,664.8L882.7,666.1L881.2,667.4L879.7,668.7L878.3,670.0L876.8,671.3L875.3,672.5L873.8,673.8L872.3,675.1L870.8,676.4L869.4,677.7L867.9,679.0L866.4,680.3L864.9,681.5L863.4,682.8L862.0,684.1L860.5,685.4L859.0,686.7L857.5,688.0L856.0,689.3L854.5,690.6L853.1,691.8L851.6,693.1L850.1,694.4L848.6,695.7L847.1,697.0L845.6,698.3L844.2,699.6L842.7,700.8L841.2,702.1L839.7,703.4L838.2,704.7L836.8,706.0L835.3,707.3L833.8,708.6L832.3,709.8L830.8,711.1L829.3,712.4L827.9,713.7L826.4,715.0L824.9,716.3L823.4,717.6L821.9,718.9L820.4,720.1L819.0,721.4L817.5,722.7L816.0,724.0L816.0,725.4L816.0,726.8L815.9,728.3L815.9,729.7L815.9,731.1L815.9,732.5L815.9,733.9L815.8,735.3L815.8,736.8L815.8,738.2L815.8,739.6L815.8,741.0L815.7,742.4L815.7,743.8L815.7,745.3L815.7,746.7L815.7,748.1L815.6,749.5L815.6,750.9L815.6,752.3L815.6,753.8L815.6,755.2L815.5,756.6L815.5,758.0L815.5,759.4L815.5,760.8L815.5,762.3L815.4,763.7L815.4,765.1L815.4,766.5L815.4,767.9L815.4,769.3L815.3,770.8L815.3,772.2L815.3,773.6L815.3,775.0L815.3,776.4L815.2,777.8L815.2,779.3L815.2,780.7L815.2,782.1L815.2,783.5L815.1,784.9L815.1,786.4L815.1,787.8L815.1,789.2L815.1,790.6L815.0,792.0L815.0,793.4L815.0,794.9L815.0,796.3L815.0,797.7L814.9,799.1L814.9,800.5L814.9,801.9L814.9,803.4L814.9,804.8L814.8,806.2L814.8,807.6L814.8,809.0L814.8,810.4L814.8,811.9L814.7,813.3L814.7,814.7L814.7,816.1L814.7,817.5L814.7,818.9L814.6,820.4L814.6,821.8L814.6,823.2L814.6,824.6L814.6,826.0L814.5,827.4L814.5,828.9L814.5,830.3L814.5,831.7L814.5,833.1L814.4,834.5L814.4,835.9L814.4,837.4L814.4,838.8L814.4,840.2L814.3,841.6L814.3,843.0L814.3,844.5L814.3,845.9L814.3,847.3L814.2,848.7L814.2,850.1L814.2,851.5L814.2,853.0L814.2,854.4L814.1,855.8L814.1,857.2L814.1,858.6L814.1,860.0L814.1,861.5L814.0,862.9L814.0,864.3L814.0,865.7L814.0,867.1L813.9,868.5L813.9,870.0L813.9,871.4L813.9,872.8L813.9,874.2L813.8,875.6L813.8,877.0L813.8,878.5L813.8,879.9L813.8,881.3L813.7,882.7L813.7,884.1L813.7,885.5L813.7,887.0L813.7,888.4L813.6,889.8L813.6,891.2L813.6,892.6L813.6,894.1L813.6,895.5L813.5,896.9L813.5,898.3L813.5,899.7L813.5,901.1L813.5,902.6L813.4,904.0L813.4,905.4L813.4,906.8L813.4,908.2L813.4,909.6L813.3,911.1L813.3,912.5L813.3,913.9L813.3,915.3L813.3,916.7L813.2,918.1L813.2,919.6L813.2,921.0L813.2,922.4L813.2,923.8L813.1,925.2L813.1,926.6L813.1,928.1L813.1,929.5L813.1,930.9L813.0,932.3L813.0,933.7L813.0,935.1L813.0,936.6L813.0,938.0L812.9,939.4L812.9,940.8L812.9,942.2L812.9,943.6L812.9,945.1L812.8,946.5L812.8,947.9L812.8,949.3L812.8,950.7L812.8,952.2L812.7,953.6L812.7,955.0L812.7,956.4L812.7,957.8L812.7,959.2L812.6,960.7L812.6,962.1L812.6,963.5L812.6,964.9L812.6,966.3L812.5,967.7L812.5,969.2L812.5,970.6L812.5,972.0L812.5,973.4L812.4,974.8L812.4,976.2L812.4,977.7L812.4,979.1L812.4,980.5L812.3,981.9L812.3,983.3L812.3,984.7L812.3,986.2L812.3,987.6L812.2,989.0L812.2,990.4L812.2,991.8L812.2,993.2L812.2,994.7L812.1,996.1L812.1,997.5L812.1,998.9L812.1,1000.3L812.1,1001.7L812.0,1003.2L812.0,1004.6L812.0,1006.0Z" fill="#eeee00"/>
<path d="M813.5,1004.7L815.0,1003.4L816.5,1002.1L818.0,1000.8L819.5,999.5L821.0,998.2L822.5,996.9L824.0,995.6L825.5,994.3L827.0,993.0L828.5,991.7L830.0,990.4L831.5,989.1L833.0,987.8L834.5,986.5L836.0,985.2L837.5,983.9L839.0,982.6L840.5,981.3L841.9,980.0L843.4,978.7L844.9,977.4L846.4,976.1L847.9,974.8L849.4,973.5L850.9,972.2L852.4,970.9L853.9,969.6L855.4,968.3L856.9,967.0L858.4,965.7L859.9,964.4L861.4,963.1L862.9,961.7L864.4,960.4L865.9,959.1L867.4,957.8L868.9,956.5L870.4,955.2L871.9,953.9L873.4,952.6L874.9,951.3L876.4,950.0L877.9,948.7L879.4,947.4L880.9,946.1L882.4,944.8L883.9,943.5L885.4,942.2L886.9,940.9L888.4,939.6L889.9,938.3L891.4,937.0L892.9,935.7L894.4,934.4L895.9,933.1L897.4,931.8L898.9,930.5L900.4,929.2L901.8,927.9L903.3,926.6L904.8,925.3L906.3,924.0L907.8,922.7L909.3,921.4L910.8,920.1L912.3,918.8L913.8,917.5L915.3,916.2L916.8,914.9L918.3,913.6L919.8,912.3L921.3,911.0L922.8,909.7L924.3,908.4L925.8,907.1L927.3,905.8L928.8,904.5L930.3,903.2L931.8,901.9L933.3,900.6L934.8,899.3L936.3,898.0L937.8,896.7L939.3,895.4L940.8,894.1L942.3,892.8L943.8,891.5L945.3,890.2L946.8,888.9L948.3,887.6L949.8,886.3L951.3,885.0L952.8,883.7L954.3,882.4L955.8,881.1L957.3,879.8L958.8,878.5L960.3,877.2L961.7,875.8L963.2,874.5L964.7,873.2L966.2,871.9L967.7,870.6L969.2,869.3L970.7,868.0L972.2,866.7L973.7,865.4L975.2,864.1L976.7,862.8L978.2,861.5L979.7,860.2L981.2,858.9L982.7,857.6L984.2,856.3L985.7,855.0L987.2,853.7L988.7,852.4L990.2,851.1L991.7,849.8L993.2,848.5L994.7,847.2L996.2,845.9L997.7,844.6L999.2,843.3L1000.7,842.0L1002.2,840.7L1003.7,839.4L1005.2,838.1L1006.7,836.8L1008.2,835.5L1009.7,834.2L1011.2,832.9L1011.9,832.2L1012.4,830.4L1012.7,829.5L1013.0,828.5L1013.7,826.5L1014.2,824.9L1014.3,824.6L1015.0,822.6L1015.6,820.6L1015.7,820.3L1016.2,818.7L1016.9,816.8L1017.2,815.6L1017.5,814.8L1018.1,812.9L1018.7,811.0L1018.8,810.8L1019.3,809.0L1019.9,807.1L1020.3,805.9L1020.5,805.2L1021.1,803.3L1021.7,801.4L1021.8,801.0L1022.3,799.5L1022.8,797.6L1023.3,796.0L1023.4,795.7L1024.0,793.8L1024.6,791.9L1024.8,790.9L1025.1,790.0L1025.8,788.0L1026.4,786.2L1026.4,786.1L1027.1,784.1L1027.7,782.1L1027.9,781.7L1028.4,780.2L1029.1,778.2L1029.4,777.3L1029.8,776.2L1030.5,774.2L1030.9,772.9L1031.2,772.2L1031.8,770.2L1032.4,768.5L1032.5,768.2L1033.3,766.2L1033.9,764.2L1034.0,764.2L1034.7,762.1L1035.4,760.1L1035.5,759.9L1036.1,758.1L1036.8,756.1L1037.0,755.7L1037.6,754.0L1038.3,752.0L1038.5,751.5L1039.0,750.0L1039.8,747.9L1040.0,747.3L1040.5,745.9L1041.3,743.8L1041.5,743.2L1042.0,741.8L1042.8,739.7L1043.0,739.1L1043.6,737.6L1044.3,735.6L1044.5,735.1L1045.1,733.5L1045.9,731.4L1046.0,731.1L1046.7,729.3L1047.5,727.2L1047.5,727.1L1048.3,725.2L1049.1,723.1L1049.1,723.1L1049.9,721.0L1050.6,719.2L1050.7,718.9L1051.5,716.8L1052.1,715.3L1052.3,714.7L1053.1,712.5L1053.6,711.4L1054.0,710.4L1054.8,708.3L1055.1,707.6L1055.6,706.2L1056.5,704.0L1056.6,703.8L1057.3,701.9L1058.1,700.0L1058.2,699.8L1059.0,697.6L1059.6,696.2L1059.9,695.5L1060.8,693.3L1061.1,692.5L1061.6,691.2L1062.5,689.0L1062.6,688.8L1063.4,686.9L1064.1,685.1L1064.3,684.7L1065.2,682.5L1065.6,681.4L1066.1,680.3L1067.0,678.1L1067.1,677.8L1067.9,676.0L1068.6,674.2L1068.8,673.8L1069.8,671.5L1070.1,670.7L1070.7,669.3L1071.6,667.2L1071.7,667.1L1072.6,664.8L1073.1,663.7L1073.6,662.6L1074.6,660.4L1074.6,660.2L1075.5,658.1L1076.1,656.8L1076.5,655.9L1077.5,653.7L1077.6,653.3L1078.4,651.4L1079.1,649.8L1079.4,649.2L1080.4,647.0L1080.6,646.3L1081.3,644.7L1082.1,642.8L1082.3,642.5L1083.3,640.2L1083.6,639.4L1084.2,638.0L1085.1,635.9L1085.2,635.7L1086.2,633.5L1086.6,632.5L1087.2,631.2L1088.1,629.1L1088.2,628.9L1089.2,626.7L1089.6,625.8L1090.9,623.8L1091.1,623.4L1092.6,621.2L1093.1,620.5L1094.1,619.0L1095.3,617.2L1095.6,616.7L1097.1,614.5L1097.6,613.8L1098.6,612.3L1099.9,610.4L1100.1,610.1L1101.6,607.9L1102.2,607.0L1103.1,605.7L1104.5,603.6L1104.6,603.5L1106.1,601.3L1106.9,600.2L1107.6,599.2L1109.1,597.0L1109.2,596.7L1110.5,594.8L1110.5,594.2L1110.6,592.8L1110.6,591.4L1110.6,590.0L1110.6,588.6L1110.6,587.2L1110.6,585.8L1110.6,584.4L1110.6,583.0L1110.6,581.6L1110.6,580.2L1110.6,578.8L1110.6,577.4L1110.6,576.0L1110.6,574.6L1110.6,573.2L1110.6,571.7L1110.6,570.3L1110.6,568.9L1110.6,567.5L1110.6,566.1L1110.7,564.7L1110.7,563.3L1110.7,561.9L1110.7,560.5L1110.7,559.1L1110.7,557.7L1110.7,556.3L1110.7,554.9L1110.7,553.5L1110.7,552.1L1110.7,550.7L1110.7,549.3L1110.7,547.9L1110.7,546.5L1110.7,545.1L1110.7,543.7L1110.7,542.3L1110.7,540.9L1110.7,539.5L1110.7,538.1L1110.8,536.7L1110.8,535.3L1110.8,533.9L1110.8,532.5L1110.8,531.1L1110.8,529.7L1110.8,528.3L1110.8,526.9L1110.8,525.5L1110.8,524.1L1110.8,522.7L1110.8,521.3L1110.8,519.9L1110.8,518.5L1110.8,517.1L1110.8,515.7L1110.8,514.3L1110.8,512.9L1110.8,511.5L1110.8,510.1L1110.9,508.7L1110.9,507.3L1110.9,505.9L1110.9,504.5L1110.9,503.1L1110.9,501.6L1110.9,500.2L1110.9,498.8L1110.9,497.4L1110.9,496.0L1110.9,494.6L1110.9,493.2L1110.9,491.8L1110.9,490.4L1110.9,489.0L1110.9,487.6L1110.9,486.2L1110.9,484.8L1110.9,483.4L1110.9,482.0L1111.0,480.6L1111.0,479.2L1111.0,477.8L1111.0,476.4L1111.0,475.0L1111.0,473.6L1111.0,472.2L1111.0,470.8L1111.0,469.4L1111.0,468.0L1109.5,469.3L1108.0,470.6L1106.6,471.9L1105.1,473.1L1103.6,474.4L1102.1,475.7L1100.6,477.0L1099.1,478.3L1097.7,479.6L1096.2,480.9L1094.7,482.2L1093.2,483.4L1091.7,484.7L1090.2,486.0L1088.8,487.3L1087.3,488.6L1085.8,489.9L1084.3,491.2L1082.8,492.4L1081.4,493.7L1079.9,495.0L1078.4,496.3L1076.9,497.6L1075.4,498.9L1073.9,500.2L1072.5,501.4L1071.0,502.7L1069.5,504.0L1068.0,505.3L1066.5,506.6L1065.0,507.9L1063.6,509.2L1062.1,510.5L1060.6,511.7L1059.1,513.0L1057.6,514.3L1056.2,515.6L1054.7,516.9L1053.2,518.2L1051.7,519.5L1050.2,520.7L1048.7,522.0L1047.3,523.3L1045.8,524.6L1044.3,525.9L1042.8,527.2L1041.3,528.5L1039.8,529.7L1038.4,531.0L1036.9,532.3L1035.4,533.6L1033.9,534.9L1032.4,536.2L1030.9,537.5L1029.5,538.8L1028.0,540.0L1026.5,541.3L1025.0,542.6L1023.5,543.9L1022.1,545.2L1020.6,546.5L1019.1,547.8L1017.6,549.0L1016.1,550.3L1014.6,551.6L1013.2,552.9L1011.7,554.2L1010.2,555.5L1008.7,556.8L1007.2,558.1L1005.7,559.3L1004.3,560.6L1002.8,561.9L1001.3,563.2L999.8,564.5L998.3,565.8L996.9,567.1L995.4,568.3L993.9,569.6L992.4,570.9L990.9,572.2L989.4,573.5L988.0,574.8L986.5,576.1L985.0,577.3L983.5,578.6L982.0,579.9L980.5,581.2L979.1,582.5L977.6,583.8L976.1,585.1L974.6,586.4L973.1,587.6L971.7,588.9L970.2,590.2L968.7,591.5L967.2,592.8L965.7,594.1L964.2,595.4L962.8,596.6L961.3,597.9L959.8,599.2L958.3,600.5L956.8,601.8L955.3,603.1L953.9,604.4L952.4,605.6L950.9,606.9L949.4,608.2L947.9,609.5L946.5,610.8L945.0,612.1L943.5,613.4L942.0,614.7L940.5,615.9L939.0,617.2L937.6,618.5L936.1,619.8L934.6,621.1L933.1,622.4L931.6,623.7L930.1,624.9L928.7,626.2L927.2,627.5L925.7,628.8L924.2,630.1L922.7,631.4L921.3,632.7L919.8,633.9L918.3,635.2L916.8,636.5L915.3,637.8L913.8,639.1L912.4,640.4L910.9,641.7L909.4,643.0L907.9,644.2L906.4,645.5L904.9,646.8L903.5,648.1L902.0,649.4L900.5,650.7L899.0,652.0L897.5,653.2L896.1,654.5L894.6,655.8L893.1,657.1L891.6,658.4L890.1,659.7L888.6,661.0L887.2,662.3L885.7,663.5L884.2,664.8L882.7,666.1L881.2,667.4L879.7,668.7L878.3,670.0L876.8,671.3L875.3,672.5L873.8,673.8L872.3,675.1L870.8,676.4L869.4,677.7L867.9,679.0L866.4,680.3L864.9,681.5L863.4,682.8L862.0,684.1L860.5,685.4L859.0,686.7L857.5,688.0L856.0,689.3L854.5,690.6L853.1,691.8L851.6,693.1L850.1,694.4L848.6,695.7L847.1,697.0L845.6,698.3L844.2,699.6L842.7,700.8L841.2,702.1L839.7,703.4L838.2,704.7L836.8,706.0L835.3,707.3L833.8,708.6L832.3,709.8L830.8,711.1L829.3,712.4L827.9,713.7L826.4,715.0L824.9,716.3L823.4,717.6L821.9,718.9L820.4,720.1L819.0,721.4L817.5,722.7L816.0,724.0L816.0,725.4L816.0,726.8L815.9,728.3L815.9,729.7L815.9,731.1L815.9,732.5L815.9,733.9L815.8,735.3L815.8,736.8L815.8,738.2L815.8,739.6L815.8,741.0L815.7,742.4L815.7,743.8L815.7,745.3L815.7,746.7L815.7,748.1L815.6,749.5L815.6,750.9L815.6,752.3L815.6,753.8L815.6,755.2L815.5,756.6L815.5,758.0L815.5,759.4L815.5,760.8L815.5,762.3L815.4,763.7L815.4,765.1L815.4,766.5L815.4,767.9L815.4,769.3L815.3,770.8L815.3,772.2L815.3,773.6L815.3,775.0L815.3,776.4L815.2,777.8L815.2,779.3L815.2,780.7L815.2,782.1L815.2,783.5L815.1,784.9L815.1,786.4L815.1,787.8L815.1,789.2L815.1,790.6L815.0,792.0L815.0,793.4L815.0,794.9L815.0,796.3L815.0,797.7L814.9,799.1L814.9,800.5L814.9,801.9L814.9,803.4L814.9,804.8L814.8,806.2L814.8,807.6L814.8,809.0L814.8,810.4L814.8,811.9L814.7,813.3L814.7,814.7L814.7,816.1L814.7,817.5L814.7,818.9L814.6,820.4L814.6,821.8L814.6,823.2L814.6,824.6L814.6,826.0L814.5,827.4L814.5,828.9L814.5,830.3L814.5,831.7L814.5,833.1L814.4,834.5L814.4,835.9L814.4,837.4L814.4,838.8L814.4,840.2L814.3,841.6L814.3,843.0L814.3,844.5L814.3,845.9L814.3,847.3L814.2,848.7L814.2,850.1L814.2,851.5L814.2,853.0L814.2,854.4L814.1,855.8L814.1,857.2L814.1,858.6L814.1,860.0L814.1,861.5L814.0,862.9L814.0,864.3L814.0,865.7L814.0,867.1L813.9,868.5L813.9,870.0L813.9,871.4L813.9,872.8L813.9,874.2L813.8,875.6L813.8,877.0L813.8,878.5L813.8,879.9L813.8,881.3L813.7,882.7L813.7,884.1L813.7,885.5L813.7,887.0L813.7,888.4L813.6,889.8L813.6,891.2L813.6,892.6L813.6,894.1L813.6,895.5L813.5,896.9L813.5,898.3L813.5,899.7L813.5,901.1L813.5,902.6L813.4,904.0L813.4,905.4L813.4,906.8L813.4,908.2L813.4,909.6L813.3,911.1L813.3,912.5L813.3,913.9L813.3,915.3L813.3,916.7L813.2,918.1L813.2,919.6L813.2,921.0L813.2,922.4L813.2,923.8L813.1,925.2L813.1,926.6L813.1,928.1L813.1,929.5L813.1,930.9L813.0,932.3L813.0,933.7L813.0,935.1L813.0,936.6L813.0,938.0L812.9,939.4L812.9,940.8L812.9,942.2L812.9,943.6L812.9,945.1L812.8,946.5L812.8,947.9L812.8,949.3L812.8,950.7L812.8,952.2L812.7,953.6L812.7,955.0L812.7,956.4L812.7,957.8L812.7,959.2L812.6,960.7L812.6,962.1L812.6,963.5L812.6,964.9L812.6,966.3L812.5,967.7L812.5,969.2L812.5,970.6L812.5,972.0L812.5,973.4L812.4,974.8L812.4,976.2L812.4,977.7L812.4,979.1L812.4,980.5L812.3,981.9L812.3,983.3L812.3,984.7L812.3,986.2L812.3,987.6L812.2,989.0L812.2,990.4L812.2,991.8L812.2,993.2L812.2,994.7L812.1,996.1L812.1,997.5L812.1,998.9L812.1,1000.3L812.1,1001.7L812.0,1003.2L812.0,1004.6L812.0,1006.0Z" fill="#ffdd00"/>
<path d="M813.5,1004.7L815.0,1003.4L816.5,1002.1L818.0,1000.8L819.5,999.5L821.0,998.2L822.5,996.9L824.0,995.6L825.5,994.3L827.0,993.0L828.5,991.7L830.0,990.4L831.5,989.1L833.0,987.8L834.5,986.5L836.0,985.2L837.5,983.9L839.0,982.6L840.5,981.3L841.9,980.0L843.4,978.7L844.9,977.4L846.4,976.1L847.9,974.8L849.4,973.5L850.9,972.2L852.4,970.9L853.9,969.6L855.4,968.3L856.9,967.0L858.4,965.7L859.9,964.4L861.4,963.1L862.9,961.7L864.4,960.4L865.9,959.1L867.4,957.8L868.9,956.5L870.4,955.2L871.9,953.9L873.4,952.6L874.9,951.3L876.4,950.0L877.9,948.7L879.4,947.4L880.9,946.1L882.4,944.8L883.9,943.5L885.4,942.2L886.9,940.9L888.4,939.6L889.9,938.3L891.4,937.0L892.9,935.7L894.4,934.4L895.9,933.1L897.4,931.8L898.9,930.5L900.4,929.2L901.8,927.9L903.3,926.6L904.8,925.3L906.3,924.0L907.8,922.7L909.3,921.4L910.8,920.1L912.3,918.8L913.8,917.5L915.3,916.2L916.8,914.9L918.3,913.6L919.8,912.3L921.3,911.0L922.8,909.7L924.3,908.4L925.8,907.1L927.3,905.8L928.8,904.5L930.3,903.2L931.8,901.9L933.3,900.6L934.8,899.3L936.3,898.0L937.8,896.7L939.3,895.4L940.8,894.1L942.3,892.8L943.8,891.5L945.3,890.2L946.8,888.9L948.3,887.6L949.8,886.3L951.3,885.0L952.8,883.7L954.3,882.4L955.8,881.1L957.3,879.8L958.8,878.5L960.3,877.2L961.7,875.8L963.2,874.5L964.7,873.2L966.2,871.9L967.7,870.6L969.2,869.3L970.7,868.0L972.2,866.7L973.7,865.4L975.2,864.1L976.7,862.8L978.2,861.5L979.7,860.2L981.2,858.9L982.7,857.6L984.2,856.3L984.6,856.0L984.9,854.3L985.2,852.7L985.4,851.1L985.7,849.4L985.8,849.1L985.9,847.8L986.2,846.2L986.4,844.6L986.6,843.0L986.9,841.4L987.1,839.8L987.3,838.4L987.4,838.2L987.6,836.6L987.9,835.0L988.1,833.4L988.4,831.7L988.6,830.1L988.9,828.5L988.9,828.4L989.2,826.9L989.4,825.2L989.7,823.6L990.0,822.0L990.2,820.3L990.5,819.1L990.5,818.7L990.8,817.0L991.1,815.4L991.4,813.7L991.7,812.1L992.0,810.4L992.0,810.3L992.3,808.7L992.6,807.1L992.9,805.4L993.2,803.7L993.5,802.1L993.6,802.0L993.9,800.4L994.2,798.7L994.5,797.0L994.9,795.3L995.1,794.1L995.2,793.6L995.5,791.9L995.9,790.2L996.2,788.5L996.6,786.8L996.6,786.6L996.9,785.1L997.3,783.4L997.7,781.7L998.1,780.0L998.2,779.4L998.4,778.2L998.8,776.5L999.2,774.8L999.6,773.0L999.7,772.4L1000.0,771.3L1000.4,769.6L1000.8,767.8L1001.2,766.1L1001.3,765.8L1001.6,764.3L1002.0,762.5L1002.4,760.8L1002.8,759.4L1002.9,759.0L1003.3,757.2L1003.8,755.4L1004.2,753.7L1004.3,753.2L1004.7,751.9L1005.1,750.1L1005.6,748.3L1005.8,747.2L1006.0,746.5L1006.5,744.7L1007.0,742.8L1007.4,741.4L1007.5,741.0L1008.0,739.2L1008.5,737.4L1008.9,735.8L1009.0,735.5L1009.5,733.7L1010.0,731.9L1010.4,730.3L1010.5,730.0L1011.0,728.1L1011.6,726.3L1011.9,725.0L1012.1,724.4L1012.7,722.5L1013.3,720.6L1013.5,720.0L1013.9,718.7L1014.5,716.8L1015.0,715.2L1015.1,714.8L1015.7,712.9L1016.3,711.0L1016.5,710.4L1016.9,709.0L1017.5,707.1L1018.0,705.7L1018.2,705.2L1018.8,703.2L1019.4,701.3L1019.5,700.9L1020.0,699.4L1020.6,697.4L1021.0,696.2L1021.2,695.5L1021.9,693.6L1022.5,691.6L1022.5,691.5L1023.1,689.7L1023.8,687.7L1024.1,686.8L1024.4,685.8L1025.0,683.8L1025.6,682.2L1025.7,681.8L1026.5,679.7L1027.1,678.4L1027.4,677.5L1028.4,675.3L1028.6,674.9L1029.4,673.1L1030.1,671.4L1030.3,670.8L1031.3,668.6L1031.6,667.9L1032.3,666.3L1033.1,664.5L1033.3,664.1L1034.3,661.8L1034.6,661.1L1035.3,659.5L1036.1,657.7L1036.3,657.3L1037.3,655.0L1037.6,654.3L1038.3,652.7L1039.1,651.0L1039.3,650.4L1040.4,648.1L1040.6,647.6L1041.4,645.8L1042.1,644.3L1042.4,643.5L1043.5,641.2L1043.6,641.0L1044.5,638.9L1045.1,637.7L1045.6,636.6L1046.6,634.4L1046.7,634.3L1047.7,632.0L1048.1,631.1L1048.8,629.6L1049.6,627.9L1049.9,627.3L1051.0,624.9L1051.1,624.7L1052.1,622.6L1052.6,621.5L1053.2,620.2L1054.1,618.3L1054.3,617.9L1055.4,615.5L1055.6,615.1L1056.5,613.1L1057.1,611.9L1057.6,610.8L1058.6,608.8L1058.8,608.4L1059.9,606.0L1060.1,605.6L1061.0,603.6L1061.6,602.5L1062.2,601.2L1063.1,599.4L1063.4,598.8L1064.5,596.4L1064.6,596.3L1065.7,594.0L1066.1,593.2L1066.9,591.6L1067.6,590.1L1068.0,589.1L1069.1,587.1L1069.2,586.7L1070.4,584.3L1070.6,583.9L1071.5,581.9L1072.1,580.8L1072.7,579.5L1073.6,577.7L1073.8,577.1L1075.0,574.7L1075.1,574.6L1076.2,572.3L1076.5,571.6L1077.4,569.9L1078.0,568.5L1078.6,567.4L1079.5,565.6L1080.0,564.8L1081.0,562.9L1081.4,562.2L1082.5,560.1L1082.8,559.5L1084.0,557.4L1084.3,556.9L1085.5,554.7L1085.8,554.2L1087.0,552.0L1087.3,551.5L1088.5,549.3L1088.8,548.8L1090.0,546.7L1090.6,545.8L1091.5,544.6L1093.0,542.6L1093.4,542.0L1094.4,540.6L1095.9,538.6L1096.3,538.1L1097.4,536.5L1098.9,534.5L1099.2,534.2L1100.4,532.5L1101.9,530.5L1102.1,530.3L1103.4,528.5L1104.9,526.5L1104.9,526.4L1106.4,524.5L1107.8,522.5L1107.8,522.4L1109.3,520.4L1110.7,518.6L1110.8,518.4L1110.8,517.1L1110.8,515.7L1110.8,514.3L1110.8,512.9L1110.8,511.5L1110.8,510.1L1110.9,508.7L1110.9,507.3L1110.9,505.9L1110.9,504.5L1110.9,503.1L1110.9,501.6L1110.9,500.2L1110.9,498.8L1110.9,497.4L1110.9,496.0L1110.9,494.6L1110.9,493.2L1110.9,491.8L1110.9,490.4L1110.9,489.0L1110.9,487.6L1110.9,486.2L1110.9,484.8L1110.9,483.4L1110.9,482.0L1111.0,480.6L1111.0,479.2L1111.0,477.8L1111.0,476.4L1111.0,475.0L1111.0,473.6L1111.0,472.2L1111.0,470.8L1111.0,469.4L1111.0,468.0L1109.5,469.3L1108.0,470.6L1106.6,471.9L1105.1,473.1L1103.6,474.4L1102.1,475.7L1100.6,477.0L1099.1,478.3L1097.7,479.6L1096.2,480.9L1094.7,482.2L1093.2,483.4L1091.7,484.7L1090.2,486.0L1088.8,487.3L1087.3,488.6L1085.8,489.9L1084.3,491.2L1082.8,492.4L1081.4,493.7L1079.9,495.0L1078.4,496.3L1076.9,497.6L1075.4,498.9L1073.9,500.2L1072.5,501.4L1071.0,502.7L1069.5,504.0L1068.0,505.3L1066.5,506.6L1065.0,507.9L1063.6,509.2L1062.1,510.5L1060.6,511.7L1059.1,513.0L1057.6,514.3L1056.2,515.6L1054.7,516.9L1053.2,518.2L1051.7,519.5L1050.2,520.7L1048.7,522.0L1047.3,523.3L1045.8,524.6L1044.3,525.9L1042.8,527.2L1041.3,528.5L1039.8,529.7L1038.4,531.0L1036.9,532.3L1035.4,533.6L1033.9,534.9L1032.4,536.2L1030.9,537.5L1029.5,538.8L1028.0,540.0L1026.5,541.3L1025.0,542.6L1023.5,543.9L1022.1,545.2L1020.6,546.5L1019.1,547.8L1017.6,549.0L1016.1,550.3L1014.6,551.6L1013.2,552.9L1011.7,554.2L1010.2,555.5L1008.7,556.8L1007.2,558.1L1005.7,559.3L1004.3,560.6L1002.8,561.9L1001.3,563.2L999.8,564.5L998.3,565.8L996.9,567.1L995.4,568.3L993.9,569.6L992.4,570.9L990.9,572.2L989.4,573.5L988.0,574.8L986.5,576.1L985.0,577.3L983.5,578.6L982.0,579.9L980.5,581.2L979.1,582.5L977.6,583.8L976.1,585.1L974.6,586.4L973.1,587.6L971.7,588.9L970.2,590.2L968.7,591.5L967.2,592.8L965.7,594.1L964.2,595.4L962.8,596.6L961.3,597.9L959.8,599.2L958.3,600.5L956.8,601.8L955.3,603.1L953.9,604.4L952.4,605.6L950.9,606.9L949.4,608.2L947.9,609.5L946.5,610.8L945.0,612.1L943.5,613.4L942.0,614.7L940.5,615.9L939.0,617.2L937.6,618.5L936.1,619.8L934.6,621.1L933.1,622.4L931.6,623.7L930.1,624.9L928.7,626.2L927.2,627.5L925.7,628.8L924.2,630.1L922.7,631.4L921.3,632.7L919.8,633.9L918.3,635.2L916.8,636.5L915.3,637.8L913.8,639.1L912.4,640.4L910.9,641.7L909.4,643.0L907.9,644.2L906.4,645.5L904.9,646.8L903.5,648.1L902.0,649.4L900.5,650.7L899.0,652.0L897.5,653.2L896.1,654.5L894.6,655.8L893.1,657.1L891.6,658.4L890.1,659.7L888.6,661.0L887.2,662.3L885.7,663.5L884.2,664.8L882.7,666.1L881.2,667.4L879.7,668.7L878.3,670.0L876.8,671.3L875.3,672.5L873.8,673.8L872.3,675.1L870.8,676.4L869.4,677.7L867.9,679.0L866.4,680.3L864.9,681.5L863.4,682.8L862.0,684.1L860.5,685.4L859.0,686.7L857.5,688.0L856.0,689.3L854.5,690.6L853.1,691.8L851.6,693.1L850.1,694.4L848.6,695.7L847.1,697.0L845.6,698.3L844.2,699.6L842.7,700.8L841.2,702.1L839.7,703.4L838.2,704.7L836.8,706.0L835.3,707.3L833.8,708.6L832.3,709.8L830.8,711.1L829.3,712.4L827.9,713.7L826.4,715.0L824.9,716.3L823.4,717.6L821.9,718.9L820.4,720.1L819.0,721.4L817.5,722.7L816.0,724.0L816.0,725.4L816.0,726.8L815.9,728.3L815.9,729.7L815.9,731.1L815.9,732.5L815.9,733.9L815.8,735.3L815.8,736.8L815.8,738.2L815.8,739.6L815.8,741.0L815.7,742.4L815.7,743.8L815.7,745.3L815.7,746.7L815.7,748.1L815.6,749.5L815.6,750.9L815.6,752.3L815.6,753.8L815.6,755.2L815.5,756.6L815.5,758.0L815.5,759.4L815.5,760.8L815.5,762.3L815.4,763.7L815.4,765.1L815.4,766.5L815.4,767.9L815.4,769.3L815.3,770.8L815.3,772.2L815.3,773.6L815.3,775.0L815.3,776.4L815.2,777.8L815.2,779.3L815.2,780.7L815.2,782.1L815.2,783.5L815.1,784.9L815.1,786.4L815.1,787.8L815.1,789.2L815.1,790.6L815.0,792.0L815.0,793.4L815.0,794.9L815.0,796.3L815.0,797.7L814.9,799.1L814.9,800.5L814.9,801.9L814.9,803.4L814.9,804.8L814.8,806.2L814.8,807.6L814.8,809.0L814.8,810.4L814.8,811.9L814.7,813.3L814.7,814.7L814.7,816.1L814.7,817.5L814.7,818.9L814.6,820.4L814.6,821.8L814.6,823.2L814.6,824.6L814.6,826.0L814.5,827.4L814.5,828.9L814.5,830.3L814.5,831.7L814.5,833.1L814.4,834.5L814.4,835.9L814.4,837.4L814.4,838.8L814.4,840.2L814.3,841.6L814.3,843.0L814.3,844.5L814.3,845.9L814.3,847.3L814.2,848.7L814.2,850.1L814.2,851.5L814.2,853.0L814.2,854.4L814.1,855.8L814.1,857.2L814.1,858.6L814.1,860.0L814.1,861.5L814.0,862.9L814.0,864.3L814.0,865.7L814.0,867.1L813.9,868.5L813.9,870.0L813.9,871.4L813.9,872.8L813.9,874.2L813.8,875.6L813.8,877.0L813.8,878.5L813.8,879.9L813.8,881.3L813.7,882.7L813.7,884.1L813.7,885.5L813.7,887.0L813.7,888.4L813.6,889.8L813.6,891.2L813.6,892.6L813.6,894.1L813.6,895.5L813.5,896.9L813.5,898.3L813.5,899.7L813.5,901.1L813.5,902.6L813.4,904.0L813.4,905.4L813.4,906.8L813.4,908.2L813.4,909.6L813.3,911.1L813.3,912.5L813.3,913.9L813.3,915.3L813.3,916.7L813.2,918.1L813.2,919.6L813.2,921.0L813.2,922.4L813.2,923.8L813.1,925.2L813.1,926.6L813.1,928.1L813.1,929.5L813.1,930.9L813.0,932.3L813.0,933.7L813.0,935.1L813.0,936.6L813.0,938.0L812.9,939.4L812.9,940.8L812.9,942.2L812.9,943.6L812.9,945.1L812.8,946.5L812.8,947.9L812.8,949.3L812.8,950.7L812.8,952.2L812.7,953.6L812.7,955.0L812.7,956.4L812.7,957.8L812.7,959.2L812.6,960.7L812.6,962.1L812.6,963.5L812.6,964.9L812.6,966.3L812.5,967.7L812.5,969.2L812.5,970.6L812.5,972.0L812.5,973.4L812.4,974.8L812.4,976.2L812.4,977.7L812.4,979.1L812.4,980.5L812.3,981.9L812.3,983.3L812.3,984.7L812.3,986.2L812.3,987.6L812.2,989.0L812.2,990.4L812.2,991.8L812.2,993.2L812.2,994.7L812.1,996.1L812.1,997.5L812.1,998.9L812.1,1000.3L812.1,1001.7L812.0,1003.2L812.0,1004.6L812.0,1006.0Z" fill="#ffaa00"/>
<path d="M813.5,1004.7L815.0,1003.4L816.5,1002.1L818.0,1000.8L819.5,999.5L821.0,998.2L822.5,996.9L824.0,995.6L825.5,994.3L827.0,993.0L828.5,991.7L830.0,990.4L831.5,989.1L833.0,987.8L834.5,986.5L836.0,985.2L837.5,983.9L839.0,982.6L840.5,981.3L841.9,980.0L843.4,978.7L844.9,977.4L846.4,976.1L847.9,974.8L849.4,973.5L850.9,972.2L852.4,970.9L853.9,969.6L855.4,968.3L856.9,967.0L858.4,965.7L859.9,964.4L861.4,963.1L862.9,961.7L864.4,960.4L865.9,959.1L867.4,957.8L868.9,956.5L870.4,955.2L871.9,953.9L873.4,952.6L874.9,951.3L876.4,950.0L877.9,948.7L879.4,947.4L880.9,946.1L882.4,944.8L883.9,943.5L885.4,942.2L886.9,940.9L888.4,939.6L889.9,938.3L891.4,937.0L892.9,935.7L894.4,934.4L895.9,933.1L897.4,931.8L898.9,930.5L900.4,929.2L901.8,927.9L903.3,926.6L904.8,925.3L906.3,924.0L907.8,922.7L909.3,921.4L910.8,920.1L912.3,918.8L913.8,917.5L915.3,916.2L916.8,914.9L918.3,913.6L919.8,912.3L921.3,911.0L922.8,909.7L924.3,908.4L925.8,907.1L927.3,905.8L928.8,904.5L930.3,903.2L931.8,901.9L933.3,900.6L934.3,899.7L934.7,898.0L934.8,897.4L935.1,896.2L935.6,894.4L936.1,892.6L936.4,891.5L936.5,890.8L937.0,889.0L937.5,887.2L937.9,885.5L937.9,885.4L938.4,883.6L938.9,881.7L939.3,879.9L939.4,879.5L939.8,878.1L940.3,876.3L940.7,874.5L941.0,873.5L941.2,872.7L941.6,870.9L942.1,869.1L942.5,867.5L942.6,867.3L943.0,865.5L943.5,863.7L943.9,861.9L944.1,861.5L944.4,860.1L944.9,858.3L945.3,856.6L945.6,855.5L945.8,854.8L946.2,853.0L946.7,851.2L947.1,849.4L947.2,849.4L947.6,847.6L948.1,845.8L948.5,844.0L948.7,843.4L949.0,842.2L949.5,840.4L949.9,838.6L950.2,837.4L950.4,836.8L950.9,835.0L951.3,833.2L951.8,831.4L951.8,831.4L952.2,829.6L952.7,827.8L953.2,826.0L953.3,825.5L953.6,824.2L954.1,822.4L954.6,820.5L954.8,819.5L955.0,818.7L955.5,816.9L956.0,815.1L956.4,813.6L956.4,813.3L956.9,811.5L957.4,809.7L957.9,807.9L957.9,807.7L958.3,806.1L958.8,804.3L959.3,802.5L959.4,801.9L959.8,800.6L960.2,798.8L960.7,797.0L961.0,796.1L961.2,795.2L961.7,793.4L962.2,791.6L962.5,790.3L962.7,789.7L963.1,787.9L963.6,786.1L964.0,784.6L964.1,784.3L964.6,782.4L965.1,780.6L965.6,778.9L965.6,778.8L966.1,777.0L966.6,775.1L967.1,773.3L967.1,773.3L967.6,771.5L968.1,769.6L968.6,767.8L968.6,767.7L969.1,765.9L969.6,764.1L970.1,762.3L970.2,762.2L970.7,760.4L971.2,758.6L971.7,756.8L971.7,756.7L972.2,754.9L972.8,753.0L973.2,751.4L973.3,751.1L973.8,749.3L974.3,747.4L974.7,746.1L974.9,745.6L975.4,743.7L976.0,741.8L976.3,740.8L976.5,740.0L977.1,738.1L977.6,736.2L977.8,735.6L978.2,734.3L978.7,732.4L979.3,730.6L979.3,730.4L979.8,728.7L980.4,726.8L980.8,725.4L981.0,724.9L981.6,723.0L982.1,721.1L982.4,720.4L982.7,719.2L983.2,717.4L983.7,715.5L983.9,715.0L984.2,713.7L984.7,711.8L985.2,710.0L985.4,709.4L985.7,708.2L986.2,706.3L986.8,704.5L986.9,703.9L987.3,702.6L987.8,700.7L988.4,698.9L988.4,698.7L988.9,697.0L989.5,695.1L990.0,693.5L990.1,693.2L990.6,691.3L991.2,689.4L991.5,688.6L991.8,687.5L992.4,685.6L993.0,683.7L993.0,683.7L993.6,681.7L994.3,679.8L994.5,679.0L994.9,677.8L995.5,675.9L996.0,674.4L996.2,673.9L996.9,671.9L997.5,670.0L997.5,669.9L998.2,668.0L998.9,666.0L999.1,665.5L999.6,664.0L1000.3,661.9L1000.6,661.2L1001.0,659.9L1001.7,657.9L1002.1,657.0L1002.5,655.9L1003.2,653.8L1003.6,652.9L1004.0,651.8L1004.8,649.7L1005.1,648.8L1005.5,647.6L1006.3,645.6L1006.6,644.8L1007.1,643.5L1007.9,641.4L1008.1,640.8L1008.7,639.3L1009.5,637.2L1009.6,636.9L1010.3,635.1L1011.1,633.1L1011.2,632.9L1012.0,630.8L1012.6,629.3L1012.9,628.7L1013.7,626.6L1014.1,625.4L1014.5,624.5L1015.2,622.4L1015.6,621.4L1016.0,620.3L1016.8,618.2L1017.1,617.5L1017.7,616.1L1018.5,614.0L1018.6,613.6L1019.3,611.9L1020.1,609.8L1020.1,609.8L1021.0,607.6L1021.6,606.0L1021.9,605.5L1022.7,603.3L1023.1,602.3L1023.6,601.1L1024.5,599.0L1024.6,598.7L1025.4,596.8L1026.1,595.1L1026.4,594.5L1027.5,592.2L1027.6,592.0L1028.8,589.7L1029.1,589.0L1030.0,587.2L1030.6,586.0L1031.3,584.7L1032.1,583.1L1032.6,582.2L1033.6,580.1L1033.8,579.7L1035.1,577.2L1035.1,577.2L1036.4,574.7L1036.6,574.3L1037.7,572.2L1038.1,571.3L1039.0,569.6L1039.6,568.5L1040.3,567.1L1041.1,565.6L1041.6,564.6L1042.6,562.7L1042.9,562.0L1044.1,559.8L1044.3,559.5L1045.6,557.0L1045.6,556.9L1047.0,554.3L1047.1,554.1L1048.3,551.8L1048.6,551.3L1049.7,549.2L1050.1,548.4L1051.0,546.6L1051.6,545.6L1052.4,544.0L1053.0,542.8L1053.8,541.4L1054.5,540.0L1055.2,538.8L1056.0,537.2L1056.6,536.2L1057.5,534.5L1058.0,533.6L1059.0,531.7L1059.4,530.9L1060.5,528.9L1060.8,528.3L1062.0,526.2L1062.3,525.7L1063.5,523.4L1063.7,523.0L1065.0,520.7L1065.2,520.4L1066.5,518.0L1066.6,517.7L1068.0,515.2L1068.1,515.0L1069.4,512.5L1069.5,512.4L1070.9,509.8L1071.0,509.7L1072.4,507.1L1072.5,507.0L1073.9,504.4L1074.0,504.3L1075.4,501.8L1075.5,501.6L1076.9,499.1L1077.0,498.9L1078.4,496.5L1078.7,496.1L1078.4,496.3L1076.9,497.6L1075.4,498.9L1073.9,500.2L1072.5,501.4L1071.0,502.7L1069.5,504.0L1068.0,505.3L1066.5,506.6L1065.0,507.9L1063.6,509.2L1062.1,510.5L1060.6,511.7L1059.1,513.0L1057.6,514.3L1056.2,515.6L1054.7,516.9L1053.2,518.2L1051.7,519.5L1050.2,520.7L1048.7,522.0L1047.3,523.3L1045.8,524.6L1044.3,525.9L1042.8,527.2L1041.3,528.5L1039.8,529.7L1038.4,531.0L1036.9,532.3L1035.4,533.6L1033.9,534.9L1032.4,536.2L1030.9,537.5L1029.5,538.8L1028.0,540.0L1026.5,541.3L1025.0,542.6L1023.5,543.9L1022.1,545.2L1020.6,546.5L1019.1,547.8L1017.6,549.0L1016.1,550.3L1014.6,551.6L1013.2,552.9L1011.7,554.2L1010.2,555.5L1008.7,556.8L1007.2,558.1L1005.7,559.3L1004.3,560.6L1002.8,561.9L1001.3,563.2L999.8,564.5L998.3,565.8L996.9,567.1L995.4,568.3L993.9,569.6L992.4,570.9L990.9,572.2L989.4,573.5L988.0,574.8L986.5,576.1L985.0,577.3L983.5,578.6L982.0,579.9L980.5,581.2L979.1,582.5L977.6,583.8L976.1,585.1L974.6,586.4L973.1,587.6L971.7,588.9L970.2,590.2L968.7,591.5L967.2,592.8L965.7,594.1L964.2,595.4L962.8,596.6L961.3,597.9L959.8,599.2L958.3,600.5L956.8,601.8L955.3,603.1L953.9,604.4L952.4,605.6L950.9,606.9L949.4,608.2L947.9,609.5L946.5,610.8L945.0,612.1L943.5,613.4L942.0,614.7L940.5,615.9L939.0,617.2L937.6,618.5L936.1,619.8L934.6,621.1L933.1,622.4L931.6,623.7L930.1,624.9L928.7,626.2L927.2,627.5L925.7,628.8L924.2,630.1L922.7,631.4L921.3,632.7L919.8,633.9L918.3,635.2L916.8,636.5L915.3,637.8L913.8,639.1L912.4,640.4L910.9,641.7L909.4,643.0L907.9,644.2L906.4,645.5L904.9,646.8L903.5,648.1L902.0,649.4L900.5,650.7L899.0,652.0L897.5,653.2L896.1,654.5L894.6,655.8L893.1,657.1L891.6,658.4L890.1,659.7L888.6,661.0L887.2,662.3L885.7,663.5L884.2,664.8L882.7,666.1L881.2,667.4L879.7,668.7L878.3,670.0L876.8,671.3L875.3,672.5L873.8,673.8L872.3,675.1L870.8,676.4L869.4,677.7L867.9,679.0L866.4,680.3L864.9,681.5L863.4,682.8L862.0,684.1L860.5,685.4L859.0,686.7L857.5,688.0L856.0,689.3L854.5,690.6L853.1,691.8L851.6,693.1L850.1,694.4L848.6,695.7L847.1,697.0L845.6,698.3L844.2,699.6L842.7,700.8L841.2,702.1L839.7,703.4L838.2,704.7L836.8,706.0L835.3,707.3L833.8,708.6L832.3,709.8L830.8,711.1L829.3,712.4L827.9,713.7L826.4,715.0L824.9,716.3L823.4,717.6L821.9,718.9L820.4,720.1L819.0,721.4L817.5,722.7L816.0,724.0L816.0,725.4L816.0,726.8L815.9,728.3L815.9,729.7L815.9,731.1L815.9,732.5L815.9,733.9L815.8,735.3L815.8,736.8L815.8,738.2L815.8,739.6L815.8,741.0L815.7,742.4L815.7,743.8L815.7,745.3L815.7,746.7L815.7,748.1L815.6,749.5L815.6,750.9L815.6,752.3L815.6,753.8L815.6,755.2L815.5,756.6L815.5,758.0L815.5,759.4L815.5,760.8L815.5,762.3L815.4,763.7L815.4,765.1L815.4,766.5L815.4,767.9L815.4,769.3L815.3,770.8L815.3,772.2L815.3,773.6L815.3,775.0L815.3,776.4L815.2,777.8L815.2,779.3L815.2,780.7L815.2,782.1L815.2,783.5L815.1,784.9L815.1,786.4L815.1,787.8L815.1,789.2L815.1,790.6L815.0,792.0L815.0,793.4L815.0,794.9L815.0,796.3L815.0,797.7L814.9,799.1L814.9,800.5L814.9,801.9L814.9,803.4L814.9,804.8L814.8,806.2L814.8,807.6L814.8,809.0L814.8,810.4L814.8,811.9L814.7,813.3L814.7,814.7L814.7,816.1L814.7,817.5L814.7,818.9L814.6,820.4L814.6,821.8L814.6,823.2L814.6,824.6L814.6,826.0L814.5,827.4L814.5,828.9L814.5,830.3L814.5,831.7L814.5,833.1L814.4,834.5L814.4,835.9L814.4,837.4L814.4,838.8L814.4,840.2L814.3,841.6L814.3,843.0L814.3,844.5L814.3,845.9L814.3,847.3L814.2,848.7L814.2,850.1L814.2,851.5L814.2,853.0L814.2,854.4L814.1,855.8L814.1,857.2L814.1,858.6L814.1,860.0L814.1,861.5L814.0,862.9L814.0,864.3L814.0,865.7L814.0,867.1L813.9,868.5L813.9,870.0L813.9,871.4L813.9,872.8L813.9,874.2L813.8,875.6L813.8,877.0L813.8,878.5L813.8,879.9L813.8,881.3L813.7,882.7L813.7,884.1L813.7,885.5L813.7,887.0L813.7,888.4L813.6,889.8L813.6,891.2L813.6,892.6L813.6,894.1L813.6,895.5L813.5,896.9L813.5,898.3L813.5,899.7L813.5,901.1L813.5,902.6L813.4,904.0L813.4,905.4L813.4,906.8L813.4,908.2L813.4,909.6L813.3,911.1L813.3,912.5L813.3,913.9L813.3,915.3L813.3,916.7L813.2,918.1L813.2,919.6L813.2,921.0L813.2,922.4L813.2,923.8L813.1,925.2L813.1,926.6L813.1,928.1L813.1,929.5L813.1,930.9L813.0,932.3L813.0,933.7L813.0,935.1L813.0,936.6L813.0,938.0L812.9,939.4L812.9,940.8L812.9,942.2L812.9,943.6L812.9,945.1L812.8,946.5L812.8,947.9L812.8,949.3L812.8,950.7L812.8,952.2L812.7,953.6L812.7,955.0L812.7,956.4L812.7,957.8L812.7,959.2L812.6,960.7L812.6,962.1L812.6,963.5L812.6,964.9L812.6,966.3L812.5,967.7L812.5,969.2L812.5,970.6L812.5,972.0L812.5,973.4L812.4,974.8L812.4,976.2L812.4,977.7L812.4,979.1L812.4,980.5L812.3,981.9L812.3,983.3L812.3,984.7L812.3,986.2L812.3,987.6L812.2,989.0L812.2,990.4L812.2,991.8L812.2,993.2L812.2,994.7L812.1,996.1L812.1,997.5L812.1,998.9L812.1,1000.3L812.1,1001.7L812.0,1003.2L812.0,1004.6L812.0,1006.0Z" fill="#ff7700"/>
<path d="M813.5,1004.7L815.0,1003.4L816.5,1002.1L818.0,1000.8L819.5,999.5L821.0,998.2L822.5,996.9L824.0,995.6L825.5,994.3L827.0,993.0L828.5,991.7L830.0,990.4L831.5,989.1L833.0,987.8L834.5,986.5L836.0,985.2L837.5,983.9L839.0,982.6L840.5,981.3L841.9,980.0L843.4,978.7L844.9,977.4L846.4,976.1L847.9,974.8L849.4,973.5L850.9,972.2L852.4,970.9L853.9,969.6L855.4,968.3L856.9,967.0L858.4,965.7L859.9,964.4L861.4,963.1L862.9,961.7L864.4,960.4L865.9,959.1L867.4,957.8L868.9,956.5L870.4,955.2L871.9,953.9L873.4,952.6L874.9,951.3L876.4,950.0L877.9,948.7L879.4,947.4L880.9,946.1L882.4,944.8L883.9,943.5L885.4,942.2L886.9,940.9L888.4,939.6L889.9,938.3L891.4,937.0L892.9,935.7L894.2,934.5L894.4,933.8L894.5,932.9L894.8,931.2L895.1,929.5L895.4,927.9L895.7,926.2L895.9,925.1L896.0,924.6L896.3,922.9L896.6,921.2L897.0,919.6L897.3,917.9L897.5,916.4L897.6,916.2L897.9,914.6L898.2,912.9L898.5,911.2L898.8,909.6L899.1,908.0L899.1,907.9L899.4,906.2L899.7,904.6L900.1,902.9L900.4,901.2L900.7,899.6L900.7,899.5L901.0,897.9L901.3,896.2L901.7,894.5L902.0,892.8L902.3,891.4L902.3,891.1L902.6,889.5L903.0,887.8L903.3,886.1L903.6,884.4L903.8,883.4L903.9,882.7L904.3,881.0L904.6,879.3L904.9,877.7L905.3,876.0L905.4,875.4L905.6,874.3L906.0,872.6L906.3,870.9L906.6,869.2L907.0,867.7L907.0,867.5L907.3,865.8L907.7,864.1L908.0,862.4L908.4,860.7L908.5,860.0L908.7,859.0L909.1,857.3L909.4,855.6L909.8,853.8L910.1,852.5L910.2,852.1L910.5,850.4L910.9,848.7L911.2,847.0L911.6,845.3L911.6,845.2L912.0,843.6L912.4,841.8L912.7,840.1L913.1,838.4L913.2,838.0L913.5,836.7L913.9,834.9L914.2,833.2L914.6,831.5L914.7,830.9L915.0,829.8L915.4,828.0L915.8,826.3L916.2,824.5L916.3,823.9L916.5,822.8L916.9,821.1L917.3,819.3L917.7,817.6L917.8,817.1L918.1,815.8L918.5,814.1L918.9,812.3L919.4,810.6L919.4,810.4L919.8,808.8L920.2,807.1L920.6,805.3L920.9,803.8L921.0,803.5L921.4,801.8L921.8,800.0L922.3,798.2L922.5,797.3L922.7,796.5L923.1,794.7L923.6,792.9L924.0,791.2L924.0,791.0L924.4,789.4L924.9,787.6L925.3,785.8L925.6,784.8L925.8,784.0L926.2,782.2L926.7,780.4L927.1,778.7L927.1,778.6L927.6,776.8L928.0,775.0L928.5,773.2L928.7,772.7L929.0,771.4L929.4,769.6L929.9,767.8L930.2,766.8L930.4,766.0L930.9,764.2L931.4,762.4L931.7,761.0L931.8,760.6L932.3,758.7L932.8,756.9L933.3,755.3L933.3,755.1L933.8,753.2L934.3,751.4L934.8,749.7L934.8,749.6L935.3,747.7L935.8,745.9L936.3,744.2L936.4,744.1L936.9,742.2L937.4,740.4L937.9,738.7L937.9,738.5L938.4,736.7L938.9,734.8L939.4,733.2L939.5,733.0L940.0,731.1L940.5,729.2L940.9,727.9L941.0,727.4L941.6,725.5L942.1,723.7L942.4,722.6L942.7,721.8L943.2,719.9L943.8,718.0L944.0,717.4L944.3,716.2L944.9,714.3L945.4,712.4L945.5,712.2L946.0,710.5L946.6,708.6L947.0,707.1L947.1,706.7L947.7,704.8L948.3,702.9L948.5,702.1L948.9,701.0L949.5,699.1L950.0,697.2L950.1,697.2L950.6,695.3L951.2,693.4L951.6,692.3L951.8,691.4L952.5,689.5L953.1,687.6L953.1,687.5L953.7,685.6L954.3,683.7L954.6,682.8L954.9,681.7L955.6,679.8L956.1,678.1L956.2,677.8L956.9,675.9L957.5,673.9L957.6,673.6L958.2,671.9L958.9,670.0L959.2,669.1L959.5,668.0L960.2,666.0L960.7,664.6L960.9,664.0L961.6,662.0L962.2,660.2L962.3,660.0L963.0,658.0L963.7,656.0L963.7,656.0L964.4,653.9L965.1,651.9L965.2,651.7L965.9,649.9L966.6,647.8L966.7,647.6L967.4,645.8L968.1,643.7L968.2,643.5L968.9,641.7L969.7,639.6L969.7,639.4L970.5,637.5L971.3,635.4L971.3,635.4L972.1,633.3L972.8,631.5L972.9,631.2L973.7,629.1L974.3,627.7L974.5,627.0L975.4,624.8L975.8,623.9L976.2,622.7L977.1,620.5L977.3,620.1L978.0,618.4L978.8,616.5L978.9,616.2L979.8,614.0L980.3,612.8L980.7,611.8L981.6,609.6L981.8,609.3L982.6,607.4L983.3,605.7L983.5,605.2L984.4,603.0L984.8,602.2L985.4,600.8L986.3,598.6L986.3,598.6L987.3,596.3L987.8,595.2L988.3,594.1L989.3,591.9L989.4,591.7L990.4,589.4L990.8,588.6L991.5,587.1L992.3,585.4L992.6,584.7L993.8,582.3L993.8,582.3L994.9,579.9L995.3,579.2L996.1,577.5L996.8,576.1L997.3,575.1L998.3,573.0L998.5,572.6L999.7,570.2L999.8,570.0L1000.9,567.7L1001.3,567.1L1002.2,565.2L1002.8,564.1L1003.5,562.7L1004.3,561.2L1004.8,560.2L1004.3,560.6L1002.8,561.9L1001.3,563.2L999.8,564.5L998.3,565.8L996.9,567.1L995.4,568.3L993.9,569.6L992.4,570.9L990.9,572.2L989.4,573.5L988.0,574.8L986.5,576.1L985.0,577.3L983.5,578.6L982.0,579.9L980.5,581.2L979.1,582.5L977.6,583.8L976.1,585.1L974.6,586.4L973.1,587.6L971.7,588.9L970.2,590.2L968.7,591.5L967.2,592.8L965.7,594.1L964.2,595.4L962.8,596.6L961.3,597.9L959.8,599.2L958.3,600.5L956.8,601.8L955.3,603.1L953.9,604.4L952.4,605.6L950.9,606.9L949.4,608.2L947.9,609.5L946.5,610.8L945.0,612.1L943.5,613.4L942.0,614.7L940.5,615.9L939.0,617.2L937.6,618.5L936.1,619.8L934.6,621.1L933.1,622.4L931.6,623.7L930.1,624.9L928.7,626.2L927.2,627.5L925.7,628.8L924.2,630.1L922.7,631.4L921.3,632.7L919.8,633.9L918.3,635.2L916.8,636.5L915.3,637.8L913.8,639.1L912.4,640.4L910.9,641.7L909.4,643.0L907.9,644.2L906.4,645.5L904.9,646.8L903.5,648.1L902.0,649.4L900.5,650.7L899.0,652.0L897.5,653.2L896.1,654.5L894.6,655.8L893.1,657.1L891.6,658.4L890.1,659.7L888.6,661.0L887.2,662.3L885.7,663.5L884.2,664.8L882.7,666.1L881.2,667.4L879.7,668.7L878.3,670.0L876.8,671.3L875.3,672.5L873.8,673.8L872.3,675.1L870.8,676.4L869.4,677.7L867.9,679.0L866.4,680.3L864.9,681.5L863.4,682.8L862.0,684.1L860.5,685.4L859.0,686.7L857.5,688.0L856.0,689.3L854.5,690.6L853.1,691.8L851.6,693.1L850.1,694.4L848.6,695.7L847.1,697.0L845.6,698.3L844.2,699.6L842.7,700.8L841.2,702.1L839.7,703.4L838.2,704.7L836.8,706.0L835.3,707.3L833.8,708.6L832.3,709.8L830.8,711.1L829.3,712.4L827.9,713.7L826.4,715.0L824.9,716.3L823.4,717.6L821.9,718.9L820.4,720.1L819.0,721.4L817.5,722.7L816.0,724.0L816.0,725.4L816.0,726.8L815.9,728.3L815.9,729.7L815.9,731.1L815.9,732.5L815.9,733.9L815.8,735.3L815.8,736.8L815.8,738.2L815.8,739.6L815.8,741.0L815.7,742.4L815.7,743.8L815.7,745.3L815.7,746.7L815.7,748.1L815.6,749.5L815.6,750.9L815.6,752.3L815.6,753.8L815.6,755.2L815.5,756.6L815.5,758.0L815.5,759.4L815.5,760.8L815.5,762.3L815.4,763.7L815.4,765.1L815.4,766.5L815.4,767.9L815.4,769.3L815.3,770.8L815.3,772.2L815.3,773.6L815.3,775.0L815.3,776.4L815.2,777.8L815.2,779.3L815.2,780.7L815.2,782.1L815.2,783.5L815.1,784.9L815.1,786.4L815.1,787.8L815.1,789.2L815.1,790.6L815.0,792.0L815.0,793.4L815.0,794.9L815.0,796.3L815.0,797.7L814.9,799.1L814.9,800.5L814.9,801.9L814.9,803.4L814.9,804.8L814.8,806.2L814.8,807.6L814.8,809.0L814.8,810.4L814.8,811.9L814.7,813.3L814.7,814.7L814.7,816.1L814.7,817.5L814.7,818.9L814.6,820.4L814.6,821.8L814.6,823.2L814.6,824.6L814.6,826.0L814.5,827.4L814.5,828.9L814.5,830.3L814.5,831.7L814.5,833.1L814.4,834.5L814.4,835.9L814.4,837.4L814.4,838.8L814.4,840.2L814.3,841.6L814.3,843.0L814.3,844.5L814.3,845.9L814.3,847.3L814.2,848.7L814.2,850.1L814.2,851.5L814.2,853.0L814.2,854.4L814.1,855.8L814.1,857.2L814.1,858.6L814.1,860.0L814.1,861.5L814.0,862.9L814.0,864.3L814.0,865.7L814.0,867.1L813.9,868.5L813.9,870.0L813.9,871.4L813.9,872.8L813.9,874.2L813.8,875.6L813.8,877.0L813.8,878.5L813.8,879.9L813.8,881.3L813.7,882.7L813.7,884.1L813.7,885.5L813.7,887.0L813.7,888.4L813.6,889.8L813.6,891.2L813.6,892.6L813.6,894.1L813.6,895.5L813.5,896.9L813.5,898.3L813.5,899.7L813.5,901.1L813.5,902.6L813.4,904.0L813.4,905.4L813.4,906.8L813.4,908.2L813.4,909.6L813.3,911.1L813.3,912.5L813.3,913.9L813.3,915.3L813.3,916.7L813.2,918.1L813.2,919.6L813.2,921.0L813.2,922.4L813.2,923.8L813.1,925.2L813.1,926.6L813.1,928.1L813.1,929.5L813.1,930.9L813.0,932.3L813.0,933.7L813.0,935.1L813.0,936.6L813.0,938.0L812.9,939.4L812.9,940.8L812.9,942.2L812.9,943.6L812.9,945.1L812.8,946.5L812.8,947.9L812.8,949.3L812.8,950.7L812.8,952.2L812.7,953.6L812.7,955.0L812.7,956.4L812.7,957.8L812.7,959.2L812.6,960.7L812.6,962.1L812.6,963.5L812.6,964.9L812.6,966.3L812.5,967.7L812.5,969.2L812.5,970.6L812.5,972.0L812.5,973.4L812.4,974.8L812.4,976.2L812.4,977.7L812.4,979.1L812.4,980.5L812.3,981.9L812.3,983.3L812.3,984.7L812.3,986.2L812.3,987.6L812.2,989.0L812.2,990.4L812.2,991.8L812.2,993.2L812.2,994.7L812.1,996.1L812.1,997.5L812.1,998.9L812.1,1000.3L812.1,1001.7L812.0,1003.2L812.0,1004.6L812.0,1006.0Z" fill="#ff3300"/>
<path d="M813.5,1004.7L815.0,1003.4L816.5,1002.1L818.0,1000.8L819.5,999.5L821.0,998.2L822.5,996.9L824.0,995.6L825.5,994.3L827.0,993.0L828.5,991.7L830.0,990.4L831.5,989.1L833.0,987.8L834.5,986.5L836.0,985.2L837.5,983.9L839.0,982.6L840.5,981.3L841.9,980.0L843.4,978.7L844.9,977.4L846.4,976.1L847.8,974.9L847.9,974.2L848.2,973.1L848.7,971.3L849.2,969.5L849.5,968.2L849.6,967.7L850.1,965.9L850.5,964.1L851.0,962.3L851.1,962.0L851.4,960.5L851.9,958.8L852.3,957.0L852.6,955.5L852.7,955.2L853.1,953.5L853.5,951.7L853.9,950.0L854.2,948.8L854.3,948.2L854.7,946.5L855.1,944.7L855.5,943.0L855.8,941.8L855.9,941.3L856.3,939.5L856.6,937.8L857.0,936.1L857.3,934.6L857.4,934.4L857.7,932.7L858.1,931.0L858.5,929.2L858.8,927.5L858.9,927.0L859.2,925.8L859.5,924.1L859.8,922.4L860.2,920.8L860.5,919.2L860.5,919.1L860.8,917.4L861.2,915.7L861.5,914.0L861.8,912.3L862.1,911.1L862.1,910.6L862.5,909.0L862.8,907.3L863.1,905.6L863.4,904.0L863.6,902.6L863.7,902.3L864.0,900.6L864.3,899.0L864.6,897.3L864.9,895.6L865.2,894.0L865.2,893.9L865.5,892.3L865.8,890.7L866.1,889.0L866.4,887.4L866.7,885.7L866.8,884.9L867.0,884.1L867.2,882.4L867.5,880.8L867.8,879.1L868.1,877.5L868.4,875.9L868.4,875.6L868.6,874.2L868.9,872.6L869.2,870.9L869.5,869.3L869.7,867.7L870.0,866.1L870.0,866.0L870.3,864.4L870.5,862.8L870.8,861.1L871.1,859.5L871.3,857.9L871.6,856.3L871.6,856.2L871.9,854.6L872.1,853.0L872.4,851.4L872.7,849.7L872.9,848.1L873.2,846.5L873.2,846.4L873.4,844.9L873.7,843.2L874.0,841.6L874.2,840.0L874.5,838.4L874.7,836.7L874.8,836.4L875.0,835.1L875.3,833.5L875.5,831.9L875.8,830.2L876.0,828.6L876.3,827.0L876.4,826.3L876.5,825.4L876.8,823.8L877.0,822.1L877.3,820.5L877.6,818.9L877.8,817.3L878.0,816.2L878.1,815.6L878.3,814.0L878.6,812.4L878.9,810.8L879.1,809.1L879.4,807.5L879.6,806.5L879.7,805.8L880.0,804.2L880.4,802.5L880.7,800.8L881.0,799.1L881.1,798.3L881.3,797.4L881.6,795.8L882.0,794.1L882.3,792.4L882.6,790.7L882.7,790.3L883.0,789.0L883.3,787.3L883.6,785.6L884.0,784.0L884.3,782.3L884.3,782.3L884.6,780.6L885.0,778.9L885.3,777.2L885.7,775.5L885.8,774.6L886.0,773.8L886.3,772.1L886.7,770.4L887.0,768.7L887.4,767.0L887.4,766.9L887.7,765.3L888.1,763.6L888.5,761.9L888.8,760.1L889.0,759.4L889.2,758.4L889.5,756.7L889.9,755.0L890.3,753.3L890.5,752.1L890.6,751.6L891.0,749.8L891.4,748.1L891.8,746.4L892.1,745.0L892.1,744.7L892.5,742.9L892.9,741.2L893.3,739.5L893.6,738.0L893.7,737.7L894.1,736.0L894.5,734.2L894.9,732.5L895.2,731.2L895.3,730.7L895.7,729.0L896.1,727.2L896.5,725.5L896.7,724.6L896.9,723.7L897.4,721.9L897.8,720.2L898.2,718.4L898.3,718.3L898.7,716.6L899.1,714.8L899.6,713.0L899.8,712.1L900.0,711.2L900.5,709.4L901.0,707.6L901.3,706.1L901.4,705.8L901.9,704.0L902.4,702.2L902.9,700.4L902.9,700.3L903.3,698.6L903.8,696.7L904.3,694.9L904.4,694.6L904.8,693.1L905.3,691.2L905.9,689.4L905.9,689.1L906.4,687.5L906.9,685.7L907.4,683.8L907.5,683.7L908.0,682.0L908.5,680.1L909.0,678.4L909.1,678.2L909.6,676.3L910.2,674.5L910.5,673.2L910.7,672.6L911.3,670.7L911.9,668.8L912.1,668.2L912.5,666.9L913.1,664.9L913.6,663.3L913.7,663.0L914.3,661.1L914.9,659.2L915.1,658.5L915.5,657.2L916.1,655.3L916.6,653.8L916.8,653.3L917.4,651.4L918.1,649.4L918.1,649.2L918.7,647.4L919.4,645.4L919.7,644.8L920.1,643.5L920.8,641.5L921.2,640.4L921.5,639.4L922.2,637.4L922.7,636.1L922.9,635.4L923.7,633.4L924.2,631.9L924.4,631.3L925.1,629.3L924.2,630.1L922.7,631.4L921.3,632.7L919.8,633.9L918.3,635.2L916.8,636.5L915.3,637.8L913.8,639.1L912.4,640.4L910.9,641.7L909.4,643.0L907.9,644.2L906.4,645.5L904.9,646.8L903.5,648.1L902.0,649.4L900.5,650.7L899.0,652.0L897.5,653.2L896.1,654.5L894.6,655.8L893.1,657.1L891.6,658.4L890.1,659.7L888.6,661.0L887.2,662.3L885.7,663.5L884.2,664.8L882.7,666.1L881.2,667.4L879.7,668.7L878.3,670.0L876.8,671.3L875.3,672.5L873.8,673.8L872.3,675.1L870.8,676.4L869.4,677.7L867.9,679.0L866.4,680.3L864.9,681.5L863.4,682.8L862.0,684.1L860.5,685.4L859.0,686.7L857.5,688.0L856.0,689.3L854.5,690.6L853.1,691.8L851.6,693.1L850.1,694.4L848.6,695.7L847.1,697.0L845.6,698.3L844.2,699.6L842.7,700.8L841.2,702.1L839.7,703.4L838.2,704.7L836.8,706.0L835.3,707.3L833.8,708.6L832.3,709.8L830.8,711.1L829.3,712.4L827.9,713.7L826.4,715.0L824.9,716.3L823.4,717.6L821.9,718.9L820.4,720.1L819.0,721.4L817.5,722.7L816.0,724.0L816.0,725.4L816.0,726.8L815.9,728.3L815.9,729.7L815.9,731.1L815.9,732.5L815.9,733.9L815.8,735.3L815.8,736.8L815.8,738.2L815.8,739.6L815.8,741.0L815.7,742.4L815.7,743.8L815.7,745.3L815.7,746.7L815.7,748.1L815.6,749.5L815.6,750.9L815.6,752.3L815.6,753.8L815.6,755.2L815.5,756.6L815.5,758.0L815.5,759.4L815.5,760.8L815.5,762.3L815.4,763.7L815.4,765.1L815.4,766.5L815.4,767.9L815.4,769.3L815.3,770.8L815.3,772.2L815.3,773.6L815.3,775.0L815.3,776.4L815.2,777.8L815.2,779.3L815.2,780.7L815.2,782.1L815.2,783.5L815.1,784.9L815.1,786.4L815.1,787.8L815.1,789.2L815.1,790.6L815.0,792.0L815.0,793.4L815.0,794.9L815.0,796.3L815.0,797.7L814.9,799.1L814.9,800.5L814.9,801.9L814.9,803.4L814.9,804.8L814.8,806.2L814.8,807.6L814.8,809.0L814.8,810.4L814.8,811.9L814.7,813.3L814.7,814.7L814.7,816.1L814.7,817.5L814.7,818.9L814.6,820.4L814.6,821.8L814.6,823.2L814.6,824.6L814.6,826.0L814.5,827.4L814.5,828.9L814.5,830.3L814.5,831.7L814.5,833.1L814.4,834.5L814.4,835.9L814.4,837.4L814.4,838.8L814.4,840.2L814.3,841.6L814.3,843.0L814.3,844.5L814.3,845.9L814.3,847.3L814.2,848.7L814.2,850.1L814.2,851.5L814.2,853.0L814.2,854.4L814.1,855.8L814.1,857.2L814.1,858.6L814.1,860.0L814.1,861.5L814.0,862.9L814.0,864.3L814.0,865.7L814.0,867.1L813.9,868.5L813.9,870.0L813.9,871.4L813.9,872.8L813.9,874.2L813.8,875.6L813.8,877.0L813.8,878.5L813.8,879.9L813.8,881.3L813.7,882.7L813.7,884.1L813.7,885.5L813.7,887.0L813.7,888.4L813.6,889.8L813.6,891.2L813.6,892.6L813.6,894.1L813.6,895.5L813.5,896.9L813.5,898.3L813.5,899.7L813.5,901.1L813.5,902.6L813.4,904.0L813.4,905.4L813.4,906.8L813.4,908.2L813.4,909.6L813.3,911.1L813.3,912.5L813.3,913.9L813.3,915.3L813.3,916.7L813.2,918.1L813.2,919.6L813.2,921.0L813.2,922.4L813.2,923.8L813.1,925.2L813.1,926.6L813.1,928.1L813.1,929.5L813.1,930.9L813.0,932.3L813.0,933.7L813.0,935.1L813.0,936.6L813.0,938.0L812.9,939.4L812.9,940.8L812.9,942.2L812.9,943.6L812.9,945.1L812.8,946.5L812.8,947.9L812.8,949.3L812.8,950.7L812.8,952.2L812.7,953.6L812.7,955.0L812.7,956.4L812.7,957.8L812.7,959.2L812.6,960.7L812.6,962.1L812.6,963.5L812.6,964.9L812.6,966.3L812.5,967.7L812.5,969.2L812.5,970.6L812.5,972.0L812.5,973.4L812.4,974.8L812.4,976.2L812.4,977.7L812.4,979.1L812.4,980.5L812.3,981.9L812.3,983.3L812.3,984.7L812.3,986.2L812.3,987.6L812.2,989.0L812.2,990.4L812.2,991.8L812.2,993.2L812.2,994.7L812.1,996.1L812.1,997.5L812.1,998.9L812.1,1000.3L812.1,1001.7L812.0,1003.2L812.0,1004.6L812.0,1006.0Z" fill="#ee0000"/>
<path d="M812.9,964.7L813.3,962.9L813.7,961.1L814.1,959.4L814.1,959.3L814.5,957.6L815.0,955.8L815.4,954.1L815.7,952.7L815.8,952.3L816.2,950.6L816.6,948.8L817.1,947.0L817.3,946.1L817.5,945.3L817.9,943.5L818.3,941.7L818.7,940.0L818.8,939.4L819.1,938.2L819.5,936.5L820.0,934.7L820.4,932.9L820.4,932.8L820.8,931.2L821.2,929.4L821.6,927.7L822.0,926.0L822.0,925.9L822.4,924.2L822.8,922.4L823.2,920.7L823.6,919.2L823.6,918.9L824.0,917.2L824.4,915.5L824.8,913.7L825.1,912.2L825.2,912.0L825.6,910.2L825.9,908.5L826.3,906.8L826.7,905.1L826.7,905.1L827.1,903.3L827.4,901.6L827.8,899.9L828.2,898.2L828.3,897.7L828.5,896.5L828.9,894.8L829.2,893.0L829.6,891.3L829.9,890.1L829.9,889.6L830.3,887.9L830.6,886.3L831.0,884.6L831.3,882.9L831.4,882.1L831.6,881.2L831.9,879.5L832.3,877.8L832.6,876.2L832.9,874.5L833.0,873.7L833.2,872.8L833.5,871.2L833.8,869.5L834.1,867.9L834.3,866.2L834.6,864.6L834.6,864.6L834.9,862.9L835.2,861.3L835.4,859.7L835.7,858.0L836.0,856.4L836.2,854.8L836.2,854.7L836.5,853.2L836.7,851.6L836.9,850.0L837.1,848.4L837.4,846.8L837.6,845.2L837.8,843.6L837.9,843.2L838.0,842.1L838.1,840.5L838.3,839.0L838.5,837.4L838.6,835.9L838.8,834.4L839.0,832.8L839.1,831.3L839.3,829.8L839.4,828.2L839.5,826.9L839.6,826.7L839.7,825.2L839.8,823.7L840.0,822.1L840.1,820.6L840.3,819.1L840.4,817.6L840.5,816.1L840.7,814.6L840.8,813.1L840.9,811.5L841.0,810.0L841.1,808.5L841.3,807.0L841.3,806.7L841.4,805.5L841.5,804.0L841.6,802.6L841.7,801.1L841.8,799.6L841.9,798.1L842.0,796.6L842.1,795.1L842.2,793.6L842.3,792.2L842.4,790.7L842.5,789.2L842.5,787.7L842.6,786.3L842.7,784.8L842.8,783.3L842.9,781.9L842.9,780.4L843.0,778.9L843.1,777.5L843.1,776.0L843.2,774.9L843.2,774.6L843.2,773.1L843.3,771.7L843.3,770.2L843.4,768.8L843.4,767.4L843.5,765.9L843.5,764.5L843.6,763.1L843.6,761.6L843.6,760.2L843.6,758.8L843.7,757.4L843.7,756.0L843.7,754.5L843.7,753.1L843.7,751.7L843.7,750.3L843.7,748.9L843.7,747.5L843.7,746.2L843.7,744.8L843.7,743.4L843.6,742.0L843.6,741.2L843.6,740.6L843.6,739.3L843.5,737.9L843.5,736.5L843.4,735.2L843.4,733.8L843.3,732.5L843.3,731.1L843.2,729.8L843.1,728.5L843.0,727.1L842.9,725.8L842.8,724.5L842.7,723.2L842.6,721.9L842.5,720.6L842.4,720.2L842.3,719.3L842.2,718.1L842.0,716.8L841.9,715.5L841.7,714.3L841.5,713.0L841.3,711.8L841.1,710.6L841.1,710.4L840.9,709.4L840.7,708.2L840.4,707.0L840.2,705.8L839.9,704.7L839.7,704.0L839.7,703.5L838.2,704.7L836.8,706.0L835.3,707.3L833.8,708.6L832.3,709.8L830.8,711.1L829.3,712.4L827.9,713.7L826.4,715.0L824.9,716.3L823.4,717.6L821.9,718.9L820.4,720.1L819.0,721.4L817.5,722.7L816.0,724.0L816.0,725.4L816.0,726.8L815.9,728.3L815.9,729.7L815.9,731.1L815.9,732.5L815.9,733.9L815.8,735.3L815.8,736.8L815.8,738.2L815.8,739.6L815.8,741.0L815.7,742.4L815.7,743.8L815.7,745.3L815.7,746.7L815.7,748.1L815.6,749.5L815.6,750.9L815.6,752.3L815.6,753.8L815.6,755.2L815.5,756.6L815.5,758.0L815.5,759.4L815.5,760.8L815.5,762.3L815.4,763.7L815.4,765.1L815.4,766.5L815.4,767.9L815.4,769.3L815.3,770.8L815.3,772.2L815.3,773.6L815.3,775.0L815.3,776.4L815.2,777.8L815.2,779.3L815.2,780.7L815.2,782.1L815.2,783.5L815.1,784.9L815.1,786.4L815.1,787.8L815.1,789.2L815.1,790.6L815.0,792.0L815.0,793.4L815.0,794.9L815.0,796.3L815.0,797.7L814.9,799.1L814.9,800.5L814.9,801.9L814.9,803.4L814.9,804.8L814.8,806.2L814.8,807.6L814.8,809.0L814.8,810.4L814.8,811.9L814.7,813.3L814.7,814.7L814.7,816.1L814.7,817.5L814.7,818.9L814.6,820.4L814.6,821.8L814.6,823.2L814.6,824.6L814.6,826.0L814.5,827.4L814.5,828.9L814.5,830.3L814.5,831.7L814.5,833.1L814.4,834.5L814.4,835.9L814.4,837.4L814.4,838.8L814.4,840.2L814.3,841.6L814.3,843.0L814.3,844.5L814.3,845.9L814.3,847.3L814.2,848.7L814.2,850.1L814.2,851.5L814.2,853.0L814.2,854.4L814.1,855.8L814.1,857.2L814.1,858.6L814.1,860.0L814.1,861.5L814.0,862.9L814.0,864.3L814.0,865.7L814.0,867.1L813.9,868.5L813.9,870.0L813.9,871.4L813.9,872.8L813.9,874.2L813.8,875.6L813.8,877.0L813.8,878.5L813.8,879.9L813.8,881.3L813.7,882.7L813.7,884.1L813.7,885.5L813.7,887.0L813.7,888.4L813.6,889.8L813.6,891.2L813.6,892.6L813.6,894.1L813.6,895.5L813.5,896.9L813.5,898.3L813.5,899.7L813.5,901.1L813.5,902.6L813.4,904.0L813.4,905.4L813.4,906.8L813.4,908.2L813.4,909.6L813.3,911.1L813.3,912.5L813.3,913.9L813.3,915.3L813.3,916.7L813.2,918.1L813.2,919.6L813.2,921.0L813.2,922.4L813.2,923.8L813.1,925.2L813.1,926.6L813.1,928.1L813.1,929.5L813.1,930.9L813.0,932.3L813.0,933.7L813.0,935.1L813.0,936.6L813.0,938.0L812.9,939.4L812.9,940.8L812.9,942.2L812.9,943.6L812.9,945.1L812.8,946.5L812.8,947.9L812.8,949.3L812.8,950.7L812.8,952.2L812.7,953.6L812.7,955.0L812.7,956.4L812.7,957.8L812.7,959.2L812.6,960.7L812.6,962.1L812.6,963.5L812.6,964.9L812.6,965.9Z" fill="#c00000"/>
<path d="M316.0,568.0 L816.0,724.0 L1111.0,468.0 L612.0,311.0Z" fill="#1fc3ff"/>
<path d="M316.0,568.0 L816.0,724.0 L1111.0,468.0 L612.0,311.0Z" fill="#3d1fc3"/>
<path d="M316.0,568.0 L816.0,724.0 L1111.0,468.0 L612.0,311.0Z" fill="#1f1ff0"/>
<path d="M316.0,568.0 L816.0,724.0 L1111.0,468.0 L612.0,311.0Z" fill="#1f78ff"/>
<path d="M316.0,568.0 L816.0,724.0 L1111.0,468.0 L612.0,311.0Z" fill="#1fc3ff"/>
<path d="M318.5,568.8L321.0,569.6L323.5,570.4L326.1,571.1L328.6,571.9L331.1,572.7L333.6,573.5L336.1,574.3L338.6,575.1L341.1,575.8L343.6,576.6L346.2,577.4L348.7,578.2L351.2,579.0L353.7,579.8L356.2,580.5L358.7,581.3L361.2,582.1L363.7,582.9L366.3,583.7L368.8,584.5L371.3,585.2L373.8,586.0L376.3,586.8L378.8,587.6L381.3,588.4L383.8,589.2L386.4,589.9L388.9,590.7L391.4,591.5L393.9,592.3L396.4,593.1L398.9,593.9L401.4,594.7L403.9,595.4L406.5,596.2L409.0,597.0L411.5,597.8L414.0,598.6L416.5,599.4L419.0,600.1L421.5,600.9L424.0,601.7L426.6,602.5L429.1,603.3L431.6,604.1L434.1,604.8L436.6,605.6L439.1,606.4L441.6,607.2L444.1,608.0L446.7,608.8L449.2,609.5L451.7,610.3L454.2,611.1L456.7,611.9L459.2,612.7L461.7,613.5L464.2,614.3L466.8,615.0L469.3,615.8L471.8,616.6L474.3,617.4L476.8,618.2L479.3,619.0L481.8,619.7L484.3,620.5L486.9,621.3L489.4,622.1L491.9,622.9L494.4,623.7L496.9,624.4L499.4,625.2L501.9,626.0L504.4,626.8L507.0,627.6L509.5,628.4L512.0,629.1L514.5,629.9L517.0,630.7L519.5,631.5L522.0,632.3L524.5,633.1L527.1,633.8L529.6,634.6L532.1,635.4L534.6,636.2L537.1,637.0L539.6,637.8L542.1,638.6L544.6,639.3L547.2,640.1L549.7,640.9L552.2,641.7L554.7,642.5L557.2,643.3L559.7,644.0L562.2,644.8L564.7,645.6L567.3,646.4L569.8,647.2L572.3,648.0L574.8,648.7L577.3,649.5L579.8,650.3L582.3,651.1L584.8,651.9L587.4,652.7L589.9,653.4L592.4,654.2L594.9,655.0L597.4,655.8L599.9,656.6L602.4,657.4L604.9,658.2L607.5,658.9L610.0,659.7L612.5,660.5L615.0,661.3L617.5,662.1L620.0,662.9L622.5,663.6L625.0,664.4L627.6,665.2L630.1,666.0L632.6,666.8L635.1,667.6L637.6,668.3L640.1,669.1L642.6,669.9L645.1,670.7L647.7,671.5L650.2,672.3L652.7,673.0L655.2,673.8L657.7,674.6L660.2,675.4L662.7,676.2L665.2,677.0L667.8,677.7L670.3,678.5L672.8,679.3L675.3,680.1L677.8,680.9L680.3,681.7L682.8,682.5L685.3,683.2L687.9,684.0L690.4,684.8L692.9,685.6L695.4,686.4L697.9,687.2L700.4,687.9L702.9,688.7L705.4,689.5L708.0,690.3L710.5,691.1L713.0,691.9L715.5,692.6L718.0,693.4L720.5,694.2L723.0,695.0L725.5,695.8L728.1,696.6L730.6,697.3L733.1,698.1L735.6,698.9L738.1,699.7L740.6,700.5L743.1,701.3L745.6,702.1L748.2,702.8L750.7,703.6L753.2,704.4L755.7,705.2L758.2,706.0L760.7,706.8L763.2,707.5L765.7,708.3L768.3,709.1L770.8,709.9L773.3,710.7L775.8,711.5L778.3,712.2L780.8,713.0L783.3,713.8L785.8,714.6L788.4,715.4L790.9,716.2L793.4,716.9L795.9,717.7L798.4,718.5L800.9,719.3L803.4,720.1L805.9,720.9L808.5,721.6L811.0,722.4L813.5,723.2L816.0,724.0L817.5,722.7L819.0,721.4L820.4,720.1L821.9,718.9L823.4,717.6L824.9,716.3L826.4,715.0L827.9,713.7L829.3,712.4L830.8,711.1L832.3,709.8L833.8,708.6L835.3,707.3L836.8,706.0L838.2,704.7L839.7,703.4L841.2,702.1L842.7,700.8L844.2,699.6L845.6,698.3L847.1,697.0L848.6,695.7L850.1,694.4L851.6,693.1L853.1,691.8L854.5,690.6L856.0,689.3L857.5,688.0L859.0,686.7L860.5,685.4L862.0,684.1L863.4,682.8L864.9,681.5L866.4,680.3L867.9,679.0L869.4,677.7L870.8,676.4L872.3,675.1L873.8,673.8L875.3,672.5L876.8,671.3L878.3,670.0L879.7,668.7L881.2,667.4L882.7,666.1L884.2,664.8L885.7,663.5L887.2,662.3L888.6,661.0L890.1,659.7L891.6,658.4L893.1,657.1L894.6,655.8L896.1,654.5L897.5,653.2L899.0,652.0L900.5,650.7L902.0,649.4L903.5,648.1L904.9,646.8L906.4,645.5L907.9,644.2L909.4,643.0L910.9,641.7L912.4,640.4L913.8,639.1L915.3,637.8L916.8,636.5L918.3,635.2L919.8,633.9L921.3,632.7L922.7,631.4L924.2,630.1L925.7,628.8L927.2,627.5L928.7,626.2L930.1,624.9L931.6,623.7L933.1,622.4L934.6,621.1L936.1,619.8L937.6,618.5L939.0,617.2L940.5,615.9L942.0,614.7L943.5,613.4L945.0,612.1L946.5,610.8L947.9,609.5L949.4,608.2L950.9,606.9L952.4,605.6L953.9,604.4L955.3,603.1L956.8,601.8L958.3,600.5L959.8,599.2L961.3,597.9L962.8,596.6L964.2,595.4L965.7,594.1L967.2,592.8L968.7,591.5L970.2,590.2L971.7,588.9L973.1,587.6L974.6,586.4L976.1,585.1L977.6,583.8L979.1,582.5L980.5,581.2L982.0,579.9L983.5,578.6L985.0,577.3L986.5,576.1L988.0,574.8L989.4,573.5L990.9,572.2L992.4,570.9L993.9,569.6L995.4,568.3L996.9,567.1L998.3,565.8L999.8,564.5L1001.3,563.2L1002.8,561.9L1004.3,560.6L1005.7,559.3L1007.2,558.1L1008.7,556.8L1010.2,555.5L1011.7,554.2L1013.2,552.9L1014.6,551.6L1016.1,550.3L1017.6,549.0L1019.1,547.8L1020.6,546.5L1022.1,545.2L1023.5,543.9L1025.0,542.6L1026.5,541.3L1028.0,540.0L1029.5,538.8L1030.9,537.5L1032.4,536.2L1033.9,534.9L1035.4,533.6L1036.9,532.3L1038.4,531.0L1039.8,529.7L1041.3,528.5L1042.8,527.2L1044.3,525.9L1045.8,524.6L1047.3,523.3L1048.7,522.0L1050.2,520.7L1051.7,519.5L1053.2,518.2L1054.7,516.9L1056.2,515.6L1057.6,514.3L1059.1,513.0L1060.6,511.7L1062.1,510.5L1063.6,509.2L1065.0,507.9L1066.5,506.6L1068.0,505.3L1069.5,504.0L1071.0,502.7L1072.5,501.4L1073.9,500.2L1075.4,498.9L1076.9,497.6L1078.4,496.3L1079.9,495.0L1081.4,493.7L1082.8,492.4L1084.3,491.2L1085.8,489.9L1087.3,488.6L1088.8,487.3L1090.2,486.0L1091.7,484.7L1093.2,483.4L1094.7,482.2L1096.2,480.9L1097.7,479.6L1099.1,478.3L1100.6,477.0L1102.1,475.7L1103.6,474.4L1105.1,473.1L1106.6,471.9L1108.0,470.6L1109.5,469.3L1111.0,468.0L1108.5,467.2L1106.0,466.4L1103.5,465.6L1101.0,464.8L1098.5,464.1L1096.0,463.3L1093.4,462.5L1090.9,461.7L1088.4,460.9L1085.9,460.1L1083.4,459.3L1080.9,458.5L1078.4,457.7L1075.9,457.0L1073.4,456.2L1070.9,455.4L1068.4,454.6L1065.9,453.8L1063.4,453.0L1060.8,452.2L1058.3,451.4L1055.8,450.6L1053.3,449.9L1050.8,449.1L1048.3,448.3L1045.8,447.5L1043.3,446.7L1040.8,445.9L1038.3,445.1L1035.8,444.3L1033.3,443.5L1030.8,442.8L1028.3,442.0L1025.7,441.2L1023.2,440.4L1020.7,439.6L1018.2,438.8L1015.7,438.0L1013.2,437.2L1010.7,436.4L1008.2,435.7L1005.7,434.9L1003.2,434.1L1000.7,433.3L998.2,432.5L995.7,431.7L993.1,430.9L990.6,430.1L988.1,429.3L985.6,428.6L983.1,427.8L980.6,427.0L978.1,426.2L975.6,425.4L973.1,424.6L970.6,423.8L968.1,423.0L965.6,422.2L963.1,421.5L960.5,420.7L958.0,419.9L955.5,419.1L953.0,418.3L950.5,417.5L948.0,416.7L945.5,415.9L943.0,415.1L940.5,414.4L938.0,413.6L935.5,412.8L933.0,412.0L930.5,411.2L927.9,410.4L925.4,409.6L922.9,408.8L920.4,408.0L917.9,407.3L915.4,406.5L912.9,405.7L910.4,404.9L907.9,404.1L905.4,403.3L902.9,402.5L900.4,401.7L897.9,400.9L895.4,400.2L892.8,399.4L890.3,398.6L887.8,397.8L885.3,397.0L882.8,396.2L880.3,395.4L877.8,394.6L875.3,393.8L872.8,393.1L870.3,392.3L867.8,391.5L865.3,390.7L862.8,389.9L860.2,389.1L857.7,388.3L855.2,387.5L852.7,386.7L850.2,385.9L847.7,385.2L845.2,384.4L842.7,383.6L840.2,382.8L837.7,382.0L835.2,381.2L832.7,380.4L830.2,379.6L827.6,378.8L825.1,378.1L822.6,377.3L820.1,376.5L817.6,375.7L815.1,374.9L812.6,374.1L810.1,373.3L807.6,372.5L805.1,371.7L802.6,371.0L800.1,370.2L797.6,369.4L795.1,368.6L792.5,367.8L790.0,367.0L787.5,366.2L785.0,365.4L782.5,364.6L780.0,363.9L777.5,363.1L775.0,362.3L772.5,361.5L770.0,360.7L767.5,359.9L765.0,359.1L762.5,358.3L759.9,357.5L757.4,356.8L754.9,356.0L752.4,355.2L749.9,354.4L747.4,353.6L744.9,352.8L742.4,352.0L739.9,351.2L737.4,350.4L734.9,349.7L732.4,348.9L729.9,348.1L727.3,347.3L724.8,346.5L722.3,345.7L719.8,344.9L717.3,344.1L714.8,343.3L712.3,342.6L709.8,341.8L707.3,341.0L704.8,340.2L702.3,339.4L699.8,338.6L697.3,337.8L694.7,337.0L692.2,336.2L689.7,335.5L687.2,334.7L684.7,333.9L682.2,333.1L679.7,332.3L677.2,331.5L674.7,330.7L672.2,329.9L669.7,329.1L667.2,328.4L664.7,327.6L662.2,326.8L661.9,326.7L659.9,327.8L657.9,329.0L655.9,330.1L653.9,331.2L653.2,331.6L651.8,332.3L649.8,333.5L647.8,334.6L645.8,335.7L643.8,336.8L643.6,337.0L641.8,338.0L639.8,339.1L637.8,340.2L635.8,341.3L633.9,342.4L633.8,342.5L631.8,343.6L629.8,344.7L627.8,345.9L625.7,347.0L624.2,347.8L623.7,348.1L621.7,349.2L619.7,350.4L617.7,351.5L615.7,352.6L614.5,353.3L613.7,353.8L611.7,354.9L609.7,356.0L607.7,357.1L605.7,358.3L604.8,358.8L603.7,359.4L601.7,360.5L599.7,361.7L597.7,362.8L595.7,363.9L595.0,364.3L593.7,365.1L591.7,366.2L589.7,367.3L587.7,368.4L585.7,369.6L585.2,369.9L583.7,370.7L581.7,371.8L579.7,373.0L577.7,374.1L575.8,375.2L575.3,375.5L573.8,376.4L571.8,377.5L569.8,378.6L567.8,379.8L565.8,380.9L565.4,381.2L563.8,382.0L561.8,383.2L559.8,384.3L557.8,385.4L555.9,386.6L555.4,386.8L553.9,387.7L551.9,388.8L549.9,390.0L547.9,391.1L545.9,392.2L545.4,392.6L544.0,393.4L542.0,394.5L540.0,395.7L538.0,396.8L536.0,397.9L535.4,398.3L534.0,399.1L532.1,400.2L530.1,401.3L528.1,402.5L526.1,403.6L525.3,404.1L524.1,404.7L522.2,405.9L520.2,407.0L518.2,408.2L516.2,409.3L515.2,409.9L514.3,410.4L512.3,411.6L510.3,412.7L508.3,413.8L506.3,415.0L505.0,415.8L504.4,416.1L502.4,417.3L500.4,418.4L498.5,419.5L496.5,420.7L494.8,421.6L494.5,421.8L492.5,423.0L490.6,424.1L488.6,425.2L486.6,426.4L484.7,427.5L484.6,427.6L482.7,428.7L480.7,429.8L478.7,430.9L476.8,432.1L474.8,433.2L474.3,433.5L472.8,434.4L470.9,435.5L468.9,436.6L466.9,437.8L465.0,438.9L464.2,439.3L463.3,440.1L461.8,441.4L460.3,442.7L458.8,444.0L457.3,445.3L455.8,446.6L454.3,447.9L452.8,449.2L451.4,450.5L449.9,451.8L448.4,453.1L446.9,454.4L445.4,455.6L443.9,456.9L442.4,458.2L440.9,459.5L439.5,460.8L438.0,462.1L436.5,463.4L435.0,464.7L433.5,466.0L432.0,467.3L430.5,468.6L429.0,469.8L427.6,471.1L426.1,472.4L424.6,473.7L423.1,475.0L421.6,476.3L420.1,477.6L418.6,478.9L417.1,480.2L415.7,481.5L414.2,482.8L412.7,484.1L411.2,485.3L409.7,486.6L408.2,487.9L406.7,489.2L405.2,490.5L403.8,491.8L402.3,493.1L400.8,494.4L399.3,495.7L397.8,497.0L396.3,498.3L394.8,499.6L393.3,500.8L391.9,502.1L390.4,503.4L388.9,504.7L387.4,506.0L385.9,507.3L384.4,508.6L382.9,509.9L381.4,511.2L380.0,512.5L378.5,513.8L377.0,515.1L375.5,516.3L374.0,517.6L372.5,518.9L371.0,520.2L369.5,521.5L368.1,522.8L366.6,524.1L365.1,525.4L363.6,526.7L362.1,528.0L360.6,529.3L359.1,530.5L357.6,531.8L356.2,533.1L354.7,534.4L353.2,535.7L351.7,537.0L350.2,538.3L348.7,539.6L347.2,540.9L345.7,542.2L344.3,543.5L342.8,544.8L341.3,546.0L339.8,547.3L338.3,548.6L336.8,549.9L335.3,551.2L333.8,552.5L332.4,553.8L330.9,555.1L329.4,556.4L327.9,557.7L326.4,559.0L324.9,560.3L323.4,561.5L321.9,562.8L320.5,564.1L319.0,565.4L317.5,566.7L316.0,568.0Z" fill="#1fe1d2"/>
<path d="M318.5,568.8L321.0,569.6L323.5,570.4L326.1,571.1L328.6,571.9L331.1,572.7L333.6,573.5L336.1,574.3L338.6,575.1L341.1,575.8L343.6,576.6L346.2,577.4L348.7,578.2L351.2,579.0L353.7,579.8L356.2,580.5L358.7,581.3L361.2,582.1L363.7,582.9L366.3,583.7L368.8,584.5L371.3,585.2L373.8,586.0L376.3,586.8L378.8,587.6L381.3,588.4L383.8,589.2L386.4,589.9L388.9,590.7L391.4,591.5L393.9,592.3L396.4,593.1L398.9,593.9L401.4,594.7L403.9,595.4L406.5,596.2L409.0,597.0L411.5,597.8L414.0,598.6L416.5,599.4L419.0,600.1L421.5,600.9L424.0,601.7L426.6,602.5L429.1,603.3L431.6,604.1L434.1,604.8L436.6,605.6L439.1,606.4L441.6,607.2L444.1,608.0L446.7,608.8L449.2,609.5L451.7,610.3L454.2,611.1L456.7,611.9L459.2,612.7L461.7,613.5L464.2,614.3L466.8,615.0L469.3,615.8L471.8,616.6L474.3,617.4L476.8,618.2L479.3,619.0L481.8,619.7L484.3,620.5L486.9,621.3L489.4,622.1L491.9,622.9L494.4,623.7L496.9,624.4L499.4,625.2L501.9,626.0L504.4,626.8L507.0,627.6L509.5,628.4L512.0,629.1L514.5,629.9L517.0,630.7L519.5,631.5L522.0,632.3L524.5,633.1L527.1,633.8L529.6,634.6L532.1,635.4L534.6,636.2L537.1,637.0L539.6,637.8L542.1,638.6L544.6,639.3L547.2,640.1L549.7,640.9L552.2,641.7L554.7,642.5L557.2,643.3L559.7,644.0L562.2,644.8L564.7,645.6L567.3,646.4L569.8,647.2L572.3,648.0L574.8,648.7L577.3,649.5L579.8,650.3L582.3,651.1L584.8,651.9L587.4,652.7L589.9,653.4L592.4,654.2L594.9,655.0L597.4,655.8L599.9,656.6L602.4,657.4L604.9,658.2L607.5,658.9L610.0,659.7L612.5,660.5L615.0,661.3L617.5,662.1L620.0,662.9L622.5,663.6L625.0,664.4L627.6,665.2L630.1,666.0L632.6,666.8L635.1,667.6L637.6,668.3L640.1,669.1L642.6,669.9L645.1,670.7L647.7,671.5L650.2,672.3L652.7,673.0L655.2,673.8L657.7,674.6L660.2,675.4L662.7,676.2L665.2,677.0L667.8,677.7L670.3,678.5L672.8,679.3L675.3,680.1L677.8,680.9L680.3,681.7L682.8,682.5L685.3,683.2L687.9,684.0L690.4,684.8L692.9,685.6L695.4,686.4L697.9,687.2L700.4,687.9L702.9,688.7L705.4,689.5L708.0,690.3L710.5,691.1L713.0,691.9L715.5,692.6L718.0,693.4L720.5,694.2L723.0,695.0L725.5,695.8L728.1,696.6L730.6,697.3L733.1,698.1L735.6,698.9L738.1,699.7L740.6,700.5L743.1,701.3L745.6,702.1L748.2,702.8L750.7,703.6L753.2,704.4L755.7,705.2L758.2,706.0L760.7,706.8L763.2,707.5L765.7,708.3L768.3,709.1L770.8,709.9L773.3,710.7L775.8,711.5L778.3,712.2L780.8,713.0L783.3,713.8L785.8,714.6L788.4,715.4L790.9,716.2L793.4,716.9L795.9,717.7L798.4,718.5L800.9,719.3L803.4,720.1L805.9,720.9L808.5,721.6L811.0,722.4L813.5,723.2L816.0,724.0L817.5,722.7L819.0,721.4L820.4,720.1L821.9,718.9L823.4,717.6L824.9,716.3L826.4,715.0L827.9,713.7L829.3,712.4L830.8,711.1L832.3,709.8L833.8,708.6L835.3,707.3L836.8,706.0L838.2,704.7L839.7,703.4L841.2,702.1L842.7,700.8L844.2,699.6L845.6,698.3L847.1,697.0L848.6,695.7L850.1,694.4L851.6,693.1L853.1,691.8L854.5,690.6L856.0,689.3L857.5,688.0L859.0,686.7L860.5,685.4L862.0,684.1L863.4,682.8L864.9,681.5L866.4,680.3L867.9,679.0L869.4,677.7L870.8,676.4L872.3,675.1L873.8,673.8L875.3,672.5L876.8,671.3L878.3,670.0L879.7,668.7L881.2,667.4L882.7,666.1L884.2,664.8L885.7,663.5L887.2,662.3L888.6,661.0L890.1,659.7L891.6,658.4L893.1,657.1L894.6,655.8L896.1,654.5L897.5,653.2L899.0,652.0L900.5,650.7L902.0,649.4L903.5,648.1L904.9,646.8L906.4,645.5L907.9,644.2L909.4,643.0L910.9,641.7L912.4,640.4L913.8,639.1L915.3,637.8L916.8,636.5L918.3,635.2L919.8,633.9L921.3,632.7L922.7,631.4L924.2,630.1L925.7,628.8L927.2,627.5L928.7,626.2L930.1,624.9L931.6,623.7L933.1,622.4L934.6,621.1L936.1,619.8L937.6,618.5L939.0,617.2L940.5,615.9L942.0,614.7L943.5,613.4L945.0,612.1L946.5,610.8L947.9,609.5L949.4,608.2L950.9,606.9L952.4,605.6L953.9,604.4L955.3,603.1L956.8,601.8L958.3,600.5L959.8,599.2L961.3,597.9L962.8,596.6L964.2,595.4L965.7,594.1L967.2,592.8L968.7,591.5L970.2,590.2L971.7,588.9L973.1,587.6L974.6,586.4L976.1,585.1L977.6,583.8L979.1,582.5L980.5,581.2L982.0,579.9L983.5,578.6L985.0,577.3L986.5,576.1L988.0,574.8L989.4,573.5L990.9,572.2L992.4,570.9L993.9,569.6L995.4,568.3L996.9,567.1L998.3,565.8L999.8,564.5L1001.3,563.2L1002.8,561.9L1004.3,560.6L1005.7,559.3L1007.2,558.1L1008.7,556.8L1010.2,555.5L1011.7,554.2L1013.2,552.9L1014.6,551.6L1016.1,550.3L1017.6,549.0L1019.1,547.8L1020.6,546.5L1022.1,545.2L1023.5,543.9L1025.0,542.6L1026.5,541.3L1028.0,540.0L1029.5,538.8L1030.9,537.5L1032.4,536.2L1033.9,534.9L1035.4,533.6L1036.9,532.3L1038.4,531.0L1039.8,529.7L1041.3,528.5L1042.8,527.2L1044.3,525.9L1045.8,524.6L1047.3,523.3L1048.7,522.0L1050.2,520.7L1051.7,519.5L1053.2,518.2L1054.7,516.9L1056.2,515.6L1057.6,514.3L1059.1,513.0L1060.6,511.7L1062.1,510.5L1063.6,509.2L1065.0,507.9L1066.5,506.6L1068.0,505.3L1069.5,504.0L1071.0,502.7L1072.5,501.4L1073.9,500.2L1075.4,498.9L1076.9,497.6L1078.4,496.3L1079.9,495.0L1081.4,493.7L1082.8,492.4L1084.3,491.2L1085.8,489.9L1087.3,488.6L1088.8,487.3L1090.2,486.0L1091.7,484.7L1093.2,483.4L1094.7,482.2L1096.2,480.9L1097.7,479.6L1099.1,478.3L1100.6,477.0L1102.1,475.7L1103.6,474.4L1105.1,473.1L1106.6,471.9L1108.0,470.6L1109.5,469.3L1111.0,468.0L1108.5,467.2L1106.0,466.4L1103.5,465.6L1101.0,464.8L1098.5,464.1L1096.0,463.3L1093.4,462.5L1090.9,461.7L1088.4,460.9L1085.9,460.1L1083.4,459.3L1080.9,458.5L1078.4,457.7L1075.9,457.0L1073.4,456.2L1070.9,455.4L1068.4,454.6L1065.9,453.8L1063.4,453.0L1060.8,452.2L1058.3,451.4L1055.8,450.6L1053.3,449.9L1050.8,449.1L1048.3,448.3L1045.8,447.5L1043.3,446.7L1040.8,445.9L1038.3,445.1L1035.8,444.3L1033.3,443.5L1030.8,442.8L1028.3,442.0L1025.7,441.2L1023.2,440.4L1020.7,439.6L1018.2,438.8L1015.7,438.0L1013.2,437.2L1010.7,436.4L1008.2,435.7L1005.7,434.9L1003.2,434.1L1000.7,433.3L998.2,432.5L995.7,431.7L993.1,430.9L990.6,430.1L988.1,429.3L985.6,428.6L983.1,427.8L980.6,427.0L978.1,426.2L975.6,425.4L973.1,424.6L970.6,423.8L968.1,423.0L965.6,422.2L963.1,421.5L960.5,420.7L958.0,419.9L955.5,419.1L953.0,418.3L950.5,417.5L948.0,416.7L945.5,415.9L943.0,415.1L940.5,414.4L938.0,413.6L935.5,412.8L933.0,412.0L930.5,411.2L927.9,410.4L925.4,409.6L922.9,408.8L920.4,408.0L917.9,407.3L915.4,406.5L912.9,405.7L910.4,404.9L907.9,404.1L905.4,403.3L902.9,402.5L900.4,401.7L897.9,400.9L895.4,400.2L892.8,399.4L890.3,398.6L887.8,397.8L885.3,397.0L882.8,396.2L880.3,395.4L877.8,394.6L875.3,393.8L872.8,393.1L870.3,392.3L867.8,391.5L865.3,390.7L862.8,389.9L860.2,389.1L857.7,388.3L855.2,387.5L852.7,386.7L850.2,385.9L847.7,385.2L845.2,384.4L842.7,383.6L840.2,382.8L837.7,382.0L835.2,381.2L832.7,380.4L830.2,379.6L827.6,378.8L825.1,378.1L822.6,377.3L820.1,376.5L817.6,375.7L815.1,374.9L812.6,374.1L810.1,373.3L807.6,372.5L805.1,371.7L802.6,371.0L800.1,370.2L797.6,369.4L795.1,368.6L792.5,367.8L790.0,367.0L787.5,366.2L785.0,365.4L782.5,364.6L780.0,363.9L777.5,363.1L775.0,362.3L772.5,361.5L770.0,360.7L767.5,359.9L765.0,359.1L762.5,358.3L759.9,357.5L757.4,356.8L754.9,356.0L752.4,355.2L749.9,354.4L747.4,353.6L744.9,352.8L742.4,352.0L739.9,351.2L737.4,350.4L734.9,349.7L732.4,348.9L729.9,348.1L727.3,347.3L724.8,346.5L722.3,345.7L719.8,344.9L717.3,344.1L716.9,344.0L714.8,345.1L712.8,346.2L710.7,347.3L709.3,348.1L708.7,348.5L706.7,349.6L704.7,350.7L702.6,351.8L700.6,352.9L699.8,353.4L698.6,354.1L696.6,355.2L694.6,356.3L692.5,357.4L690.5,358.6L690.3,358.7L688.5,359.7L686.5,360.8L684.4,361.9L682.4,363.0L681.0,363.8L680.4,364.2L678.3,365.3L676.3,366.4L674.3,367.5L672.3,368.6L671.6,369.0L670.2,369.8L668.2,370.9L666.2,372.0L664.1,373.1L662.2,374.2L662.1,374.2L660.1,375.4L658.1,376.5L656.0,377.6L654.0,378.7L652.8,379.4L652.0,379.8L650.0,381.0L647.9,382.1L645.9,383.2L643.9,384.3L643.3,384.6L641.9,385.5L639.8,386.6L637.8,387.7L635.8,388.8L633.9,389.9L633.8,389.9L631.7,391.1L629.7,392.2L627.7,393.3L625.7,394.4L624.4,395.2L623.7,395.6L621.6,396.7L619.6,397.8L617.6,398.9L615.6,400.0L614.9,400.4L613.6,401.2L611.5,402.3L609.5,403.4L607.5,404.5L605.5,405.7L605.4,405.7L603.5,406.8L601.5,407.9L599.4,409.0L597.4,410.2L595.8,411.1L595.4,411.3L593.4,412.4L591.4,413.5L589.4,414.7L587.4,415.8L586.2,416.4L585.4,416.9L583.3,418.0L581.3,419.2L579.3,420.3L577.3,421.4L576.5,421.9L575.3,422.6L573.3,423.7L571.3,424.8L569.3,426.0L567.3,427.1L566.7,427.5L565.3,428.2L563.4,429.3L561.4,430.5L559.4,431.6L557.4,432.7L556.8,433.0L555.4,433.9L553.4,435.0L551.4,436.1L549.4,437.3L547.4,438.4L547.0,438.6L545.4,439.5L543.4,440.7L541.4,441.8L539.4,442.9L537.4,444.1L537.1,444.3L535.4,445.2L533.5,446.3L531.5,447.5L529.5,448.6L527.5,449.7L527.1,449.9L525.5,450.9L523.5,452.0L521.5,453.1L519.5,454.3L517.6,455.4L517.2,455.6L515.4,456.5L513.0,457.5L510.7,458.5L510.1,458.8L508.3,459.5L506.0,460.6L503.6,461.6L503.3,461.7L501.3,462.6L498.9,463.6L496.6,464.6L496.5,464.7L494.2,465.7L491.9,466.7L489.7,467.6L489.5,467.7L487.2,468.7L484.8,469.7L482.9,470.6L482.4,470.8L480.1,471.8L477.7,472.8L476.1,473.5L475.4,473.8L473.0,474.8L470.7,475.8L469.3,476.5L468.3,476.9L465.9,477.9L463.6,478.9L462.4,479.4L461.2,479.9L458.9,480.9L456.5,482.0L455.6,482.4L454.2,483.0L451.8,484.0L449.5,485.0L448.8,485.3L447.1,486.0L444.7,487.1L442.4,488.1L442.0,488.2L440.0,489.1L437.7,490.1L435.3,491.1L435.3,491.2L432.9,492.1L430.6,493.2L428.5,494.1L428.2,494.2L425.8,495.2L423.5,496.2L421.8,496.9L421.1,497.2L418.7,498.2L416.3,499.2L415.1,499.8L413.9,500.3L411.6,501.3L409.2,502.3L408.4,502.6L406.8,503.3L404.4,504.3L402.0,505.3L401.7,505.4L399.6,506.3L397.2,507.3L395.1,508.2L394.8,508.3L392.5,509.3L390.1,510.4L388.4,511.0L387.7,511.4L385.3,512.4L382.9,513.4L381.8,513.8L380.5,514.4L378.1,515.4L375.7,516.4L375.2,516.6L374.0,517.6L372.5,518.9L371.0,520.2L369.5,521.5L368.1,522.8L366.6,524.1L365.1,525.4L363.6,526.7L362.1,528.0L360.6,529.3L359.1,530.5L357.6,531.8L356.2,533.1L354.7,534.4L353.2,535.7L351.7,537.0L350.2,538.3L348.7,539.6L347.2,540.9L345.7,542.2L344.3,543.5L342.8,544.8L341.3,546.0L339.8,547.3L338.3,548.6L336.8,549.9L335.3,551.2L333.8,552.5L332.4,553.8L330.9,555.1L329.4,556.4L327.9,557.7L326.4,559.0L324.9,560.3L323.4,561.5L321.9,562.8L320.5,564.1L319.0,565.4L317.5,566.7L316.0,568.0Z" fill="#1fa578"/>
<path d="M336.1,574.3L338.6,575.1L341.1,575.8L343.6,576.6L346.2,577.4L348.7,578.2L351.2,579.0L353.7,579.8L356.2,580.5L358.7,581.3L361.2,582.1L363.7,582.9L366.3,583.7L368.8,584.5L371.3,585.2L373.8,586.0L376.3,586.8L378.8,587.6L381.3,588.4L383.8,589.2L386.4,589.9L388.9,590.7L391.4,591.5L393.9,592.3L396.4,593.1L398.9,593.9L401.4,594.7L403.9,595.4L406.5,596.2L409.0,597.0L411.5,597.8L414.0,598.6L416.5,599.4L419.0,600.1L421.5,600.9L424.0,601.7L426.6,602.5L429.1,603.3L431.6,604.1L434.1,604.8L436.6,605.6L439.1,606.4L441.6,607.2L444.1,608.0L446.7,608.8L449.2,609.5L451.7,610.3L454.2,611.1L456.7,611.9L459.2,612.7L461.7,613.5L464.2,614.3L466.8,615.0L469.3,615.8L471.8,616.6L474.3,617.4L476.8,618.2L479.3,619.0L481.8,619.7L484.3,620.5L486.9,621.3L489.4,622.1L491.9,622.9L494.4,623.7L496.9,624.4L499.4,625.2L501.9,626.0L504.4,626.8L507.0,627.6L509.5,628.4L512.0,629.1L514.5,629.9L517.0,630.7L519.5,631.5L522.0,632.3L524.5,633.1L527.1,633.8L529.6,634.6L532.1,635.4L534.6,636.2L537.1,637.0L539.6,637.8L542.1,638.6L544.6,639.3L547.2,640.1L549.7,640.9L552.2,641.7L554.7,642.5L557.2,643.3L559.7,644.0L562.2,644.8L564.7,645.6L567.3,646.4L569.8,647.2L572.3,648.0L574.8,648.7L577.3,649.5L579.8,650.3L582.3,651.1L584.8,651.9L587.4,652.7L589.9,653.4L592.4,654.2L594.9,655.0L597.4,655.8L599.9,656.6L602.4,657.4L604.9,658.2L607.5,658.9L610.0,659.7L612.5,660.5L615.0,661.3L617.5,662.1L620.0,662.9L622.5,663.6L625.0,664.4L627.6,665.2L630.1,666.0L632.6,666.8L635.1,667.6L637.6,668.3L640.1,669.1L642.6,669.9L645.1,670.7L647.7,671.5L650.2,672.3L652.7,673.0L655.2,673.8L657.7,674.6L660.2,675.4L662.7,676.2L665.2,677.0L667.8,677.7L670.3,678.5L672.8,679.3L675.3,680.1L677.8,680.9L680.3,681.7L682.8,682.5L685.3,683.2L687.9,684.0L690.4,684.8L692.9,685.6L695.4,686.4L697.9,687.2L700.4,687.9L702.9,688.7L705.4,689.5L708.0,690.3L710.5,691.1L713.0,691.9L715.5,692.6L718.0,693.4L720.5,694.2L723.0,695.0L725.5,695.8L728.1,696.6L730.6,697.3L733.1,698.1L735.6,698.9L738.1,699.7L740.6,700.5L743.1,701.3L745.6,702.1L748.2,702.8L750.7,703.6L753.2,704.4L755.7,705.2L758.2,706.0L760.7,706.8L763.2,707.5L765.7,708.3L768.3,709.1L770.8,709.9L773.3,710.7L775.8,711.5L778.3,712.2L780.8,713.0L783.3,713.8L785.8,714.6L788.4,715.4L790.9,716.2L793.4,716.9L795.9,717.7L798.4,718.5L800.9,719.3L803.4,720.1L805.9,720.9L808.5,721.6L811.0,722.4L813.5,723.2L816.0,724.0L817.5,722.7L819.0,721.4L820.4,720.1L821.9,718.9L823.4,717.6L824.9,716.3L826.4,715.0L827.9,713.7L829.3,712.4L830.8,711.1L832.3,709.8L833.8,708.6L835.3,707.3L836.8,706.0L838.2,704.7L839.7,703.4L841.2,702.1L842.7,700.8L844.2,699.6L845.6,698.3L847.1,697.0L848.6,695.7L850.1,694.4L851.6,693.1L853.1,691.8L854.5,690.6L856.0,689.3L857.5,688.0L859.0,686.7L860.5,685.4L862.0,684.1L863.4,682.8L864.9,681.5L866.4,680.3L867.9,679.0L869.4,677.7L870.8,676.4L872.3,675.1L873.8,673.8L875.3,672.5L876.8,671.3L878.3,670.0L879.7,668.7L881.2,667.4L882.7,666.1L884.2,664.8L885.7,663.5L887.2,662.3L888.6,661.0L890.1,659.7L891.6,658.4L893.1,657.1L894.6,655.8L896.1,654.5L897.5,653.2L899.0,652.0L900.5,650.7L902.0,649.4L903.5,648.1L904.9,646.8L906.4,645.5L907.9,644.2L909.4,643.0L910.9,641.7L912.4,640.4L913.8,639.1L915.3,637.8L916.8,636.5L918.3,635.2L919.8,633.9L921.3,632.7L922.7,631.4L924.2,630.1L925.7,628.8L927.2,627.5L928.7,626.2L930.1,624.9L931.6,623.7L933.1,622.4L934.6,621.1L936.1,619.8L937.6,618.5L939.0,617.2L940.5,615.9L942.0,614.7L943.5,613.4L945.0,612.1L946.5,610.8L947.9,609.5L949.4,608.2L950.9,606.9L952.4,605.6L953.9,604.4L955.3,603.1L956.8,601.8L958.3,600.5L959.8,599.2L961.3,597.9L962.8,596.6L964.2,595.4L965.7,594.1L967.2,592.8L968.7,591.5L970.2,590.2L971.7,588.9L973.1,587.6L974.6,586.4L976.1,585.1L977.6,583.8L979.1,582.5L980.5,581.2L982.0,579.9L983.5,578.6L985.0,577.3L986.5,576.1L988.0,574.8L989.4,573.5L990.9,572.2L992.4,570.9L993.9,569.6L995.4,568.3L996.9,567.1L998.3,565.8L999.8,564.5L1001.3,563.2L1002.8,561.9L1004.3,560.6L1005.7,559.3L1007.2,558.1L1008.7,556.8L1010.2,555.5L1011.7,554.2L1013.2,552.9L1014.6,551.6L1016.1,550.3L1017.6,549.0L1019.1,547.8L1020.6,546.5L1022.1,545.2L1023.5,543.9L1025.0,542.6L1026.5,541.3L1028.0,540.0L1029.5,538.8L1030.9,537.5L1032.4,536.2L1033.9,534.9L1035.4,533.6L1036.9,532.3L1038.4,531.0L1039.8,529.7L1041.3,528.5L1042.8,527.2L1044.3,525.9L1045.8,524.6L1047.3,523.3L1048.7,522.0L1050.2,520.7L1051.7,519.5L1053.2,518.2L1054.7,516.9L1056.2,515.6L1057.6,514.3L1059.1,513.0L1060.6,511.7L1062.1,510.5L1063.6,509.2L1065.0,507.9L1066.5,506.6L1068.0,505.3L1069.5,504.0L1071.0,502.7L1072.5,501.4L1073.9,500.2L1075.4,498.9L1076.9,497.6L1078.4,496.3L1079.9,495.0L1081.4,493.7L1082.8,492.4L1084.3,491.2L1085.8,489.9L1087.3,488.6L1088.8,487.3L1090.2,486.0L1091.7,484.7L1093.2,483.4L1094.7,482.2L1096.2,480.9L1097.7,479.6L1099.1,478.3L1100.6,477.0L1102.1,475.7L1103.6,474.4L1105.1,473.1L1106.6,471.9L1108.0,470.6L1109.5,469.3L1111.0,468.0L1108.5,467.2L1106.0,466.4L1103.5,465.6L1101.0,464.8L1098.5,464.1L1096.0,463.3L1093.4,462.5L1090.9,461.7L1088.4,460.9L1085.9,460.1L1083.4,459.3L1080.9,458.5L1078.4,457.7L1075.9,457.0L1073.4,456.2L1070.9,455.4L1068.4,454.6L1065.9,453.8L1063.4,453.0L1060.8,452.2L1058.3,451.4L1055.8,450.6L1053.3,449.9L1050.8,449.1L1048.3,448.3L1045.8,447.5L1043.3,446.7L1040.8,445.9L1038.3,445.1L1035.8,444.3L1033.3,443.5L1030.8,442.8L1028.3,442.0L1025.7,441.2L1023.2,440.4L1020.7,439.6L1018.2,438.8L1015.7,438.0L1013.2,437.2L1010.7,436.4L1008.2,435.7L1005.7,434.9L1003.2,434.1L1000.7,433.3L998.2,432.5L995.7,431.7L993.1,430.9L990.6,430.1L988.1,429.3L985.6,428.6L983.1,427.8L980.6,427.0L978.1,426.2L975.6,425.4L973.1,424.6L970.6,423.8L968.1,423.0L965.6,422.2L963.1,421.5L960.5,420.7L958.0,419.9L955.5,419.1L953.0,418.3L950.5,417.5L948.0,416.7L945.5,415.9L943.0,415.1L940.5,414.4L938.0,413.6L935.5,412.8L933.0,412.0L930.5,411.2L927.9,410.4L925.4,409.6L922.9,408.8L920.4,408.0L917.9,407.3L915.4,406.5L912.9,405.7L910.4,404.9L907.9,404.1L905.4,403.3L902.9,402.5L900.4,401.7L897.9,400.9L895.4,400.2L892.8,399.4L890.3,398.6L887.8,397.8L885.3,397.0L882.8,396.2L880.3,395.4L877.8,394.6L875.3,393.8L872.8,393.1L870.3,392.3L867.8,391.5L865.3,390.7L862.8,389.9L860.2,389.1L857.7,388.3L855.2,387.5L852.7,386.7L850.2,385.9L847.7,385.2L845.2,384.4L842.7,383.6L840.2,382.8L837.7,382.0L835.2,381.2L832.7,380.4L830.2,379.6L827.6,378.8L825.1,378.1L822.6,377.3L820.1,376.5L817.6,375.7L815.1,374.9L812.6,374.1L810.1,373.3L807.6,372.5L805.1,371.7L802.6,371.0L800.1,370.2L797.6,369.4L795.1,368.6L792.5,367.8L790.0,367.0L787.5,366.2L785.0,365.4L782.5,364.6L781.7,364.4L779.5,365.4L777.3,366.5L776.5,366.9L775.1,367.6L772.9,368.7L770.7,369.7L768.7,370.7L768.5,370.8L766.3,371.9L764.2,372.9L762.0,374.0L760.8,374.6L759.8,375.1L757.6,376.1L755.4,377.2L753.3,378.3L752.9,378.5L751.1,379.4L748.9,380.4L746.7,381.5L745.1,382.3L744.5,382.6L742.3,383.6L740.1,384.7L738.0,385.8L737.3,386.1L735.8,386.9L733.6,387.9L731.4,389.0L729.4,390.0L729.2,390.1L727.1,391.1L724.9,392.2L722.7,393.3L721.5,393.9L720.6,394.4L718.4,395.4L716.2,396.5L714.0,397.6L713.5,397.9L711.9,398.7L709.7,399.7L707.6,400.8L705.5,401.9L705.4,401.9L703.2,403.0L701.1,404.1L698.9,405.1L697.4,405.9L696.8,406.2L694.6,407.3L692.5,408.4L690.3,409.5L689.3,410.0L688.2,410.5L686.0,411.6L683.9,412.7L681.8,413.8L681.1,414.1L679.6,414.9L677.5,416.0L675.3,417.1L673.2,418.1L672.9,418.3L671.1,419.2L668.9,420.3L666.8,421.4L664.7,422.5L664.6,422.6L662.6,423.6L660.4,424.7L658.3,425.8L656.2,426.8L656.2,426.9L654.1,427.9L652.0,429.0L649.8,430.1L647.8,431.2L647.7,431.2L645.6,432.3L643.5,433.4L641.4,434.5L639.3,435.6L639.3,435.6L637.2,436.7L635.1,437.8L633.0,438.9L630.9,440.0L630.8,440.0L628.8,441.1L626.7,442.2L624.6,443.3L622.5,444.4L622.1,444.6L620.4,445.5L618.3,446.6L616.2,447.7L614.1,448.8L613.4,449.2L612.0,449.9L610.0,451.0L607.9,452.1L605.8,453.2L604.6,453.8L603.7,454.3L601.6,455.4L599.6,456.5L597.5,457.6L595.8,458.5L595.4,458.7L593.3,459.8L591.3,460.9L589.2,462.0L587.1,463.2L586.9,463.2L585.1,464.3L583.0,465.4L580.9,466.5L578.9,467.6L578.0,468.0L576.8,468.7L574.7,469.8L572.7,470.9L570.6,472.0L569.3,472.7L568.4,473.1L566.0,474.1L563.7,475.1L562.4,475.7L561.3,476.1L559.0,477.2L556.7,478.2L555.5,478.7L554.3,479.2L552.0,480.2L549.6,481.3L548.6,481.7L547.3,482.3L544.9,483.3L542.6,484.3L541.8,484.6L540.2,485.3L537.9,486.4L535.5,487.4L535.0,487.6L533.2,488.4L530.8,489.4L528.4,490.4L528.2,490.5L526.1,491.4L523.7,492.5L521.4,493.5L521.4,493.5L519.0,494.5L516.7,495.5L514.5,496.5L514.3,496.5L512.0,497.6L509.7,498.6L507.6,499.5L507.3,499.6L505.0,500.6L502.6,501.7L500.8,502.5L500.3,502.7L497.9,503.7L495.6,504.7L494.0,505.4L493.2,505.7L490.9,506.8L488.5,507.8L487.2,508.4L486.2,508.8L483.8,509.8L481.4,510.8L480.4,511.3L479.1,511.9L476.7,512.9L474.4,513.9L473.5,514.3L472.0,514.9L469.7,515.9L467.4,517.0L466.6,517.3L465.0,518.0L462.7,519.0L460.3,520.0L459.8,520.3L458.0,521.1L455.7,522.1L453.3,523.1L452.9,523.3L451.0,524.1L448.6,525.1L446.3,526.2L446.0,526.3L443.9,527.2L441.6,528.2L439.2,529.2L439.2,529.2L436.9,530.3L434.5,531.3L432.4,532.2L432.2,532.3L429.8,533.3L427.5,534.3L425.5,535.2L425.2,535.4L422.8,536.4L420.5,537.4L418.4,538.4L418.2,538.5L415.9,539.5L413.6,540.5L411.4,541.5L411.3,541.6L408.9,542.6L406.6,543.6L404.4,544.6L404.3,544.7L402.0,545.7L399.7,546.7L397.5,547.7L397.3,547.7L395.0,548.8L392.7,549.8L390.5,550.8L390.3,550.8L388.0,551.9L385.7,552.9L383.5,553.8L383.4,553.9L381.0,554.9L378.7,556.0L376.6,556.9L376.4,557.0L374.0,558.0L371.6,559.0L370.0,559.7L369.1,560.0L366.7,561.0L364.3,562.0L363.6,562.3L361.8,563.0L359.4,564.0L357.0,565.0L357.0,565.0L354.6,566.0L352.2,567.0L350.5,567.7L349.8,568.0L347.4,569.0L345.0,570.0L343.8,570.5L342.6,571.0L340.2,572.1L337.9,573.1L337.1,573.4L335.5,574.1Z" fill="#1f781f"/>
<path d="M388.9,590.7L391.4,591.5L393.9,592.3L396.4,593.1L398.9,593.9L401.4,594.7L403.9,595.4L406.5,596.2L409.0,597.0L411.5,597.8L414.0,598.6L416.5,599.4L419.0,600.1L421.5,600.9L424.0,601.7L426.6,602.5L429.1,603.3L431.6,604.1L434.1,604.8L436.6,605.6L439.1,606.4L441.6,607.2L444.1,608.0L446.7,608.8L449.2,609.5L451.7,610.3L454.2,611.1L456.7,611.9L459.2,612.7L461.7,613.5L464.2,614.3L466.8,615.0L469.3,615.8L471.8,616.6L474.3,617.4L476.8,618.2L479.3,619.0L481.8,619.7L484.3,620.5L486.9,621.3L489.4,622.1L491.9,622.9L494.4,623.7L496.9,624.4L499.4,625.2L501.9,626.0L504.4,626.8L507.0,627.6L509.5,628.4L512.0,629.1L514.5,629.9L517.0,630.7L519.5,631.5L522.0,632.3L524.5,633.1L527.1,633.8L529.6,634.6L532.1,635.4L534.6,636.2L537.1,637.0L539.6,637.8L542.1,638.6L544.6,639.3L547.2,640.1L549.7,640.9L552.2,641.7L554.7,642.5L557.2,643.3L559.7,644.0L562.2,644.8L564.7,645.6L567.3,646.4L569.8,647.2L572.3,648.0L574.8,648.7L577.3,649.5L579.8,650.3L582.3,651.1L584.8,651.9L587.4,652.7L589.9,653.4L592.4,654.2L594.9,655.0L597.4,655.8L599.9,656.6L602.4,657.4L604.9,658.2L607.5,658.9L610.0,659.7L612.5,660.5L615.0,661.3L617.5,662.1L620.0,662.9L622.5,663.6L625.0,664.4L627.6,665.2L630.1,666.0L632.6,666.8L635.1,667.6L637.6,668.3L640.1,669.1L642.6,669.9L645.1,670.7L647.7,671.5L650.2,672.3L652.7,673.0L655.2,673.8L657.7,674.6L660.2,675.4L662.7,676.2L665.2,677.0L667.8,677.7L670.3,678.5L672.8,679.3L675.3,680.1L677.8,680.9L680.3,681.7L682.8,682.5L685.3,683.2L687.9,684.0L690.4,684.8L692.9,685.6L695.4,686.4L697.9,687.2L700.4,687.9L702.9,688.7L705.4,689.5L708.0,690.3L710.5,691.1L713.0,691.9L715.5,692.6L718.0,693.4L720.5,694.2L723.0,695.0L725.5,695.8L728.1,696.6L730.6,697.3L733.1,698.1L735.6,698.9L738.1,699.7L740.6,700.5L743.1,701.3L745.6,702.1L748.2,702.8L750.7,703.6L753.2,704.4L755.7,705.2L758.2,706.0L760.7,706.8L763.2,707.5L765.7,708.3L768.3,709.1L770.8,709.9L773.3,710.7L775.8,711.5L778.3,712.2L780.8,713.0L783.3,713.8L785.8,714.6L788.4,715.4L790.9,716.2L793.4,716.9L795.9,717.7L798.4,718.5L800.9,719.3L803.4,720.1L805.9,720.9L808.5,721.6L811.0,722.4L813.5,723.2L816.0,724.0L817.5,722.7L819.0,721.4L820.4,720.1L821.9,718.9L823.4,717.6L824.9,716.3L826.4,715.0L827.9,713.7L829.3,712.4L830.8,711.1L832.3,709.8L833.8,708.6L835.3,707.3L836.8,706.0L838.2,704.7L839.7,703.4L841.2,702.1L842.7,700.8L844.2,699.6L845.6,698.3L847.1,697.0L848.6,695.7L850.1,694.4L851.6,693.1L853.1,691.8L854.5,690.6L856.0,689.3L857.5,688.0L859.0,686.7L860.5,685.4L862.0,684.1L863.4,682.8L864.9,681.5L866.4,680.3L867.9,679.0L869.4,677.7L870.8,676.4L872.3,675.1L873.8,673.8L875.3,672.5L876.8,671.3L878.3,670.0L879.7,668.7L881.2,667.4L882.7,666.1L884.2,664.8L885.7,663.5L887.2,662.3L888.6,661.0L890.1,659.7L891.6,658.4L893.1,657.1L894.6,655.8L896.1,654.5L897.5,653.2L899.0,652.0L900.5,650.7L902.0,649.4L903.5,648.1L904.9,646.8L906.4,645.5L907.9,644.2L909.4,643.0L910.9,641.7L912.4,640.4L913.8,639.1L915.3,637.8L916.8,636.5L918.3,635.2L919.8,633.9L921.3,632.7L922.7,631.4L924.2,630.1L925.7,628.8L927.2,627.5L928.7,626.2L930.1,624.9L931.6,623.7L933.1,622.4L934.6,621.1L936.1,619.8L937.6,618.5L939.0,617.2L940.5,615.9L942.0,614.7L943.5,613.4L945.0,612.1L946.5,610.8L947.9,609.5L949.4,608.2L950.9,606.9L952.4,605.6L953.9,604.4L955.3,603.1L956.8,601.8L958.3,600.5L959.8,599.2L961.3,597.9L962.8,596.6L964.2,595.4L965.7,594.1L967.2,592.8L968.7,591.5L970.2,590.2L971.7,588.9L973.1,587.6L974.6,586.4L976.1,585.1L977.6,583.8L979.1,582.5L980.5,581.2L982.0,579.9L983.5,578.6L985.0,577.3L986.5,576.1L988.0,574.8L989.4,573.5L990.9,572.2L992.4,570.9L993.9,569.6L995.4,568.3L996.9,567.1L998.3,565.8L999.8,564.5L1001.3,563.2L1002.8,561.9L1004.3,560.6L1005.7,559.3L1007.2,558.1L1008.7,556.8L1010.2,555.5L1011.7,554.2L1013.2,552.9L1014.6,551.6L1016.1,550.3L1017.6,549.0L1019.1,547.8L1020.6,546.5L1022.1,545.2L1023.5,543.9L1025.0,542.6L1026.5,541.3L1028.0,540.0L1029.5,538.8L1030.9,537.5L1032.4,536.2L1033.9,534.9L1035.4,533.6L1036.9,532.3L1038.4,531.0L1039.8,529.7L1041.3,528.5L1042.8,527.2L1044.3,525.9L1045.8,524.6L1047.3,523.3L1048.7,522.0L1050.2,520.7L1051.7,519.5L1053.2,518.2L1054.7,516.9L1056.2,515.6L1057.6,514.3L1059.1,513.0L1060.6,511.7L1062.1,510.5L1063.6,509.2L1065.0,507.9L1066.5,506.6L1068.0,505.3L1069.5,504.0L1071.0,502.7L1072.5,501.4L1073.9,500.2L1075.4,498.9L1076.9,497.6L1078.4,496.3L1079.9,495.0L1081.4,493.7L1082.8,492.4L1084.3,491.2L1085.8,489.9L1087.3,488.6L1088.8,487.3L1090.2,486.0L1091.7,484.7L1093.2,483.4L1094.7,482.2L1096.2,480.9L1097.7,479.6L1099.1,478.3L1100.6,477.0L1102.1,475.7L1103.6,474.4L1105.1,473.1L1106.6,471.9L1108.0,470.6L1109.5,469.3L1111.0,468.0L1108.5,467.2L1106.0,466.4L1103.5,465.6L1101.0,464.8L1098.5,464.1L1096.0,463.3L1093.4,462.5L1090.9,461.7L1088.4,460.9L1085.9,460.1L1083.4,459.3L1080.9,458.5L1078.4,457.7L1075.9,457.0L1073.4,456.2L1070.9,455.4L1068.4,454.6L1065.9,453.8L1063.4,453.0L1060.8,452.2L1058.3,451.4L1055.8,450.6L1053.3,449.9L1050.8,449.1L1048.3,448.3L1045.8,447.5L1043.3,446.7L1040.8,445.9L1038.3,445.1L1035.8,444.3L1033.3,443.5L1030.8,442.8L1028.3,442.0L1025.7,441.2L1023.2,440.4L1020.7,439.6L1018.2,438.8L1015.7,438.0L1013.2,437.2L1010.7,436.4L1008.2,435.7L1005.7,434.9L1003.2,434.1L1000.7,433.3L998.2,432.5L995.7,431.7L993.1,430.9L990.6,430.1L988.1,429.3L985.6,428.6L983.1,427.8L980.6,427.0L978.1,426.2L975.6,425.4L973.1,424.6L970.6,423.8L968.1,423.0L965.6,422.2L963.1,421.5L960.5,420.7L958.0,419.9L955.5,419.1L953.0,418.3L950.5,417.5L948.0,416.7L945.5,415.9L943.0,415.1L940.5,414.4L938.0,413.6L935.5,412.8L933.0,412.0L930.5,411.2L927.9,410.4L925.4,409.6L922.9,408.8L920.4,408.0L917.9,407.3L915.4,406.5L912.9,405.7L910.4,404.9L907.9,404.1L905.4,403.3L902.9,402.5L900.4,401.7L897.9,400.9L895.4,400.2L892.8,399.4L890.3,398.6L887.8,397.8L885.3,397.0L882.8,396.2L880.3,395.4L877.8,394.6L875.3,393.8L872.8,393.1L870.3,392.3L867.8,391.5L865.3,390.7L862.8,389.9L860.2,389.1L857.7,388.3L855.2,387.5L852.7,386.7L850.2,385.9L847.7,385.2L846.5,384.8L844.3,385.8L842.6,386.6L842.0,386.9L839.8,387.9L837.5,389.0L835.3,390.0L835.2,390.1L833.0,391.1L830.8,392.1L828.6,393.2L827.8,393.5L826.3,394.2L824.1,395.3L821.8,396.3L820.4,397.0L819.6,397.4L817.4,398.4L815.1,399.5L812.9,400.5L812.9,400.5L810.6,401.6L808.3,402.6L806.1,403.7L805.6,403.9L803.8,404.7L801.6,405.8L799.3,406.8L798.3,407.3L797.1,407.9L794.8,408.9L792.6,410.0L790.9,410.7L790.3,411.0L788.1,412.1L785.8,413.1L783.6,414.2L783.5,414.2L781.3,415.2L779.1,416.3L776.8,417.3L776.1,417.7L774.6,418.4L772.4,419.4L770.1,420.5L768.6,421.2L767.9,421.5L765.7,422.6L763.4,423.6L761.2,424.7L761.1,424.7L759.0,425.8L756.7,426.8L754.5,427.9L753.6,428.3L752.3,428.9L750.1,430.0L747.8,431.0L746.0,431.9L745.6,432.1L743.4,433.2L741.2,434.2L739.0,435.3L738.5,435.5L736.7,436.3L734.5,437.4L732.3,438.5L730.8,439.2L730.1,439.5L727.9,440.6L725.7,441.6L723.5,442.7L723.2,442.9L721.3,443.8L719.1,444.8L716.9,445.9L715.5,446.6L714.7,447.0L712.5,448.0L710.3,449.1L708.1,450.2L707.8,450.3L705.9,451.2L703.7,452.3L701.5,453.4L700.0,454.1L699.3,454.4L697.1,455.5L694.9,456.6L692.7,457.6L692.1,457.9L690.6,458.7L688.4,459.8L686.2,460.9L684.2,461.8L684.0,461.9L681.9,463.0L679.7,464.1L677.6,465.2L676.2,465.9L675.4,466.2L673.3,467.3L671.1,468.4L669.0,469.5L668.1,469.9L666.8,470.6L664.7,471.7L662.5,472.7L660.4,473.8L659.9,474.1L658.2,474.9L656.1,476.0L653.9,477.1L651.8,478.2L651.7,478.2L649.7,479.2L647.5,480.3L645.4,481.4L643.4,482.4L643.3,482.5L641.1,483.6L639.0,484.7L636.9,485.8L635.1,486.7L634.8,486.9L632.6,487.9L630.5,489.0L628.4,490.1L627.0,490.8L626.1,491.2L623.7,492.2L621.3,493.2L620.4,493.5L618.9,494.2L616.4,495.2L614.0,496.2L613.9,496.2L611.6,497.2L609.2,498.2L607.4,498.9L606.8,499.2L604.3,500.2L601.9,501.1L600.8,501.6L599.5,502.1L597.1,503.1L594.7,504.1L594.3,504.3L592.3,505.1L589.9,506.1L587.8,507.0L587.4,507.1L585.0,508.1L582.6,509.1L581.3,509.7L580.2,510.1L577.8,511.1L575.4,512.1L574.7,512.5L573.0,513.2L570.7,514.2L568.3,515.2L567.9,515.3L565.9,516.2L563.5,517.2L561.2,518.2L561.2,518.2L558.8,519.2L556.4,520.3L554.5,521.1L554.1,521.3L551.7,522.3L549.3,523.3L547.8,524.0L546.9,524.3L544.6,525.3L542.2,526.3L541.0,526.8L539.8,527.3L537.5,528.4L535.1,529.4L534.3,529.7L532.7,530.4L530.3,531.4L528.0,532.4L527.6,532.6L525.6,533.4L523.2,534.4L520.9,535.4L520.8,535.4L518.5,536.5L516.1,537.5L514.2,538.3L513.7,538.5L511.3,539.5L509.0,540.5L507.5,541.1L506.6,541.5L504.2,542.5L501.8,543.5L500.8,544.0L499.5,544.6L497.1,545.6L494.7,546.6L494.1,546.9L492.3,547.6L490.0,548.6L487.6,549.6L487.4,549.7L485.2,550.6L482.9,551.6L480.5,552.7L480.5,552.7L478.2,553.7L475.8,554.7L473.6,555.7L473.5,555.7L471.2,556.8L468.9,557.8L466.6,558.8L466.6,558.8L464.2,559.9L461.9,560.9L459.6,561.9L459.6,561.9L457.3,563.0L455.0,564.0L452.6,565.0L452.6,565.0L450.3,566.0L448.0,567.1L445.7,568.1L445.7,568.1L443.3,569.1L441.0,570.2L438.7,571.2L438.7,571.2L436.3,572.2L434.0,573.2L431.8,574.2L431.7,574.3L429.3,575.3L426.7,576.2L425.7,576.6L424.0,577.1L421.4,578.1L419.9,578.6L418.7,579.0L416.1,579.9L414.2,580.6L413.5,580.9L410.8,581.8L408.4,582.7L408.2,582.7L405.6,583.7L403.0,584.6L402.5,584.8L400.4,585.6L397.8,586.5L396.7,586.9L395.2,587.5L392.6,588.4L390.7,589.1L390.1,589.4L387.5,590.3Z" fill="#8fb91f"/>
<path d="M444.1,608.0L446.7,608.8L449.2,609.5L451.7,610.3L454.2,611.1L456.7,611.9L459.2,612.7L461.7,613.5L464.2,614.3L466.8,615.0L469.3,615.8L471.8,616.6L474.3,617.4L476.8,618.2L479.3,619.0L481.8,619.7L484.3,620.5L486.9,621.3L489.4,622.1L491.9,622.9L494.4,623.7L496.9,624.4L499.4,625.2L501.9,626.0L504.4,626.8L507.0,627.6L509.5,628.4L512.0,629.1L514.5,629.9L517.0,630.7L519.5,631.5L522.0,632.3L524.5,633.1L527.1,633.8L529.6,634.6L532.1,635.4L534.6,636.2L537.1,637.0L539.6,637.8L542.1,638.6L544.6,639.3L547.2,640.1L549.7,640.9L552.2,641.7L554.7,642.5L557.2,643.3L559.7,644.0L562.2,644.8L564.7,645.6L567.3,646.4L569.8,647.2L572.3,648.0L574.8,648.7L577.3,649.5L579.8,650.3L582.3,651.1L584.8,651.9L587.4,652.7L589.9,653.4L592.4,654.2L594.9,655.0L597.4,655.8L599.9,656.6L602.4,657.4L604.9,658.2L607.5,658.9L610.0,659.7L612.5,660.5L615.0,661.3L617.5,662.1L620.0,662.9L622.5,663.6L625.0,664.4L627.6,665.2L630.1,666.0L632.6,666.8L635.1,667.6L637.6,668.3L640.1,669.1L642.6,669.9L645.1,670.7L647.7,671.5L650.2,672.3L652.7,673.0L655.2,673.8L657.7,674.6L660.2,675.4L662.7,676.2L665.2,677.0L667.8,677.7L670.3,678.5L672.8,679.3L675.3,680.1L677.8,680.9L680.3,681.7L682.8,682.5L685.3,683.2L687.9,684.0L690.4,684.8L692.9,685.6L695.4,686.4L697.9,687.2L700.4,687.9L702.9,688.7L705.4,689.5L708.0,690.3L710.5,691.1L713.0,691.9L715.5,692.6L718.0,693.4L720.5,694.2L723.0,695.0L725.5,695.8L728.1,696.6L730.6,697.3L733.1,698.1L735.6,698.9L738.1,699.7L740.6,700.5L743.1,701.3L745.6,702.1L748.2,702.8L750.7,703.6L753.2,704.4L755.7,705.2L758.2,706.0L760.7,706.8L763.2,707.5L765.7,708.3L768.3,709.1L770.8,709.9L773.3,710.7L775.8,711.5L778.3,712.2L780.8,713.0L783.3,713.8L785.8,714.6L788.4,715.4L790.9,716.2L793.4,716.9L795.9,717.7L798.4,718.5L800.9,719.3L803.4,720.1L805.9,720.9L808.5,721.6L811.0,722.4L813.5,723.2L816.0,724.0L817.5,722.7L819.0,721.4L820.4,720.1L821.9,718.9L823.4,717.6L824.9,716.3L826.4,715.0L827.9,713.7L829.3,712.4L830.8,711.1L832.3,709.8L833.8,708.6L835.3,707.3L836.8,706.0L838.2,704.7L839.7,703.4L841.2,702.1L842.7,700.8L844.2,699.6L845.6,698.3L847.1,697.0L848.6,695.7L850.1,694.4L851.6,693.1L853.1,691.8L854.5,690.6L856.0,689.3L857.5,688.0L859.0,686.7L860.5,685.4L862.0,684.1L863.4,682.8L864.9,681.5L866.4,680.3L867.9,679.0L869.4,677.7L870.8,676.4L872.3,675.1L873.8,673.8L875.3,672.5L876.8,671.3L878.3,670.0L879.7,668.7L881.2,667.4L882.7,666.1L884.2,664.8L885.7,663.5L887.2,662.3L888.6,661.0L890.1,659.7L891.6,658.4L893.1,657.1L894.6,655.8L896.1,654.5L897.5,653.2L899.0,652.0L900.5,650.7L902.0,649.4L903.5,648.1L904.9,646.8L906.4,645.5L907.9,644.2L909.4,643.0L910.9,641.7L912.4,640.4L913.8,639.1L915.3,637.8L916.8,636.5L918.3,635.2L919.8,633.9L921.3,632.7L922.7,631.4L924.2,630.1L925.7,628.8L927.2,627.5L928.7,626.2L930.1,624.9L931.6,623.7L933.1,622.4L934.6,621.1L936.1,619.8L937.6,618.5L939.0,617.2L940.5,615.9L942.0,614.7L943.5,613.4L945.0,612.1L946.5,610.8L947.9,609.5L949.4,608.2L950.9,606.9L952.4,605.6L953.9,604.4L955.3,603.1L956.8,601.8L958.3,600.5L959.8,599.2L961.3,597.9L962.8,596.6L964.2,595.4L965.7,594.1L967.2,592.8L968.7,591.5L970.2,590.2L971.7,588.9L973.1,587.6L974.6,586.4L976.1,585.1L977.6,583.8L979.1,582.5L980.5,581.2L982.0,579.9L983.5,578.6L985.0,577.3L986.5,576.1L988.0,574.8L989.4,573.5L990.9,572.2L992.4,570.9L993.9,569.6L995.4,568.3L996.9,567.1L998.3,565.8L999.8,564.5L1001.3,563.2L1002.8,561.9L1004.3,560.6L1005.7,559.3L1007.2,558.1L1008.7,556.8L1010.2,555.5L1011.7,554.2L1013.2,552.9L1014.6,551.6L1016.1,550.3L1017.6,549.0L1019.1,547.8L1020.6,546.5L1022.1,545.2L1023.5,543.9L1025.0,542.6L1026.5,541.3L1028.0,540.0L1029.5,538.8L1030.9,537.5L1032.4,536.2L1033.9,534.9L1035.4,533.6L1036.9,532.3L1038.4,531.0L1039.8,529.7L1041.3,528.5L1042.8,527.2L1044.3,525.9L1045.8,524.6L1047.3,523.3L1048.7,522.0L1050.2,520.7L1051.7,519.5L1053.2,518.2L1054.7,516.9L1056.2,515.6L1057.6,514.3L1059.1,513.0L1060.6,511.7L1062.1,510.5L1063.6,509.2L1065.0,507.9L1066.5,506.6L1068.0,505.3L1069.5,504.0L1071.0,502.7L1072.5,501.4L1073.9,500.2L1075.4,498.9L1076.9,497.6L1078.4,496.3L1079.9,495.0L1081.4,493.7L1082.8,492.4L1084.3,491.2L1085.8,489.9L1087.3,488.6L1088.8,487.3L1090.2,486.0L1091.7,484.7L1093.2,483.4L1094.7,482.2L1096.2,480.9L1097.7,479.6L1099.1,478.3L1100.6,477.0L1102.1,475.7L1103.6,474.4L1105.1,473.1L1106.6,471.9L1108.0,470.6L1109.5,469.3L1111.0,468.0L1108.5,467.2L1106.0,466.4L1103.5,465.6L1101.0,464.8L1098.5,464.1L1096.0,463.3L1093.4,462.5L1090.9,461.7L1088.4,460.9L1085.9,460.1L1083.4,459.3L1080.9,458.5L1078.4,457.7L1075.9,457.0L1073.4,456.2L1070.9,455.4L1068.4,454.6L1065.9,453.8L1063.4,453.0L1060.8,452.2L1058.3,451.4L1055.8,450.6L1053.3,449.9L1050.8,449.1L1048.3,448.3L1045.8,447.5L1043.3,446.7L1040.8,445.9L1038.3,445.1L1035.8,444.3L1033.3,443.5L1030.8,442.8L1028.3,442.0L1025.7,441.2L1023.2,440.4L1020.7,439.6L1018.2,438.8L1015.7,438.0L1013.2,437.2L1010.7,436.4L1008.2,435.7L1005.7,434.9L1003.2,434.1L1000.7,433.3L998.2,432.5L995.7,431.7L993.1,430.9L990.6,430.1L988.1,429.3L985.6,428.6L983.1,427.8L980.6,427.0L978.1,426.2L975.6,425.4L973.1,424.6L970.6,423.8L968.1,423.0L965.6,422.2L963.1,421.5L960.5,420.7L958.0,419.9L955.5,419.1L953.0,418.3L950.5,417.5L948.0,416.7L945.5,415.9L943.0,415.1L940.5,414.4L938.0,413.6L935.5,412.8L933.0,412.0L930.5,411.2L927.9,410.4L925.4,409.6L922.9,408.8L920.4,408.0L917.9,407.3L915.4,406.5L912.9,405.7L911.4,405.2L909.0,406.2L908.7,406.3L906.6,407.2L904.3,408.2L902.1,409.2L901.9,409.2L899.5,410.2L897.1,411.2L895.3,412.0L894.8,412.3L892.4,413.3L890.1,414.3L888.6,414.9L887.7,415.3L885.4,416.3L883.0,417.3L881.8,417.9L880.7,418.4L878.3,419.4L875.9,420.4L875.0,420.8L873.6,421.4L871.2,422.4L868.8,423.4L868.3,423.6L866.4,424.4L864.1,425.4L861.7,426.4L861.5,426.5L859.4,427.5L857.1,428.5L854.7,429.5L854.7,429.5L852.4,430.5L850.0,431.5L847.8,432.5L847.7,432.6L845.4,433.6L843.1,434.6L840.8,435.6L840.8,435.6L838.4,436.7L836.1,437.7L833.8,438.7L833.8,438.7L831.5,439.8L829.2,440.8L826.9,441.8L826.7,441.9L824.6,442.9L822.4,443.9L820.1,444.9L819.6,445.2L817.8,446.0L815.5,447.0L813.2,448.1L812.4,448.5L811.0,449.1L808.7,450.2L806.4,451.2L805.1,451.8L804.2,452.2L801.9,453.3L799.7,454.3L797.7,455.2L797.4,455.4L795.2,456.4L792.9,457.5L790.7,458.5L790.3,458.7L788.4,459.6L786.2,460.6L784.0,461.7L782.8,462.2L781.8,462.8L779.5,463.8L777.3,464.9L775.3,465.8L775.1,465.9L772.9,467.0L770.7,468.0L768.5,469.1L767.6,469.5L766.2,470.2L764.0,471.2L761.8,472.3L759.9,473.2L759.6,473.4L757.5,474.4L755.3,475.5L753.1,476.6L752.0,477.1L750.9,477.6L748.8,478.7L746.6,479.8L744.4,480.9L744.1,481.1L742.3,481.9L740.1,483.0L738.0,484.1L736.0,485.1L735.8,485.2L733.6,486.2L731.4,487.3L729.2,488.4L728.3,488.8L727.0,489.4L724.8,490.5L722.6,491.6L720.7,492.5L720.4,492.6L718.1,493.7L715.9,494.7L713.7,495.8L713.0,496.2L711.5,496.9L709.3,497.9L707.1,499.0L705.3,499.9L704.9,500.1L702.7,501.1L700.5,502.2L698.3,503.3L697.6,503.6L696.1,504.3L693.9,505.4L691.7,506.5L689.8,507.4L689.5,507.5L687.3,508.6L685.0,509.6L682.8,510.5L682.6,510.6L680.1,511.6L677.7,512.6L676.4,513.1L675.2,513.6L672.8,514.6L670.3,515.5L670.0,515.7L667.9,516.5L665.4,517.5L663.7,518.2L663.0,518.5L660.5,519.5L658.1,520.5L657.3,520.8L655.6,521.5L653.2,522.5L650.9,523.4L650.7,523.4L648.3,524.4L645.8,525.4L644.5,526.0L643.4,526.4L640.9,527.4L638.5,528.4L638.1,528.5L636.0,529.4L633.6,530.4L631.6,531.2L631.2,531.4L628.8,532.4L626.5,533.4L625.0,534.0L624.1,534.4L621.7,535.4L619.3,536.4L618.4,536.8L616.9,537.4L614.5,538.4L612.1,539.4L611.7,539.6L609.7,540.4L607.3,541.4L605.1,542.3L604.9,542.4L602.5,543.4L600.1,544.4L598.5,545.1L597.7,545.5L595.3,546.5L592.9,547.5L591.9,547.9L590.5,548.5L588.1,549.5L585.7,550.5L585.4,550.6L583.3,551.5L580.9,552.5L578.8,553.4L578.5,553.5L576.1,554.5L573.8,555.5L572.1,556.2L571.4,556.5L569.0,557.5L566.6,558.5L565.3,559.1L564.3,559.6L561.9,560.6L559.5,561.6L558.6,562.0L557.2,562.6L554.8,563.6L552.4,564.6L551.9,564.9L550.1,565.6L547.7,566.6L545.3,567.7L545.2,567.7L542.9,568.7L540.6,569.7L538.3,570.7L538.3,570.7L535.9,571.7L533.6,572.8L531.4,573.7L531.3,573.8L528.9,574.8L526.6,575.8L524.5,576.7L524.3,576.9L521.9,577.9L519.6,578.9L517.6,579.8L517.2,579.9L514.9,581.0L512.6,582.0L510.7,582.8L510.2,583.0L507.9,584.0L505.6,585.1L503.8,585.8L503.2,586.1L500.9,587.1L498.6,588.1L496.9,588.9L496.2,589.2L493.9,590.2L491.6,591.2L490.0,591.9L489.2,592.2L486.9,593.3L484.0,594.1L484.0,594.1L481.2,595.0L478.8,595.7L478.3,595.8L475.5,596.7L473.5,597.3L472.6,597.6L469.8,598.4L468.2,598.9L467.0,599.3L464.2,600.2L462.9,600.6L461.4,601.1L458.6,602.0L457.5,602.3L455.8,602.8L453.0,603.7L452.1,604.0L450.2,604.6L447.5,605.5L446.7,605.8L444.7,606.4L442.0,607.3Z" fill="#f0f01f"/>
<path d="M496.9,624.4L499.4,625.2L501.9,626.0L504.4,626.8L507.0,627.6L509.5,628.4L512.0,629.1L514.5,629.9L517.0,630.7L519.5,631.5L522.0,632.3L524.5,633.1L527.1,633.8L529.6,634.6L532.1,635.4L534.6,636.2L537.1,637.0L539.6,637.8L542.1,638.6L544.6,639.3L547.2,640.1L549.7,640.9L552.2,641.7L554.7,642.5L557.2,643.3L559.7,644.0L562.2,644.8L564.7,645.6L567.3,646.4L569.8,647.2L572.3,648.0L574.8,648.7L577.3,649.5L579.8,650.3L582.3,651.1L584.8,651.9L587.4,652.7L589.9,653.4L592.4,654.2L594.9,655.0L597.4,655.8L599.9,656.6L602.4,657.4L604.9,658.2L607.5,658.9L610.0,659.7L612.5,660.5L615.0,661.3L617.5,662.1L620.0,662.9L622.5,663.6L625.0,664.4L627.6,665.2L630.1,666.0L632.6,666.8L635.1,667.6L637.6,668.3L640.1,669.1L642.6,669.9L645.1,670.7L647.7,671.5L650.2,672.3L652.7,673.0L655.2,673.8L657.7,674.6L660.2,675.4L662.7,676.2L665.2,677.0L667.8,677.7L670.3,678.5L672.8,679.3L675.3,680.1L677.8,680.9L680.3,681.7L682.8,682.5L685.3,683.2L687.9,684.0L690.4,684.8L692.9,685.6L695.4,686.4L697.9,687.2L700.4,687.9L702.9,688.7L705.4,689.5L708.0,690.3L710.5,691.1L713.0,691.9L715.5,692.6L718.0,693.4L720.5,694.2L723.0,695.0L725.5,695.8L728.1,696.6L730.6,697.3L733.1,698.1L735.6,698.9L738.1,699.7L740.6,700.5L743.1,701.3L745.6,702.1L748.2,702.8L750.7,703.6L753.2,704.4L755.7,705.2L758.2,706.0L760.7,706.8L763.2,707.5L765.7,708.3L768.3,709.1L770.8,709.9L773.3,710.7L775.8,711.5L778.3,712.2L780.8,713.0L783.3,713.8L785.8,714.6L788.4,715.4L790.9,716.2L793.4,716.9L795.9,717.7L798.4,718.5L800.9,719.3L803.4,720.1L805.9,720.9L808.5,721.6L811.0,722.4L813.5,723.2L816.0,724.0L817.5,722.7L819.0,721.4L820.4,720.1L821.9,718.9L823.4,717.6L824.9,716.3L826.4,715.0L827.9,713.7L829.3,712.4L830.8,711.1L832.3,709.8L833.8,708.6L835.3,707.3L836.8,706.0L838.2,704.7L839.7,703.4L841.2,702.1L842.7,700.8L844.2,699.6L845.6,698.3L847.1,697.0L848.6,695.7L850.1,694.4L851.6,693.1L853.1,691.8L854.5,690.6L856.0,689.3L857.5,688.0L859.0,686.7L860.5,685.4L862.0,684.1L863.4,682.8L864.9,681.5L866.4,680.3L867.9,679.0L869.4,677.7L870.8,676.4L872.3,675.1L873.8,673.8L875.3,672.5L876.8,671.3L878.3,670.0L879.7,668.7L881.2,667.4L882.7,666.1L884.2,664.8L885.7,663.5L887.2,662.3L888.6,661.0L890.1,659.7L891.6,658.4L893.1,657.1L894.6,655.8L896.1,654.5L897.5,653.2L899.0,652.0L900.5,650.7L902.0,649.4L903.5,648.1L904.9,646.8L906.4,645.5L907.9,644.2L909.4,643.0L910.9,641.7L912.4,640.4L913.8,639.1L915.3,637.8L916.8,636.5L918.3,635.2L919.8,633.9L921.3,632.7L922.7,631.4L924.2,630.1L925.7,628.8L927.2,627.5L928.7,626.2L930.1,624.9L931.6,623.7L933.1,622.4L934.6,621.1L936.1,619.8L937.6,618.5L939.0,617.2L940.5,615.9L942.0,614.7L943.5,613.4L945.0,612.1L946.5,610.8L947.9,609.5L949.4,608.2L950.9,606.9L952.4,605.6L953.9,604.4L955.3,603.1L956.8,601.8L958.3,600.5L959.8,599.2L961.3,597.9L962.8,596.6L964.2,595.4L965.7,594.1L967.2,592.8L968.7,591.5L970.2,590.2L971.7,588.9L973.1,587.6L974.6,586.4L976.1,585.1L977.6,583.8L979.1,582.5L980.5,581.2L982.0,579.9L983.5,578.6L985.0,577.3L986.5,576.1L988.0,574.8L989.4,573.5L990.9,572.2L992.4,570.9L993.9,569.6L995.4,568.3L996.9,567.1L998.3,565.8L999.8,564.5L1001.3,563.2L1002.8,561.9L1004.3,560.6L1005.7,559.3L1007.2,558.1L1008.7,556.8L1010.2,555.5L1011.7,554.2L1013.2,552.9L1014.6,551.6L1016.1,550.3L1017.6,549.0L1019.1,547.8L1020.6,546.5L1022.1,545.2L1023.5,543.9L1025.0,542.6L1026.5,541.3L1028.0,540.0L1029.5,538.8L1030.9,537.5L1032.4,536.2L1033.9,534.9L1035.4,533.6L1036.9,532.3L1038.4,531.0L1039.8,529.7L1041.3,528.5L1042.8,527.2L1044.3,525.9L1045.8,524.6L1047.3,523.3L1048.7,522.0L1050.2,520.7L1051.7,519.5L1053.2,518.2L1054.7,516.9L1056.2,515.6L1057.6,514.3L1059.1,513.0L1060.6,511.7L1062.1,510.5L1063.6,509.2L1065.0,507.9L1066.5,506.6L1068.0,505.3L1069.5,504.0L1071.0,502.7L1072.5,501.4L1073.9,500.2L1075.4,498.9L1076.9,497.6L1078.4,496.3L1079.9,495.0L1081.4,493.7L1082.8,492.4L1084.3,491.2L1085.8,489.9L1087.3,488.6L1088.8,487.3L1090.2,486.0L1091.7,484.7L1093.2,483.4L1094.7,482.2L1096.2,480.9L1097.7,479.6L1099.1,478.3L1100.6,477.0L1102.1,475.7L1103.6,474.4L1105.1,473.1L1106.6,471.9L1108.0,470.6L1109.5,469.3L1111.0,468.0L1108.5,467.2L1106.0,466.4L1103.5,465.6L1101.0,464.8L1098.5,464.1L1096.0,463.3L1093.4,462.5L1090.9,461.7L1088.4,460.9L1085.9,460.1L1083.4,459.3L1080.9,458.5L1078.4,457.7L1075.9,457.0L1073.4,456.2L1070.9,455.4L1068.4,454.6L1065.9,453.8L1063.4,453.0L1060.8,452.2L1058.3,451.4L1055.8,450.6L1053.3,449.9L1050.8,449.1L1048.3,448.3L1045.8,447.5L1043.3,446.7L1040.8,445.9L1038.3,445.1L1035.8,444.3L1033.3,443.5L1030.8,442.8L1028.3,442.0L1025.7,441.2L1023.2,440.4L1020.7,439.6L1018.2,438.8L1015.7,438.0L1013.2,437.2L1010.7,436.4L1008.2,435.7L1005.7,434.9L1003.2,434.1L1000.7,433.3L998.2,432.5L995.7,431.7L993.1,430.9L990.6,430.1L988.1,429.3L985.6,428.6L983.1,427.8L980.6,427.0L978.1,426.2L976.3,425.6L974.6,426.3L973.8,426.6L971.3,427.6L968.9,428.6L968.2,428.8L966.4,429.5L964.0,430.5L961.9,431.3L961.5,431.5L959.1,432.5L956.6,433.5L955.6,433.9L954.2,434.4L951.7,435.4L949.3,436.4L949.2,436.4L946.8,437.4L944.4,438.4L942.8,439.0L941.9,439.4L939.4,440.3L936.9,441.3L936.6,441.4L934.4,442.3L931.9,443.3L930.4,443.8L929.5,444.2L927.0,445.2L924.5,446.2L924.2,446.3L922.0,447.1L919.5,448.1L918.0,448.7L917.0,449.1L914.6,450.1L912.1,451.0L911.7,451.2L909.6,452.0L907.1,453.0L905.5,453.7L904.7,454.0L902.2,454.9L899.7,455.9L899.2,456.1L897.3,456.9L894.8,457.9L892.8,458.7L892.4,458.9L890.0,459.9L887.5,460.9L886.3,461.4L885.1,461.9L882.7,462.9L880.3,463.9L879.8,464.1L877.9,464.9L875.5,465.9L873.3,466.8L873.1,466.9L870.7,467.9L868.3,468.9L866.7,469.5L865.9,469.9L863.5,470.9L861.1,471.9L860.0,472.3L858.7,472.9L856.3,473.9L854.0,474.9L853.4,475.1L851.6,475.9L849.2,476.9L846.8,477.9L846.7,478.0L844.5,478.9L842.1,479.9L839.9,480.9L839.7,481.0L837.4,482.0L835.0,483.0L833.1,483.8L832.7,484.0L830.3,485.0L828.0,486.0L826.3,486.8L825.7,487.1L823.3,488.1L821.0,489.1L819.4,489.8L818.6,490.1L816.3,491.1L814.0,492.2L812.5,492.9L811.7,493.2L809.4,494.2L807.1,495.3L805.4,496.0L804.8,496.3L802.5,497.3L800.2,498.4L798.3,499.2L797.9,499.4L795.6,500.4L793.3,501.5L791.2,502.5L791.0,502.5L788.8,503.5L786.5,504.6L784.2,505.6L784.0,505.7L781.9,506.7L779.7,507.7L777.4,508.8L776.7,509.1L775.1,509.8L772.9,510.8L770.6,511.9L769.4,512.4L768.3,512.9L766.1,514.0L763.8,515.0L762.1,515.8L761.6,516.1L759.4,517.1L757.1,518.2L754.9,519.3L754.5,519.5L752.7,520.3L750.5,521.4L748.3,522.4L746.8,523.1L746.1,523.5L743.9,524.6L741.7,525.6L739.4,526.7L739.3,526.7L737.0,527.7L734.7,528.7L732.6,529.6L732.3,529.7L729.9,530.7L727.5,531.7L725.9,532.4L725.2,532.7L722.8,533.7L720.5,534.8L719.1,535.3L718.1,535.8L715.7,536.8L713.4,537.8L712.3,538.3L711.0,538.8L708.7,539.8L706.3,540.9L705.5,541.2L704.0,541.9L701.6,542.9L699.3,543.9L698.7,544.2L696.9,544.9L694.6,546.0L692.3,547.0L691.8,547.2L690.0,548.0L687.7,549.1L685.4,550.1L684.6,550.5L683.2,551.1L680.9,552.2L678.6,553.2L677.3,553.9L676.4,554.3L674.1,555.3L671.8,556.4L670.0,557.2L669.6,557.4L667.3,558.5L665.1,559.5L662.8,560.6L662.6,560.7L660.6,561.6L658.3,562.7L656.1,563.7L655.2,564.1L653.8,564.8L651.6,565.8L649.3,566.9L647.8,567.5L647.1,567.9L644.8,569.0L642.6,570.0L640.4,571.0L640.3,571.1L638.1,572.1L635.9,573.2L633.6,574.2L633.0,574.5L631.3,575.3L629.0,576.3L626.6,577.3L626.1,577.5L624.3,578.3L621.9,579.3L619.5,580.3L619.4,580.3L617.1,581.3L614.7,582.3L612.8,583.1L612.3,583.3L609.9,584.3L607.5,585.4L606.2,585.9L605.2,586.4L602.8,587.4L600.4,588.4L599.5,588.8L598.0,589.4L595.7,590.4L593.3,591.4L592.7,591.7L590.9,592.4L588.6,593.5L586.2,594.5L586.0,594.6L583.8,595.5L581.5,596.5L579.2,597.5L579.1,597.5L576.7,598.5L574.4,599.5L572.5,600.4L572.0,600.6L569.6,601.6L567.3,602.6L565.7,603.2L564.9,603.6L562.5,604.6L560.2,605.6L559.0,606.1L557.8,606.6L555.4,607.6L553.1,608.7L552.3,609.0L550.7,609.7L548.3,610.7L545.9,611.7L545.7,611.8L542.8,612.5L540.9,612.9L539.6,613.2L536.5,614.0L536.2,614.1L533.3,614.8L531.4,615.3L530.2,615.6L527.1,616.3L526.6,616.5L524.0,617.1L521.8,617.7L520.9,617.9L517.8,618.7L516.9,618.9L514.7,619.5L512.1,620.2L511.7,620.3L508.6,621.1L507.2,621.5L505.6,621.9L502.5,622.7L502.3,622.8L499.5,623.5L497.3,624.1L496.5,624.3Z" fill="#ffe11f"/>
<path d="M554.7,642.5L557.2,643.3L559.7,644.0L562.2,644.8L564.7,645.6L567.3,646.4L569.8,647.2L572.3,648.0L574.8,648.7L577.3,649.5L579.8,650.3L582.3,651.1L584.8,651.9L587.4,652.7L589.9,653.4L592.4,654.2L594.9,655.0L597.4,655.8L599.9,656.6L602.4,657.4L604.9,658.2L607.5,658.9L610.0,659.7L612.5,660.5L615.0,661.3L617.5,662.1L620.0,662.9L622.5,663.6L625.0,664.4L627.6,665.2L630.1,666.0L632.6,666.8L635.1,667.6L637.6,668.3L640.1,669.1L642.6,669.9L645.1,670.7L647.7,671.5L650.2,672.3L652.7,673.0L655.2,673.8L657.7,674.6L660.2,675.4L662.7,676.2L665.2,677.0L667.8,677.7L670.3,678.5L672.8,679.3L675.3,680.1L677.8,680.9L680.3,681.7L682.8,682.5L685.3,683.2L687.9,684.0L690.4,684.8L692.9,685.6L695.4,686.4L697.9,687.2L700.4,687.9L702.9,688.7L705.4,689.5L708.0,690.3L710.5,691.1L713.0,691.9L715.5,692.6L718.0,693.4L720.5,694.2L723.0,695.0L725.5,695.8L728.1,696.6L730.6,697.3L733.1,698.1L735.6,698.9L738.1,699.7L740.6,700.5L743.1,701.3L745.6,702.1L748.2,702.8L750.7,703.6L753.2,704.4L755.7,705.2L758.2,706.0L760.7,706.8L763.2,707.5L765.7,708.3L768.3,709.1L770.8,709.9L773.3,710.7L775.8,711.5L778.3,712.2L780.8,713.0L783.3,713.8L785.8,714.6L788.4,715.4L790.9,716.2L793.4,716.9L795.9,717.7L798.4,718.5L800.9,719.3L803.4,720.1L805.9,720.9L808.5,721.6L811.0,722.4L813.5,723.2L816.0,724.0L817.5,722.7L819.0,721.4L820.4,720.1L821.9,718.9L823.4,717.6L824.9,716.3L826.4,715.0L827.9,713.7L829.3,712.4L830.8,711.1L832.3,709.8L833.8,708.6L835.3,707.3L836.8,706.0L838.2,704.7L839.7,703.4L841.2,702.1L842.7,700.8L844.2,699.6L845.6,698.3L847.1,697.0L848.6,695.7L850.1,694.4L851.6,693.1L853.1,691.8L854.5,690.6L856.0,689.3L857.5,688.0L859.0,686.7L860.5,685.4L862.0,684.1L863.4,682.8L864.9,681.5L866.4,680.3L867.9,679.0L869.4,677.7L870.8,676.4L872.3,675.1L873.8,673.8L875.3,672.5L876.8,671.3L878.3,670.0L879.7,668.7L881.2,667.4L882.7,666.1L884.2,664.8L885.7,663.5L887.2,662.3L888.6,661.0L890.1,659.7L891.6,658.4L893.1,657.1L894.6,655.8L896.1,654.5L897.5,653.2L899.0,652.0L900.5,650.7L902.0,649.4L903.5,648.1L904.9,646.8L906.4,645.5L907.9,644.2L909.4,643.0L910.9,641.7L912.4,640.4L913.8,639.1L915.3,637.8L916.8,636.5L918.3,635.2L919.8,633.9L921.3,632.7L922.7,631.4L924.2,630.1L925.7,628.8L927.2,627.5L928.7,626.2L930.1,624.9L931.6,623.7L933.1,622.4L934.6,621.1L936.1,619.8L937.6,618.5L939.0,617.2L940.5,615.9L942.0,614.7L943.5,613.4L945.0,612.1L946.5,610.8L947.9,609.5L949.4,608.2L950.9,606.9L952.4,605.6L953.9,604.4L955.3,603.1L956.8,601.8L958.3,600.5L959.8,599.2L961.3,597.9L962.8,596.6L964.2,595.4L965.7,594.1L967.2,592.8L968.7,591.5L970.2,590.2L971.7,588.9L973.1,587.6L974.6,586.4L976.1,585.1L977.6,583.8L979.1,582.5L980.5,581.2L982.0,579.9L983.5,578.6L985.0,577.3L986.5,576.1L988.0,574.8L989.4,573.5L990.9,572.2L992.4,570.9L993.9,569.6L995.4,568.3L996.9,567.1L998.3,565.8L999.8,564.5L1001.3,563.2L1002.8,561.9L1004.3,560.6L1005.7,559.3L1007.2,558.1L1008.7,556.8L1010.2,555.5L1011.7,554.2L1013.2,552.9L1014.6,551.6L1016.1,550.3L1017.6,549.0L1019.1,547.8L1020.6,546.5L1022.1,545.2L1023.5,543.9L1025.0,542.6L1026.5,541.3L1028.0,540.0L1029.5,538.8L1030.9,537.5L1032.4,536.2L1033.9,534.9L1035.4,533.6L1036.9,532.3L1038.4,531.0L1039.8,529.7L1041.3,528.5L1042.8,527.2L1044.3,525.9L1045.8,524.6L1047.3,523.3L1048.7,522.0L1050.2,520.7L1051.7,519.5L1053.2,518.2L1054.7,516.9L1056.2,515.6L1057.6,514.3L1059.1,513.0L1060.6,511.7L1062.1,510.5L1063.6,509.2L1065.0,507.9L1066.5,506.6L1068.0,505.3L1069.5,504.0L1071.0,502.7L1072.5,501.4L1073.9,500.2L1075.4,498.9L1076.9,497.6L1078.4,496.3L1079.9,495.0L1081.4,493.7L1082.8,492.4L1084.3,491.2L1085.8,489.9L1087.3,488.6L1088.8,487.3L1090.2,486.0L1091.7,484.7L1093.2,483.4L1094.7,482.2L1096.2,480.9L1097.7,479.6L1099.1,478.3L1100.6,477.0L1102.1,475.7L1103.6,474.4L1105.1,473.1L1106.6,471.9L1108.0,470.6L1109.5,469.3L1111.0,468.0L1108.5,467.2L1106.0,466.4L1103.5,465.6L1101.0,464.8L1098.5,464.1L1096.0,463.3L1093.4,462.5L1090.9,461.7L1088.4,460.9L1085.9,460.1L1083.4,459.3L1080.9,458.5L1078.4,457.7L1075.9,457.0L1073.4,456.2L1070.9,455.4L1068.4,454.6L1065.9,453.8L1063.4,453.0L1060.8,452.2L1058.3,451.4L1055.8,450.6L1053.3,449.9L1050.8,449.1L1048.3,448.3L1045.8,447.5L1043.3,446.7L1041.3,446.1L1040.3,446.3L1038.6,447.0L1036.1,447.9L1034.2,448.7L1033.6,448.9L1031.1,449.9L1028.6,450.8L1028.0,451.1L1026.1,451.8L1023.6,452.8L1021.8,453.5L1021.1,453.7L1018.6,454.7L1016.1,455.7L1015.7,455.9L1013.6,456.7L1011.1,457.6L1009.5,458.3L1008.6,458.6L1006.1,459.6L1003.6,460.5L1003.3,460.6L1001.1,461.5L998.5,462.4L997.3,462.9L996.0,463.4L993.5,464.3L991.3,465.2L990.9,465.3L988.4,466.3L985.9,467.2L985.2,467.5L983.3,468.2L980.8,469.1L979.1,469.8L978.3,470.1L975.8,471.1L973.3,472.0L973.0,472.1L970.7,473.0L968.2,474.0L966.9,474.5L965.7,474.9L963.2,475.9L960.7,476.8L960.7,476.8L958.2,477.8L955.7,478.8L954.6,479.2L953.2,479.7L950.7,480.7L948.4,481.6L948.2,481.7L945.7,482.6L943.2,483.6L942.3,484.0L940.7,484.6L938.2,485.6L936.1,486.3L935.7,486.5L933.2,487.5L930.7,488.5L929.9,488.7L928.2,489.4L925.7,490.4L923.8,491.1L923.2,491.4L920.7,492.3L918.2,493.3L917.6,493.6L915.7,494.3L913.2,495.3L911.3,496.0L910.7,496.2L908.3,497.2L905.8,498.2L905.1,498.4L903.3,499.1L900.8,500.1L898.9,500.9L898.3,501.1L895.9,502.1L893.4,503.0L892.6,503.4L890.9,504.0L888.4,505.0L886.3,505.8L886.0,506.0L883.5,507.0L881.0,507.9L880.1,508.3L878.5,508.9L876.1,509.9L873.7,510.8L873.6,510.9L871.2,511.9L868.7,512.9L867.3,513.4L866.3,513.8L863.9,514.8L861.4,515.8L860.9,516.0L859.0,516.8L856.6,517.8L854.5,518.6L854.1,518.8L851.7,519.8L849.3,520.8L848.1,521.3L846.8,521.8L844.4,522.8L842.0,523.7L841.6,523.9L839.5,524.7L837.1,525.7L835.1,526.5L834.7,526.7L832.3,527.7L829.9,528.7L828.7,529.2L827.4,529.7L825.0,530.7L822.6,531.7L822.2,531.9L820.2,532.7L817.8,533.7L815.7,534.6L815.3,534.7L812.9,535.7L810.5,536.7L809.1,537.2L808.1,537.7L805.7,538.7L803.3,539.7L802.6,540.0L800.9,540.7L798.6,541.7L796.3,542.7L795.8,542.9L793.9,543.7L791.4,544.7L789.3,545.5L789.0,545.7L786.5,546.7L784.1,547.7L783.0,548.1L781.6,548.7L779.2,549.6L776.7,550.6L776.6,550.7L774.3,551.6L771.8,552.6L770.2,553.3L769.4,553.6L766.9,554.6L764.5,555.6L763.8,555.9L762.1,556.6L759.6,557.5L757.4,558.5L757.2,558.5L754.8,559.5L752.3,560.5L750.9,561.1L749.9,561.5L747.5,562.5L745.0,563.5L744.4,563.7L742.7,564.5L740.3,565.5L738.0,566.5L737.6,566.7L735.6,567.6L733.3,568.6L731.0,569.6L730.8,569.7L728.6,570.6L726.3,571.7L724.0,572.7L723.9,572.7L721.6,573.7L719.3,574.7L717.0,575.7L717.0,575.7L714.6,576.8L712.3,577.8L710.1,578.8L710.0,578.8L707.6,579.8L705.3,580.9L703.1,581.8L703.0,581.9L700.6,582.9L698.3,583.9L696.2,584.9L696.0,585.0L693.7,586.0L691.3,587.0L689.3,587.9L689.0,588.0L686.7,589.1L684.4,590.1L682.3,591.0L682.0,591.1L679.7,592.1L677.4,593.2L675.3,594.1L675.1,594.2L672.8,595.2L670.4,596.3L668.4,597.2L668.1,597.3L665.9,598.3L663.6,599.4L661.3,600.4L661.1,600.5L659.1,601.5L656.8,602.5L654.5,603.6L653.8,603.9L652.3,604.6L650.1,605.7L647.8,606.7L646.3,607.4L645.6,607.8L643.3,608.8L641.1,609.9L638.9,610.9L638.8,610.9L636.6,612.0L634.4,613.0L632.2,614.1L631.3,614.5L630.0,615.1L627.7,616.2L625.5,617.3L623.8,618.1L623.3,618.3L621.1,619.4L618.8,620.4L616.6,621.5L616.2,621.7L614.4,622.6L612.2,623.6L610.0,624.7L608.6,625.3L607.7,625.7L605.5,626.8L603.3,627.9L601.1,628.9L601.0,628.9L598.1,629.7L596.0,630.3L595.1,630.6L592.1,631.4L591.1,631.6L589.1,632.2L586.1,633.0L586.1,633.0L583.1,633.8L581.1,634.4L580.2,634.7L577.2,635.5L576.0,635.8L574.3,636.3L571.3,637.2L570.9,637.3L568.4,638.0L565.8,638.8L565.5,638.8L562.6,639.7L560.6,640.3L559.7,640.5L556.9,641.4L555.4,641.8L553.9,642.2Z" fill="#ffb41f"/>
<path d="M602.4,657.4L604.9,658.2L607.5,658.9L610.0,659.7L612.5,660.5L615.0,661.3L617.5,662.1L620.0,662.9L622.5,663.6L625.0,664.4L627.6,665.2L630.1,666.0L632.6,666.8L635.1,667.6L637.6,668.3L640.1,669.1L642.6,669.9L645.1,670.7L647.7,671.5L650.2,672.3L652.7,673.0L655.2,673.8L657.7,674.6L660.2,675.4L662.7,676.2L665.2,677.0L667.8,677.7L670.3,678.5L672.8,679.3L675.3,680.1L677.8,680.9L680.3,681.7L682.8,682.5L685.3,683.2L687.9,684.0L690.4,684.8L692.9,685.6L695.4,686.4L697.9,687.2L700.4,687.9L702.9,688.7L705.4,689.5L708.0,690.3L710.5,691.1L713.0,691.9L715.5,692.6L718.0,693.4L720.5,694.2L723.0,695.0L725.5,695.8L728.1,696.6L730.6,697.3L733.1,698.1L735.6,698.9L738.1,699.7L740.6,700.5L743.1,701.3L745.6,702.1L748.2,702.8L750.7,703.6L753.2,704.4L755.7,705.2L758.2,706.0L760.7,706.8L763.2,707.5L765.7,708.3L768.3,709.1L770.8,709.9L773.3,710.7L775.8,711.5L778.3,712.2L780.8,713.0L783.3,713.8L785.8,714.6L788.4,715.4L790.9,716.2L793.4,716.9L795.9,717.7L798.4,718.5L800.9,719.3L803.4,720.1L805.9,720.9L808.5,721.6L811.0,722.4L813.5,723.2L816.0,724.0L817.5,722.7L819.0,721.4L820.4,720.1L821.9,718.9L823.4,717.6L824.9,716.3L826.4,715.0L827.9,713.7L829.3,712.4L830.8,711.1L832.3,709.8L833.8,708.6L835.3,707.3L836.8,706.0L838.2,704.7L839.7,703.4L841.2,702.1L842.7,700.8L844.2,699.6L845.6,698.3L847.1,697.0L848.6,695.7L850.1,694.4L851.6,693.1L853.1,691.8L854.5,690.6L856.0,689.3L857.5,688.0L859.0,686.7L860.5,685.4L862.0,684.1L863.4,682.8L864.9,681.5L866.4,680.3L867.9,679.0L869.4,677.7L870.8,676.4L872.3,675.1L873.8,673.8L875.3,672.5L876.8,671.3L878.3,670.0L879.7,668.7L881.2,667.4L882.7,666.1L884.2,664.8L885.7,663.5L887.2,662.3L888.6,661.0L890.1,659.7L891.6,658.4L893.1,657.1L894.6,655.8L896.1,654.5L897.5,653.2L899.0,652.0L900.5,650.7L902.0,649.4L903.5,648.1L904.9,646.8L906.4,645.5L907.9,644.2L909.4,643.0L910.9,641.7L912.4,640.4L913.8,639.1L915.3,637.8L916.8,636.5L918.3,635.2L919.8,633.9L921.3,632.7L922.7,631.4L924.2,630.1L925.7,628.8L927.2,627.5L928.7,626.2L930.1,624.9L931.6,623.7L933.1,622.4L934.6,621.1L936.1,619.8L937.6,618.5L939.0,617.2L940.5,615.9L942.0,614.7L943.5,613.4L945.0,612.1L946.5,610.8L947.9,609.5L949.4,608.2L950.9,606.9L952.4,605.6L953.9,604.4L955.3,603.1L956.8,601.8L958.3,600.5L959.8,599.2L961.3,597.9L962.8,596.6L964.2,595.4L965.7,594.1L967.2,592.8L968.7,591.5L970.2,590.2L971.7,588.9L973.1,587.6L974.6,586.4L976.1,585.1L977.6,583.8L979.1,582.5L980.5,581.2L982.0,579.9L983.5,578.6L985.0,577.3L986.5,576.1L988.0,574.8L989.4,573.5L990.9,572.2L992.4,570.9L993.9,569.6L995.4,568.3L996.9,567.1L998.3,565.8L999.8,564.5L1001.3,563.2L1002.8,561.9L1004.3,560.6L1005.7,559.3L1007.2,558.1L1008.7,556.8L1010.2,555.5L1011.7,554.2L1013.2,552.9L1014.6,551.6L1016.1,550.3L1017.6,549.0L1019.1,547.8L1020.6,546.5L1022.1,545.2L1023.5,543.9L1025.0,542.6L1026.5,541.3L1028.0,540.0L1029.5,538.8L1030.9,537.5L1032.4,536.2L1033.9,534.9L1035.4,533.6L1036.9,532.3L1038.4,531.0L1039.8,529.7L1041.3,528.5L1042.8,527.2L1044.3,525.9L1045.8,524.6L1047.3,523.3L1048.7,522.0L1050.2,520.7L1051.7,519.5L1053.2,518.2L1054.7,516.9L1056.2,515.6L1057.6,514.3L1059.1,513.0L1060.6,511.7L1062.1,510.5L1063.6,509.2L1065.0,507.9L1066.5,506.6L1068.0,505.3L1069.5,504.0L1071.0,502.7L1072.5,501.4L1073.9,500.2L1075.4,498.9L1076.9,497.6L1078.4,496.3L1079.9,495.0L1081.4,493.7L1082.8,492.4L1084.3,491.2L1085.8,489.9L1087.3,488.6L1088.8,487.3L1090.2,486.0L1090.4,485.9L1090.1,486.0L1086.9,486.7L1085.7,487.0L1083.8,487.5L1081.0,488.1L1080.6,488.2L1077.4,489.0L1076.2,489.3L1074.3,489.7L1071.5,490.4L1071.1,490.5L1068.0,491.3L1066.8,491.6L1064.8,492.0L1062.0,492.7L1061.7,492.8L1058.6,493.6L1057.2,493.9L1055.5,494.4L1052.4,495.1L1052.4,495.1L1049.3,495.9L1047.6,496.4L1046.2,496.7L1043.1,497.5L1042.7,497.6L1040.1,498.3L1037.9,498.8L1037.0,499.1L1034.0,499.9L1033.0,500.1L1030.9,500.7L1028.1,501.4L1027.9,501.5L1024.8,502.3L1023.2,502.7L1021.8,503.1L1018.8,503.9L1018.2,504.0L1015.8,504.7L1013.3,505.4L1012.8,505.5L1009.8,506.3L1008.3,506.7L1006.8,507.1L1003.8,507.9L1003.3,508.1L1000.9,508.8L998.3,509.5L997.9,509.6L995.0,510.4L993.3,510.9L992.0,511.2L989.2,512.1L988.1,512.4L986.3,512.9L983.4,513.8L982.9,514.0L980.6,514.6L977.7,515.5L977.6,515.5L974.9,516.4L972.4,517.1L972.1,517.2L969.3,518.1L967.1,518.8L966.4,519.0L963.6,519.8L961.7,520.4L960.8,520.7L958.1,521.6L956.4,522.1L955.3,522.5L952.6,523.4L950.9,523.9L949.9,524.3L947.4,525.3L944.9,526.2L944.7,526.3L942.4,527.2L939.9,528.2L938.6,528.7L937.4,529.1L934.9,530.1L932.5,531.1L932.3,531.2L930.0,532.1L927.5,533.0L926.0,533.7L925.1,534.0L922.6,535.0L920.2,536.0L919.7,536.2L917.7,537.0L915.2,538.0L913.4,538.7L912.8,538.9L910.3,539.9L907.9,540.9L907.0,541.2L905.4,541.9L903.0,542.9L900.6,543.8L900.5,543.9L898.1,544.8L895.6,545.8L894.3,546.4L893.2,546.8L890.8,547.8L888.3,548.8L887.8,549.0L885.9,549.8L883.5,550.8L881.4,551.6L881.0,551.8L878.6,552.8L876.2,553.7L875.0,554.2L873.8,554.7L871.3,555.7L868.9,556.7L868.5,556.9L866.5,557.7L864.1,558.7L862.0,559.6L861.6,559.7L859.2,560.7L856.8,561.7L855.6,562.1L854.3,562.7L851.7,563.6L849.6,564.4L849.2,564.6L846.7,565.5L844.1,566.5L843.5,566.7L841.6,567.4L839.0,568.4L837.5,568.9L836.5,569.3L833.9,570.3L831.5,571.2L831.4,571.3L828.8,572.2L826.3,573.2L825.5,573.4L823.7,574.1L821.2,575.1L819.5,575.7L818.6,576.0L816.1,577.0L813.5,577.9L813.5,577.9L811.0,578.9L808.4,579.8L807.5,580.2L805.8,580.8L803.3,581.7L801.5,582.4L800.8,582.7L798.4,583.7L795.9,584.7L795.1,585.0L793.5,585.7L791.0,586.7L788.7,587.6L788.6,587.6L786.1,588.6L783.7,589.6L782.3,590.2L781.2,590.6L778.8,591.6L776.3,592.6L776.0,592.7L773.9,593.6L771.4,594.5L769.6,595.3L769.0,595.5L766.5,596.5L764.1,597.5L763.3,597.8L761.6,598.5L759.1,599.5L757.0,600.3L756.7,600.4L754.2,601.4L751.7,602.4L750.7,602.8L749.3,603.4L746.8,604.4L744.4,605.3L744.3,605.3L741.9,606.3L739.4,607.3L738.1,607.8L736.9,608.3L734.5,609.3L732.0,610.2L731.8,610.3L729.5,611.2L727.0,612.2L725.5,612.8L724.5,613.2L722.1,614.1L719.6,615.1L719.3,615.2L717.1,616.1L714.6,617.1L713.0,617.7L712.2,618.1L709.8,619.1L707.4,620.1L706.3,620.6L705.1,621.1L702.8,622.1L700.5,623.2L699.3,623.7L698.1,624.2L695.8,625.2L693.5,626.2L692.3,626.8L691.2,627.3L688.9,628.3L686.6,629.3L685.3,629.9L684.3,630.4L682.0,631.4L679.6,632.4L678.3,633.0L677.3,633.5L675.0,634.5L672.7,635.5L671.3,636.2L670.4,636.5L668.1,637.6L665.8,638.6L664.2,639.3L663.5,639.6L661.2,640.7L658.9,641.7L657.2,642.5L656.6,642.7L654.3,643.8L652.0,644.8L650.7,645.1L648.7,645.5L646.2,646.1L645.4,646.2L642.0,647.0L641.7,647.0L638.7,647.7L637.1,648.0L635.4,648.4L632.5,649.0L632.1,649.1L628.9,649.9L627.9,650.1L625.6,650.6L623.3,651.1L622.4,651.3L619.1,652.1L618.7,652.2L615.9,652.8L614.0,653.3L612.7,653.6L609.5,654.3L609.3,654.4L606.3,655.1L604.6,655.5L603.2,655.8L600.0,656.6Z" fill="#ff871f"/>
<path d="M650.2,672.3L652.7,673.0L655.2,673.8L657.7,674.6L660.2,675.4L662.7,676.2L665.2,677.0L667.8,677.7L670.3,678.5L672.8,679.3L675.3,680.1L677.8,680.9L680.3,681.7L682.8,682.5L685.3,683.2L687.9,684.0L690.4,684.8L692.9,685.6L695.4,686.4L697.9,687.2L700.4,687.9L702.9,688.7L705.4,689.5L708.0,690.3L710.5,691.1L713.0,691.9L715.5,692.6L718.0,693.4L720.5,694.2L723.0,695.0L725.5,695.8L728.1,696.6L730.6,697.3L733.1,698.1L735.6,698.9L738.1,699.7L740.6,700.5L743.1,701.3L745.6,702.1L748.2,702.8L750.7,703.6L753.2,704.4L755.7,705.2L758.2,706.0L760.7,706.8L763.2,707.5L765.7,708.3L768.3,709.1L770.8,709.9L773.3,710.7L775.8,711.5L778.3,712.2L780.8,713.0L783.3,713.8L785.8,714.6L788.4,715.4L790.9,716.2L793.4,716.9L795.9,717.7L798.4,718.5L800.9,719.3L803.4,720.1L805.9,720.9L808.5,721.6L811.0,722.4L813.5,723.2L816.0,724.0L817.5,722.7L819.0,721.4L820.4,720.1L821.9,718.9L823.4,717.6L824.9,716.3L826.4,715.0L827.9,713.7L829.3,712.4L830.8,711.1L832.3,709.8L833.8,708.6L835.3,707.3L836.8,706.0L838.2,704.7L839.7,703.4L841.2,702.1L842.7,700.8L844.2,699.6L845.6,698.3L847.1,697.0L848.6,695.7L850.1,694.4L851.6,693.1L853.1,691.8L854.5,690.6L856.0,689.3L857.5,688.0L859.0,686.7L860.5,685.4L862.0,684.1L863.4,682.8L864.9,681.5L866.4,680.3L867.9,679.0L869.4,677.7L870.8,676.4L872.3,675.1L873.8,673.8L875.3,672.5L876.8,671.3L878.3,670.0L879.7,668.7L881.2,667.4L882.7,666.1L884.2,664.8L885.7,663.5L887.2,662.3L888.6,661.0L890.1,659.7L891.6,658.4L893.1,657.1L894.6,655.8L896.1,654.5L897.5,653.2L899.0,652.0L900.5,650.7L902.0,649.4L903.5,648.1L904.9,646.8L906.4,645.5L907.9,644.2L909.4,643.0L910.9,641.7L912.4,640.4L913.8,639.1L915.3,637.8L916.8,636.5L918.3,635.2L919.8,633.9L921.3,632.7L922.7,631.4L924.2,630.1L925.7,628.8L927.2,627.5L928.7,626.2L930.1,624.9L931.6,623.7L933.1,622.4L934.6,621.1L936.1,619.8L937.6,618.5L939.0,617.2L940.5,615.9L942.0,614.7L943.5,613.4L945.0,612.1L946.5,610.8L947.9,609.5L949.4,608.2L950.9,606.9L952.4,605.6L953.9,604.4L955.3,603.1L956.8,601.8L958.3,600.5L959.8,599.2L961.3,597.9L962.8,596.6L964.2,595.4L965.7,594.1L967.2,592.8L968.7,591.5L970.2,590.2L971.7,588.9L973.1,587.6L974.6,586.4L976.1,585.1L977.6,583.8L979.1,582.5L980.5,581.2L982.0,579.9L983.5,578.6L985.0,577.3L986.5,576.1L988.0,574.8L989.4,573.5L990.9,572.2L992.4,570.9L993.9,569.6L995.4,568.3L996.9,567.1L998.3,565.8L999.8,564.5L1001.3,563.2L1002.8,561.9L1004.3,560.6L1005.7,559.3L1007.2,558.1L1008.7,556.8L1010.2,555.5L1011.7,554.2L1012.5,553.5L1010.9,553.9L1007.9,554.8L1007.4,554.9L1005.0,555.6L1002.4,556.3L1002.1,556.4L999.1,557.3L997.3,557.8L996.2,558.1L993.3,558.9L992.2,559.3L990.4,559.8L987.5,560.6L987.0,560.7L984.6,561.5L981.9,562.2L981.7,562.3L978.8,563.1L976.7,563.8L975.9,564.0L973.1,564.8L971.6,565.3L970.2,565.7L967.3,566.6L966.3,566.8L964.5,567.4L961.6,568.3L961.1,568.4L958.8,569.1L955.9,570.0L955.9,570.0L953.1,570.9L950.6,571.6L950.3,571.7L947.5,572.6L945.3,573.2L944.6,573.5L941.8,574.3L940.0,574.9L939.0,575.2L936.2,576.1L934.7,576.6L933.4,576.9L930.6,577.8L929.3,578.2L927.8,578.7L925.1,579.6L923.9,579.9L922.3,580.5L919.5,581.3L918.5,581.7L916.7,582.2L913.9,583.1L913.2,583.3L911.1,584.0L908.3,584.8L907.9,585.0L905.6,585.7L902.9,586.7L902.3,586.9L900.2,587.6L897.5,588.5L896.7,588.8L894.9,589.4L892.2,590.3L891.1,590.7L889.5,591.2L886.8,592.1L885.4,592.6L884.2,593.0L881.5,594.0L879.7,594.6L878.8,594.9L876.2,595.8L874.1,596.5L873.5,596.7L870.9,597.6L868.4,598.5L868.2,598.6L865.6,599.5L863.0,600.4L862.5,600.6L860.6,601.4L858.2,602.4L856.0,603.4L855.8,603.4L853.4,604.4L851.0,605.4L849.3,606.2L848.6,606.4L846.3,607.4L843.9,608.5L842.7,609.0L841.5,609.5L839.1,610.5L836.7,611.5L836.0,611.8L834.3,612.5L832.0,613.5L829.6,614.5L829.4,614.6L827.2,615.5L824.8,616.5L822.7,617.4L822.4,617.5L820.0,618.5L817.6,619.5L816.1,620.1L815.2,620.5L812.8,621.5L810.5,622.5L809.5,622.9L808.1,623.5L805.7,624.5L803.3,625.5L802.9,625.7L800.9,626.5L798.5,627.5L796.3,628.4L796.1,628.5L793.7,629.5L791.3,630.5L789.7,631.2L788.9,631.5L786.5,632.5L784.1,633.5L783.1,634.0L781.7,634.5L779.3,635.5L776.9,636.5L776.5,636.7L774.5,637.5L772.1,638.5L770.0,639.5L769.7,639.5L767.3,640.5L764.9,641.5L763.5,642.1L762.5,642.5L760.0,643.5L757.6,644.5L757.1,644.7L755.1,645.5L752.7,646.5L750.7,647.3L750.2,647.5L747.8,648.5L745.4,649.4L744.3,649.9L742.9,650.4L740.5,651.4L738.0,652.4L737.9,652.5L735.6,653.4L733.1,654.4L731.5,655.0L730.7,655.4L728.2,656.3L725.8,657.3L725.2,657.6L723.3,658.3L720.8,659.3L718.8,660.1L718.4,660.3L715.9,661.3L713.5,662.3L712.5,662.6L711.0,663.2L707.9,663.7L707.2,663.8L703.9,664.2L703.2,664.3L699.8,664.7L699.3,664.8L695.8,665.3L695.3,665.3L691.7,665.8L691.4,665.9L687.7,666.4L687.5,666.4L683.7,666.9L683.6,667.0L679.8,667.5L679.5,667.5L675.9,668.0L675.4,668.1L672.1,668.6L671.3,668.7L668.3,669.2L667.2,669.3L664.5,669.7L663.1,670.0L660.7,670.3L658.9,670.6L657.0,670.9L654.8,671.2L653.2,671.5L650.6,671.9L649.6,672.1Z" fill="#ff4b1f"/>
<path d="M710.5,691.1L713.0,691.9L715.5,692.6L718.0,693.4L720.5,694.2L723.0,695.0L725.5,695.8L728.1,696.6L730.6,697.3L733.1,698.1L735.6,698.9L738.1,699.7L740.6,700.5L743.1,701.3L745.6,702.1L748.2,702.8L750.7,703.6L753.2,704.4L755.7,705.2L758.2,706.0L760.7,706.8L763.2,707.5L765.7,708.3L768.3,709.1L770.8,709.9L773.3,710.7L775.8,711.5L778.3,712.2L780.8,713.0L783.3,713.8L785.8,714.6L788.4,715.4L790.9,716.2L793.4,716.9L795.9,717.7L798.4,718.5L800.9,719.3L803.4,720.1L805.9,720.9L808.5,721.6L811.0,722.4L813.5,723.2L816.0,724.0L817.5,722.7L819.0,721.4L820.4,720.1L821.9,718.9L823.4,717.6L824.9,716.3L826.4,715.0L827.9,713.7L829.3,712.4L830.8,711.1L832.3,709.8L833.8,708.6L835.3,707.3L836.8,706.0L838.2,704.7L839.7,703.4L841.2,702.1L842.7,700.8L844.2,699.6L845.6,698.3L847.1,697.0L848.6,695.7L850.1,694.4L851.6,693.1L853.1,691.8L854.5,690.6L856.0,689.3L857.5,688.0L859.0,686.7L860.5,685.4L862.0,684.1L863.4,682.8L864.9,681.5L866.4,680.3L867.9,679.0L869.4,677.7L870.8,676.4L872.3,675.1L873.8,673.8L875.3,672.5L876.8,671.3L878.3,670.0L879.7,668.7L881.2,667.4L882.7,666.1L884.2,664.8L885.7,663.5L887.2,662.3L888.6,661.0L890.1,659.7L891.6,658.4L893.1,657.1L894.6,655.8L896.1,654.5L897.5,653.2L899.0,652.0L900.5,650.7L902.0,649.4L903.5,648.1L904.9,646.8L906.4,645.5L907.9,644.2L909.4,643.0L910.9,641.7L912.4,640.4L913.8,639.1L915.3,637.8L916.8,636.5L918.3,635.2L919.8,633.9L921.3,632.7L922.7,631.4L924.2,630.1L925.7,628.8L927.2,627.5L928.7,626.2L930.1,624.9L931.6,623.7L932.5,622.9L930.9,623.4L928.3,624.4L926.8,624.9L925.6,625.3L923.0,626.2L921.1,626.9L920.4,627.1L917.7,628.1L915.3,628.9L915.1,629.0L912.5,629.9L909.8,630.8L909.6,630.9L907.2,631.8L904.6,632.7L903.8,633.0L901.9,633.6L899.3,634.6L898.1,635.0L896.7,635.5L894.1,636.4L892.3,637.0L891.4,637.3L888.8,638.3L886.5,639.1L886.2,639.2L883.6,640.1L880.9,641.1L880.8,641.1L878.3,642.0L875.7,642.9L875.0,643.2L873.1,643.9L870.5,644.8L869.2,645.3L867.9,645.7L865.2,646.7L863.4,647.3L862.6,647.6L860.0,648.5L857.6,649.4L857.4,649.5L854.8,650.4L852.2,651.3L851.7,651.5L849.6,652.3L847.0,653.2L845.9,653.6L844.4,654.1L841.8,655.1L840.1,655.7L839.2,656.0L836.6,656.9L834.2,657.8L834.0,657.9L831.4,658.8L828.8,659.8L828.4,659.9L826.2,660.7L823.6,661.6L822.5,662.0L821.0,662.6L818.4,663.5L816.6,664.2L815.9,664.5L813.5,665.5L811.0,666.5L810.2,666.8L808.6,667.4L806.1,668.4L803.8,669.4L803.7,669.4L801.2,670.4L798.8,671.4L797.4,672.0L796.4,672.4L793.9,673.4L791.5,674.4L791.0,674.6L789.1,675.4L786.6,676.3L784.5,677.2L784.2,677.3L781.8,678.3L779.4,679.3L778.0,679.9L777.0,680.3L774.6,681.3L772.1,682.3L771.7,682.4L768.2,682.8L767.7,682.9L764.1,683.3L763.8,683.4L760.1,683.8L759.8,683.9L756.1,684.3L755.8,684.4L752.1,684.8L751.8,684.9L748.2,685.3L747.8,685.4L744.2,685.9L743.7,685.9L740.3,686.4L739.7,686.5L736.4,686.9L735.6,687.0L732.5,687.4L731.6,687.6L728.6,688.0L727.5,688.1L724.8,688.5L723.4,688.7L720.9,689.1L719.3,689.3L717.1,689.6L715.2,689.9L713.3,690.2L711.1,690.5L709.5,690.8Z" fill="#f01f1f"/>
<path d="M768.3,709.1L770.8,709.9L773.3,710.7L775.8,711.5L778.3,712.2L780.8,713.0L783.3,713.8L785.8,714.6L788.4,715.4L790.9,716.2L793.4,716.9L795.9,717.7L798.4,718.5L800.9,719.3L803.4,720.1L805.9,720.9L808.5,721.6L811.0,722.4L813.5,723.2L816.0,724.0L817.5,722.7L819.0,721.4L820.4,720.1L821.9,718.9L823.4,717.6L824.9,716.3L826.4,715.0L827.9,713.7L829.3,712.4L830.8,711.1L832.3,709.8L833.8,708.6L835.3,707.3L836.8,706.0L838.2,704.7L839.7,703.5L836.0,703.7L835.1,703.7L832.4,703.9L830.3,704.0L828.7,704.1L825.5,704.2L825.1,704.2L821.5,704.4L820.7,704.5L817.8,704.7L816.0,704.8L814.1,704.9L811.3,705.0L810.5,705.1L806.8,705.3L806.6,705.3L803.1,705.6L802.0,705.6L799.4,705.8L797.4,705.9L795.7,706.1L792.8,706.3L791.9,706.3L788.3,706.6L788.2,706.6L784.5,706.9L783.8,706.9L780.7,707.2L779.3,707.3L777.0,707.5L774.8,707.7L773.2,707.8L770.4,708.0L769.4,708.1L766.0,708.4Z" fill="#c81f1f"/>
<path d="M823,700 L823,988 L1062,781 L1021,778 L955,768 L890,750 L850,738 L835,715 Z" fill="#ffffff" fill-opacity="0.12"/>
<path d="M414 740L448 751M812 1006L796 966M813 936L797 895M415 670L449 680M397 841L414 811M682 753L666 712M579 933L612 944M580 863L613 873M496 872L480 831M449 680L482 690M449 610L483 620M613 873L647 884M614 803L648 813M483 620L516 630M779 996L812 1006M648 813L681 823M648 743L682 753M682 753L715 763M598 762L582 722M314 744L364 760M315 674L365 689M763 955L746 915M716 693L749 703M632 702L616 662M365 689L398 700M797 895L781 855M530 882L563 893M413 881L430 851M431 781L448 751M399 629L432 640M814 830L815 794M564 822L597 833M447 821L464 791M315 638L316 603M481 761L498 731M646 954L663 924M515 701L532 671M629 914L647 884M680 894L697 864M548 711L566 681M363 830L380 800M714 834L731 804M496 872L530 882M397 770L414 740M747 844L765 814M366 619L399 629M380 871L363 830M531 812L564 822M431 710L449 680M782 784L799 754M596 903L613 873M413 881L397 841M431 781L414 740M414 811L397 770M565 752L598 762M465 721L482 690M466 650L483 620M729 945L763 955M612 944L629 914M630 843L648 813M447 821L431 781M598 762L631 773M448 751L431 710M599 692L632 702M499 660L516 630M763 955L796 966M764 885L797 895M664 853L681 823M647 884L664 853M665 783L682 753M632 702L666 712M481 761L465 721M482 690L466 650M380 871L413 881M797 895L814 900M646 954L629 914M798 825L814 830M698 793L715 763M681 823L698 793M699 723L716 693M515 701L499 660M413 881L446 892M414 811L447 821M313 815L314 780M680 894L664 853M732 733L749 703M715 763L732 733M447 821L480 831M448 751L481 761M363 830L347 790M364 760L348 719M316 568L349 578M714 834L698 793M748 774L766 744M481 761L514 771M397 770L381 730M482 690L515 701M398 700L382 659M646 954L679 964M563 893L547 852M515 701L548 711M431 710L415 670M680 894L713 904M596 903L580 863M597 833L581 792M549 641L583 651M466 650L449 610M714 834L747 844M612 944L596 903M630 843L614 803M796 966L780 925M647 884L630 843M665 783L648 743M812 971L813 936M681 823L665 783M699 723L683 682M314 709L315 674M732 733L716 693M715 763L699 723M612 944L646 954M479 902L496 872M349 649L366 619M748 774L732 733M647 884L680 894M516 630L549 641M681 823L714 834M313 815L363 830M715 763L748 774M364 760L397 770M748 774L782 784M430 851L447 821M397 770L431 781M398 700L431 710M814 900L814 865M783 714L816 724M563 893L596 903M463 862L480 831M446 892L463 862M464 791L481 761M431 710L465 721M432 640L466 650M316 603L349 578M596 903L629 914M597 833L630 843M497 801L514 771M480 831L497 801M498 731L515 701M466 650L499 660M663 924L680 894M630 843L664 853M631 773L665 783M513 842L531 812M531 741L548 711M514 771L531 741M532 671L549 641M349 649L316 603M796 966L812 971M696 934L713 904M679 964L696 934M665 783L698 793M548 782L565 752M566 681L583 651M749 703L783 714M712 975L729 945M730 874L747 844M713 904L730 874M699 723L732 733M582 722L599 692M314 709L348 719M746 915L764 885M765 814L782 784M479 902L513 912M397 841L380 800M349 649L382 659M781 855L798 825M799 754L816 724M430 851L414 811M815 794L816 759M446 892L430 851M464 791L448 751M666 712L699 723M480 831L464 791M498 731L482 690M663 924L647 884M697 864L714 834M514 771L498 731M532 671L516 630M679 964L663 924M731 804L748 774M446 892L479 902M713 904L697 864M766 744L783 714M480 831L513 842M514 771L548 782M383 589L416 599M679 964L712 975M713 904L746 915M629 914L613 873M548 711L532 671M616 662L649 672M315 638L349 649M397 841L430 851M697 864L681 823M349 578L383 589M747 844L731 804M313 850L313 815M314 744L348 719M315 674L349 649M731 804L715 763M782 784L766 744M347 790L364 760M365 689L382 659M766 744L749 703M548 711L582 722M465 721L449 680M530 882L547 852M498 731L531 741M381 730L398 700M399 629L416 599M583 651L616 662M546 923L563 893M499 660L483 620M564 822L581 792M532 671L566 681M415 670L432 640M747 844L781 855M664 853L648 813M580 863L597 833M782 784L815 794M698 793L682 753M614 803L631 773M431 781L464 791M314 780L314 744M779 996L796 966M648 743L666 712M348 719L365 689M813 936L814 900M513 912L530 882M382 659L399 629M496 872L513 842M315 674L315 638M366 619L383 589M547 852L564 822M629 914L663 924M531 812L548 782M581 792L598 762M363 830L397 841M565 752L582 722M729 945L746 915M599 692L616 662M764 885L781 855M632 702L649 672M798 825L815 794M465 721L498 731M479 902L463 862M499 660L532 671M348 719L315 674M513 912L496 872M664 853L697 864M382 659L366 619M366 619L349 578M698 793L731 804M547 852L531 812M531 812L514 771M314 780L347 790M745 985L763 955M581 792L565 752M732 733L766 744M615 732L632 702M565 752L548 711M348 719L381 730M780 925L797 895M729 945L713 904M513 912L546 923M683 682L716 693M599 692L583 651M382 659L415 670M814 865L814 830M764 885L747 844M547 852L580 863M463 862L447 821M416 599L449 610M316 603L316 568M380 871L397 841M798 825L782 784M581 792L614 803M497 801L481 761M414 811L431 781M816 759L816 724M513 842L497 801M531 741L515 701M448 751L465 721M696 934L680 894M548 782L531 741M566 681L549 641M482 690L499 660M712 975L696 934M730 874L714 834M582 722L566 681M346 860L363 830M745 985L729 945M746 915L730 874M765 814L748 774M313 815L347 790M615 732L599 692M513 842L547 852M780 925L764 885M781 855L765 814M799 754L783 714M364 760L381 730M548 782L581 792M814 865L798 825M815 794L799 754M712 975L745 985M398 700L415 670M582 722L615 732M563 893L580 863M745 985L779 996M746 915L780 925M432 640L449 610M615 732L648 743M597 833L614 803M780 925L813 936M781 855L814 865M649 672L683 682M430 851L463 862M631 773L648 743M796 966L813 936M463 862L496 872M464 791L497 801M316 603L366 619M346 860L313 815M497 801L531 812M380 800L397 770M663 924L696 934M531 741L565 752M414 740L431 710M696 934L729 945M579 933L596 903M566 681L599 692M449 680L466 650M730 874L764 885M613 873L630 843M346 860L380 871M432 640L416 599M765 814L798 825M648 813L665 783M666 712L683 682M812 1006L812 971M799 754L816 759M682 753L699 723M631 773L615 732M314 744L314 709M347 790L314 744M365 689L349 649M530 882L513 842M380 800L364 760M381 730L365 689M399 629L383 589M546 923L530 882M697 864L730 874M564 822L548 782M598 762L615 732M414 740L398 700M415 670L399 629M313 850L346 860M763 955L780 925M579 933L563 893M731 804L765 814M580 863L564 822M449 680L432 640M347 790L380 800M797 895L814 865M613 873L597 833M766 744L799 754M614 803L598 762M380 800L414 811M381 730L414 740M779 996L763 955M648 813L631 773M666 712L649 672M648 743L632 702M546 923L579 933M1110 747L1100 725M873 829L893 812M1110 685L1100 663M874 767L894 749M862 932L872 892M1032 630L1022 607M1032 567L1022 545M971 868L991 851M971 806L991 788M922 880L912 857M894 749L913 732M894 687L914 670M1052 550L1042 528M991 788L1011 771M992 726L1012 709M914 670L934 653M1090 764L1110 747M1012 709L1031 692M1012 647L1032 630M1032 630L1051 612M982 704L973 681M813 912L843 886M814 849L844 824M1080 742L1071 719M1052 550L1072 533M1002 624L993 602M844 824L864 806M1100 663L1091 640M941 863L961 845M872 954L882 914M883 852L893 812M864 744L884 727M1111 592L1111 561M962 783L982 766M892 874L902 835M815 818L815 787M885 664L904 647M816 755L816 724M913 795L923 755M835 738L846 698M1011 833L1021 794M933 715L943 675M1001 811L1011 771M1031 754L1041 714M953 698L963 658M953 636L964 596M842 949L853 909M1051 675L1061 635M973 619L983 579M922 880L941 863M863 869L873 829M1071 657L1081 618M845 761L864 744M852 971L842 949M942 800L962 783M883 789L894 749M1091 578L1101 539M865 681L885 664M981 828L991 788M872 954L862 932M883 852L873 829M872 892L863 869M962 721L982 704M903 772L913 732M904 710L914 670M1111 499L1111 468M1060 759L1080 742M991 851L1001 811M1001 749L1012 709M892 874L883 852M982 704L1002 686M893 812L883 789M983 641L1002 624M924 693L934 653M1080 742L1100 725M1081 680L1100 663M1021 731L1031 692M1011 771L1021 731M1022 669L1032 630M913 795L903 772M1002 624L1022 607M1003 562L1022 545M913 732L904 710M934 653L944 613M852 971L872 954M1011 833L1001 811M1100 663L1110 654M1101 601L1111 592M1041 652L1051 612M1031 692L1041 652M1042 590L1052 550M933 715L924 693M1022 545L1042 528M872 954L891 937M872 892L892 874M812 975L813 943M1031 754L1021 731M1061 573L1072 533M1051 612L1061 573M953 636L944 613M892 874L912 857M842 949L833 926M893 812L913 795M843 886L834 863M1051 675L1041 652M816 755L835 738M1071 595L1081 556M913 795L932 778M863 869L853 846M913 732L933 715M864 806L854 784M1091 516L1101 477M1011 833L1031 816M961 845L952 823M933 715L953 698M883 789L874 767M1031 754L1051 737M981 828L971 806M982 766L972 743M953 636L973 619M904 710L894 687M1051 675L1071 657M991 851L981 828M1001 749L992 726M1100 725L1090 702M1011 771L1001 749M1022 669L1012 647M934 653L924 630M1110 716L1110 685M1031 692L1022 669M1042 590L1032 567M814 881L814 849M1061 573L1052 550M1051 612L1042 590M991 851L1011 833M911 920L922 880M834 801L845 761M1071 595L1061 573M1011 771L1031 754M934 653L953 636M1091 516L1082 494M1031 692L1051 675M875 704L885 664M812 975L842 949M1051 612L1071 595M843 886L863 869M1071 595L1091 578M882 914L892 874M863 869L883 852M864 806L883 789M1110 654L1110 623M1091 516L1111 499M961 845L981 828M902 897L912 857M891 937L902 897M902 835L913 795M1072 533L1062 511M883 789L903 772M884 727L904 710M815 787L835 738M981 828L1001 811M982 766L1001 749M922 817L932 778M912 857L922 817M923 755L933 715M904 710L924 693M1021 794L1031 754M1001 749L1021 731M1002 686L1022 669M932 840L942 800M943 738L953 698M932 778L943 738M943 675L953 636M834 801L815 787M924 630L944 613M855 721L865 681M1100 725L1110 716M1041 776L1051 737M1031 816L1041 776M1022 669L1041 652M952 760L962 721M963 658L973 619M1072 533L1091 516M1050 799L1060 759M1061 697L1071 657M1051 737L1061 697M1042 590L1061 573M973 681L983 641M1012 647L1002 624M814 881L834 863M1071 719L1081 680M1081 618L1091 578M1062 511L1082 494M993 602L1003 562M911 920L931 902M862 932L853 909M834 801L854 784M1091 640L1101 601M1101 539L1111 499M904 647L924 630M882 914L872 892M1111 561L1111 530M891 937L882 914M902 835L893 812M1022 607L1042 590M912 857L902 835M923 755L913 732M1021 794L1011 771M1041 714L1051 675M932 778L923 755M943 675L934 653M1031 816L1021 794M1061 635L1071 595M891 937L911 920M1051 737L1041 714M1081 556L1091 516M912 857L932 840M932 778L952 760M855 721L875 704M1031 816L1050 799M835 738L816 724M1051 737L1071 719M1001 811L991 788M1042 528L1062 511M953 698L943 675M993 602L1012 584M815 818L834 801M862 932L882 914M973 619L964 596M1041 714L1031 692M1071 657L1061 635M835 738L855 721M812 1006L812 975M813 912L834 863M814 849L834 801M1061 635L1051 612M1091 578L1081 556M833 926L843 886M844 824L854 784M816 724L846 698M1081 556L1072 533M953 698L973 681M903 772L894 749M941 863L952 823M1111 499L1101 477M923 755L943 738M853 846L864 806M864 744L875 704M973 619L993 602M951 885L961 845M924 693L914 670M962 783L972 743M943 675L963 658M874 767L884 727M1071 657L1091 640M1021 731L1012 709M971 806L982 766M964 596L983 579M894 687L904 647M1091 578L1111 561M1041 652L1032 630M992 726L1002 686M883 852L902 835M813 943L813 912M1090 764L1100 725M1012 647L1022 607M834 863L844 824M1110 685L1110 654M931 902L941 863M1032 567L1042 528M854 784L864 744M922 880L932 840M814 849L815 818M845 761L855 721M952 823L962 783M1001 811L1021 794M942 800L952 760M972 743L982 704M842 949L862 932M962 721L973 681M1060 759L1071 719M983 641L993 602M1081 680L1091 640M1002 624L1012 584M1101 601L1111 561M903 772L923 755M911 920L902 897M834 863L814 849M924 693L943 675M931 902L922 880M1021 731L1041 714M944 613L964 596M854 784L845 761M845 761L835 738M1041 652L1061 635M952 823L942 800M875 704L865 681M942 800L932 778M813 943L833 926M1070 782L1080 742M1061 573L1081 556M972 743L962 721M992 664L1002 624M962 721L953 698M834 863L853 846M1090 702L1100 663M1082 494L1101 477M1060 759L1051 737M931 902L951 885M1012 584L1022 545M1032 567L1052 550M983 641L973 619M854 784L874 767M1110 623L1111 592M1081 680L1071 657M952 823L971 806M902 897L892 874M875 704L894 687M852 971L862 932M815 787L816 755M1101 601L1091 578M972 743L992 726M922 817L913 795M872 892L883 852M1111 530L1111 499M932 840L922 817M943 738L933 715M855 721L846 698M893 812L903 772M1041 776L1031 754M952 760L943 738M963 658L953 636M913 732L924 693M1050 799L1041 776M1061 697L1051 675M973 681L963 658M832 989L842 949M1070 782L1060 759M1071 719L1061 697M1081 618L1071 595M812 975L833 926M992 664L983 641M993 602L983 579M932 840L952 823M1090 702L1081 680M1091 640L1081 618M1101 539L1091 516M843 886L853 846M1012 584L1003 562M952 760L972 743M1110 623L1101 601M1111 561L1101 539M1050 799L1070 782M864 806L874 767M973 681L992 664M961 845L971 806M1070 782L1090 764M1071 719L1090 702M884 727L894 687M992 664L1012 647M982 766L992 726M1090 702L1110 685M1091 640L1110 623M1012 584L1032 567M882 914L902 897M1002 686L1012 647M1100 725L1110 685M902 897L922 880M902 835L922 817M815 787L845 761M832 989L812 975M922 817L942 800M853 909L863 869M846 698L865 681M1021 794L1041 776M943 738L962 721M873 829L883 789M1041 776L1060 759M971 868L981 828M963 658L983 641M894 749L904 710M1061 697L1081 680M991 788L1001 749M983 579L1003 562M914 670L924 630M832 989L852 971M884 727L875 704M1081 618L1101 601M1012 709L1022 669M1022 607L1032 567M1110 747L1110 716M1101 539L1111 530M1032 630L1042 590M1002 686L992 664M813 912L814 881M1052 550L1062 511M833 926L813 912M844 824L834 801M1072 533L1082 494M941 863L932 840M853 909L843 886M853 846L844 824M864 744L855 721M951 885L941 863M1041 714L1061 697M962 783L952 760M982 704L992 664M873 829L864 806M874 767L864 744M812 1006L832 989M1080 742L1090 702M971 868L961 845M1061 635L1081 618M971 806L962 783M894 749L884 727M894 687L885 664M833 926L853 909M1100 663L1110 623M991 788L982 766M992 726L982 704M1081 556L1101 539M914 670L904 647M853 909L872 892M853 846L873 829M1090 764L1080 742M1012 709L1002 686M1022 607L1012 584M1101 477L1111 468M951 885L971 868M819 630L810 644M845 432L846 422M934 477L934 481M934 501L941 497M507 627L526 607M873 455L885 455M681 560L680 576M827 506L829 509M883 521L873 522M795 526L792 521M814 525L805 528M570 647L602 657M728 557L718 549M1074 500L1084 491M747 553L747 546M398 549L430 535M685 613L699 629M870 503L863 502M1084 491L1095 482M500 409L481 425M798 578L802 589M724 460L716 453M839 610L822 619M939 526L927 525M869 518L878 518M916 466L906 463M782 391L786 408M1003 543L987 548M908 590L899 586M868 528L869 531M860 530L863 533M974 482L961 476M481 425L462 441M908 541L906 545M844 552L848 557M783 542L781 535M910 532L908 528M773 423L743 417M669 499L654 508M890 469L885 473M953 533L965 531M862 461L871 461M831 500L823 500M840 565L831 568M704 377L686 354M791 600L778 595M817 461L818 455M755 502L762 499M925 467L927 471M952 472L959 465M1058 500L1060 488M707 643L671 653M887 554L891 558M809 373L773 377M798 501L795 504M849 490L855 489M866 471L872 475M974 482L982 487M872 676L835 662M699 629L707 643M723 424L724 409M961 495L965 501M872 547L874 551M924 520L916 516M934 538L933 543M937 552L945 553M964 460L959 465M787 497L794 498M961 495L957 500M933 488L939 487M768 533L767 529M930 446L919 451M1022 493L1037 487M785 514L782 518M947 562L947 557M904 520L912 524M943 444L953 449M841 556L844 552M964 511L960 515M996 511L1007 509M977 459L969 467M781 508L785 510M777 538L769 538M814 582L824 585M889 528L893 524M721 395L704 377M934 501L934 504M860 530L856 534M881 537L876 540M655 482L654 470M876 596L885 602M1039 530L1025 526M809 565L800 562M1023 544L1015 539M1046 480L1063 474M583 553L556 544M850 476L847 472M881 463L884 469M942 588L926 582M898 555L900 552M840 565L846 567M836 510L829 509M749 533L753 524M928 553L931 556M881 445L893 438M947 426L932 421M987 523L997 529M832 539L827 535M544 561L556 544M628 571L604 576M745 653L706 664M1015 539L1003 543M1046 480L1037 487M838 561L832 556M824 528L831 528M888 500L896 495M703 415L688 398M687 542L698 538M819 509L829 509M827 506L833 503M767 551L747 553M430 535L395 532M933 543L937 541M880 610L872 604M740 530L728 532M785 472L781 476M934 477L927 482M830 472L825 469M945 534L953 537M876 596L878 587M468 515L497 505M927 482L934 481M724 445L733 453M739 497L746 500M819 577L831 574M773 423L785 432M973 489L979 494M902 534L891 532M350 539L395 532M731 564L741 560M766 486L778 482M837 491L839 488M816 556L818 560M792 559L785 563M891 536L890 540M761 526L753 524M664 529L650 543M852 507L854 503M889 571L884 567M766 472L781 476M686 437L682 448M885 618L907 627M837 491L845 492M885 602L880 610M880 477L885 473M545 583L491 598M982 487L989 491M961 488L961 482M717 585L732 596M869 492L861 490M889 571L885 576M693 500L708 508M1015 498L1031 503M705 548L687 542M579 428L546 414M1088 461L1060 463M778 566L785 563M869 563L864 561M637 551L614 554M927 510L933 515M776 528L776 524M806 498L815 499M753 496L743 493M954 457L953 449M792 521L797 519M796 471L802 474M887 554L884 557M909 476L911 472M950 507L951 503M996 495L1006 493M817 461L813 466M747 436L750 427M921 497L925 500M1023 544L1003 543M914 423L908 414M790 448L783 457M972 556L960 560M728 557L731 564M814 572L822 570M894 564L884 567M933 488L926 492M914 483L920 480M858 551L861 555M814 525L818 520M899 467L897 462M1016 551L1000 551M868 437L881 445M634 667L665 677M783 522L788 517M948 511L940 510M832 539L825 540M544 561L484 556M818 477L823 480M837 523L830 523M644 455L654 470M960 540L953 537M764 597L768 586M1107 471L1111 468M933 569L940 573M933 569L941 566M847 518L842 521M1022 459L1033 465M484 556L440 552M860 481L857 485M924 520L918 522M481 538L512 547M1063 474L1060 488M792 475L796 471M796 513L785 510M968 473L959 465M1047 493L1037 487M444 457L425 474M868 528L874 529M828 496L837 491M800 532L797 530M750 427L763 433M881 493L875 491M803 557L809 554M737 506L747 506M743 475L733 482M847 482L846 478M898 475L904 472M685 613L662 620M756 510L767 513M859 498L863 494M896 471L885 473M614 554L643 561M853 692L820 693M920 483L920 480M832 441L828 433M800 532L805 528M858 601L840 603M911 519L916 516M832 468L841 471M879 564L877 559M940 492L941 497M750 576L736 571M847 465L846 469M733 578L736 571M914 423L932 421M804 392L773 377M942 588L954 593M849 523L854 526M980 505L984 498M387 506L413 519M881 537L890 540M779 451L771 457M703 415L666 409M771 573L760 564M877 579L875 574M942 545L940 549M1043 459L1044 472M739 497L743 493M953 483L961 482M981 529L970 528M785 486L797 488M786 408L787 417M867 579L877 579M691 516L672 511M831 568L831 574M813 450L810 443M628 571L644 582M857 514L851 511M920 490L912 486M891 399L891 410M813 450L805 453M889 482L882 482M430 535L440 552M844 440L845 432M951 573L940 573M947 562L960 560M816 724L835 708M785 486L790 481M756 515L767 513M778 566L782 573M976 525L974 521M869 531L874 529M839 546L843 549M957 500L954 496M698 538L703 531M816 485L810 484M820 438L832 441M766 518L776 519M1011 437L994 431M829 550L835 550M713 556L718 549M891 532L897 527M805 453L818 455M880 528L874 529M767 513L772 516M637 551L650 543M411 598L427 584M994 431L977 426M890 507L888 504M716 438L724 445M550 496L503 489M654 470L679 458M985 449L1002 455M866 471L863 476M759 463L748 469M979 494L984 498M855 398L829 398M994 431L983 441M783 526L789 528M798 480L802 474M902 534L891 536M1022 493L1006 493M749 485L733 482M768 524L758 519M737 537L728 532M813 450L822 447M899 467L890 469M794 508L796 513M878 485L874 488M827 559L831 562M940 492L939 487M811 543L805 547M840 463L841 457M757 558L747 566M842 589L843 596M912 486L901 488M537 376L552 397M665 550L650 543M1063 474L1060 463M977 426L972 434M832 547L835 550M816 556L823 553M758 547L768 546M880 451L873 455M829 426L811 429M959 465L954 457M614 593L580 585M736 547L718 549M701 456L682 448M635 442L655 435M757 558L760 564M914 543L924 544M805 535L797 536M889 528L880 528M895 548L887 549M891 558L898 555M796 513L788 517M872 407L891 410M888 487L889 493M644 582L604 576M878 485L883 490M924 549L919 547M637 504L654 508M842 541L850 538M398 549L367 561M644 455L635 442M792 459L777 461M877 569L875 574M840 603L826 602M444 457L475 475M1082 472L1075 482M348 578L367 561M932 548L933 543M809 554L816 551M742 447L733 453M778 499L784 503M743 511L729 510M781 535L781 531M959 549L967 547M908 598L908 590M881 493L884 495M776 519L772 516M923 570L934 578M942 545L954 544M798 464L792 459M719 502L708 508M720 614L718 603M800 524L797 519M908 434L895 426M473 493L497 505M857 514L851 515M878 459L873 455M863 494L855 494M768 479L756 473M934 477L943 476M755 502L759 506M829 594L824 585M1027 473L1022 483M895 501L904 497M883 509L882 504M911 519L918 522M839 610L840 603M779 451L770 446M775 513L785 510M649 634L662 620M736 547L747 546M880 451L885 455M962 526L960 521M758 547L747 546M737 537L736 547M903 501L904 497M951 541L953 537M703 426L703 415M996 486L1006 493M731 475L743 475M804 408L787 417M868 437L859 442M912 447L909 453M741 585L732 596M934 538L937 541M832 547L836 542M921 514L914 511M908 598L921 592M810 550L809 554M1043 459L1033 465M877 579L888 584M870 503L876 505M928 560L931 556M718 477L718 467M877 496L875 491M885 432L880 438M720 614L723 627M810 417L795 425M893 524L886 524M961 476L961 482M1008 522L1016 530M1095 482L1082 472M1058 500L1047 493M940 454L954 457M810 550L805 547M837 527L831 528M960 585L954 593M857 573L844 571M818 477L830 477M720 515L708 508M1020 510L1005 516M914 543L908 541M924 544L916 540M832 488L837 491M809 532L800 532M939 487L933 492M906 553L901 547M920 506L911 503M968 473L975 477M778 482L776 488M974 482L985 479M812 475L802 474M822 570L819 577M996 486L1012 488M1048 448L1031 451M784 503L787 508M878 459L885 455M1107 471L1082 472M874 488L875 491M833 503L840 507M803 557L800 562M945 522L939 526M932 548L924 549M858 551L854 555M879 555L877 559M808 436L795 425M904 472L907 468M759 506L767 508M842 589L824 585M979 514L970 515M953 533L953 537M924 528L915 527M941 482L939 487M873 508L875 511M880 451L897 449M869 484L868 479M919 547L924 544M764 597L751 592M817 540L810 536M879 524L873 522M681 560L665 550M841 457L828 453M865 510L875 511M853 692L872 676M599 387L594 361M974 482L968 485M921 592L923 601M847 482L853 481M701 456L718 467M844 440L851 446M839 546L842 541M626 364L649 350M865 506L870 503M869 554L877 559M805 467L796 471M965 518L970 515M778 566L767 559M550 496L540 481M1003 501L1006 493M855 398L855 412M931 507L927 510M782 573L793 573M707 643L706 664M963 505L964 511M837 515L844 513M941 482L946 485M847 562L846 567M946 462L939 466M888 487L882 482M868 437L885 432M666 328L649 350M879 473L872 475M837 523L843 526M747 628L732 638M481 538L484 556M806 674L820 693M767 513L774 509M665 600L638 605M804 517L797 519M782 492L792 493M842 644L810 644M972 448L983 441M649 350L666 366M882 532L889 528M896 495L889 493M758 530L767 529M597 510L598 523M931 556L947 557M869 499L877 496M954 457L963 452M947 562L941 566M853 481L858 478M789 524L783 526M1068 454L1060 463M786 552L792 559M896 471L904 472M902 494L901 488M747 463L733 453M912 447L930 446M878 587L888 584M849 533L841 532M883 521L885 518M776 615L792 621M986 509L998 506M593 327L628 334M840 503L840 507M581 567L580 585M413 519L430 502M797 552L803 557M493 462L475 475M787 497L781 496M863 450L873 447M602 657L610 636M869 499L863 494M934 501L929 495M971 537L960 540M818 512L826 512M827 506L819 509M854 526L847 529M804 517L811 521M791 532L797 536M753 496L761 490M638 605L605 611M961 488L954 487M855 489L855 494M914 483L912 486M856 466L862 461M840 565L847 562M818 520L821 524M920 506L917 501M773 496L773 503M800 655L835 662M776 519L768 524M1025 526L1025 517M877 496L884 495M808 459L818 455M316 568L331 555M950 608L960 599M570 512L577 497M788 517L782 518M891 518L900 517M990 540L987 548M893 476L885 473M868 528L861 524M880 451L893 444M909 404L891 410M839 476L841 471M924 520L926 516M965 531L973 532M926 410L932 421M852 507L858 506M896 514L906 512M791 532L781 531M917 439L930 446M783 522L782 518M960 599L941 596M917 501L911 503M348 578L331 555M940 510L942 507M741 585L755 583M879 499L884 495M858 629L876 627M743 475L756 473M785 486L776 488M901 547L892 544M941 596L923 601M803 489L813 489M789 490L782 492M1044 472L1060 463M831 568L831 562M931 535L939 532M992 471L991 462M918 456L928 454M898 555L899 560M940 510L933 515M704 377L736 366M768 524L767 529M888 465L897 462M921 497L917 501M756 515L756 510M1008 467L991 462M694 465L673 471M810 495L815 499M944 504L942 507M835 662L865 656M883 509L876 505M671 653L636 649M732 596L704 596M785 472L785 467M731 488L743 493M473 493L475 475M876 470L875 466M840 503L846 505M886 562L891 558M768 479L781 476M789 501L795 504M822 466L831 463M809 532L816 532M923 462L907 458M925 500L917 501M906 512L900 517M914 511L906 512M913 563L908 570M964 460L963 452M884 557L877 559M797 544L798 548M967 543L971 537M686 437L655 435M832 468L825 469M673 538L664 529M608 477L581 462M948 511L958 509M934 477L923 477M779 439L770 446M762 499L773 496M792 559L800 562M720 515L706 515M845 486L855 489M850 476L858 478M718 477L701 474M703 415L724 409M869 499L870 503M748 469L756 473M507 627L538 637M946 499L951 503M766 486L768 479M840 582L830 579M837 523L832 520M953 483L954 487M903 501L895 504M649 634L635 621M858 510L851 511M920 506L920 509M885 618L862 618M1065 508L1074 500M947 495L950 491M819 577L798 578M441 569L398 549M948 511L942 507M969 592L960 585M647 493L623 487M669 499L647 493M860 429L855 436M773 503L774 509M820 438L828 433M842 498L834 498M741 585L751 592M824 528L830 523M518 392L500 409M928 454L930 446M818 512L822 515M776 528L767 529M820 496L819 491M702 579L680 576M834 498L840 494M845 486L857 485M802 509L795 504M858 594L858 585M920 576L909 577M468 515L430 502M820 502L819 509M873 455L873 447M865 466L875 466M880 477L879 473M888 500L888 504M773 467L766 472M767 508L767 513M717 585L702 579M691 516L706 515M911 519L912 524M824 528L821 524M837 527L841 532M544 561L545 583M933 515L926 516M931 535L923 538M766 409L786 408M901 547L899 543M732 638L723 627M671 653L706 664M877 579L885 576M800 524L805 528M742 447L724 445M967 523L960 521M425 474L475 475M761 526L758 530M721 395L724 409M889 528L891 532M919 472L925 467M944 541L951 541M945 553L948 549M750 576L747 566M844 552L852 551M770 580L759 570M895 548L885 546M642 532L650 543M761 526L768 524M835 662L838 678M830 477L822 474M890 507L889 511M766 518L758 519M827 559L818 560M350 539L367 561M697 687L729 697M948 530L939 532M729 510L708 508M854 568L844 571M779 439L758 442M879 545L868 544M719 502L708 497M705 548L698 538M869 484L866 487M785 432L795 442M729 697L761 707M841 484L839 488M1088 461L1068 454M626 364L594 361M937 561L925 565M858 551L865 547M810 510L812 514M785 514L785 510M1068 454L1048 448M406 490L387 506M765 503L759 506M829 594L826 602M940 492L950 491M591 537L556 544M798 480L792 475M961 495L971 495M778 482L781 476M804 539L797 536M775 513L772 516M872 514L875 511M387 506L369 522M701 456L716 453M931 507L920 506M773 542L777 538M976 547L980 539M872 407L866 420M809 373L804 392M965 531L970 528M818 512L812 514M901 547L895 548M891 399L872 407M977 459L980 465M591 537L614 554M732 596L748 600M833 459L841 457M906 563L899 560M954 478L943 476M881 445L880 438M908 434L904 443M958 509L960 515M908 490L912 486M774 605L754 616M810 550L816 551M796 513L797 519M845 486L841 484M746 540L736 547M940 492L929 495M860 540L850 538M869 554L865 551M945 534L948 530M818 512L810 510M911 537L917 532M908 570L923 570M908 506L901 506M829 550L826 546M895 548L893 551M878 459L881 463M776 528L783 526M865 466L871 461M923 462L918 456M737 537L746 540M732 638L767 646M842 498L849 496M1003 501L1014 504M806 477L812 475M816 528L821 524M430 502L443 487M896 495L895 501M786 408L804 392M1046 480L1044 472M896 520L904 520M634 318L628 334M946 435L972 434M832 488L839 488M804 517L802 513M985 449L991 462M1029 442L1031 451M888 500L879 499M695 490L717 491M430 535L468 515M961 488L957 491M904 484L914 483M945 522L937 522M953 483L941 482M953 567L941 566M883 521L891 518M905 558L898 555M796 484L797 488M831 463L840 463M943 471L936 473M708 497L723 496M756 478L768 479M859 498L854 503M996 486L1002 476M867 523L859 519M815 499L823 500M822 409L839 411M526 607L570 605M927 525L930 522M996 495L984 498M790 448L792 459M758 530L755 537M660 385L627 395M811 547L805 547M796 484L790 481M810 550L811 547M946 580L940 573M859 442L855 436M1058 500L1045 504M934 477L936 473M1037 513L1025 517M876 596L858 601M773 467L785 472M868 528L875 526M961 488L973 489M947 426L972 434M876 533L874 529M633 474L608 477M920 480L909 480M906 563L897 567M879 545L880 549M571 478L540 462M793 636L767 646M927 510L940 510M673 471L682 480M747 553L736 547M919 472L927 471M908 490L902 494M761 707L750 684M831 568L844 571M766 518L767 513M916 476L911 472M794 508L787 508M896 520L900 517M825 532L827 535M956 554L948 549M867 579L869 584M822 487L818 482M957 491L950 491M961 476L975 477M702 560L696 568M909 476L904 472M797 552L792 559M840 603L858 609M990 540L999 536M959 535L960 540M883 509L890 507M898 475L909 476M822 466L817 471M939 526L930 522M806 674L782 687M906 525L908 528M954 478L961 482M911 537L916 540M825 532L834 531M835 708L820 693M979 514L976 510M847 482L845 486M830 523L837 527M779 439L763 433M817 461L822 466M845 432L828 433M655 482L673 471M887 479L893 476M819 491L810 495M832 468L839 467M707 643L676 639M1022 493L1031 503M817 540L811 543M944 541L953 537M953 567L947 562M911 551L906 553M915 559L921 558M792 521L788 517M768 479L758 483M812 475L817 471M803 489L797 488M855 563L846 567M802 513L812 514M889 571L877 569M806 674L838 678M999 536L1015 539M727 542L712 542M887 554L880 549M941 482L954 478M1003 543L1000 551M644 582L614 593M886 562L884 567M790 448L795 442M1060 488L1037 487M728 557L736 547M944 504L951 503M851 542L850 538M860 540L855 545M771 671L782 687M901 509L896 514M761 707L793 717M857 573L844 576M880 549L887 549M926 541L916 540M719 502L730 501M914 507L911 503M700 446L682 448M819 547L823 553M637 551L665 550M915 559L913 563M1065 508L1045 504M793 717L816 724M672 511L654 508M894 592L885 602M1048 448L1029 442M1031 537L1016 530M795 425L787 417M776 528L768 533M944 541L938 536M895 456L897 449M581 567L545 583M931 535L923 532M814 525L816 528M473 493L430 502M854 526L843 526M853 558L854 555M849 490L839 488M818 477L822 474M822 409L804 408M886 562L877 559M1029 442L1011 437M805 569L800 562M399 572L427 584M369 522L350 539M924 520L927 525M906 553L905 558M927 471L923 477M655 482L623 487M829 426L810 417M881 417L895 426M805 453L801 447M635 442L598 448M350 539L331 555M903 648L865 656M802 589L817 591M811 547L811 543M837 515L830 517M911 537L899 538M965 531L971 537M746 397L721 395M909 476L909 480M696 568L680 576M881 513L885 518M849 533L850 538M908 506L911 503M810 559L816 556M526 607L550 619M540 481L540 462M868 528L867 523M775 513L774 509M939 487L934 481M885 602L905 607M614 593L604 576M842 644L867 642M860 481L868 479M894 592L878 587M829 398L804 392M986 509L976 510M798 501L794 498M693 508L672 511M860 429L866 420M538 432L560 443M841 457L851 460M906 553L915 554M996 511L998 506M895 504L895 501M907 627L876 627M976 547L967 547M937 561L947 557M823 480L818 482M685 613L665 600M869 535L863 533M593 327L612 348M834 534L827 535M885 618L880 610M921 497L910 498M881 493L889 493M791 532L797 530M806 477L802 474M705 524L679 523M934 501L946 499M509 526L538 512M902 494L896 495M827 506L831 500M810 502L815 499M901 530L897 527M819 630L842 644M999 536L1003 543M834 534L834 531M959 440L943 444M1022 459L1031 451M876 470L884 469M761 490L758 483M791 532L781 535M798 464L808 459M708 497L717 491M844 510L846 505M991 502L998 506M655 435L622 426M749 485L756 478M413 519L395 532M822 474L812 475M752 490L743 493M903 648L916 637M931 507L934 504M822 447L828 453M964 460L954 457M885 518L891 518M924 528L931 529M853 470L859 470M921 497L915 495M934 469L939 466M785 510L787 508M840 603L843 596M926 410L909 404M946 462L943 471M934 459L928 454M1107 471L1088 461M784 503L795 504M771 457L777 461M844 576L844 571M960 515L960 521M538 637L550 619M888 500L884 495M916 466L907 468M881 537L869 535M1063 474L1075 482M614 593L638 605M855 548L855 545M933 492L926 492M817 461L825 460M934 477L941 482M760 564L747 566M959 549L948 549M976 547L989 555M932 440L946 435M916 516L906 512M797 552L790 549M945 516L943 513M892 544L885 546M842 589L840 582M807 505L810 502M942 588L946 580M851 542L855 545M987 523L988 517M1008 522L1005 516M953 567L969 570M990 540L1003 543M822 447L832 441M494 577L441 569M1015 498L1014 504M937 522L939 526M820 496L815 499M660 385L666 366M928 553L932 548M869 570L875 574M802 493L810 495M903 501L901 506M731 475L718 467M866 471L865 466M782 391L773 377M841 556L838 561M790 448L779 451M906 463L897 462M837 480L839 476M705 524L706 515M895 548L900 552M834 483L841 484M965 501L976 500M819 577L830 579M880 451L873 447M980 539L967 543M796 484L802 483M666 409L641 414M812 605L791 600M832 488L822 487M716 438L730 432M916 466L925 467M664 568L628 571M855 489L857 485M802 493L806 498M851 454L864 457M1047 523L1037 513M724 460L701 456M841 450L841 457M855 412L846 422M882 532L881 537M858 601L858 594M817 543L817 540M967 543L954 544M845 492L839 488M830 472L832 468M655 435L641 414M821 537L810 536M837 480L834 483M931 529L939 526M839 411L855 412M666 328L628 334M814 572L805 569M787 497L782 492M865 466L859 470M810 443L795 442M493 462L527 447M974 521L970 515M908 434L932 430M873 508L865 506M858 551L865 551M915 554L921 553M997 520L988 517M671 653L676 639M863 476L858 478M633 474L625 462M953 533L948 530M937 552L947 557M980 465L981 471M509 526L497 505M904 484L901 488M953 514L943 513M872 547L865 547M768 533L769 538M953 533L955 527M570 605L577 628M837 491L826 490M841 471L839 467M849 533L856 534M550 496L538 512M1005 516L1025 517M872 393L872 407M942 545L933 543M909 476L898 480M851 454L851 460M743 475L748 469M881 493L883 490M943 444L946 435M813 466L808 459M697 687L750 684M1003 501L991 502M854 503L846 501M926 504L925 500M819 491L826 490M989 491L984 498M750 576L759 570M807 595L802 589M888 487L878 485M841 532L834 531M786 552L776 552M891 558L899 560M481 538L440 552M906 463L907 468M743 417L724 409M716 453L724 445M746 397L749 379M767 551L768 546M719 502L723 496M914 507L920 509M803 489L810 484M1011 437L1011 447M724 460L733 453M863 450L859 442M908 570L909 577M847 562L848 557M890 507L895 504M681 560L682 550M649 634L671 653M649 350L612 348M1020 510L1025 517M816 532L825 532M787 497L778 499M717 532L705 524M881 445L893 444M959 535L965 531M841 556L832 556M849 523L855 522M625 462L598 448M928 553L921 558M796 484L803 489M633 474L654 470M902 534L899 538M638 515L616 516M896 471L890 469M862 618L858 609M665 677L671 653M562 530L509 526M1047 493L1022 493M796 513L802 509M885 618L876 627M664 520L672 511M811 547L816 551M762 499L773 503M822 619L819 630M770 580L755 583M869 484L874 488M571 478L577 497M926 410L914 423M743 511L756 510M855 578L840 582M807 595L826 602M882 504L876 505M861 555L865 551M1043 459L1031 451M921 525L915 527M824 528L816 528M831 463L839 467M840 565L844 571M929 626L940 617M686 437L700 446M753 496L746 500M950 608L926 612M743 511L732 517M686 354L736 366M591 537L583 553M800 655L806 674M822 619L792 621M911 551L921 553M758 530L753 524M940 617L950 608M814 572L809 565M910 547L919 547M891 399L872 393M562 530L570 512M768 586L751 592M793 636L792 621M687 542L673 538M960 540L951 541M825 540L827 535M764 597L778 595M909 583L899 586M874 551L880 549M872 393L852 387M795 567L800 562M756 478L743 475M678 489L655 482M837 515L847 518M921 497L926 492M708 497L708 508M972 448L959 440M792 521L789 524M917 439L932 440M664 451L654 470M724 460L735 467M857 514L864 514M704 596L685 613M773 542L768 546M614 554L583 553M880 477L872 475M783 522L776 524M685 531L703 531M862 566L869 570M822 487L816 485M903 501L911 503M840 463L839 467M878 518L873 522M960 585L946 580M914 511L914 507M822 409L829 418M921 592L941 596M859 474L859 470M920 576L934 578M625 462L581 462M807 505L814 505M746 540L756 541M905 558L915 554M481 538L430 535M905 607L910 615M939 466L943 471M783 542L780 548M747 463L748 469M869 518L873 522M844 552L837 553M965 518L967 523M956 554L947 557M776 615L774 605M806 674L771 671M724 445L730 432M864 457L871 461M965 518L960 515M747 436L758 442M837 553L835 550M992 471L980 465M749 518L753 524M719 523L706 515M708 497L693 500M907 458L895 456M908 541L916 540M691 516L705 524M999 536L997 529M911 537L919 535M1022 483L1008 482M848 546L843 549M866 487L855 489M1002 476L985 479M598 523L570 512M852 499L846 501M664 451L679 458M810 559L809 554M921 558L925 565M778 499L773 496M703 415L666 422M828 496L834 498M822 570L821 564M884 541L881 537M729 510L730 501M804 392L804 408M811 429L828 433M781 531L789 528M924 528L923 532M840 582L858 585M805 535L810 536M776 488L782 492M858 506L854 503M962 526L955 527M729 348L698 338M1008 467L1015 476M869 570L857 573M945 516L952 518M664 520L638 515M829 398L804 408M867 557L861 555M866 487L857 485M754 616L748 600M881 513L889 511M880 549L885 546M770 631L767 646M879 545L872 547M766 486L776 488M932 430L947 426M481 538L509 526M905 558L906 563M644 455L625 462M828 496L840 494M756 515L758 519M685 531L673 538M863 450L864 457M859 442L851 446M961 495L957 491M755 502L747 506M914 543L919 547M837 515L826 512M945 534L938 536M877 480L882 482M948 549L940 549M997 529L1016 530M844 552L835 550M638 605L662 588M824 585L830 579M860 540L851 542M747 628L723 627M857 514L858 510M575 344L612 348M916 466L923 462M861 536L869 535M837 480L841 484M746 397L743 417M937 552L931 556M897 580L900 574M874 488L883 490M855 563L847 562M820 438L811 429M605 611L577 628M654 470L625 462M956 505L963 505M795 567L805 569M923 477L920 480M664 451L635 442M500 409L546 414M717 574L717 564M818 477L811 480M822 487L827 483M840 582L824 585M869 492L877 496M907 458L909 453M1003 501L1007 509M605 611L610 636M883 509L875 511M953 514L952 518M885 518L878 518M933 492L929 495M797 552L798 548M928 553L924 549M655 482L647 493M999 536L989 534M844 576L830 579M441 569L440 552M768 586L770 580M859 474L858 478M509 526L512 547M842 498L852 499M731 475L735 467M879 564L884 567M869 531L869 535M865 506L858 506M852 507L858 510M951 573L946 580M701 456L700 446M858 551L855 548M996 511L986 509M839 546L835 550M622 426L579 428M749 533L737 537M933 488L929 486M798 480L796 484M693 508L669 499M898 480L889 482M996 486L982 487M784 581L768 586M693 508L706 515M868 437L860 429M778 482L785 486M750 427L730 432M425 474L406 490M844 440L832 441M747 436L763 433M879 555L884 557M503 489L473 493M933 488L933 492M927 482L920 480M920 490L933 488M821 537L825 532M839 610L862 618M867 579L875 574M818 482L810 484M649 634L610 636M666 422L641 414M730 501L723 496M783 457L771 457M878 459L890 459M980 505L991 502M864 561L861 555M920 490L915 495M896 520L900 523M991 502L986 509M888 487L897 491M808 436L811 429M781 535L790 536M747 628L767 646M875 466L881 463M991 502L996 495M829 594L843 596M811 429L810 417M900 574L897 567M961 488L968 485M931 529L923 532M1037 513L1045 504M684 586L665 600M807 524L811 521M699 482L720 484M562 530L556 544M916 466L919 472M793 539L797 536M985 449L983 441M968 564L960 560M705 548L712 542M1027 473L1046 480M899 467L896 471M1008 522L997 520M805 467L813 466M406 490L443 487M822 619L812 605M934 518L926 516M782 492L781 496M793 539L797 544M990 540L989 534M1011 447L1031 451M800 524L804 521M921 514L916 516M867 642L876 627M794 508L795 504M1056 516L1037 513M948 549L954 544M921 558L915 554M946 499L954 496M749 518L758 519M782 687L750 684M968 473L981 471M822 619L839 630M934 538L938 536M805 528L797 530M951 573L941 566M836 510L826 512M907 468L911 472M747 436L742 447M842 541L848 546M981 529L976 525M716 453L700 446M956 554L960 560M926 541L924 544M835 708L853 692M760 564L759 570M940 454L930 446M825 520L822 515M1015 498L1022 493M942 545L937 541M550 496L571 478M1060 488L1075 482M771 671L735 669M581 462L598 448M845 432L855 436M953 533L959 535M909 583L909 577M887 479L898 480M869 499L879 499M614 410L627 395M614 499L577 497M920 576L923 570M556 360L594 361M912 447L904 443M814 582L817 591M825 520L830 523M833 503L831 500M380 588L399 572M828 543L836 542M813 466L817 471M841 450L851 446M809 532L805 535M804 539L804 543M649 634L636 649M880 451L881 445M932 430L932 421M795 526L797 530M945 522L954 521M960 421L947 426M989 555L988 562M684 586L662 588M894 592L908 598M933 515L943 513M952 472L954 478M608 477L571 478M870 540L876 540M810 559L800 562M891 558L884 557M729 697L750 684M829 594L842 589M1015 539L1016 530M934 459L925 467M552 397L546 414M953 483L946 485M774 605L778 595M579 428L538 432M844 513L844 510M837 523L838 518M518 392L552 397M880 477L882 482M950 491L954 496M858 594L868 590M878 485L882 482M686 354L649 350M750 427L743 417M911 537L908 541M829 550L832 556M684 586L702 579M1003 501L996 495M786 552L797 552M598 448L579 428M666 409L660 385M746 397L782 391M845 486L839 488M785 472L796 471M816 532L821 537M871 461L881 463M866 487L869 492M911 551L919 547M923 570L933 569M917 439L904 443M499 439L538 432M789 501L794 498M869 531L863 533M946 499L941 497M647 493L637 504M860 429L877 425M822 515L812 514M920 576L926 582M959 440L953 449M759 463L771 457M853 530L854 526M924 528L927 525M842 644L835 662M790 591L802 589M797 488L792 493M583 553L544 561M959 465L969 467M934 469L943 471M794 611L791 600M825 532L831 528M599 387L627 395M1012 488L1006 493M622 426L641 414M921 497L929 495M860 481L858 478M921 525L918 522M926 504L917 501M774 605L791 600M912 447L897 449M909 453L897 449M628 334L612 348M771 573L782 573M821 537L817 540M840 503L831 500M673 538L650 543M890 507L901 506M760 450L771 457M750 427L723 424M756 478L756 473M727 542L718 549M881 493L877 496M812 605L826 602M768 533L755 537M830 517L826 512M945 522L947 526M717 574L702 579M731 525L743 524M773 542L783 542M844 513L851 511M857 514L859 519M731 488L723 496M475 475L443 487M903 648L891 637M925 500L929 495M635 621L610 636M810 510L802 513M959 535L953 537M644 582L638 605M808 491L803 489M862 544L865 547M896 514L889 511M860 429L846 422M896 495L897 491M598 448L622 426M865 510L858 510M765 503L762 499M694 465L718 467M1025 526L1016 530M786 552L778 558M798 464L796 471M961 476L952 472M817 540L825 540M793 539L789 544M822 466L825 469M926 612L923 601M868 479L872 475M961 488L961 495M773 467L785 467M822 570L831 574M719 523L732 517M755 502L753 496M750 576L755 583M844 571L846 567M540 481L493 462M881 513L878 518M810 644L800 655M814 525L821 524M846 501L846 505M665 677L706 664M973 489L982 487M792 559L803 557M731 475L733 482M958 509L963 505M979 514L988 517M915 527L908 528M1027 473L1008 467M885 518L888 515M980 539L989 534M866 487L874 488M876 596L858 594M614 554L604 576M920 490L926 492M830 523L821 524M875 526L873 522M883 509L873 508M905 558L899 560M929 626L910 615M910 498L917 501M945 534L939 532M696 568L717 564M901 509L901 506M791 532L790 536M823 480L830 477M863 502L854 503M960 515L952 518M817 543L828 543M908 598L885 602M837 480L833 475M921 514L927 510M855 412L866 420M852 507L846 505M665 550L682 550M729 348L686 354M888 504L895 504M837 480L846 478M835 662L806 674M462 441L499 439M916 476L909 480M867 579L857 573M872 676L888 661M881 417L891 410M666 409L688 398M822 474L817 471M732 596L751 592M934 477L927 471M989 491L1006 493M810 484L813 489M980 505L976 500M669 499L672 511M907 458L906 463M747 463L752 455M899 467L906 463M940 492L933 492M888 661L903 648M960 421L943 415M868 544L876 540M960 540L954 544M1008 557L1000 551M1046 480L1022 483M897 485L901 488M923 538L916 540M770 631L792 621M849 496L840 494M704 596L718 603M775 513L781 508M937 552L940 549M943 415L926 410M960 585L963 577M926 410L908 414M655 482L633 474M664 568L643 561M881 445L873 447M797 519L788 517M833 503L829 509M731 525L732 517M1001 564L988 562M931 529L927 525M484 556L512 547M637 504L614 499M481 538L468 515M819 630L792 621M798 501L789 501M869 584L868 590M678 489L647 493M810 510L802 509M614 593L605 611M866 420L877 425M985 449L972 448M955 527L960 521M904 520L906 516M694 465L701 474M909 404L908 414M768 533L781 535M704 596L665 600M901 530L891 532M945 522L952 518M878 459L871 461M934 469L936 473M757 558L741 560M830 472L830 477M783 522L789 524M941 497L929 495M970 506L965 501M753 496L762 499M413 519L468 515M664 451L682 448M942 545L948 549M830 517L822 515M760 450L770 446M896 514L900 517M637 504L623 487M986 509L988 517M758 547L756 541M855 412L872 407M979 494L976 500M890 540L899 543M961 495L954 496M1037 513L1031 503M804 539L810 536M906 553L898 555M908 434L914 423M662 620L676 639M834 498L831 500M807 524L805 528M635 621L662 620M844 513L847 518M802 509L802 513M883 509L881 513M580 585L570 605M903 501L910 498M924 549L924 544M1002 455L1011 447M829 550L832 547M802 493L808 491M967 543L967 547M812 475L811 480M915 495L902 494M793 717L835 708M716 438L703 426M767 551L758 547M831 463L833 459M798 501L807 505M899 543L906 545M831 380L809 373M919 472L911 472M731 488L717 491M792 475L790 481M737 608L732 596M888 487L889 482M660 385L626 364M923 462L906 463M820 502L815 499M932 440L930 446M540 462L493 462M816 556L809 554M839 476L850 476M849 533L847 529M717 585L704 596M802 493L798 495M1007 509L1014 504M921 514L920 509M873 508L865 510M782 391L804 392M853 470L847 472M575 344L594 361M822 409L829 398M752 490L761 490M879 499L877 496M348 578L399 572M704 596L702 579M891 637L876 627M856 466L851 460M791 532L789 528M581 567L544 561M747 506L746 500M897 485L904 484M918 456L919 451M882 532L876 533M797 536L790 536M789 501L787 497M602 657L636 649M1074 500L1058 500M691 516L679 523M840 463L833 459M829 594L817 591M844 440L828 433M996 486L985 479M847 518L851 515M953 514L960 515M865 547L865 551M959 440L972 434M664 451L644 455M786 552L780 548M907 627L891 637M832 488L826 490M838 518L842 521M867 557L864 561M870 540L861 536M538 432L527 447M858 594L843 596M718 467L701 474M805 453L792 459M885 618L905 607M1043 459L1060 463M809 565L818 560M942 507L934 504M934 501L944 504M808 436L785 432M760 450L758 442M841 535L841 532M879 555L887 554M781 508L784 503M664 520L642 532M747 436L724 445M731 488L733 482M853 692L838 678M749 518L743 524M926 504L920 506M934 459L940 454M717 532L728 532M763 433L758 442M911 551L924 549M837 480L847 482M904 520L906 525M862 566L857 573M904 443L893 438M842 589L858 594M845 492L840 494M784 581L770 580M951 573L963 577M834 483L839 488M705 524L685 531M972 448L963 452M822 447L832 446M979 494L982 487M807 505L795 504M781 508L774 509M778 499L773 503M939 526L939 532M931 535L931 529M879 555L869 554M783 457L777 461M626 364L627 395M992 471L985 479M761 526L767 529M846 469L839 467M696 568L702 579M847 472L841 471M876 533L869 531M764 597L774 605M540 462L527 447M990 540L980 539M895 456L890 459M783 542L790 536M917 532L919 535M757 558L767 559M864 514L858 510M731 564L736 571M688 398L660 385M868 479L863 476M749 533L758 530M916 637L929 626M910 498L904 497M983 441L1011 447M843 526L847 529M951 541L954 544M619 528L616 516M798 464L785 467M896 520L891 518M841 535L842 541M810 417L787 417M644 582L662 588M943 415L947 426M909 404L891 399M783 522L783 526M752 490L758 483M895 548L892 544M971 537L973 532M699 629L676 639M732 517L729 510M945 553L956 554M807 595L791 600M921 525L912 524M821 564L831 562M917 439L932 430M750 576L770 580M783 522L792 521M948 530L947 526M824 528L816 532M944 504L934 504M688 398L704 377M932 430L946 435M976 547L987 548M695 490L678 489M795 442L801 447M888 465L890 469M982 487L968 485M823 553L832 556M776 488L771 491M804 521L797 519M924 520L921 525M996 486L1008 482M752 455L771 457M987 523L976 525M956 505L951 503M813 450L801 447M828 543L826 546M886 562L884 557M980 539L973 532M903 501L908 506M749 485L731 488M775 513L767 513M882 532L880 528M868 437L855 436M969 570L982 567M901 530L908 528M790 591L807 595M822 447L818 455M914 423L895 426M749 518L732 517M780 548L790 549M831 463L832 468M934 501L926 504M879 545L884 541M831 380L829 398M766 409L787 417M888 584L885 576M669 499L693 500M908 490L915 495M867 557L877 559M902 534L901 530M953 483L954 478M877 480L880 477M767 551L776 552M580 585L604 576M678 489L669 499M960 560L947 557M939 487L950 491M804 521L811 521M819 630L839 630M977 584L985 577M1022 483L1037 487M825 520L832 520M749 518L743 511M789 544L790 549M785 432L763 433M927 482L923 477M705 548L713 556M985 577L993 570M908 506L914 507M909 583L908 590M784 365L758 357M952 518L960 521M702 560L681 560M665 600L662 588M931 535L934 538M837 527L847 529M865 510L858 506M494 577L484 556M600 490L571 478M921 514L926 516M758 357L729 348M759 463L777 461M560 443L527 447M745 653L771 671M876 533L869 535M704 377L660 385M1095 482L1075 482M819 547L826 546M829 426L829 418M948 511L950 507M526 607L545 583M699 482L701 474M720 614L747 628M839 411L846 422M716 453L733 453M406 490L430 502M785 432L795 425M901 509L889 511M768 586L778 595M989 534L997 529M853 470L856 466M828 543L825 540M697 687L706 664M702 560L713 556M855 398L872 407M793 717L820 693M1001 564L989 555M858 601L843 596M909 583L921 592M985 479L982 487M747 566L736 571M441 569L459 586M781 476L790 481M731 525L740 530M790 448L779 439M946 462L952 472M940 492L947 495M570 647L577 628M855 548L852 551M761 707L782 687M888 465L881 463M916 476L920 480M821 564L809 565M837 523L837 527M760 450L742 447M570 647L610 636M910 547L906 545M737 506L746 500M898 475L896 471M970 506L976 510M968 473L961 476M959 549L972 556M840 565L838 561M822 487L819 491M893 438L880 438M807 524L814 525M787 508L795 504M737 608L720 614M686 437L666 422M816 532L810 536M784 503L773 503M757 558L767 551M793 539L783 542M860 481L853 481M973 489L968 485M885 473L884 469M860 540L870 540M851 542L848 546M893 551L898 555M950 491L954 487M884 541L892 544M866 487L861 490M942 588L941 596M717 532L698 538M633 474L623 487M1082 472L1060 463M970 506L963 505M943 415L932 421M906 553L900 552M664 520L664 529M972 448L977 459M782 391L749 379M864 514L865 510M1020 510L1031 503M977 459L963 452M860 540L862 544M827 559L816 556M814 582L819 577M737 506L729 510M731 564L717 574M844 440L859 442M992 471L1002 476M819 491L813 489M856 534L850 538M980 465L969 467M822 570L809 565M737 608L754 616M969 570L963 577M626 364L666 366M872 676L865 656M717 585L733 578M830 472L833 475M923 538L919 535M958 509L956 505M833 459L828 453M805 569L793 573M981 529L997 529M926 504L934 504M862 544L868 544M844 510L851 511M807 505L810 510M973 532L970 528M865 510L872 514M884 541L885 546M926 541L923 538M741 585L717 585M867 557L869 563M993 570L982 567M881 417L866 420M831 568L822 570M864 514L859 519M759 506L756 510M958 509L964 511M822 466L813 466M1065 508L1058 500M756 478L758 483M908 414L895 426M637 504L638 515M940 454L953 449M820 693L838 678M808 491L813 489M961 476L954 478M955 527L954 521M852 387L855 398M827 559L823 553M937 522L942 519M911 551L901 547M880 528L875 526M796 484L785 486M798 548L805 547M887 479L885 473M845 492L855 494M797 530L789 528M798 464L805 467M926 582L934 578M473 493L468 515M908 506L901 509M749 533L746 540M859 474L853 470M965 501L957 500M838 561L847 562M743 511L747 506M932 430L914 423M841 532L847 529M825 460L828 453M840 463L851 460M993 570L1001 564M952 472L943 476M907 627L910 615M1031 503L1014 504M925 467L939 466M924 520L934 518M773 496L781 496M849 490L845 492M849 496L845 492M816 556L816 551M1001 564L1008 557M685 613L718 603M1005 516L996 511M619 528L591 537M666 422L666 409M699 482L682 480M942 588L921 592M556 544L512 547M598 448L560 443M718 477L733 482M698 338L666 328M833 503L840 503M975 477L985 479M906 525L900 523M845 432L860 429M655 435L682 448M765 503L773 503M933 543L924 544M887 554L887 549M837 527L834 531M991 462L980 465M879 555L880 549M740 530L753 524M888 465L899 467M862 618L880 610M804 543L797 544M784 365L773 377M597 510L570 512M860 530L869 531M576 375L594 361M1022 459L1008 467M822 487L826 490M996 511L988 517M961 482L954 487M820 502L823 500M785 486L782 492M793 539L804 543M895 456L909 453M855 548L862 544M443 608L491 598M699 482L695 490M847 465L840 463M830 517L832 520M955 527L947 526M891 536L899 538M844 440L832 446M819 547L829 550M797 544L805 547M981 529L989 534M863 476L872 475M619 541L614 554M872 676L838 678M746 397L724 409M945 516L953 514M834 483L830 477M859 498L863 502M828 496L823 500M739 497L730 501M817 461L808 459M950 608L923 601M723 424L703 426M804 517L796 513M526 607L491 598M832 488L827 483M1047 523L1025 526M976 525L970 528M540 462L560 443M737 608L718 603M1002 455L1022 459M854 503L846 505M980 505L970 506M768 533L777 538M857 573L854 568M804 539L817 540M739 497L753 496M727 542L717 532M880 610L905 607M729 348L736 366M946 499L957 500M959 549L956 554M783 522L776 519M673 538L665 550M503 489L538 512M443 608L475 618M599 387L576 375M927 510L920 509M753 524L758 519M916 476L909 476M877 569L869 563M973 489L961 495M855 563L864 561M895 504L901 506M940 454L928 454M908 506L914 511M767 551L767 559M1047 523L1056 516M794 611L776 615M708 508L706 515M782 687L820 693M946 462L959 465M878 587L869 584M852 387L829 398M795 567L778 566M976 547L967 543M798 501L806 498M889 493L884 495M862 566L855 563M556 360L537 376M911 537L910 532M877 480L872 475M847 482L857 485M903 501L895 501M817 543L811 543M924 528L917 532M964 460L969 467M795 526L789 524M987 523L997 520M876 470L872 475M673 471L654 470M972 556L988 562M847 518L838 518M608 477L623 487M1008 467L1033 465M879 524L875 526M1046 480L1060 488M1074 500L1060 488M790 591L784 581M805 467L809 470M859 519L851 515M1008 482L1015 476M789 490L797 488M741 585L750 576M773 423L750 427M869 554L861 555M873 455L864 457M889 511L888 515M945 516L942 519M552 397L576 375M779 439L785 432M991 502L984 498M685 531L679 523M789 544L798 548M745 653L707 643M869 570L877 569M841 535L834 534M934 518L942 519M790 591L791 600M1003 501L998 506M779 451L783 457M974 521L988 517M635 442L622 426M664 529L679 523M891 536L881 537M784 581L793 573M897 449L885 455M1012 488L1022 493M869 484L860 481M655 482L682 480M859 442L873 447M673 471L679 458M896 495L884 495M821 564L818 560M921 525L927 525M945 553L947 557M960 521L954 521M628 571L643 561M980 539L971 537M795 526L789 528M858 629L842 644M882 532L891 532M913 563L923 570M778 558L792 559M806 477L811 480M864 457L862 461M920 490L920 483M768 586L755 583M719 523L717 532M853 530L860 530M859 519L847 518M898 480L893 476M701 456L679 458M796 471L785 467M831 463L825 460M891 536L891 532M879 524L883 521M743 524L740 530M929 626L926 612M786 408L804 408M1027 473L1015 476M911 537L902 534M977 426L960 421M863 494L869 492M849 490L845 486M773 423L763 433M741 585L733 578M765 503L755 502M544 561L512 547M864 514L872 514M811 517L822 515M619 541L650 543M937 552L932 548M634 318L593 327M1005 516L1007 509M540 481L503 489M865 506L863 502M859 498L849 496M911 519L906 516M908 541L899 543M752 455L733 453M838 561L848 557M637 504L616 516M802 483L810 484M906 516L900 517M752 455L742 447M829 426L846 422M720 614L685 613M885 618L910 615M941 482L934 481M538 432L546 414M579 428L577 409M387 506L430 502M686 437L703 426M923 462L928 454M909 583L926 582M990 540L976 547M875 466L871 461M775 513L785 514M826 512L829 509M795 567L793 573M831 568L821 564M737 537L727 542M928 560L925 565M893 551L900 552M773 423L795 425M927 510L920 506M849 523L843 526M1063 474L1044 472M975 477L981 471M1008 557L989 555M597 510L577 497M997 529L997 520M937 561L928 560M749 485L758 483M862 618L876 627M1047 493L1060 488M869 499L869 492M741 560L747 566M883 521L878 518M897 527L908 528M1047 523L1025 517M793 717L782 687M987 523L974 521M960 599L954 593M865 466L862 461M894 564L886 562M846 469L841 471M749 485L752 490M545 583L570 605M989 534L973 532M731 525L717 532M897 485L897 491M693 508L708 508M857 573L855 578M804 517L812 514M770 446L758 442M614 410L577 409M703 426L666 422M767 508L773 503M805 569L809 565M927 510L926 516M934 469L925 467M881 513L872 514M828 496L831 500M792 475L781 476M894 592L888 584M790 448L801 447M841 450L828 453M809 470L817 471M822 474L825 469M805 535L804 539M845 432L829 426M968 473L969 467M790 591L768 586M946 580L963 577M879 564L886 562M937 561L931 556M944 541L942 545M571 478L540 481M902 494L897 491M904 520L900 517M878 587L868 590M915 527L912 524M443 608L427 584M852 387L831 380M537 376L576 375M865 506L865 510M623 487L614 499M755 537L756 541M581 462L571 478M739 497L723 496M681 560L696 568M811 517L812 514M893 438L893 444M795 526L800 524M693 508L693 500M570 512L538 512M924 549L921 553M842 498L840 503M889 528L897 527M940 510L943 513M813 450L818 455M843 526L842 521M921 558L921 553M716 438L723 424M888 661L865 656M866 471L859 470M960 421L972 434M869 492L875 491M988 562L982 567M841 535L832 539M782 573L770 580M943 476L943 471M842 644L839 630M805 453L808 459M952 472L943 471M847 465L856 466M619 528L598 523M897 491L889 493M873 455L871 461M836 510L840 507M965 501L963 505M917 439L908 434M1002 476L1008 467M847 518L855 522M937 561L933 569M831 574L844 571M768 533L781 531M759 463L766 472M901 547L910 547M816 532L816 528M599 387L577 409M918 456L907 458M902 534L910 532M960 515L970 515M868 437L880 438M897 449L893 444M841 620L839 630M897 527L900 523M870 540L869 535M494 577L545 583M837 480L830 477M933 569L934 578M981 529L973 532M591 537L598 523M953 567L968 564M885 602L872 604M912 447L919 451M948 511L953 514M947 495L954 496M909 453L919 451M805 569L798 578M944 541L945 534M918 522L912 524M991 462L977 459M818 520L811 517M807 524L804 521M882 532L891 536M976 500L971 495M776 552L768 546M933 543L940 549M996 486L989 491M904 484L898 480M929 486L920 483M810 559L803 557M768 524L776 524M972 556L967 547M921 592L908 590M727 542L736 547M908 490L901 488M814 572L798 578M719 502L729 510M832 539L828 543M704 377L666 366M869 499L863 502M838 561L831 562M879 545L885 546M756 510L767 508M758 357L736 366M837 553L832 556M993 570L988 562M608 477L625 462M967 543L960 540M937 522L930 522M693 508L691 516M981 529L987 523M977 584L963 577M798 480L806 477M860 540L861 536M832 520L838 518M894 592L899 586M908 506L906 512M970 506L964 511M836 510L837 515M854 555L848 557M507 627L550 619M948 511L943 513M552 397L577 409M781 535L777 538M718 477L720 484M818 455L828 453M890 459L885 455M859 498L855 494M934 469L927 471M599 387L552 397M854 526L861 524M743 524L753 524M849 523L842 521M840 507L844 510M862 618L858 629M756 541L769 538M758 357L773 377M814 582L798 578M916 476L923 477M687 542L682 550M793 539L790 536M810 495L806 498M897 580L888 584M817 591L826 602M817 543L811 547M929 495L926 492M795 567L792 559M728 557L747 553M550 619L570 605M802 493L797 488M778 482L790 481M896 495L904 497M879 524L880 528M720 515L729 510M778 566L760 564M972 556L989 555M934 459L939 466M915 527L910 532M789 501L784 503M789 544L797 544M858 506L858 510M914 511L916 516M664 568L680 576M847 465L839 467M861 536L850 538M747 463L724 460M823 553L829 550M798 480L790 481M1002 476L1008 482M884 541L876 540M731 525L728 532M503 489L475 475M742 447L758 442M794 611L792 621M820 438L810 443M810 502L814 505M834 534L832 539M773 377L736 366M760 564L767 559M810 443L801 447M887 554L898 555M781 531L783 526M914 483L920 483M960 599L969 592M822 466L832 468M847 472L846 469M761 490L771 491M877 579L878 587M916 476L919 472M721 395L688 398M943 476L936 473M914 543L910 547M827 559L838 561M702 560L705 548M985 479L981 471M969 592L977 584M955 527L948 530M959 535L971 537M678 489L682 480M962 526L967 523M860 530L854 526M747 436L730 432M809 532L805 528M907 458L897 462M809 373L784 365M896 471L893 476M836 510L833 503M684 586L704 596M920 506L914 507M869 518L864 514M981 471L969 467M612 348L594 361M773 467L777 461M937 561L941 566M887 554L893 551M782 492L771 491M773 423L787 417M959 440L946 435M1084 491L1060 488M794 508L802 509M732 517L743 524M825 520L818 520M867 579L858 585M853 530L856 534M962 526L970 528M771 573L770 580M928 454L919 451M915 495L904 497M1048 448L1043 459M927 482L920 483M908 570L906 563M792 493L794 498M773 542L756 541M805 453L790 448M875 466L884 469M598 523L616 516M685 531L698 538M822 409L810 417M638 515L642 532M1029 442L1011 447M888 465L890 459M844 552L843 549M976 547L972 556M860 530L868 528M808 436L810 443M759 463L756 473M885 432L895 426M614 499L616 516M817 471L825 469M712 542L718 549M807 524L800 524M853 558L855 563M911 551L915 554M965 518L960 521M789 501L778 499M989 555L987 548M818 482L811 480M841 620L822 619M796 471L809 470M853 470L850 476M820 496L823 500M839 610L826 602M852 507L844 510M881 417L877 425M985 449L1011 447M854 555L861 555M789 490L792 493M972 448L953 449M747 506L756 510M954 521L947 526M634 667L671 653M897 580L899 586M839 546L836 542M316 568L348 578M858 506L863 502M832 446L828 453M699 629L662 620M916 516L906 516M600 490L614 499M834 534L825 532M550 496L570 512M945 522L942 519M823 480L827 483M773 542L780 548M926 541L933 543M749 485L743 475M1016 551L1023 544M934 518L930 522M957 491L954 496M826 512L822 515M899 467L907 468M861 536L863 533M1023 544L1031 537M940 617L926 612M634 318L612 311M937 561L947 562M749 485L743 493M494 577L491 598M784 581L798 578M583 553L581 567M612 311L593 327M827 559L832 556M723 424L730 432M600 490L623 487M931 535L938 536M910 498L911 503M773 496L782 492M860 530L861 524M859 474L863 476M577 409L546 414M840 507L846 505M939 487L946 485M976 510L970 515M443 608L459 586M735 669L750 684M994 431L972 434M913 563L925 565M717 574L717 585M844 576L840 582M897 485L889 482M896 514L891 518M867 523L873 522M904 472L911 472M664 520L679 523M879 499L882 504M941 482L943 476M626 364L612 348M730 501L746 500M852 507L851 511M884 567L897 567M898 480L909 480M940 454L943 444M702 560L717 564M884 541L890 540M985 577L982 567M861 536L856 534M858 601L872 604M869 484L877 480M818 482L827 483M969 592L954 593M765 503L767 508M853 558L847 562M500 409L538 432M761 526L758 519M754 616L747 628M934 501L925 500M985 577L969 570M810 417L804 408M843 549L835 550M819 547L816 551M717 532L712 542M932 548L924 544M893 524L900 523M766 472L768 479M818 520L822 515M509 526L556 544M844 440L841 450M819 491L808 491M853 481L857 485M804 517L804 521M780 548L768 546M869 570L867 579M828 496L826 490M974 482L961 482M977 584L960 585M854 503L852 499M806 498L798 495M638 515L654 508M770 631L747 628M842 589L858 585M872 547L868 544M839 411L829 418M872 514L878 518M916 637L891 637M890 507L882 504M685 531L664 529M851 511L851 515M881 417L908 414M827 506L820 502M915 495L910 498M911 551L910 547M844 552L854 555M904 443L897 449M868 437L877 425M888 515L891 518M800 524L792 521M798 480L802 483M720 515L719 523M1008 522L1025 526M934 459L946 462M879 564L869 563M917 439L912 447M831 574L830 579M945 516L933 515M908 414L891 410M808 436L795 442M837 515L838 518M880 610L858 609M869 554L867 557M917 532L910 532M819 547L811 547M794 611L812 605M637 551L619 541M934 518L933 515M723 424L743 417M773 496L761 490M814 582L802 589M473 493L443 487M749 518L756 515M538 637L577 628M965 501L971 495M1022 459L1011 447M923 462L925 467M789 524L789 528M867 642L865 656M794 508L785 510M938 536L937 541M897 491L901 488M863 494L861 490M841 471L833 475M917 532L923 532M939 487L929 486M883 521L886 524M937 522L934 518M897 580L885 576M810 644L835 662M953 514L958 509M906 525L912 524M754 616L770 631M697 687L735 669M879 473L884 469M808 436L820 438M331 555L367 561M920 490L929 486M751 592L755 583M844 576L831 574M870 540L868 544M901 530L910 532M732 638L745 653M518 392L546 414M698 338L686 354M380 588L411 598M945 553L940 549M700 446L724 445M638 515L619 528M839 546L832 547M720 484L717 491M628 571L614 554M931 507L940 510M841 620L862 618M550 496L577 497M411 598L443 608M509 526L468 515M931 507L926 504M1031 537L1039 530M825 520L821 524M798 501L810 502M597 510L614 499M890 459L881 463M985 577L963 577M1039 530L1047 523M593 327L575 344M844 513L851 515M817 543L826 546M964 511L970 515M614 410L599 387M876 470L879 473M441 569L427 584M859 474L850 476M860 481L863 476M921 592L926 582M896 520L893 524M899 538L890 540M781 508L787 508M580 585L545 583M575 344L556 360M647 493L654 508M756 541L768 546M635 442L625 462M826 512L819 509M840 503L834 498M778 558L785 563M1012 488L1022 483M892 544L890 540M459 586L491 598M1008 522L997 529M914 511L920 509M956 505L950 507M921 558L928 560M679 458L682 448M887 479L880 477M681 560L664 568M591 537L562 530M950 491L946 485M773 467L759 463M747 566L759 570M888 487L883 490M776 519L782 518M680 576L662 588M737 506L730 501M872 547L880 549M890 507L901 509M538 512L497 505M904 443L893 444M898 475L898 480M879 555L874 551M673 538L682 550M976 500L984 498M1022 483L1022 493M802 493L803 489M979 494L989 491M859 519L855 522M672 511L679 523M628 334L649 350M839 476L833 475M831 528L834 531M851 454L841 457M720 484L733 482M776 615L770 631M872 393L855 398M749 379L736 366M839 476L846 478M798 501L798 495M905 607L923 601M859 498L852 499M797 552L809 554M737 506L743 511M897 580L909 577M425 474L443 487M894 564L906 563M724 409L688 398M855 578L858 585M1088 461L1082 472M809 470L812 475M798 578L793 573M869 570L869 563M810 502L806 498M866 420L846 422M778 558L776 552M941 497L947 495M885 576L875 574M638 605L662 620M888 584L899 586M921 558L931 556M979 514L974 521M800 532L791 532M783 457L792 459M851 460L862 461M915 559L925 565M766 409L743 417M783 542L777 538M879 499L876 505M797 552L805 547M792 459L785 467M842 541L832 539M635 621L605 611M810 559L809 565M967 523L970 528M602 657L634 667M793 636L800 655M897 485L888 487M802 493L792 493M853 558L848 557M817 543L825 540M749 379L773 377M858 629L867 642M678 489L693 500M848 546L852 551M756 541L747 546M1095 482L1107 471M810 550L797 552M717 574L733 578M883 490L875 491M893 524L897 527M923 462L934 459M965 518L974 521M1020 510L1014 504M747 553L758 547M965 531L962 526M869 518L859 519M913 563L906 563M398 549L399 572M694 465L701 456M462 441L444 457M950 608L941 596M894 592L876 596M939 532L938 536M822 466L825 460M666 422L655 435M904 520L900 523M784 581L802 589M909 583L897 580M1008 522L1025 517M820 496L810 495M924 520L930 522M911 519L904 520M849 523L847 518M891 637L867 642M844 576L855 578M614 410L579 428M819 577L824 585M790 549L798 548M959 440L983 441M939 526L947 526M985 449L977 459M980 505L986 509M877 480L868 479M879 545L876 540M811 517L811 521M953 567L960 560M830 477L833 475M634 667L636 649M879 473L885 473M855 489L861 490M807 505L802 509M728 557L717 564M920 483L912 486M926 612L905 607M889 493L883 490M747 463L735 467M732 596L718 603M687 542L685 531M904 484L912 486M992 471L1008 467M666 409L627 395M980 505L976 510M794 611L822 619M759 506L747 506M664 568L665 550M883 521L893 524M908 570L897 567M720 614L699 629M836 510L844 513M858 601L858 609M820 496L828 496M932 440L943 444M610 636L577 628M766 486L761 490M719 523L705 524M716 438L700 446M929 626L907 627M897 485L898 480M915 495L926 492M778 566L771 573M1031 537L1015 539M832 441L832 446M1022 483L1015 476M825 460L818 455M874 551L865 547M934 578L940 573M862 544L855 545M965 531L955 527M943 444L930 446M867 523L861 524M810 417L829 418M881 513L888 515M605 611L570 605M800 655L771 671M830 517L838 518M789 544L780 548M684 586L680 576M983 441L972 434M614 410L622 426M475 618L507 627M790 448L770 446M869 484L878 485M827 483L830 477M717 532L703 531M934 538L923 538M776 528L781 531M1012 488L1008 482M932 548L940 549M957 500L951 503M770 631L793 636M771 573L759 570M503 489L493 462M739 497L731 488M837 523L842 521M974 521L967 523M932 440L932 430M915 559L905 558M755 537L769 538M718 467L735 467M822 487L813 489M970 506L976 500M819 630L793 636M731 475L718 477M899 538L908 541M853 558L861 555M944 504L950 507M858 585L869 584M1063 474L1082 472M865 547L868 544M968 564L982 567M885 576L900 574M792 475L802 474M673 471L701 474M883 509L889 511M481 425L538 432M946 580L934 578M766 486L758 483M879 499L870 503M809 532L810 536M1027 473L1044 472M786 552L790 549M717 574L696 568M686 354L666 366M800 524L797 530M915 559L915 554M766 409L782 391M610 636L636 649M809 470L802 474M793 636L810 644M842 498L840 494M830 523L832 520M459 586L427 584M823 553L816 551M933 569L925 565M908 598L923 601M954 544L967 547M759 463L752 455M795 567L785 563M695 490L682 480M807 595L812 605M755 502L746 500M908 490L920 490M665 677L697 687M481 425L499 439M903 648L867 642M916 516L918 522M834 534L841 532M888 500L895 501M849 490L855 494M849 496L855 494M880 528L886 524M972 556L956 554M614 410L641 414M749 379L704 377M1002 476L1015 476M1111 468L1088 461M779 451L760 450M664 520L654 508M958 509L950 507M562 530L598 523M748 600L751 592M840 503L846 501M858 551L852 551M760 450L752 455M941 596L954 593M846 422L829 418M946 485L954 487M820 502L810 502M764 597L748 600M1047 493L1045 504M853 481L846 478M831 380L804 392M1015 498L1006 493M499 439L493 462M839 546L848 546M350 539L398 549M837 553L829 550M869 518L867 523M885 432L877 425M876 470L866 471M917 532L915 527M705 548L682 550M863 450L851 446M927 482L929 486M778 558L778 566M839 610L858 609M608 477L600 490M862 566L864 561M877 480L878 485M968 485L961 482M758 530L768 533M848 546L855 545M946 462L954 457M787 497L792 493M888 500L882 504M893 524L891 518M901 547L906 545M1022 459L1043 459M832 547L828 543M637 551L643 561M960 585L942 588M915 559L906 563M881 513L875 511M649 634L676 639M784 581L782 573M614 593L570 605M814 572L819 577M908 570L900 574M855 548L865 547M851 454L841 450M369 522L413 519M957 491L954 487M804 517L811 517M1005 516L997 520M638 605L635 621M969 570L951 573M869 518L872 514M888 465L884 469M747 463L759 463M855 548L848 546M854 555L852 551M841 450L832 446M839 411L855 398M702 560L682 550M665 550L643 561M778 558L767 559M877 569L884 567M854 568L846 567M953 533L945 534M494 577L459 586M666 328L686 354M834 483L827 483M974 482L975 477M829 426L828 433M475 618L526 607M992 471L981 471M832 547L826 546M556 360L576 375M626 364L599 387M894 564L899 560M820 496L826 490M810 559L818 560M888 504L895 501M499 439L527 447M894 592L908 590M664 568L644 582M642 532L619 541M627 395L641 414M858 629L839 630M899 467L904 472M462 441L493 462M858 609L872 604M839 610L841 620M865 466L856 466M964 460L977 459M972 556L968 564M795 567L782 573M973 489L971 495M808 459L792 459M1033 465L1044 472M876 470L865 466M441 569L399 572M923 532L919 535M1027 473L1033 465M853 530L847 529M444 457L493 462M827 559L821 564M979 514L986 509M1007 509L998 506M934 518L945 516M887 549L885 546M829 594L840 603M859 519L861 524M876 596L872 604M766 518L756 515M562 530L538 512M1068 454L1043 459M889 571L897 567M779 439L795 442M873 508L876 505M721 395L749 379M747 553L741 560M837 491L840 494M858 585L868 590M895 456L885 455M888 504L882 504M889 571L875 574M713 556L717 564M550 619L577 628M743 511L756 515M850 476L846 478M810 510L819 509M785 472L766 472M963 505L957 500M785 514L788 517M928 553L937 552M869 484L857 485M773 542L769 538M879 524L886 524M781 508L773 503M705 548L718 549M877 579L869 584M716 438L686 437M818 512L819 509M959 549L954 544M775 513L782 518M792 475L785 472M814 525L811 521M773 496L771 491M946 499L947 495M843 549L852 551M766 518L772 516M832 539L836 542M916 466L911 472M874 551L869 554M767 646L745 653M749 533L755 537M816 485L813 489M964 511L976 510M819 509L814 505M1031 537L1025 526M794 611L774 605M732 638L699 629M895 426L877 425M830 472L841 471M894 564L897 567M918 456L909 453M839 476L847 472M724 460L718 467M732 638L707 643M851 454L851 446M494 577L544 561M876 533L881 537M914 543L906 545M842 541L851 542M1056 516L1045 504M869 492L874 488M926 541L934 538M821 537L827 535M896 514L888 515M867 523L875 526M931 507L942 507M916 637L907 627M737 537L740 530M783 542L789 544M1008 557L1016 551M839 411L829 398M887 549L893 551M728 557L741 560M885 432L893 438M757 558L747 553M398 549L395 532M840 565L831 562M908 598L905 607M767 646L800 655M767 508L774 509M879 564L877 569M666 328L634 318M600 490L577 497M969 570L968 564M881 417L872 407M808 491L810 495M842 498L846 501M906 525L915 527M804 539L811 543M820 502L814 505M854 526L855 522M987 548L1000 551M822 447L810 443M946 462L940 454M841 535L849 533M996 511L997 520M976 525L967 523M946 499L944 504M796 513L785 514M369 522L395 532M856 466L846 469M708 497L695 490M750 576L733 578M901 509L906 512M855 494L861 490M902 494L904 497M581 462L560 443M825 520L830 517M921 525L924 528M800 532L797 536M818 477L818 482M868 437L873 447M783 526L776 524M778 482L768 479M745 653L735 669M853 470L846 469M735 467L748 469M771 671L750 684M908 434L885 432M731 488L720 484M642 532L619 528M901 547L900 552M842 541L836 542M863 450L873 455M475 618L491 598M754 616L720 614M914 543L916 540M642 532L664 529M942 588L934 578M859 474L866 471M916 540L919 535M832 488L834 483M664 451L655 435M614 554L581 567M731 564L717 564M953 449L963 452M792 493L798 495M939 526L948 530M830 472L822 474M882 532L874 529M777 461L785 467M720 515L732 517M895 456L897 462M1016 551L1003 543M874 551L865 551M920 576L908 570M619 528L619 541M841 556L848 557M805 535L800 532M790 591L778 595M869 499L859 498M839 610L812 605M818 520L811 521M1056 516L1065 508M778 499L781 496M807 595L817 591M644 582L680 576M856 466L859 470M699 482L717 491M1003 501L1015 498M537 376L518 392M876 596L868 590M863 450L851 454M811 429L795 425M821 537L825 540M591 537L619 541M923 570L925 565M909 577L900 574M717 574L736 571M919 472L923 477M841 535L850 538M1045 504L1031 503M753 496L752 490M914 483L909 480M484 556L441 569M873 508L870 503M996 495L989 491M728 557L713 556M694 465L679 458M889 571L900 574M830 523L831 528M1084 491L1075 482M804 543L805 547M950 507L942 507M762 499L761 490M841 556L837 553M862 566L869 563M847 465L851 460M699 629L723 627M774 605L748 600M1047 493L1031 503M956 505L957 500M861 524L855 522M767 646L771 671M818 477L812 475M946 435L947 426M810 484L811 480M581 462L540 462M869 535L876 540M717 491L723 496M944 541L937 541M874 529L875 526M768 524L776 528M979 494L971 495M805 467L808 459M749 533L740 530M890 469L884 469M1020 510L1037 513M798 495L794 498M908 434L893 438M909 583L920 576M894 564L891 558M399 572L367 561M889 528L886 524M824 585L817 591M723 424L703 415M887 479L882 482M806 477L802 483M904 484L909 480M1002 455L991 462M825 460L833 459M776 615L754 616M695 490L693 500M916 516L926 516M898 475L893 476M796 513L802 513M766 518L768 524M766 472L756 473M731 525L719 523M931 529L939 532M877 559L869 563M1002 455L1008 467M793 539L804 539M398 549L440 552M906 512L906 516M899 538L899 543M942 545L951 541M816 485L818 482M682 480L701 474M824 528L825 532M348 578L380 588M968 564L988 562M892 544L899 543M766 486L771 491M953 567L951 573M847 482L841 484M746 540L747 546M731 564L747 566M597 510L616 516M503 489L497 505M813 466L809 470M380 588L427 584M952 518L942 519M850 476L853 481M773 423L766 409M926 612L910 615M1011 437L983 441M809 532L816 528M989 555L1000 551M837 527L843 526M836 510L844 510M952 518L954 521M810 510L814 505M705 524L703 531M849 496L852 499M746 540L755 537M766 409L746 397M665 600L662 620M430 535L413 519M1020 510L1007 509M864 457L851 460M931 535L919 535M906 525L897 527M860 540L868 544M928 553L921 553M853 530L849 533M776 552L767 559M789 490L785 486M820 502L831 500M737 608L748 600M841 620L858 629M822 447L820 438M862 566L854 568M780 548L776 552M735 669L706 664M804 543L811 543M927 471L936 473M782 518L772 516M698 538L712 542M776 519L776 524M842 644L865 656M579 428L560 443M802 483L811 480M897 462L890 459M803 489L802 483M867 579L855 578M929 486L934 481M941 566L940 573M844 440L855 436M887 479L889 482M727 542L728 532M718 477L699 482M581 567L604 576M999 536L1016 530M968 473L952 472M854 568L855 563M805 528L816 528M856 534L863 533M743 475L735 467M817 543L819 547M853 558L864 561M538 637L570 647" stroke="#000" stroke-width="1" fill="none" shape-rendering="crispEdges"/>
<path d="M316.0,568.0 L612.0,311.0 L1111.0,468.0 L1110.0,747.0 L812.0,1006.0 L313.0,850.0 Z" fill="none" stroke="#000" stroke-width="1"/>
</svg>
</body></html>
